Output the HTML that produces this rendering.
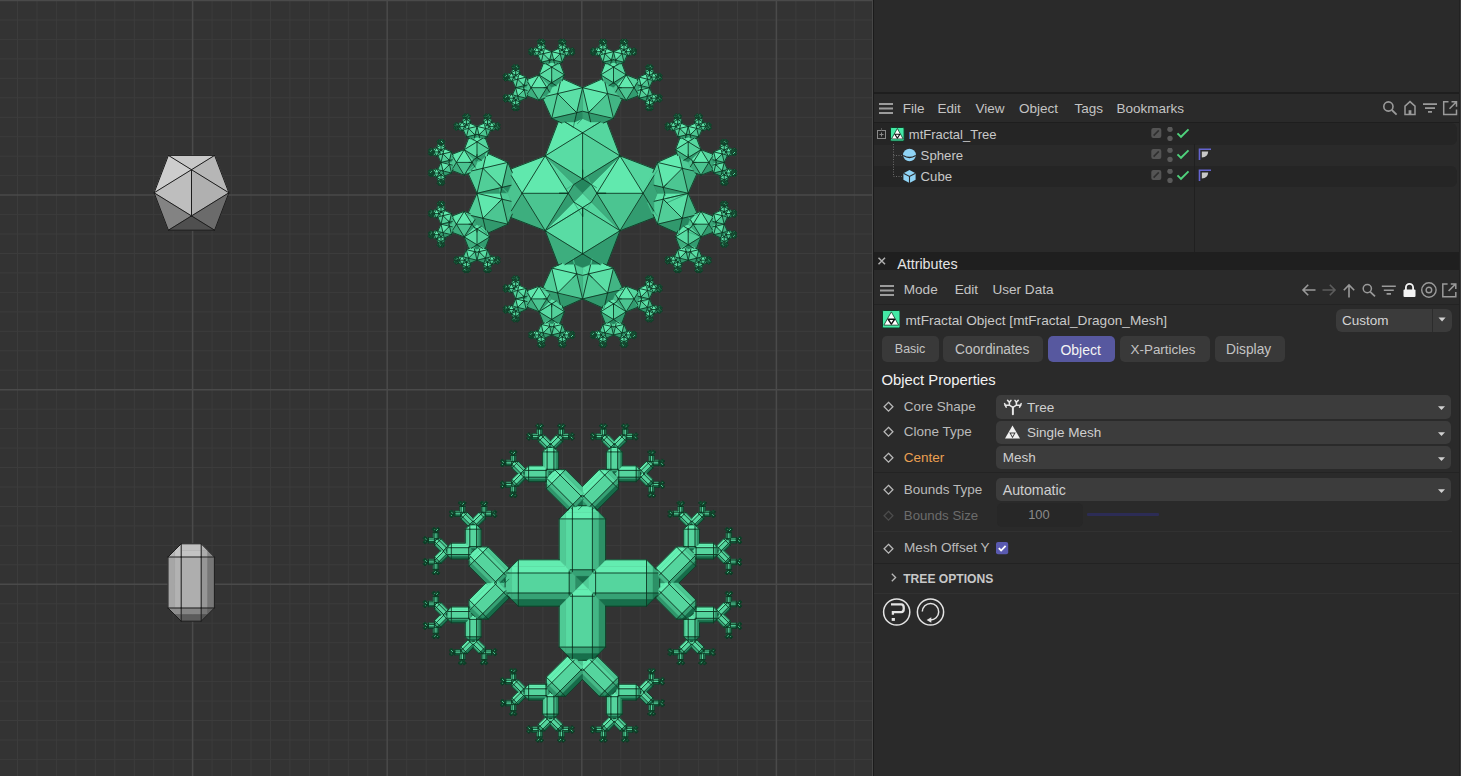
<!DOCTYPE html>
<html><head><meta charset="utf-8"><style>html,body{margin:0;padding:0;width:1461px;height:776px;overflow:hidden;background:#2a2a2a;font-family:"Liberation Sans",sans-serif;}
#vp{position:absolute;left:0;top:0;width:872px;height:776px;overflow:hidden;}
.t{position:absolute;white-space:nowrap;line-height:1;}
.r{position:absolute;display:block;}
</style></head>
<body><div id="vp"><svg width="873" height="776" viewBox="0 0 873 776" style="position:absolute;left:0;top:0"><rect width="873" height="776" fill="#333333"/><path d="M17.5 0V776M37 0V776M56.4 0V776M75.9 0V776M95.3 0V776M114.8 0V776M134.3 0V776M153.7 0V776M173.2 0V776M212.1 0V776M231.6 0V776M251 0V776M270.5 0V776M289.9 0V776M309.4 0V776M328.9 0V776M348.3 0V776M367.8 0V776M406.7 0V776M426.2 0V776M445.6 0V776M465.1 0V776M484.5 0V776M504 0V776M523.5 0V776M542.9 0V776M562.4 0V776M601.3 0V776M620.8 0V776M640.2 0V776M659.7 0V776M679.1 0V776M698.6 0V776M718.1 0V776M737.5 0V776M757 0V776M795.9 0V776M815.4 0V776M834.8 0V776M854.3 0V776M0 20H873M0 39.4H873M0 58.9H873M0 78.3H873M0 97.8H873M0 117.3H873M0 136.7H873M0 156.2H873M0 175.6H873M0 214.6H873M0 234H873M0 253.5H873M0 272.9H873M0 292.4H873M0 311.9H873M0 331.3H873M0 350.8H873M0 370.2H873M0 409.2H873M0 428.6H873M0 448.1H873M0 467.5H873M0 487H873M0 506.5H873M0 525.9H873M0 545.4H873M0 564.8H873M0 603.8H873M0 623.2H873M0 642.7H873M0 662.1H873M0 681.6H873M0 701.1H873M0 720.5H873M0 740H873M0 759.4H873" stroke="#3c3c3c" stroke-width="1"/><path d="M192.6 0V776M387.2 0V776M581.8 0V776M776.4 0V776M0 0.5H873M0 195.1H873M0 389.7H873M0 584.3H873" stroke="#4a4a4a" stroke-width="1.5"/><path fill="#c8c8c8" stroke="#c8c8c8" stroke-width="0.5" d="M191.5 169.7 168.4 155.4 214.6 155.4z"/><path fill="#cdcdcd" stroke="#cdcdcd" stroke-width="0.5" d="M191.5 169.7 168.4 155.4 154.1 192.8z"/><path fill="#b6b6b6" stroke="#b6b6b6" stroke-width="0.5" d="M191.5 169.7 214.6 155.4 228.9 192.8z"/><path fill="#bebebe" stroke="#bebebe" stroke-width="0.5" d="M191.5 169.7 154.1 192.8 191.5 215.9z"/><path fill="#b0b0b0" stroke="#b0b0b0" stroke-width="0.5" d="M191.5 169.7 228.9 192.8 191.5 215.9z"/><path fill="#838383" stroke="#838383" stroke-width="0.5" d="M191.5 215.9 154.1 192.8 168.4 230.2z"/><path fill="#6b6b6b" stroke="#6b6b6b" stroke-width="0.5" d="M191.5 215.9 228.9 192.8 214.6 230.2z"/><path fill="#4f4f4f" stroke="#4f4f4f" stroke-width="0.5" d="M191.5 215.9 168.4 230.2 214.6 230.2z"/><path fill="none" stroke="#1c1c1c" stroke-width="1" stroke-linecap="round" d="M168.4 230.2L214.6 230.2M168.4 230.2L191.5 215.9M168.4 230.2L154.1 192.8M214.6 230.2L191.5 215.9M214.6 230.2L228.9 192.8M191.5 215.9L191.5 169.7M191.5 215.9L154.1 192.8M191.5 215.9L228.9 192.8M191.5 169.7L154.1 192.8M191.5 169.7L228.9 192.8M191.5 169.7L168.4 155.4M191.5 169.7L214.6 155.4M154.1 192.8L168.4 155.4M228.9 192.8L214.6 155.4M168.4 155.4L214.6 155.4"/><path fill="#a6a6a6" stroke="#a6a6a6" stroke-width="0.5" d="M168 557 174.6 557 174.6 608 168 608z"/><path fill="#b2b2b2" stroke="#b2b2b2" stroke-width="0.5" d="M174.6 557 181.2 557 181.2 608 174.6 608z"/><path fill="#c0c0c0" stroke="#c0c0c0" stroke-width="0.5" d="M181.2 543.8 201.2 543.8 201.2 550.4 181.2 550.4z"/><path fill="#c3c3c3" stroke="#c3c3c3" stroke-width="0.5" d="M181.2 550.4 201.2 550.4 201.2 557 181.2 557z"/><path fill="#aeaeae" stroke="#aeaeae" stroke-width="0.5" d="M181.2 557 201.2 557 201.2 608 181.2 608z"/><path fill="#858585" stroke="#858585" stroke-width="0.5" d="M181.2 608 201.2 608 201.2 614.6 181.2 614.6z"/><path fill="#5c5c5c" stroke="#5c5c5c" stroke-width="0.5" d="M181.2 614.6 201.2 614.6 201.2 621.2 181.2 621.2z"/><path fill="#969696" stroke="#969696" stroke-width="0.5" d="M201.2 557 207.8 557 207.8 608 201.2 608z"/><path fill="#777777" stroke="#777777" stroke-width="0.5" d="M207.8 557 214.4 557 214.4 608 207.8 608z"/><path fill="#c5c5c5" stroke="#c5c5c5" stroke-width="0.5" d="M181.2 557 174.6 557 181.2 550.4zM181.2 550.4 174.6 550.4 181.2 543.8zM174.6 557 174.6 550.4 181.2 550.4z"/><path fill="#b6b6b6" stroke="#b6b6b6" stroke-width="0.5" d="M174.6 557 168 557 174.6 550.4z"/><path fill="#acacac" stroke="#acacac" stroke-width="0.5" d="M201.2 557 207.8 557 201.2 550.4zM207.8 557 207.8 550.4 201.2 550.4z"/><path fill="#898989" stroke="#898989" stroke-width="0.5" d="M207.8 557 214.4 557 207.8 550.4z"/><path fill="#b3b3b3" stroke="#b3b3b3" stroke-width="0.5" d="M201.2 550.4 207.8 550.4 201.2 543.8z"/><path fill="#8f8f8f" stroke="#8f8f8f" stroke-width="0.5" d="M181.2 608 174.6 608 181.2 614.6zM174.6 608 168 608 174.6 614.6zM174.6 608 174.6 614.6 181.2 614.6z"/><path fill="#666666" stroke="#666666" stroke-width="0.5" d="M181.2 614.6 174.6 614.6 181.2 621.2z"/><path fill="#757575" stroke="#757575" stroke-width="0.5" d="M201.2 608 207.8 608 201.2 614.6zM207.8 608 207.8 614.6 201.2 614.6z"/><path fill="#636363" stroke="#636363" stroke-width="0.5" d="M207.8 608 214.4 608 207.8 614.6z"/><path fill="#545454" stroke="#545454" stroke-width="0.5" d="M201.2 614.6 207.8 614.6 201.2 621.2z"/><path fill="none" stroke="#1c1c1c" stroke-width="1" stroke-linecap="round" d="M181.2 557L201.2 557M201.2 557L201.2 608M201.2 608L181.2 608M181.2 608L181.2 557M168 557L181.2 557M201.2 557L214.4 557M168 608L181.2 608M201.2 608L214.4 608M181.2 543.8L181.2 557M201.2 543.8L201.2 557M181.2 621.2L181.2 608M201.2 621.2L201.2 608M168 557L168 608M214.4 557L214.4 608M181.2 543.8L201.2 543.8M181.2 621.2L201.2 621.2M168 557L181.2 543.8M201.2 543.8L214.4 557M168 608L181.2 621.2M201.2 621.2L214.4 608"/><defs><g id="ig0" stroke="#0f3a25" stroke-linejoin="round"><path d="M0 -1 -1 -1.618 1 -1.618z" fill="#5ee4aa"/><path d="M0 -1 -1 -1.618 -1.618 0z" fill="#60e8ad"/><path d="M0 -1 1 -1.618 1.618 0z" fill="#55d69f"/><path d="M0 -1 -1.618 0 0 1z" fill="#59dca4"/><path d="M0 -1 1.618 0 0 1z" fill="#53d19b"/><path d="M0 1 -1.618 0 -1 1.618z" fill="#3dae7e"/><path d="M0 1 1.618 0 1 1.618z" fill="#329c70"/><path d="M0 1 -1 1.618 1 1.618z" fill="#25865e"/></g><g id="bg0" stroke="#0f3a25" stroke-linejoin="round"><path d="M-1 -1.097 -0.716 -1.097 -0.716 1.097 -1 1.097z" fill="#4fca95"/><path d="M-0.716 -1.097 -0.431 -1.097 -0.431 1.097 -0.716 1.097z" fill="#58daa2"/><path d="M-0.431 -1.666 0.431 -1.666 0.431 -1.381 -0.431 -1.381z" fill="#63ecb0"/><path d="M-0.431 -1.381 0.431 -1.381 0.431 -1.097 -0.431 -1.097z" fill="#64eeb2"/><path d="M-0.431 -1.097 0.431 -1.097 0.431 1.097 -0.431 1.097z" fill="#55d59e"/><path d="M-0.431 1.097 0.431 1.097 0.431 1.381 -0.431 1.381z" fill="#36a275"/><path d="M-0.431 1.381 0.431 1.381 0.431 1.666 -0.431 1.666z" fill="#176f4b"/><path d="M0.431 -1.097 0.716 -1.097 0.716 1.097 0.431 1.097z" fill="#43b685"/><path d="M0.716 -1.097 1 -1.097 1 1.097 0.716 1.097z" fill="#2c9066"/><path d="M-0.431 -1.097 -0.716 -1.097 -0.431 -1.381z" fill="#66f2b5"/><path d="M-0.716 -1.097 -1 -1.097 -0.716 -1.381z" fill="#5bdea5"/><path d="M-0.431 -1.381 -0.716 -1.381 -0.431 -1.666z" fill="#66f1b5"/><path d="M-0.716 -1.097 -0.716 -1.381 -0.431 -1.381z" fill="#66f2b5"/><path d="M0.431 -1.097 0.716 -1.097 0.431 -1.381z" fill="#53d29b"/><path d="M0.716 -1.097 1 -1.097 0.716 -1.381z" fill="#39a779"/><path d="M0.431 -1.381 0.716 -1.381 0.431 -1.666z" fill="#58dba2"/><path d="M0.716 -1.097 0.716 -1.381 0.431 -1.381z" fill="#53d29b"/><path d="M-0.431 1.097 -0.716 1.097 -0.431 1.381z" fill="#3dae7e"/><path d="M-0.716 1.097 -1 1.097 -0.716 1.381z" fill="#3eae7f"/><path d="M-0.431 1.381 -0.716 1.381 -0.431 1.666z" fill="#1f7b55"/><path d="M-0.716 1.097 -0.716 1.381 -0.431 1.381z" fill="#3dae7e"/><path d="M0.431 1.097 0.716 1.097 0.431 1.381z" fill="#2a8e64"/><path d="M0.716 1.097 1 1.097 0.716 1.381z" fill="#1c7752"/><path d="M0.431 1.381 0.716 1.381 0.431 1.666z" fill="#116443"/><path d="M0.716 1.097 0.716 1.381 0.431 1.381z" fill="#2a8e64"/></g><g id="ig45" stroke="#0f3a25" stroke-linejoin="round"><path d="M0.707 -0.707 0.437 -1.851 1.851 -0.437z" fill="#4fcc97"/><path d="M0.707 -0.707 0.437 -1.851 -1.144 -1.144z" fill="#62ebb0"/><path d="M0.707 -0.707 1.851 -0.437 1.144 1.144z" fill="#42b584"/><path d="M0.707 -0.707 -1.144 -1.144 -0.707 0.707z" fill="#60e7ad"/><path d="M0.707 -0.707 1.144 1.144 -0.707 0.707z" fill="#4cc692"/><path d="M-0.707 0.707 -1.144 -1.144 -1.851 0.437z" fill="#51cf99"/><path d="M-0.707 0.707 1.144 1.144 -0.437 1.851z" fill="#31996d"/><path d="M-0.707 0.707 -1.851 0.437 -0.437 1.851z" fill="#349e71"/></g><g id="bg45" stroke="#0f3a25" stroke-linejoin="round"><path d="M0.069 -1.483 0.270 -1.282 -1.282 0.270 -1.483 0.069z" fill="#64eeb2"/><path d="M0.270 -1.282 0.471 -1.080 -1.080 0.471 -1.282 0.270z" fill="#65f0b3"/><path d="M0.873 -1.483 1.483 -0.873 1.282 -0.672 0.672 -1.282z" fill="#4bc591"/><path d="M0.672 -1.282 1.282 -0.672 1.080 -0.471 0.471 -1.080z" fill="#56d79f"/><path d="M0.471 -1.080 1.080 -0.471 -0.471 1.080 -1.080 0.471z" fill="#55d59e"/><path d="M-1.080 0.471 -0.471 1.080 -0.672 1.282 -1.282 0.672z" fill="#45ba88"/><path d="M-1.282 0.672 -0.672 1.282 -0.873 1.483 -1.483 0.873z" fill="#2f966b"/><path d="M1.080 -0.471 1.282 -0.270 -0.270 1.282 -0.471 1.080z" fill="#35a174"/><path d="M1.282 -0.270 1.483 -0.069 -0.069 1.483 -0.270 1.282z" fill="#166d4a"/><path d="M0.471 -1.080 0.270 -1.282 0.672 -1.282z" fill="#65f0b4"/><path d="M0.270 -1.282 0.069 -1.483 0.471 -1.483z" fill="#66f1b5"/><path d="M0.672 -1.282 0.471 -1.483 0.873 -1.483z" fill="#58daa2"/><path d="M0.270 -1.282 0.471 -1.483 0.672 -1.282z" fill="#65f0b4"/><path d="M1.080 -0.471 1.282 -0.270 1.282 -0.672z" fill="#3ba97b"/><path d="M1.282 -0.270 1.483 -0.069 1.483 -0.471z" fill="#1c7651"/><path d="M1.282 -0.672 1.483 -0.471 1.483 -0.873z" fill="#3aa87a"/><path d="M1.282 -0.270 1.483 -0.471 1.282 -0.672z" fill="#3ba97b"/><path d="M-1.080 0.471 -1.282 0.270 -1.282 0.672z" fill="#56d69f"/><path d="M-1.282 0.270 -1.483 0.069 -1.483 0.471z" fill="#5bdfa6"/><path d="M-1.282 0.672 -1.483 0.471 -1.483 0.873z" fill="#3dad7e"/><path d="M-1.282 0.270 -1.483 0.471 -1.282 0.672z" fill="#56d69f"/><path d="M-0.471 1.080 -0.270 1.282 -0.672 1.282z" fill="#2b9066"/><path d="M-0.270 1.282 -0.069 1.483 -0.471 1.483z" fill="#116443"/><path d="M-0.672 1.282 -0.471 1.483 -0.873 1.483z" fill="#1f7b56"/><path d="M-0.270 1.282 -0.471 1.483 -0.672 1.282z" fill="#2b9066"/></g><g id="ig90" stroke="#0f3a25" stroke-linejoin="round"><path d="M1 -0 1.618 -1 1.618 1z" fill="#39a678"/><path d="M1 -0 1.618 -1 -0 -1.618z" fill="#55d69f"/><path d="M1 -0 1.618 1 0 1.618z" fill="#329c70"/><path d="M1 -0 -0 -1.618 -1 0z" fill="#61e9ae"/><path d="M1 -0 0 1.618 -1 0z" fill="#4bc591"/><path d="M-1 0 -0 -1.618 -1.618 -1z" fill="#60e8ad"/><path d="M-1 0 0 1.618 -1.618 1z" fill="#3dae7e"/><path d="M-1 0 -1.618 -1 -1.618 1z" fill="#4bc490"/></g><g id="bg90" stroke="#0f3a25" stroke-linejoin="round"><path d="M1.097 -1 1.097 -0.716 -1.097 -0.715 -1.097 -1z" fill="#63ecb0"/><path d="M1.097 -0.716 1.097 -0.431 -1.097 -0.431 -1.097 -0.715z" fill="#64eeb2"/><path d="M1.666 -0.431 1.666 0.431 1.381 0.431 1.381 -0.431z" fill="#2c9066"/><path d="M1.381 -0.431 1.381 0.431 1.097 0.431 1.097 -0.431z" fill="#43b685"/><path d="M1.097 -0.431 1.097 0.431 -1.097 0.431 -1.097 -0.431z" fill="#55d59e"/><path d="M-1.097 -0.431 -1.097 0.431 -1.381 0.431 -1.381 -0.431z" fill="#58daa2"/><path d="M-1.381 -0.431 -1.381 0.431 -1.666 0.431 -1.666 -0.431z" fill="#4fca95"/><path d="M1.097 0.431 1.097 0.715 -1.097 0.716 -1.097 0.431z" fill="#36a275"/><path d="M1.097 0.715 1.097 1 -1.097 1 -1.097 0.716z" fill="#176f4b"/><path d="M1.097 -0.431 1.097 -0.716 1.381 -0.431z" fill="#53d29b"/><path d="M1.097 -0.716 1.097 -1 1.381 -0.716z" fill="#58dba2"/><path d="M1.381 -0.431 1.381 -0.716 1.666 -0.431z" fill="#39a779"/><path d="M1.097 -0.716 1.381 -0.716 1.381 -0.431z" fill="#53d29b"/><path d="M1.097 0.431 1.097 0.715 1.381 0.431z" fill="#2a8e64"/><path d="M1.097 0.715 1.097 1 1.381 0.715z" fill="#116443"/><path d="M1.381 0.431 1.381 0.715 1.666 0.431z" fill="#1c7752"/><path d="M1.097 0.715 1.381 0.715 1.381 0.431z" fill="#2a8e64"/><path d="M-1.097 -0.431 -1.097 -0.715 -1.381 -0.431z" fill="#66f2b5"/><path d="M-1.097 -0.715 -1.097 -1 -1.381 -0.715z" fill="#66f1b5"/><path d="M-1.381 -0.431 -1.381 -0.715 -1.666 -0.431z" fill="#5bdea5"/><path d="M-1.097 -0.715 -1.381 -0.715 -1.381 -0.431z" fill="#66f2b5"/><path d="M-1.097 0.431 -1.097 0.716 -1.381 0.431z" fill="#3dae7e"/><path d="M-1.097 0.716 -1.097 1 -1.381 0.716z" fill="#1f7b55"/><path d="M-1.381 0.431 -1.381 0.716 -1.666 0.431z" fill="#3eae7f"/><path d="M-1.097 0.716 -1.381 0.716 -1.381 0.431z" fill="#3dae7e"/></g><g id="ig135" stroke="#0f3a25" stroke-linejoin="round"><path d="M0.707 0.707 1.851 0.437 0.437 1.851z" fill="#278961"/><path d="M0.707 0.707 1.851 0.437 1.144 -1.144z" fill="#42b584"/><path d="M0.707 0.707 0.437 1.851 -1.144 1.144z" fill="#31996d"/><path d="M0.707 0.707 1.144 -1.144 -0.707 -0.707z" fill="#5bdfa6"/><path d="M0.707 0.707 -1.144 1.144 -0.707 -0.707z" fill="#51ce98"/><path d="M-0.707 -0.707 1.144 -1.144 -0.437 -1.851z" fill="#62ebb0"/><path d="M-0.707 -0.707 -1.144 1.144 -1.851 -0.437z" fill="#51cf99"/><path d="M-0.707 -0.707 -0.437 -1.851 -1.851 -0.437z" fill="#5ce1a7"/></g><g id="bg135" stroke="#0f3a25" stroke-linejoin="round"><path d="M1.483 0.069 1.282 0.270 -0.270 -1.282 -0.069 -1.483z" fill="#4bc591"/><path d="M1.282 0.270 1.080 0.471 -0.471 -1.080 -0.270 -1.282z" fill="#56d79f"/><path d="M1.483 0.873 0.873 1.483 0.672 1.282 1.282 0.672z" fill="#166d4a"/><path d="M1.282 0.672 0.672 1.282 0.471 1.080 1.080 0.471z" fill="#35a174"/><path d="M1.080 0.471 0.471 1.080 -1.080 -0.471 -0.471 -1.080z" fill="#55d59e"/><path d="M-0.471 -1.080 -1.080 -0.471 -1.282 -0.672 -0.672 -1.282z" fill="#65f0b3"/><path d="M-0.672 -1.282 -1.282 -0.672 -1.483 -0.873 -0.873 -1.483z" fill="#64eeb2"/><path d="M0.471 1.080 0.270 1.282 -1.282 -0.270 -1.080 -0.471z" fill="#45ba88"/><path d="M0.270 1.282 0.069 1.483 -1.483 -0.069 -1.282 -0.270z" fill="#2f966b"/><path d="M1.080 0.471 1.282 0.270 1.282 0.672z" fill="#3ba97b"/><path d="M1.282 0.270 1.483 0.069 1.483 0.471z" fill="#3aa87a"/><path d="M1.282 0.672 1.483 0.471 1.483 0.873z" fill="#1c7651"/><path d="M1.282 0.270 1.483 0.471 1.282 0.672z" fill="#3ba97b"/><path d="M0.471 1.080 0.270 1.282 0.672 1.282z" fill="#2b9066"/><path d="M0.270 1.282 0.069 1.483 0.471 1.483z" fill="#1f7b56"/><path d="M0.672 1.282 0.471 1.483 0.873 1.483z" fill="#116443"/><path d="M0.270 1.282 0.471 1.483 0.672 1.282z" fill="#2b9066"/><path d="M-0.471 -1.080 -0.270 -1.282 -0.672 -1.282z" fill="#65f0b4"/><path d="M-0.270 -1.282 -0.069 -1.483 -0.471 -1.483z" fill="#58daa2"/><path d="M-0.672 -1.282 -0.471 -1.483 -0.873 -1.483z" fill="#66f1b5"/><path d="M-0.270 -1.282 -0.471 -1.483 -0.672 -1.282z" fill="#65f0b4"/><path d="M-1.080 -0.471 -1.282 -0.270 -1.282 -0.672z" fill="#56d69f"/><path d="M-1.282 -0.270 -1.483 -0.069 -1.483 -0.471z" fill="#3dad7e"/><path d="M-1.282 -0.672 -1.483 -0.471 -1.483 -0.873z" fill="#5bdfa6"/><path d="M-1.282 -0.270 -1.483 -0.471 -1.282 -0.672z" fill="#56d69f"/></g><g id="ig180" stroke="#0f3a25" stroke-linejoin="round"><path d="M0 1 1 1.618 -1 1.618z" fill="#25865e"/><path d="M0 1 1 1.618 1.618 -0z" fill="#329c70"/><path d="M0 1 -1 1.618 -1.618 0z" fill="#3dae7e"/><path d="M0 1 1.618 -0 -0 -1z" fill="#53d19b"/><path d="M0 1 -1.618 0 -0 -1z" fill="#59dca4"/><path d="M-0 -1 1.618 -0 1 -1.618z" fill="#55d69f"/><path d="M-0 -1 -1.618 0 -1 -1.618z" fill="#60e8ad"/><path d="M-0 -1 1 -1.618 -1 -1.618z" fill="#5ee4aa"/></g><g id="bg180" stroke="#0f3a25" stroke-linejoin="round"><path d="M1 1.097 0.716 1.097 0.715 -1.097 1 -1.097z" fill="#2c9066"/><path d="M0.716 1.097 0.431 1.097 0.431 -1.097 0.715 -1.097z" fill="#43b685"/><path d="M0.431 1.666 -0.431 1.666 -0.431 1.381 0.431 1.381z" fill="#176f4b"/><path d="M0.431 1.381 -0.431 1.381 -0.431 1.097 0.431 1.097z" fill="#36a275"/><path d="M0.431 1.097 -0.431 1.097 -0.431 -1.097 0.431 -1.097z" fill="#55d59e"/><path d="M0.431 -1.097 -0.431 -1.097 -0.431 -1.381 0.431 -1.381z" fill="#64eeb2"/><path d="M0.431 -1.381 -0.431 -1.381 -0.431 -1.666 0.431 -1.666z" fill="#63ecb0"/><path d="M-0.431 1.097 -0.715 1.097 -0.716 -1.097 -0.431 -1.097z" fill="#58daa2"/><path d="M-0.715 1.097 -1 1.097 -1 -1.097 -0.716 -1.097z" fill="#4fca95"/><path d="M0.431 1.097 0.716 1.097 0.431 1.381z" fill="#2a8e64"/><path d="M0.716 1.097 1 1.097 0.716 1.381z" fill="#1c7752"/><path d="M0.431 1.381 0.716 1.381 0.431 1.666z" fill="#116443"/><path d="M0.716 1.097 0.716 1.381 0.431 1.381z" fill="#2a8e64"/><path d="M-0.431 1.097 -0.715 1.097 -0.431 1.381z" fill="#3dae7e"/><path d="M-0.715 1.097 -1 1.097 -0.715 1.381z" fill="#3eae7f"/><path d="M-0.431 1.381 -0.715 1.381 -0.431 1.666z" fill="#1f7b55"/><path d="M-0.715 1.097 -0.715 1.381 -0.431 1.381z" fill="#3dae7e"/><path d="M0.431 -1.097 0.715 -1.097 0.431 -1.381z" fill="#53d29b"/><path d="M0.715 -1.097 1 -1.097 0.715 -1.381z" fill="#39a779"/><path d="M0.431 -1.381 0.715 -1.381 0.431 -1.666z" fill="#58dba2"/><path d="M0.715 -1.097 0.715 -1.381 0.431 -1.381z" fill="#53d29b"/><path d="M-0.431 -1.097 -0.716 -1.097 -0.431 -1.381z" fill="#66f2b5"/><path d="M-0.716 -1.097 -1 -1.097 -0.716 -1.381z" fill="#5bdea5"/><path d="M-0.431 -1.381 -0.716 -1.381 -0.431 -1.666z" fill="#66f1b5"/><path d="M-0.716 -1.097 -0.716 -1.381 -0.431 -1.381z" fill="#66f2b5"/></g><g id="ig225" stroke="#0f3a25" stroke-linejoin="round"><path d="M-0.707 0.707 -0.437 1.851 -1.851 0.437z" fill="#349e71"/><path d="M-0.707 0.707 -0.437 1.851 1.144 1.144z" fill="#31996d"/><path d="M-0.707 0.707 -1.851 0.437 -1.144 -1.144z" fill="#51cf99"/><path d="M-0.707 0.707 1.144 1.144 0.707 -0.707z" fill="#4cc692"/><path d="M-0.707 0.707 -1.144 -1.144 0.707 -0.707z" fill="#60e7ad"/><path d="M0.707 -0.707 1.144 1.144 1.851 -0.437z" fill="#42b584"/><path d="M0.707 -0.707 -1.144 -1.144 0.437 -1.851z" fill="#62ebb0"/><path d="M0.707 -0.707 1.851 -0.437 0.437 -1.851z" fill="#4fcc97"/></g><g id="bg225" stroke="#0f3a25" stroke-linejoin="round"><path d="M-0.069 1.483 -0.270 1.282 1.282 -0.270 1.483 -0.069z" fill="#166d4a"/><path d="M-0.270 1.282 -0.471 1.080 1.080 -0.471 1.282 -0.270z" fill="#35a174"/><path d="M-0.873 1.483 -1.483 0.873 -1.282 0.672 -0.672 1.282z" fill="#2f966b"/><path d="M-0.672 1.282 -1.282 0.672 -1.080 0.471 -0.471 1.080z" fill="#45ba88"/><path d="M-0.471 1.080 -1.080 0.471 0.471 -1.080 1.080 -0.471z" fill="#55d59e"/><path d="M1.080 -0.471 0.471 -1.080 0.672 -1.282 1.282 -0.672z" fill="#56d79f"/><path d="M1.282 -0.672 0.672 -1.282 0.873 -1.483 1.483 -0.873z" fill="#4bc591"/><path d="M-1.080 0.471 -1.282 0.270 0.270 -1.282 0.471 -1.080z" fill="#65f0b3"/><path d="M-1.282 0.270 -1.483 0.069 0.069 -1.483 0.270 -1.282z" fill="#64eeb2"/><path d="M-0.471 1.080 -0.270 1.282 -0.672 1.282z" fill="#2b9066"/><path d="M-0.270 1.282 -0.069 1.483 -0.471 1.483z" fill="#116443"/><path d="M-0.672 1.282 -0.471 1.483 -0.873 1.483z" fill="#1f7b56"/><path d="M-0.270 1.282 -0.471 1.483 -0.672 1.282z" fill="#2b9066"/><path d="M-1.080 0.471 -1.282 0.270 -1.282 0.672z" fill="#56d69f"/><path d="M-1.282 0.270 -1.483 0.069 -1.483 0.471z" fill="#5bdfa6"/><path d="M-1.282 0.672 -1.483 0.471 -1.483 0.873z" fill="#3dad7e"/><path d="M-1.282 0.270 -1.483 0.471 -1.282 0.672z" fill="#56d69f"/><path d="M1.080 -0.471 1.282 -0.270 1.282 -0.672z" fill="#3ba97b"/><path d="M1.282 -0.270 1.483 -0.069 1.483 -0.471z" fill="#1c7651"/><path d="M1.282 -0.672 1.483 -0.471 1.483 -0.873z" fill="#3aa87a"/><path d="M1.282 -0.270 1.483 -0.471 1.282 -0.672z" fill="#3ba97b"/><path d="M0.471 -1.080 0.270 -1.282 0.672 -1.282z" fill="#65f0b4"/><path d="M0.270 -1.282 0.069 -1.483 0.471 -1.483z" fill="#66f1b5"/><path d="M0.672 -1.282 0.471 -1.483 0.873 -1.483z" fill="#58daa2"/><path d="M0.270 -1.282 0.471 -1.483 0.672 -1.282z" fill="#65f0b4"/></g><g id="ig270" stroke="#0f3a25" stroke-linejoin="round"><path d="M-1 0 -1.618 1 -1.618 -1z" fill="#4bc490"/><path d="M-1 0 -1.618 1 0 1.618z" fill="#3dae7e"/><path d="M-1 0 -1.618 -1 -0 -1.618z" fill="#60e8ad"/><path d="M-1 0 0 1.618 1 -0z" fill="#4bc591"/><path d="M-1 0 -0 -1.618 1 -0z" fill="#61e9ae"/><path d="M1 -0 0 1.618 1.618 1z" fill="#329c70"/><path d="M1 -0 -0 -1.618 1.618 -1z" fill="#55d69f"/><path d="M1 -0 1.618 1 1.618 -1z" fill="#39a678"/></g><g id="bg270" stroke="#0f3a25" stroke-linejoin="round"><path d="M-1.097 1 -1.097 0.716 1.097 0.715 1.097 1z" fill="#176f4b"/><path d="M-1.097 0.716 -1.097 0.431 1.097 0.431 1.097 0.715z" fill="#36a275"/><path d="M-1.666 0.431 -1.666 -0.431 -1.381 -0.431 -1.381 0.431z" fill="#4fca95"/><path d="M-1.381 0.431 -1.381 -0.431 -1.097 -0.431 -1.097 0.431z" fill="#58daa2"/><path d="M-1.097 0.431 -1.097 -0.431 1.097 -0.431 1.097 0.431z" fill="#55d59e"/><path d="M1.097 0.431 1.097 -0.431 1.381 -0.431 1.381 0.431z" fill="#43b685"/><path d="M1.381 0.431 1.381 -0.431 1.666 -0.431 1.666 0.431z" fill="#2c9066"/><path d="M-1.097 -0.431 -1.097 -0.715 1.097 -0.716 1.097 -0.431z" fill="#64eeb2"/><path d="M-1.097 -0.715 -1.097 -1 1.097 -1 1.097 -0.716z" fill="#63ecb0"/><path d="M-1.097 0.431 -1.097 0.716 -1.381 0.431z" fill="#3dae7e"/><path d="M-1.097 0.716 -1.097 1 -1.381 0.716z" fill="#1f7b55"/><path d="M-1.381 0.431 -1.381 0.716 -1.666 0.431z" fill="#3eae7f"/><path d="M-1.097 0.716 -1.381 0.716 -1.381 0.431z" fill="#3dae7e"/><path d="M-1.097 -0.431 -1.097 -0.715 -1.381 -0.431z" fill="#66f2b5"/><path d="M-1.097 -0.715 -1.097 -1 -1.382 -0.715z" fill="#66f1b5"/><path d="M-1.381 -0.431 -1.382 -0.715 -1.666 -0.431z" fill="#5bdea5"/><path d="M-1.097 -0.715 -1.382 -0.715 -1.381 -0.431z" fill="#66f2b5"/><path d="M1.097 0.431 1.097 0.715 1.381 0.431z" fill="#2a8e64"/><path d="M1.097 0.715 1.097 1 1.382 0.715z" fill="#116443"/><path d="M1.381 0.431 1.382 0.715 1.666 0.431z" fill="#1c7752"/><path d="M1.097 0.715 1.382 0.715 1.381 0.431z" fill="#2a8e64"/><path d="M1.097 -0.431 1.097 -0.716 1.381 -0.431z" fill="#53d29b"/><path d="M1.097 -0.716 1.097 -1 1.381 -0.716z" fill="#58dba2"/><path d="M1.381 -0.431 1.381 -0.716 1.666 -0.431z" fill="#39a779"/><path d="M1.097 -0.716 1.381 -0.716 1.381 -0.431z" fill="#53d29b"/></g><g id="ig315" stroke="#0f3a25" stroke-linejoin="round"><path d="M-0.707 -0.707 -1.851 -0.437 -0.437 -1.851z" fill="#5ce1a7"/><path d="M-0.707 -0.707 -1.851 -0.437 -1.144 1.144z" fill="#51cf99"/><path d="M-0.707 -0.707 -0.437 -1.851 1.144 -1.144z" fill="#62ebb0"/><path d="M-0.707 -0.707 -1.144 1.144 0.707 0.707z" fill="#51ce98"/><path d="M-0.707 -0.707 1.144 -1.144 0.707 0.707z" fill="#5bdfa6"/><path d="M0.707 0.707 -1.144 1.144 0.437 1.851z" fill="#31996d"/><path d="M0.707 0.707 1.144 -1.144 1.851 0.437z" fill="#42b584"/><path d="M0.707 0.707 0.437 1.851 1.851 0.437z" fill="#278961"/></g><g id="bg315" stroke="#0f3a25" stroke-linejoin="round"><path d="M-1.483 -0.069 -1.282 -0.270 0.270 1.282 0.069 1.483z" fill="#2f966b"/><path d="M-1.282 -0.270 -1.080 -0.471 0.471 1.080 0.270 1.282z" fill="#45ba88"/><path d="M-1.483 -0.873 -0.873 -1.483 -0.672 -1.282 -1.282 -0.672z" fill="#64eeb2"/><path d="M-1.282 -0.672 -0.672 -1.282 -0.471 -1.080 -1.080 -0.471z" fill="#65f0b3"/><path d="M-1.080 -0.471 -0.471 -1.080 1.080 0.471 0.471 1.080z" fill="#55d59e"/><path d="M0.471 1.080 1.080 0.471 1.282 0.672 0.672 1.282z" fill="#35a174"/><path d="M0.672 1.282 1.282 0.672 1.483 0.873 0.873 1.483z" fill="#166d4a"/><path d="M-0.471 -1.080 -0.270 -1.282 1.282 0.270 1.080 0.471z" fill="#56d79f"/><path d="M-0.270 -1.282 -0.069 -1.483 1.483 0.069 1.282 0.270z" fill="#4bc591"/><path d="M-1.080 -0.471 -1.282 -0.270 -1.282 -0.672z" fill="#56d69f"/><path d="M-1.282 -0.270 -1.483 -0.069 -1.483 -0.471z" fill="#3dad7e"/><path d="M-1.282 -0.672 -1.483 -0.471 -1.483 -0.873z" fill="#5bdfa6"/><path d="M-1.282 -0.270 -1.483 -0.471 -1.282 -0.672z" fill="#56d69f"/><path d="M-0.471 -1.080 -0.270 -1.282 -0.672 -1.282z" fill="#65f0b4"/><path d="M-0.270 -1.282 -0.069 -1.483 -0.471 -1.483z" fill="#58daa2"/><path d="M-0.672 -1.282 -0.471 -1.483 -0.873 -1.483z" fill="#66f1b5"/><path d="M-0.270 -1.282 -0.471 -1.483 -0.672 -1.282z" fill="#65f0b4"/><path d="M0.471 1.080 0.270 1.282 0.672 1.282z" fill="#2b9066"/><path d="M0.270 1.282 0.069 1.483 0.471 1.483z" fill="#1f7b56"/><path d="M0.672 1.282 0.471 1.483 0.873 1.483z" fill="#116443"/><path d="M0.270 1.282 0.471 1.483 0.672 1.282z" fill="#2b9066"/><path d="M1.080 0.471 1.282 0.270 1.282 0.672z" fill="#3ba97b"/><path d="M1.282 0.270 1.483 0.069 1.483 0.471z" fill="#3aa87a"/><path d="M1.282 0.672 1.483 0.471 1.483 0.873z" fill="#1c7651"/><path d="M1.282 0.270 1.483 0.471 1.282 0.672z" fill="#3ba97b"/></g></defs><path fill="#5ee4aa" stroke="#5ee4aa" stroke-width="0.5" d="M582.6 132.8 605.7 118.5 600.3 121.9 590.7 121.9 582.6 118.5 574.5 121.9 564.9 121.9 559.5 118.5zM518 98.4 517.3 98.9 515.7 98.2 514.7 99.2 514.3 99 515.7 99.9zM515.7 70.1 513 68.5 518.4 68.5zM551.7 67.1 557.8 63.3 554.5 63.3 551.7 62.2 549 63.3 549.2 62.2 549 63.3 545.7 63.3zM541.2 44.6 538.5 43 543.9 43zM562.3 44.6 559.6 43 564.9 43zM613.5 67.1 621.3 62.2 619.5 63.3 616.2 63.3 616 62.2 616.2 63.3 613.5 62.2 610.7 63.3 607.4 63.3 605.6 62.2zM602.9 44.6 600.3 43 605.6 43zM624 44.6 621.3 43 626.7 43zM649.5 70.1 646.8 68.5 652.2 68.5zM651.3 98.7 650.5 99.2 649.5 98.2 647.9 98.9 647.2 98.5 649.5 99.9zM688.2 141.8 696.1 136.9 694.3 138.1 691 138.1 690.7 136.9 691 138.1 688.2 136.9 685.5 138.1 682.2 138.1zM677.7 119.4 675 117.7 680.4 117.7zM698.8 119.4 696.1 117.7 701.4 117.7zM724.2 144.9 721.6 143.2 726.9 143.2zM725.3 174 724.2 173 722.6 173.6 724.2 174.6zM724.2 206.6 721.6 204.9 726.9 204.9zM726.1 235.2 725.3 235.7 724.2 234.7 722.6 235.4 724.2 236.4zM691.2 227.2 688.2 224.2 683.5 226.1 688.2 229zM699.8 261.2 698.8 260.2 697.1 260.9 696.6 260.5 698.8 261.9zM680 260.4 679.3 260.9 677.7 260.2 676.7 261.2 676.1 260.9 677.7 261.9zM597.1 198.6 591.4 202.1 596.9 193.3 591.4 202.1 582.6 193.3 573.8 202.1 568 198.6 582.6 207.6zM649.5 281.4 646.8 279.7 652.2 279.7zM650.5 310.5 649.5 309.5 647.9 310.1 649.5 311.1zM617.9 301 616.5 301.9 618.3 298.9 616.5 301.9 613.5 298.9 608.8 300.9 606.1 299.2 605.6 298.9 613.5 303.8zM625.6 335.6 625 336 625.7 334.9 625 336 624 334.9 622.4 335.6 621.8 335.2 624 336.6zM604.6 335.6 602.9 334.9 601.9 336 601.3 334.9 601.9 336 601.4 335.6 602.9 336.6zM556.4 300.9 551.7 298.9 548.7 301.9 551.7 303.8zM563.3 336 563.9 334.9 563.3 336 562.3 334.9 560.6 335.6 559.9 335.2 562.3 336.6zM542.8 335.6 541.2 334.9 540.2 336 541.2 336.6zM517.3 310.1 515.7 309.5 514.7 310.5 514 309.5 514.7 310.5 514 310.1 515.7 311.1zM515.7 281.4 513 279.7 518.4 279.7zM481.7 226.1 477 224.2 474 227.2 477 229zM490.2 260.2 489.4 260.7 488.5 261.2 487.5 260.2 485.9 260.9 487.5 261.9zM468.1 260.9 466.4 260.2 465.4 261.2 466.4 261.9zM442.6 235.4 441 234.7 439.9 235.7 441 236.4zM441 206.6 438.3 204.9 443.6 204.9zM442.6 173.6 441 173 439.9 174 439.3 173 439.9 174 441 174.6zM441 144.9 438.3 143.2 443.6 143.2zM477 141.8 483 138.1 479.7 138.1 479.5 136.9 479.7 138.1 477 136.9 474.2 138.1 470.9 138.1 469.1 136.9zM466.4 119.4 463.8 117.7 469.1 117.7zM487.5 119.4 484.8 117.7 490.2 117.7z"/><path fill="#60e8ad" stroke="#60e8ad" stroke-width="0.5" d="M564.9 121.9 562 123.1 558.4 121.5 545.2 155.9 582.6 132.8zM531.1 87.7 539 74.9 527.2 79.4 527.8 80.6 527.4 81.6zM511.4 102.6 515.7 99.9 514.7 99.2 511.4 102.6zM508.7 98.2 507 95.5 511.4 93.9zM508.7 77.1 507 74.5 511.4 72.8zM515.7 70.1 513 68.5 511.4 72.8zM543.9 62.2 539 74.9 551.7 67.1zM545.7 63.3 544.7 63.7 543.5 63.2 543.9 62.2zM534.2 51.7 532.5 49 536.9 47.3zM541.2 44.6 538.5 43 536.9 47.3zM562.3 44.6 559.6 43 557.9 47.3zM566.6 47.3 563.3 50.6 563.9 51.7zM605.6 62.2 600.7 74.9 613.5 67.1zM607.4 63.3 606.4 63.7 605.2 63.2 605.6 62.2zM595.9 51.7 594.2 49 598.6 47.3zM602.9 44.6 600.3 43 598.6 47.3zM624 44.6 621.3 43 619.6 47.3zM628.3 47.3 624.5 49.7 628.3 47.3 625 50.6 625.7 51.7zM626.2 74.9 616.5 84.7 618.3 87.7zM649.5 70.1 646.8 68.5 645.1 72.8zM653.8 72.8 649.5 74.5 653.8 72.8 650 75.2 653.8 72.8 650.5 76.1 651.2 77.1zM653.8 93.9 651.8 94.7 651.5 95.2 650.2 96.6 649.6 95.7 649.5 95.5 651.2 98.2zM645.1 102.6 649.5 99.9 647.9 98.9 646.5 100.2 645.9 100.5zM620 155.9 591.4 184.5 596.9 193.3zM680.3 136.9 675.5 149.7 688.2 141.8zM682.2 138.1 681.2 138.5 680 137.9 680.3 136.9zM670.7 126.4 669 123.7 673.3 122.1zM677.7 119.4 675 117.7 673.3 122.1zM698.8 119.4 696.1 117.7 694.4 122.1zM703.1 122.1 699.2 124.5 703.1 122.1 699.8 125.4 700.4 126.4zM701 149.7 688.2 154.6 701 149.7 691.2 159.4 689.7 156.9 693.1 162.4zM724.2 144.9 721.6 143.2 719.9 147.6zM728.6 147.6 724.2 149.2 728.6 147.6 725.3 150.9 724.9 150.2 725.9 151.9zM728.6 168.6 726.5 169.4 726.3 170 724.9 171.3 725.9 173zM719.9 177.3 724.2 174.6 721.6 173 721.7 173.1 722.6 173.6 721.3 175 720.7 175.2zM701 211.4 688.2 216.3 694.9 213.8 694.1 215.5 688.5 216.8 694.1 215.5 690.2 219.5 693.1 224.2zM724.2 206.6 721.6 204.9 719.9 209.3zM728.6 209.3 725.3 212.6 725.9 213.6zM728.6 230.3 726.5 231.1 726.3 231.7 724.9 233.1 725.9 234.7zM719.9 239 724.2 236.4 721.6 234.7 721.7 234.8 722.6 235.4 721.3 236.7 720.7 237zM675.5 236.9 688.2 229 681.4 224.8 683.5 226.1 679.5 230.1 677.8 230.8 680.3 224.2zM703.1 255.8 698.8 257.5 700.4 260.2zM701 256.6 700.8 257.2 699.4 258.6 698.9 257.7 698.8 257.5zM694.4 264.5 698.8 261.9 696.1 260.2 696.2 260.3 695.8 262.2 695.2 262.5zM697.1 260.9 695.8 262.2 696.2 260.3zM673.3 264.5 677.7 261.9 675 260.2 675.8 260.7 673.3 264.5zM676.7 261.2 673.3 264.5 675.8 260.7zM670.7 260.2 669 257.5 673.3 255.8zM545.2 230.7 582.6 207.6 573.8 202.1 545.2 230.7zM626.2 286.2 620.1 288.5 619.4 290.2 613.8 291.6 619.4 290.2 615.4 294.2 618.3 298.9zM649.5 281.4 646.8 279.7 645.1 284zM653.8 284 650.5 287.4 650 286.5 649.5 285.7 651.2 288.4zM653.8 305.1 651.8 305.9 651.5 306.5 649.6 306.9 649.5 306.8 651.2 309.5zM651.5 306.5 650.2 307.8 649.6 306.9zM645.1 313.8 649.5 311.1 647.9 310.1 646.5 311.5 645.9 311.7 646.8 309.5zM600.7 311.7 613.5 303.8 608.8 300.9 604.8 304.8 603.1 305.6 605.6 298.9zM628.3 330.6 626.3 331.4 626 332 624.7 333.3 625.7 334.9zM619.6 339.3 624 336.6 622.4 335.6 621 337 621.5 335.1 621 337 620.4 337.2zM598.6 339.3 602.9 336.6 600.3 334.9zM601 335.4 601.9 336 598.6 339.3 600.3 334.9zM595.9 334.9 594.2 332.3 598.6 330.6zM539 311.7 551.7 303.8 548.7 301.9 539 311.7 546 300.3 539 311.7 543.9 298.9zM566.6 330.6 564.5 331.4 564.3 332 562.4 332.4 562.3 332.3 563.9 334.9zM564.3 332 562.9 333.3 562.4 332.4zM557.9 339.3 562.3 336.6 559.6 334.9 559.7 335.1 560.6 335.6 559.3 337 558.7 337.2zM536.9 339.3 541.2 336.6 538.5 334.9 539.3 335.4 536.9 339.3zM540.2 336 536.9 339.3 539.3 335.4zM534.2 334.9 532.5 332.3 536.9 330.6zM531.1 298.9 539 286.2 527.2 290.7 527.8 291.9 527.4 292.9 526.2 291zM511.4 313.8 515.7 311.1 513 309.5 513.8 309.9 514.7 310.5 511.4 313.8zM508.7 309.5 507 306.8 511.4 305.1zM508.7 288.4 507 285.7 511.4 284zM515.7 281.4 513 279.7 511.4 284zM522.1 193.3 545.2 155.9 510.8 169.1 512.4 172.7 511.2 175.6 507.8 170.2zM464.2 236.9 477 229 474 227.2 464.2 236.9 469.1 224.2zM491.9 255.8 487.5 257.5 489.8 256.6 489.5 257.2 487.6 257.7 489.5 257.2 488.2 258.6 487.9 258.1 489.2 260.2zM483.2 264.5 487.5 261.9 485.9 260.9 484.5 262.2 484 262.5zM462.1 264.5 466.4 261.9 465.4 261.2 462.1 264.5zM459.4 260.2 457.8 257.5 462.1 255.8zM456.4 224.2 464.2 211.4 452.5 215.9 453 217.1 452.6 218.1zM436.6 239 441 236.4 439.9 235.7 436.6 239 438.3 234.7zM433.9 234.7 432.3 232 436.6 230.3zM433.9 213.6 432.3 211 436.6 209.3zM441 206.6 438.3 204.9 436.6 209.3zM456.4 162.4 464.2 149.7 452.5 154.2 453 155.4 452.6 156.4zM436.6 177.3 441 174.6 438.3 173zM439 173.4 436.6 177.3 438.3 173zM439.9 174 436.6 177.3 439 173.4zM433.9 173 432.3 170.3 436.6 168.6zM433.9 151.9 432.3 149.2 436.6 147.6zM441 144.9 438.3 143.2 436.6 147.6zM469.1 136.9 470.9 138.1 469.9 138.5 468.7 137.9 464.2 149.7 477 141.8zM459.4 126.4 457.8 123.7 462.1 122.1zM466.4 119.4 463.8 117.7 462.1 122.1zM487.5 119.4 484.8 117.7 483.2 122.1zM491.9 122.1 487.5 123.7 491.9 122.1 488 124.5 491.9 122.1 488.5 125.4 489.2 126.4z"/><path fill="#55d69f" stroke="#55d69f" stroke-width="0.5" d="M582.6 132.8 620 155.9 606.8 121.5 603.2 123.1 600.3 121.9zM539 74.9 546.9 87.7 551.7 79.8zM550.4 82 548.7 84.7 539 74.9 551.7 79.8zM520.1 102.6 518.4 98.2 515.7 99.9zM519.3 100.5 518.7 100.2 517.3 98.9 518.2 98.3 518.4 98.2zM511.4 93.9 514 98.2 515.7 95.5 515.6 95.7 513.7 95.2 513.4 94.7zM515 96.6 513.7 95.2 515.6 95.7zM511.4 72.8 514 77.1 514.8 75.9 514.7 76.1 511.4 72.8 515.2 75.2 511.4 72.8 515.7 74.5zM515.7 70.1 518.4 68.5 520.1 72.8zM551.7 67.1 564.5 74.9 559.6 62.2zM560 63.2 558.8 63.7 557.8 63.3 559.6 62.2zM536.9 47.3 539.5 51.7 540.2 50.6 536.9 47.3zM541.2 44.6 543.9 43 545.6 47.3zM562.3 44.6 564.9 43 566.6 47.3zM569.3 51.7 571 49 566.6 47.3zM613.5 67.1 626.2 74.9 621.3 62.2 621.7 63.2 620.5 63.7 619.5 63.3zM598.6 47.3 601.3 51.7 601.9 50.6 598.6 47.3 602.5 49.7 598.6 47.3zM602.9 44.6 605.6 43 607.3 47.3zM624 44.6 626.7 43 628.3 47.3zM631 51.7 632.7 49 628.3 47.3zM639 79.8 637.8 81.6 637.4 80.6 638 79.4 626.2 74.9 634.1 87.7zM649.5 70.1 652.2 68.5 653.8 72.8zM656.5 77.1 658.2 74.5 653.8 72.8zM656.5 98.2 658.2 95.5 653.8 93.9zM653.8 102.6 650.5 99.2 649.5 99.9zM657.4 170.2 654 175.6 652.8 172.7 654.4 169.1 620 155.9 643.1 193.3zM688.2 141.8 701 149.7 696.1 136.9zM696.5 137.9 695.3 138.5 694.3 138.1 696.1 136.9zM673.3 122.1 676 126.4 676.7 125.4 673.3 122.1 677.2 124.5 673.3 122.1 677.7 123.7zM677.7 119.4 680.4 117.7 682 122.1zM698.8 119.4 701.4 117.7 703.1 122.1zM705.8 126.4 707.4 123.7 703.1 122.1zM712.6 156.4 712.2 155.4 712.7 154.2 701 149.7 708.8 162.4zM724.2 144.9 726.9 143.2 728.6 147.6zM731.3 151.9 732.9 149.2 728.6 147.6zM731.3 173 732.9 170.3 728.6 168.6zM728.6 177.3 725.3 174 724.2 174.6zM712.6 218.1 712.2 217.1 712.7 215.9 701 211.4 708.8 224.2zM724.2 206.6 726.9 204.9 728.6 209.3zM731.3 213.6 732.9 211 728.6 209.3zM731.3 234.7 732.9 232 728.6 230.3zM728.6 239 725.3 235.7 724.2 236.4zM701 236.9 691.2 227.2 693.9 225.5 696.1 224.2 688.2 229zM705.8 260.2 707.4 257.5 703.1 255.8zM703.1 264.5 701.4 260.2 698.8 261.9zM703.1 264.5 700.7 260.7 701.4 260.2zM703.1 264.5 699.8 261.2 700.7 260.7zM682 264.5 681.2 262.5 680.7 262.2 679.3 260.9 677.7 261.9zM673.3 255.8 676 260.2 677.7 257.5zM677.6 257.7 675.7 257.2 675.4 256.6 677.7 257.5zM677 258.6 675.7 257.2 677.6 257.7zM620 230.7 591.4 202.1 582.6 207.6zM639 291 637.8 292.9 637.4 291.9 638 290.7 626.2 286.2 634.1 298.9zM649.5 281.4 652.2 279.7 653.8 284zM656.5 288.4 658.2 285.7 653.8 284zM656.5 309.5 658.2 306.8 653.8 305.1zM653.8 313.8 650.5 310.5 649.5 311.1zM626.2 311.7 621.3 298.9 626.2 311.7 619.2 300.3 626.2 311.7 616.5 301.9 613.5 303.8zM631 334.9 632.7 332.3 628.3 330.6zM628.3 339.3 625 336 624 336.6zM607.3 339.3 606.5 337.2 605.9 337 604.6 335.6 602.9 336.6zM598.6 330.6 601.3 334.9 602.3 333.3 600.9 332 600.7 331.4zM564.5 311.7 559.6 298.9 562.1 305.6 560.4 304.8 559.1 299.2 560.4 304.8 556.4 300.9 551.7 303.8zM569.3 334.9 571 332.3 566.6 330.6zM566.6 339.3 564.9 334.9 566.6 339.3 563.3 336 562.3 336.6zM545.6 339.3 543.9 334.9 544.8 337.2 544.2 337 542.8 335.6 541.2 336.6zM536.9 330.6 539.5 334.9 540.5 333.3 539.2 332 541.1 332.4 539.2 332 538.9 331.4zM539 286.2 546.9 298.9 551.7 291 551.4 291.6 549.8 294.2 545.8 290.2 545.1 288.5zM520.1 313.8 518.4 309.5 519.3 311.7 518.7 311.5 517.3 310.1 515.7 311.1zM511.4 305.1 514 309.5 515 307.8 513.7 306.5 513.4 305.9zM511.4 284 514 288.4 514.7 287.4 511.4 284 515.2 286.5 511.4 284 515.7 285.7zM515.7 281.4 518.4 279.7 520.1 284zM545.2 155.9 568.3 193.3 577.4 178.5 573.8 184.5 545.2 155.9zM489.7 236.9 487.4 230.8 485.7 230.1 481.7 226.1 477 229zM494.5 260.2 496.2 257.5 491.9 255.8zM491.9 264.5 490.2 260.2 491.9 264.5 488.5 261.2 487.5 261.9zM470.8 264.5 469.1 260.2 470 262.5 469.4 262.2 469 260.3 469.4 262.2 468.1 260.9 466.4 261.9zM462.1 255.8 464.8 260.2 465.8 258.6 464.4 257.2 464.2 256.6 466.4 257.5zM464.2 211.4 472.1 224.2 476.3 217.4 475 219.5 471.1 215.5 470.3 213.8 477 216.3zM445.3 239 444.5 237 443.9 236.7 443.5 234.8 443.9 236.7 442.6 235.4 441 236.4zM436.6 230.3 439.3 234.7 440.3 233.1 438.9 231.7 440.8 232.2 438.9 231.7 438.7 231.1zM436.6 209.3 439.3 213.6 439.9 212.6 436.6 209.3 440.5 211.7 436.6 209.3 441 211zM441 206.6 443.6 204.9 445.3 209.3zM464.2 149.7 472.1 162.4 474.8 158.1 474 159.4 464.2 149.7zM445.3 177.3 444.5 175.2 443.9 175 443.5 173.1 443.6 173 441 174.6zM443.9 175 442.6 173.6 443.5 173.1zM436.6 168.6 439.3 173 441 170.3 440.8 170.4 440.3 171.3 438.9 170 438.7 169.4zM436.6 147.6 439.3 151.9 439.9 150.9 436.6 147.6 440.5 150 436.6 147.6zM441 144.9 443.6 143.2 445.3 147.6zM477 141.8 489.7 149.7 485.2 137.9 484 138.5 483 138.1 484.9 136.9zM462.1 122.1 464.8 126.4 465.4 125.4 462.1 122.1 466.4 123.7zM466.4 119.4 469.1 117.7 470.8 122.1zM487.5 119.4 490.2 117.7 491.9 122.1zM494.5 126.4 496.2 123.7 491.9 122.1z"/><path fill="#59dca4" stroke="#59dca4" stroke-width="0.5" d="M582.6 132.8 545.2 155.9 582.6 179zM515.7 105.2 511.4 102.6 515.7 99.9zM515.7 70.1 511.4 72.8 515.7 75.5zM551.7 67.1 539 74.9 551.7 82.8zM541.2 44.6 536.9 47.3 541.2 50zM562.3 44.6 557.9 47.3 562.3 50zM613.5 67.1 600.7 74.9 613.5 82.8zM602.9 44.6 598.6 47.3 602.9 50zM624 44.6 619.6 47.3 624 50zM649.5 70.1 645.1 72.8 649.5 75.5zM649.5 105.2 645.1 102.6 649.5 99.9zM688.2 141.8 675.5 149.7 688.2 157.6zM677.7 119.4 673.3 122.1 677.7 124.7zM698.8 119.4 694.4 122.1 698.8 124.7zM724.2 144.9 719.9 147.6 724.2 150.2zM724.2 180 719.9 177.3 724.2 174.6zM724.2 206.6 719.9 209.3 724.2 212zM724.2 241.7 719.9 239 724.2 236.4zM688.2 244.8 675.5 236.9 688.2 229zM698.8 267.2 694.4 264.5 698.8 261.9zM677.7 267.2 673.3 264.5 677.7 261.9zM582.6 253.8 545.2 230.7 582.6 207.6zM649.5 281.4 645.1 284 649.5 286.7zM649.5 316.5 645.1 313.8 649.5 311.1zM613.5 319.5 600.7 311.7 613.5 303.8zM624 342 619.6 339.3 624 336.6zM602.9 342 598.6 339.3 602.9 336.6zM551.7 319.5 539 311.7 551.7 303.8zM562.3 342 557.9 339.3 562.3 336.6zM541.2 342 536.9 339.3 541.2 336.6zM515.7 316.5 511.4 313.8 515.7 311.1zM515.7 281.4 511.4 284 515.7 286.7zM477 244.8 464.2 236.9 477 229zM487.5 267.2 483.2 264.5 487.5 261.9zM466.4 267.2 462.1 264.5 466.4 261.9zM441 241.7 436.6 239 441 236.4zM441 206.6 436.6 209.3 441 212zM441 180 436.6 177.3 441 174.6zM441 144.9 436.6 147.6 441 150.2zM477 141.8 464.2 149.7 477 157.6zM466.4 119.4 462.1 122.1 466.4 124.7zM487.5 119.4 483.2 122.1 487.5 124.7z"/><path fill="#53d19b" stroke="#53d19b" stroke-width="0.5" d="M582.6 132.8 620 155.9 582.6 179zM515.7 105.2 520.1 102.6 515.7 99.9zM515.7 70.1 520.1 72.8 515.7 75.5zM551.7 67.1 564.5 74.9 551.7 82.8zM541.2 44.6 545.6 47.3 541.2 50zM562.3 44.6 566.6 47.3 562.3 50zM613.5 67.1 626.2 74.9 613.5 82.8zM602.9 44.6 607.3 47.3 602.9 50zM624 44.6 628.3 47.3 624 50zM649.5 70.1 653.8 72.8 649.5 75.5zM649.5 105.2 653.8 102.6 649.5 99.9zM688.2 141.8 701 149.7 688.2 157.6zM677.7 119.4 682 122.1 677.7 124.7zM698.8 119.4 703.1 122.1 698.8 124.7zM724.2 144.9 728.6 147.6 724.2 150.2zM724.2 180 728.6 177.3 724.2 174.6zM724.2 206.6 728.6 209.3 724.2 212zM724.2 241.7 728.6 239 724.2 236.4zM688.2 244.8 701 236.9 688.2 229zM698.8 267.2 703.1 264.5 698.8 261.9zM677.7 267.2 682 264.5 677.7 261.9zM582.6 253.8 620 230.7 582.6 207.6zM649.5 281.4 653.8 284 649.5 286.7zM649.5 316.5 653.8 313.8 649.5 311.1zM613.5 319.5 626.2 311.7 613.5 303.8zM624 342 628.3 339.3 624 336.6zM602.9 342 607.3 339.3 602.9 336.6zM551.7 319.5 564.5 311.7 551.7 303.8zM562.3 342 566.6 339.3 562.3 336.6zM541.2 342 545.6 339.3 541.2 336.6zM515.7 316.5 520.1 313.8 515.7 311.1zM515.7 281.4 520.1 284 515.7 286.7zM477 244.8 489.7 236.9 477 229zM487.5 267.2 491.9 264.5 487.5 261.9zM466.4 267.2 470.8 264.5 466.4 261.9zM441 241.7 445.3 239 441 236.4zM441 206.6 445.3 209.3 441 212zM441 180 445.3 177.3 441 174.6zM441 144.9 445.3 147.6 441 150.2zM477 141.8 489.7 149.7 477 157.6zM466.4 119.4 470.8 122.1 466.4 124.7zM487.5 119.4 491.9 122.1 487.5 124.7z"/><path fill="#3dae7e" stroke="#3dae7e" stroke-width="0.5" d="M545.2 155.9 559.5 193.3 582.6 179zM545.2 155.9 565.9 189.4 559.5 193.3zM545.2 155.9 573.8 184.5 565.9 189.4zM526.2 95.6 539 100.4 531.1 87.7zM527.4 93.7 527.8 94.7 527.2 95.9 526.2 95.6zM515.7 105.2 513 106.9 511.4 102.6zM508.7 98.2 507 100.9 511.4 102.6zM508.7 77.1 507 79.8 511.4 81.5zM511.4 72.8 513 77.1 511.4 72.8 514.7 76.1 515.7 75.5zM539 74.9 543.9 87.7 539 74.9 548.7 84.7 551.7 82.8zM534.2 51.7 532.5 54.3 536.9 56zM536.9 47.3 538.5 51.7 536.9 47.3 540.2 50.6 541.2 50zM557.9 47.3 559.6 51.7 562.3 50zM558.7 49.4 559.3 49.6 559.7 51.5 559.6 51.7zM559.3 49.6 560.6 51 559.7 51.5zM566.6 56 563.9 51.7 562.9 53.3 564.3 54.6 562.4 54.2 564.3 54.6 564.5 55.2zM600.7 74.9 603.1 81 604.8 81.8 606.1 87.4 604.8 81.8 608.8 85.7 607.8 86.3 613.5 82.8zM595.9 51.7 594.2 54.3 598.6 56zM598.6 47.3 601.9 50.6 602.9 50zM619.6 47.3 621.3 51.7 624 50zM620.4 49.4 621 49.6 621.5 51.5 621.3 51.7zM621 49.6 622.4 51 621.5 51.5zM628.3 56 625.7 51.7 624.7 53.3 626 54.6 624.1 54.2 626 54.6 626.3 55.2zM626.2 100.4 618.3 87.7 615.4 92.4 619.4 96.4 620.1 98.1zM645.1 72.8 645.9 74.9 646.5 75.1 647.9 76.5 647 77 646.8 77.1 649.5 75.5zM653.8 81.5 651.2 77.1 650.2 78.8 651.5 80.1 649.6 79.7 651.5 80.1 651.8 80.7zM653.8 102.6 651.2 98.2 650.5 99.2 653.8 102.6 649.5 100.9zM649.5 105.2 646.8 106.9 645.1 102.6zM620 230.7 596.9 193.3 591.4 202.1 620 230.7zM675.5 149.7 680.3 162.4 677.8 155.8 679.5 156.5 680.9 162.1 679.5 156.5 683.5 160.5 688.2 157.6zM670.7 126.4 669 129.1 673.3 130.8zM673.3 122.1 676.7 125.4 677.7 124.7zM694.4 122.1 695.2 124.1 695.8 124.4 697.1 125.7 698.8 124.7zM703.1 130.8 700.4 126.4 698.8 129.1zM698.9 128.9 699.4 128 700.8 129.4 701 130 698.8 129.1zM701 175.2 693.1 162.4 690.2 167.1 694.1 171.1 694.9 172.8zM719.9 147.6 720.7 149.6 721.3 149.9 722.6 151.2 721.7 151.8 721.6 151.9 724.2 150.2zM728.6 156.3 725.9 151.9 724.9 153.5 726.3 154.9 726.5 155.5zM728.6 177.3 725.9 173 725.3 174 728.6 177.3zM724.2 180 721.6 181.7 719.9 177.3zM701 236.9 693.1 224.2 689.7 229.6 691.2 227.2 701 236.9 688.2 232zM719.9 209.3 721.6 213.6 720.7 211.4 721.3 211.6 722.6 213 724.2 212zM728.6 218 725.9 213.6 724.9 215.3 726.3 216.6 724.4 216.2 726.3 216.6 726.5 217.2zM728.6 239 725.9 234.7 725.3 235.7 728.6 239 724.7 236.6 728.6 239 724.2 237.4zM724.2 241.7 721.6 243.4 719.9 239zM688.2 244.8 675.5 236.9 680.3 249.7zM680 248.7 681.2 248.1 682.2 248.5 680.3 249.7zM703.1 264.5 700.4 260.2 699.8 261.2 703.1 264.5 698.8 262.9zM698.8 267.2 696.1 268.9 694.4 264.5zM677.7 267.2 675 268.9 673.3 264.5zM670.7 260.2 669 262.9 673.3 264.5zM582.6 253.8 545.2 230.7 558.4 265.1 562 263.5 564.9 264.7 559.5 268.1zM626.2 311.7 618.3 298.9 616.5 301.9 626.2 311.7zM645.1 284 645.9 286.1 646.5 286.4 647.9 287.7 649.5 286.7zM653.8 292.7 651.2 288.4 650.2 290 651.5 291.4 651.8 291.9zM653.8 313.8 651.2 309.5 649.5 312.1 650 311.4 650.5 310.5 653.8 313.8zM649.5 316.5 646.8 318.1 645.1 313.8zM613.5 319.5 600.7 311.7 605.6 324.4 605.2 323.4 606.4 322.9 607.4 323.3zM628.3 339.3 625.7 334.9 624 337.6 624.5 336.9 625 336 628.3 339.3zM624 342 621.3 343.6 619.6 339.3zM602.9 342 600.3 343.6 598.6 339.3zM595.9 334.9 594.2 337.6 598.6 339.3zM551.7 319.5 539 311.7 543.9 324.4zM543.5 323.4 544.7 322.9 545.7 323.3 543.9 324.4zM566.6 339.3 563.9 334.9 562.3 337.6 562.7 336.9 563.3 336 566.6 339.3zM562.3 342 559.6 343.6 557.9 339.3zM541.2 342 538.5 343.6 536.9 339.3zM534.2 334.9 532.5 337.6 536.9 339.3zM527.4 305 527.8 306 527.2 307.2 539 311.7 531.1 298.9zM515.7 316.5 513 318.1 511.4 313.8zM508.7 309.5 507 312.1 511.4 313.8zM508.7 288.4 507 291.1 511.4 292.7zM511.4 284 514.7 287.4 515.7 286.7zM507.8 216.4 511.2 211 512.4 213.9 510.8 217.5 545.2 230.7 522.1 193.3zM477 244.8 464.2 236.9 468.7 248.7 469.9 248.1 470.9 248.5 469.1 249.7zM491.9 264.5 489.2 260.2 488.5 261.2 491.9 264.5zM487.5 267.2 484.8 268.9 483.2 264.5zM466.4 267.2 463.8 268.9 462.1 264.5zM459.4 260.2 457.8 262.9 462.1 264.5zM452.6 230.2 453 231.2 452.5 232.4 464.2 236.9 456.4 224.2zM441 241.7 438.3 243.4 436.6 239zM433.9 234.7 432.3 237.4 436.6 239zM433.9 213.6 432.3 216.3 436.6 218zM436.6 209.3 438.3 213.6 441 212zM436.6 209.3 439 213.2 438.3 213.6zM436.6 209.3 439.9 212.6 439 213.2zM452.6 168.5 453 169.5 452.5 170.7 464.2 175.2 456.4 162.4zM441 180 438.3 181.7 436.6 177.3zM433.9 173 432.3 175.6 436.6 177.3zM433.9 151.9 432.3 154.6 436.6 156.3zM436.6 147.6 439.9 150.9 441 150.2zM464.2 149.7 474 159.4 477 157.6zM459.4 126.4 457.8 129.1 462.1 130.8zM462.1 122.1 464.5 125.9 463.8 126.4 466.4 124.7zM462.1 122.1 465.4 125.4 464.5 125.9zM483.2 122.1 484.8 126.4 484 124.1 484.5 124.4 485.9 125.7 485.6 125.9 487.5 124.7zM491.9 130.8 489.2 126.4 488.2 128 489.5 129.4 487.6 128.9 489.5 129.4 489.8 130z"/><path fill="#329c70" stroke="#329c70" stroke-width="0.5" d="M620 155.9 582.6 179 591.4 184.5 620 155.9 605.7 193.3zM539 100.4 551.7 95.6 546.9 87.7zM545.1 98.1 545.8 96.4 551.4 95 551.7 95.6zM545.8 96.4 549.8 92.4 551.4 95zM515.7 105.2 518.4 106.9 520.1 102.6zM511.4 102.6 515.7 100.9 511.4 102.6 515.2 100.1 511.4 102.6 514.7 99.2 514 98.2zM511.4 81.5 515.7 79.8 513.4 80.7 513.7 80.1 515 78.8 514 77.1zM520.1 72.8 515.7 75.5 517.3 76.5 518.7 75.1 519.3 74.9zM564.5 74.9 551.7 82.8 556.4 85.7 560.4 81.8 559.1 87.4 560.4 81.8 562.1 81 559.6 87.7zM536.9 56 538.9 55.2 539.2 54.6 541.1 54.2 541.2 54.3 539.5 51.7zM539.2 54.6 540.5 53.3 541.1 54.2zM545.6 47.3 541.2 50 543.9 51.7 543.7 51.5 542.8 51 544.2 49.6 544.8 49.4zM566.6 47.3 562.3 50 564.9 51.7 564.2 51.2 566.6 47.3zM563.3 50.6 566.6 47.3 564.2 51.2zM569.3 51.7 571 54.3 566.6 56zM626.2 74.9 613.5 82.8 616.5 84.7 626.2 74.9 621.3 87.7zM598.6 56 600.7 55.2 600.9 54.6 602.8 54.2 600.9 54.6 602.3 53.3 601.3 51.7zM607.3 47.3 602.9 50 604.6 51 605.9 49.6 606.5 49.4zM628.3 47.3 624 50 625 50.6 628.3 47.3 626.7 51.7zM631 51.7 632.7 54.3 628.3 56zM634.1 87.7 626.2 100.4 638 95.9 637.4 94.7 637.8 93.7 639 95.6zM653.8 72.8 649.5 75.5 650.5 76.1 653.8 72.8zM656.5 77.1 658.2 79.8 653.8 81.5zM656.5 98.2 658.2 100.9 653.8 102.6zM649.5 105.2 652.2 106.9 653.8 102.6zM643.1 193.3 620 230.7 654.4 217.5 652.8 213.9 654 211 657.4 216.4zM701 149.7 688.2 157.6 696.1 162.4zM693.9 161.1 691.2 159.4 701 149.7 696.1 162.4zM673.3 130.8 675.4 130 675.7 129.4 677 128 677.6 128.9 677.7 129.1 676 126.4zM682 122.1 677.7 124.7 680.4 126.4 680.2 126.3 679.3 125.7 680.7 124.4 681.2 124.1zM703.1 122.1 698.8 124.7 699.8 125.4 703.1 122.1zM705.8 126.4 707.4 129.1 703.1 130.8zM708.8 162.4 701 175.2 712.7 170.7 712.2 169.5 712.6 168.5zM728.6 147.6 724.2 150.2 725.3 150.9 728.6 147.6zM731.3 151.9 732.9 154.6 728.6 156.3zM731.3 173 732.9 175.6 728.6 177.3zM724.2 180 726.9 181.7 728.6 177.3zM708.8 224.2 701 236.9 712.7 232.4 712.2 231.2 712.6 230.2 713.7 232zM728.6 209.3 724.2 212 725.3 212.6 728.6 209.3zM731.3 213.6 732.9 216.3 728.6 218zM731.3 234.7 732.9 237.4 728.6 239zM724.2 241.7 726.9 243.4 728.6 239zM696.1 249.7 701 236.9 688.2 244.8zM694.3 248.5 695.3 248.1 696.5 248.7 696.1 249.7zM705.8 260.2 707.4 262.9 703.1 264.5zM698.8 267.2 701.4 268.9 703.1 264.5zM677.7 267.2 680.4 268.9 682 264.5zM673.3 264.5 676.7 261.2 677.2 262.1 677.7 262.9 676 260.2zM600.3 264.7 603.2 263.5 606.8 265.1 620 230.7 582.6 253.8zM634.1 298.9 626.2 311.7 638 307.2 637.4 306 637.8 305zM653.8 284 649.5 286.7 650.5 287.4 653.8 284zM656.5 288.4 658.2 291.1 653.8 292.7zM656.5 309.5 658.2 312.1 653.8 313.8zM649.5 316.5 652.2 318.1 653.8 313.8zM621.3 324.4 626.2 311.7 613.5 319.5zM619.5 323.3 620.5 322.9 621.7 323.4 621.3 324.4zM631 334.9 632.7 337.6 628.3 339.3zM624 342 626.7 343.6 628.3 339.3zM602.9 342 605.6 343.6 607.3 339.3zM598.6 339.3 601.9 336 601.3 334.9zM559.6 324.4 564.5 311.7 551.7 319.5zM557.8 323.3 558.8 322.9 560 323.4 559.6 324.4zM569.3 334.9 571 337.6 566.6 339.3zM562.3 342 564.9 343.6 566.6 339.3zM541.2 342 543.9 343.6 545.6 339.3zM536.9 339.3 540.2 336 539.5 334.9zM539 311.7 550.4 304.6 539 311.7 548.7 301.9 546.9 298.9zM515.7 316.5 518.4 318.1 520.1 313.8zM511.4 313.8 515.7 312.1 511.4 313.8 514.7 310.5 514 309.5zM511.4 292.7 513.4 291.9 513.7 291.4 515 290 515.6 290.9 515.7 291.1 514 288.4zM520.1 284 515.7 286.7 517.3 287.7 518.7 286.4 519.3 286.1zM545.2 230.7 578.7 210 545.2 230.7 573.8 202.1 568.3 193.3zM483 248.5 484 248.1 485.2 248.7 489.7 236.9 477 244.8zM494.5 260.2 496.2 262.9 491.9 264.5zM487.5 267.2 490.2 268.9 491.9 264.5zM466.4 267.2 469.1 268.9 470.8 264.5zM462.1 264.5 466 262.1 462.1 264.5 465.4 261.2 464.8 260.2zM464.2 236.9 474 227.2 472.1 224.2zM441 241.7 443.6 243.4 445.3 239zM436.6 239 441 237.4 436.6 239 440.5 236.6 436.6 239 439.9 235.7 440.1 236.1 439.3 234.7zM436.6 218 438.7 217.2 438.9 216.6 440.8 216.2 441 216.3 439.3 213.6zM438.9 216.6 440.3 215.3 440.8 216.2zM445.3 209.3 441 212 442.6 213 443.9 211.6 443.5 213.5 443.9 211.6 444.5 211.4zM464.2 175.2 477 170.3 470.3 172.8 471.1 171.1 475 167.1 472.1 162.4zM441 180 443.6 181.7 445.3 177.3zM436.6 177.3 441 175.6 436.6 177.3 440.5 174.9 436.6 177.3 439.9 174 439.3 173zM436.6 156.3 441 154.6 439.3 151.9zM438.7 155.5 438.9 154.9 440.8 154.4 441 154.6zM438.9 154.9 440.3 153.5 440.8 154.4zM445.3 147.6 441 150.2 442.6 151.2 443.9 149.9 444.5 149.6 443.6 151.9zM489.7 149.7 477 157.6 481.7 160.5 485.7 156.5 487.4 155.8zM462.1 130.8 464.2 130 464.4 129.4 466.3 128.9 466.4 129.1 464.8 126.4zM464.4 129.4 465.8 128 466.3 128.9zM470.8 122.1 466.4 124.7 468.1 125.7 469.4 124.4 470 124.1 469.1 126.4zM491.9 122.1 487.5 124.7 488.5 125.4 491.9 122.1 490.2 126.4zM494.5 126.4 496.2 129.1 491.9 130.8z"/><path fill="#25865e" stroke="#25865e" stroke-width="0.5" d="M573.8 184.5 582.6 193.3 591.4 184.5 596.9 193.3 591.4 184.5 596.8 187.8 582.6 179zM515.7 105.2 518.4 106.9 513 106.9zM513.9 76.6 514.7 76.1 515.7 77.1 517.3 76.5 515.7 75.5zM548.7 84.7 551.7 87.7 556.4 85.7 559.1 87.4 559.6 87.7 551.7 82.8zM539.5 51.1 540.2 50.6 539.5 51.7 540.2 50.6 541.2 51.7 542.8 51 541.2 50zM560.6 51 562.3 51.7 563.3 50.6 564 51.1 562.3 50zM608.8 85.7 613.5 87.7 616.5 84.7 618.3 87.7 616.5 84.7 619.2 86.3 621.3 87.7 613.5 82.8zM601.9 50.6 602.9 51.7 604.6 51 602.9 50zM622.4 51 624 51.7 625 50.6 624 50zM647.9 76.5 649.5 77.1 650.5 76.1 651.3 76.6 649.5 75.5zM649.5 105.2 652.2 106.9 646.8 106.9zM680.3 162.4 680.9 162.1 683.5 160.5 688.2 162.4 691.2 159.4 693.1 162.4 691.2 159.4 688.2 157.6zM676.7 125.4 677.7 126.4 679.3 125.7 677.7 124.7zM696.5 126.2 697.1 125.7 698.8 126.4 699.8 125.4 700.4 126.4 699.8 125.4 700.6 125.9 698.8 124.7zM722.1 151.6 722.6 151.2 724.2 151.9 725.3 150.9 726.1 151.4 724.2 150.2zM724.2 180 726.9 181.7 721.6 181.7zM722.6 213 724.2 213.6 725.3 212.6 724.2 212zM724.2 241.7 726.9 243.4 721.6 243.4zM688.2 244.8 682.2 248.5 685.5 248.5 685.7 249.7 685.5 248.5 688.2 249.7 696.1 249.7zM690.7 249.7 691 248.5 694.3 248.5 696.1 249.7zM688.2 249.7 691 248.5 690.7 249.7zM698.8 267.2 701.4 268.9 696.1 268.9zM677.7 267.2 680.4 268.9 675 268.9zM582.6 253.8 559.5 268.1 564.9 264.7 574.5 264.7 575.3 268.1 574.5 264.7 582.6 268.1 590.7 264.7 589.9 268.1 590.7 264.7 600.3 264.7zM647.4 288 647.9 287.7 649.5 288.4 650.5 287.4 651.2 287.8 649.5 286.7zM649.5 316.5 652.2 318.1 646.8 318.1zM613.5 319.5 607.4 323.3 610.7 323.3 613.5 324.4 616.2 323.3 619.5 323.3zM624 342 626.7 343.6 621.3 343.6zM602.9 342 605.6 343.6 600.3 343.6zM551.7 319.5 545.7 323.3 549 323.3 551.7 324.4 554.5 323.3 554.2 324.4 554.5 323.3 557.8 323.3zM562.3 342 564.9 343.6 559.6 343.6zM541.2 342 543.9 343.6 538.5 343.6zM515.7 316.5 518.4 318.1 513 318.1zM514.1 287.7 514.7 287.4 515.7 288.4 517.3 287.7 517.4 287.8 515.7 286.7zM477 244.8 470.9 248.5 474.2 248.5 477 249.7 479.7 248.5 483 248.5zM487.5 267.2 490.2 268.9 484.8 268.9zM466.4 267.2 469.1 268.9 463.8 268.9zM441 241.7 443.6 243.4 438.3 243.4zM439.9 212.6 439.3 213.6 439.9 212.6 441 213.6 442.6 213 441 212zM441 180 443.6 181.7 438.3 181.7zM439 151.4 439.9 150.9 439.3 151.9 439.9 150.9 441 151.9 442.6 151.2 442.9 151.5 441 150.2zM472.1 160.6 474 159.4 477 162.4 481.7 160.5 477 157.6zM465.4 125.4 464.8 126.4 465.4 125.4 466.4 126.4 468.1 125.7 466.4 124.7zM485.9 125.7 487.5 126.4 488.5 125.4 487.5 124.7z"/><path fill="#5ce1a7" stroke="#5ce1a7" stroke-width="0.5" d="M557.6 93.6 560.4 81.8 556.4 85.7 551.7 87.7 549.8 92.4 545.8 96.4zM517.7 79.2 519 73.9 512.5 80.4 514.7 78.2 515.7 77.1 515 78.8 513.7 80.1zM518.7 75.1 517.3 76.5 516.7 76.1 519 73.9zM517.3 76.5 515.7 77.1 516.7 76.1zM543.2 53.7 544.5 48.4 541.2 51.7 540.5 53.3 540.2 52.7 540.5 53.3 539.2 54.6 537.9 54.9zM544.2 49.6 542.8 51 541.2 51.7 542.2 50.6 544.5 48.4zM605 53.7 605.9 49.6 604.5 51 602.9 51.7 604 50.6 606.2 48.4 599.7 54.9zM601.9 52.7 602.9 51.7 602.3 53.3 600.9 54.6 599.7 54.9zM641.4 87.7 639 87.7 637.8 90.4 641 89.7zM679.7 128.4 680.7 124.4 679.3 125.7 677.7 126.4 677 128 675.7 129.4zM717 159.2 716.6 160.6 716.2 162.4 713.7 162.4 712.6 165.2 710.8 165.6 710.5 165.7 715.7 164.4zM665.5 189.5 664.6 193.3 663.2 187.4 664.6 193.3 657.4 193.3 654.4 196.2 657.4 193.3 654 201.4 663.2 199.2zM716.2 224.2 715.7 222.2 716.2 224.2 713.7 224.2 710.7 227.2 713.7 224.2 712.6 226.9 710.8 227.3 710.5 227.4 715.7 226.2zM691 248.5 688.2 249.7 688.2 252.1 690.2 251.7zM592.1 258.5 591.9 259.5 590.7 264.7 582.6 268.1 582.6 275.3 576.7 273.9 582.6 275.3 577.3 276.6 573.1 277.6 588.5 273.9zM641.4 298.9 639 298.9 637.8 301.7 641 300.9zM616.2 323.3 613.5 324.4 613.5 326.9 615.5 326.4zM554.7 322.2 554.5 323.3 551.7 324.4 551 325.2 551.7 324.4 551.7 326.9 553.7 326.4zM517.7 290.4 519 285.1 512.5 291.6 514.7 289.4 515 290 513.7 291.4zM518.7 286.4 517.3 287.7 515.7 288.4 516.7 287.4 519 285.1zM515.7 288.4 515 290 514.7 289.4zM479.7 248.5 477 249.7 477 252.1 475 251.7 477 252.1 475.2 252.6 473.7 252.9 479 251.7zM443 215.7 443.9 211.6 442.6 213 441 213.6 440.3 215.2 438.9 216.6zM482.9 168.3 486.5 152.9 485.7 156.5 481.7 160.5 477 162.4 480 159.4 467.4 172zM474 165.4 475 167.1 471.1 171.1 467.4 172zM477 162.4 475 167.1 474 165.4zM443 153.9 443.9 149.9 442.6 151.2 442 150.9 442.6 151.2 441 151.9 440.3 153.5 439.9 152.9 440.3 153.5 438.9 154.9 437.7 155.2zM468.5 128.4 469.4 124.4 468.1 125.7 466.4 126.4 465.8 128 464.4 129.4z"/><path fill="#51cf99" stroke="#51cf99" stroke-width="0.5" d="M542.2 97.2 551.7 118.5 557.6 93.6zM545.8 96.4 545.1 98.1 542.9 98.9 542.2 97.2zM517.7 96.2 515.7 87.7 512.5 95zM512.7 94.4 513.4 94.7 513.7 95.2 512.5 95zM513.7 80.1 513.4 80.7 512.7 81 512.5 80.4 515.7 87.7 517.7 79.2zM539.2 54.6 538.9 55.2 538.2 55.5 537.9 54.9 541.2 62.2 543.2 53.7zM551.7 51.7 551.7 59.7 549.9 59.3 548.5 58.9 553.7 60.2zM582.6 87.7 573.1 109 582.6 87.7 577.3 110 582.6 87.7 582.6 111.3 588.5 112.7zM600.9 54.6 600.7 55.2 599.9 55.5 599.7 54.9 602.9 62.2 605 53.7zM613.5 51.7 610.2 58.9 615.5 60.2zM613.5 51.7 613.5 59.7 611.7 59.3 610.2 58.9zM639 77.1 635.7 84.4 637.4 80.6 637.8 81.6 636.1 84.5 637.8 81.6 637.8 84.9 641 85.7zM639 98.2 641 89.7 637.8 90.4 637.8 93.7 637.4 94.7zM657.4 162.4 647.8 183.8 652.8 172.7 654 175.6 654 185.2 663.2 187.4zM675.7 129.4 675.4 130 674.7 130.2 674.4 129.7 677.7 136.9 679.7 128.4zM688.2 126.4 685 133.7 690.2 134.9zM688.2 126.4 686.4 134 685 133.7zM688.2 126.4 688.2 134.5 686.4 134zM713.7 151.9 710.5 159.2 712.2 155.4 712.6 156.4 710.8 159.3 712.6 156.4 712.6 159.7 715.7 160.4zM713.7 173 715.7 164.4 712.6 165.2 712.6 168.5 712.2 169.5zM657.4 224.2 663.2 199.2 647.8 202.8zM648.8 202.6 654 201.4 654 211 652.8 213.9 647.8 202.8zM713.7 213.6 710.5 220.9 712.2 217.1 712.6 218.1 710.8 221 712.6 218.1 712.6 221.4 715.7 222.2zM713.7 234.7 715.7 226.2 712.6 226.9 712.6 230.2 710.8 227.3 712.6 230.2 712.2 231.2zM688.2 260.2 690.2 251.7 688.2 252.1 688.2 260.2zM679.7 258.2 677.7 249.7 674.7 256.4 675.4 256.6 675.7 257.2zM582.6 298.9 588.5 273.9 579.8 276 582.6 275.3 582.6 298.9 577.3 276.6 582.6 298.9zM639 288.4 635.7 295.7 637.4 291.9 637.8 292.9 636.1 295.8 637.8 292.9 637.8 296.2 641 296.9zM639 309.5 641 300.9 637.8 301.7 637.8 305 637.4 306 635.7 302.2zM613.5 334.9 615.5 326.4 613.5 326.9 613.5 334.9 610.2 327.7zM605 332.9 602.9 324.4 599.7 331.7zM599.9 331.1 600.7 331.4 600.9 332 599.7 331.7zM557.6 293 551.7 268.1 542.2 289.4 542.9 287.7 545.1 288.5 545.8 290.2zM551.7 334.9 553.7 326.4 551.7 326.9 551.7 334.9 549.9 327.3 551.7 334.9zM543.2 332.9 541.2 324.4 537.9 331.7zM538.2 331.1 538.9 331.4 539.2 332 537.9 331.7zM517.7 307.4 515.7 298.9 512.5 306.2zM512.7 305.6 513.4 305.9 513.7 306.5 512.5 306.2zM512.5 291.6 515.7 298.9 517.7 290.4zM513.7 291.4 513.4 291.9 512.7 292.2 512.5 291.6zM482.9 218.3 477 193.3 467.4 214.6zM468.2 212.9 470.3 213.8 471.1 215.5 467.4 214.6zM477 260.2 479 251.7 477 252.1 477 260.2 473.7 252.9zM468.5 258.2 466.4 249.7 463.5 256.4 464.2 256.6 464.4 257.2 463.2 256.9zM443 232.7 441 224.2 437.7 231.4zM438 230.9 438.7 231.1 438.9 231.7 437.7 231.4zM438.9 216.6 438.7 217.2 438 217.5 437.7 216.9 441 224.2 443 215.7zM467.4 172 477 193.3 482.9 168.3zM471.1 171.1 470.3 172.8 468.2 173.7 467.4 172zM443 170.9 441 162.4 437.7 169.7zM438 169.1 438.7 169.4 438.9 170 437.7 169.7zM437.7 155.2 441 162.4 443 153.9zM438.9 154.9 438.7 155.5 438 155.7 437.7 155.2zM464.4 129.4 464.2 130 463.5 130.2 463.2 129.7 466.4 136.9 468.5 128.4zM477 126.4 473.7 133.7 477 126.4 477 134.5 479 134.9z"/><path fill="#62ebb0" stroke="#62ebb0" stroke-width="0.5" d="M557.6 93.6 582.6 87.7 561.3 78.1 563 78.9 562.1 81 560.4 81.8zM515.7 87.7 524.2 89.7 523.4 86.3 523.8 87.7 515.7 87.7 523.3 85.9 515.7 87.7zM517.7 79.2 526.2 77.1 519.5 74.2 519.3 74.9 518.7 75.1zM543.2 53.7 551.7 51.7 545 48.7 544.8 49.4 544.2 49.6zM559.3 49.6 558.7 49.4 558.4 48.7 551.7 51.7 560.2 53.7zM604.8 81.8 603.1 81 602.2 78.9 603.9 78.1 582.6 87.7 607.6 93.6zM605 53.7 613.5 51.7 606.8 48.7 606.5 49.4 605.9 49.6zM620.7 48.4 621 49.6 620.4 49.4 620.2 48.7 613.5 51.7 622 53.7zM646.2 73.9 646.5 75.1 645.9 74.9 645.7 74.2 639 77.1 647.5 79.2zM649.5 87.7 641.9 85.9 649.5 87.7 641.4 87.7 641.8 86.4 641 89.7zM679.5 156.5 677.8 155.8 677 153.6 678.7 152.9 657.4 162.4 682.3 168.3zM679.7 128.4 688.2 126.4 681.5 123.4 681.2 124.1 680.7 124.4 680.9 123.2zM695.5 123.2 695.8 124.4 695.2 124.1 694.9 123.4 688.2 126.4 696.7 128.4zM721 148.6 721.3 149.9 720.7 149.6 720.4 148.9 713.7 151.9 722.2 153.9zM724.2 162.4 716.6 160.6 724.2 162.4 716.2 162.4 716.5 161.3 715.7 164.4zM688.2 193.3 666.9 183.8 688.2 193.3 665.9 188 688.2 193.3 664.6 193.3 663.2 199.2zM721.3 211.6 720.7 211.4 720.4 210.6 713.7 213.6 722.2 215.7zM724.2 224.2 717 220.9 724.2 224.2 716.2 224.2 716.3 223.7 715.7 226.2zM698.8 249.7 691.5 246.4 695.3 248.1 694.3 248.5 691 248.5 690.2 251.7zM677.7 249.7 686.2 251.7 685 246.4zM685.1 246.8 685.5 248.5 682.2 248.5 681.2 248.1 685 246.4zM613.5 268.1 603.2 263.5 600.3 264.7 590.7 264.7 588.5 273.9zM646.2 285.1 646.5 286.4 645.9 286.1 645.7 285.4 639 288.4 647.5 290.4zM649.5 298.9 641.9 297.1 649.5 298.9 641.4 298.9 641.7 297.7 641 300.9zM624 324.4 616.7 321.2 615.5 326.4zM620.5 322.9 619.5 323.3 616.6 321.5 616.7 321.2zM619.5 323.3 616.2 323.3 616.6 321.5zM602.9 324.4 611.5 326.4 610.7 323.3 607.4 323.3 606.4 322.9zM551.7 268.1 576.7 273.9 574.5 264.7 564.9 264.7 562 263.5zM562.3 324.4 558.8 322.9 557.8 323.3 554.9 321.5 555 321.2 553.7 326.4zM557.8 323.3 554.5 323.3 554.9 321.5zM541.2 324.4 549.7 326.4 548.5 321.2zM548.6 321.5 549 323.3 545.7 323.3 544.7 322.9 548.5 321.2zM515.7 298.9 524.2 300.9 523.7 298.5 523.8 298.9 515.7 298.9zM517.7 290.4 526.2 288.4 519.5 285.4 519.3 286.1 518.7 286.4zM477 193.3 502 199.2 500.6 193.3 477 193.3zM487.5 249.7 480.2 246.4 479 251.7zM484 248.1 483 248.5 480.1 246.8 480.2 246.4zM483 248.5 479.7 248.5 480.1 246.8zM466.4 249.7 475 251.7 473.7 246.4 473.8 246.8 474.2 248.5 470.9 248.5 469.9 248.1zM441 224.2 449.5 226.2 449 224.2 441 224.2 448.6 222.4 441 224.2 448.2 220.9zM443 215.7 451.5 213.6 444.8 210.6 444.5 211.4 443.9 211.6 444.2 210.4zM482.9 168.3 507.8 162.4 488.2 153.6 487.4 155.8 485.7 156.5 486.5 152.9zM441 162.4 449.5 164.4 449 162.4 441 162.4 448.2 159.2zM443 153.9 451.5 151.9 444.8 148.9 444.5 149.6 443.9 149.9 444.2 148.6zM468.5 128.4 477 126.4 470.3 123.4 470 124.1 469.4 124.4zM484.5 124.4 484 124.1 483.7 123.4 477 126.4 485.5 128.4z"/><path fill="#51ce98" stroke="#51ce98" stroke-width="0.5" d="M557.6 93.6 551.7 118.5 576.7 112.7zM517.7 79.2 515.7 87.7 524.2 85.7zM543.2 53.7 541.2 62.2 549.7 60.2zM605 53.7 602.9 62.2 611.5 60.2zM647.5 96.2 639 98.2 641 89.7zM679.7 128.4 677.7 136.9 686.2 134.9zM722.2 170.9 713.7 173 715.7 164.4zM682.3 218.3 657.4 224.2 663.2 199.2zM722.2 232.7 713.7 234.7 715.7 226.2zM696.7 258.2 688.2 260.2 690.2 251.7zM607.6 293 582.6 298.9 588.5 273.9zM647.5 307.4 639 309.5 641 300.9zM622 332.9 613.5 334.9 615.5 326.4zM560.2 332.9 551.7 334.9 553.7 326.4zM517.7 290.4 515.7 298.9 524.2 296.9zM485.5 258.2 477 260.2 479 251.7zM443 215.7 441 224.2 449.5 222.2zM482.9 168.3 477 193.3 502 187.4zM443 153.9 441 162.4 449.5 160.4zM468.5 128.4 466.4 136.9 475 134.9z"/><path fill="#5bdfa6" stroke="#5bdfa6" stroke-width="0.5" d="M557.6 93.6 582.6 87.7 576.7 112.7zM517.7 79.2 526.2 77.1 524.2 85.7zM543.2 53.7 551.7 51.7 549.7 60.2zM605 53.7 613.5 51.7 611.5 60.2zM647.5 96.2 649.5 87.7 641 89.7zM679.7 128.4 688.2 126.4 686.2 134.9zM722.2 170.9 724.2 162.4 715.7 164.4zM682.3 218.3 688.2 193.3 663.2 199.2zM722.2 232.7 724.2 224.2 715.7 226.2zM696.7 258.2 698.8 249.7 690.2 251.7zM607.6 293 613.5 268.1 588.5 273.9zM647.5 307.4 649.5 298.9 641 300.9zM622 332.9 624 324.4 615.5 326.4zM560.2 332.9 562.3 324.4 553.7 326.4zM517.7 290.4 526.2 288.4 524.2 296.9zM485.5 258.2 487.5 249.7 479 251.7zM443 215.7 451.5 213.6 449.5 222.2zM482.9 168.3 507.8 162.4 502 187.4zM443 153.9 451.5 151.9 449.5 160.4zM468.5 128.4 477 126.4 475 134.9z"/><path fill="#31996d" stroke="#31996d" stroke-width="0.5" d="M551.7 118.5 562 123.1 564.9 121.9 573.3 127.1 564.9 121.9 574.5 121.9 576.7 112.7zM518.7 100.2 519.3 100.5 519.5 101.2 526.2 98.2 517.7 96.2zM515.7 87.7 523 90.9 515.7 87.7 523.8 87.7 523.5 88.7 524.2 85.7zM541.2 62.2 548.5 65.4 544.7 63.7 545.7 63.3 548.6 65.1 545.7 63.3 549 63.3 549.7 60.2zM562.3 62.2 553.7 60.2 555 65.4zM554.9 65.1 554.5 63.3 557.8 63.3 558.8 63.7 555 65.4zM613.5 118.5 588.5 112.7 590.7 121.9 600.3 121.9 591.9 127.1 600.3 121.9 603.2 123.1zM602.9 62.2 610.2 65.4 611.5 60.2zM606.4 63.7 607.4 63.3 610.7 63.3 610.3 65.1 610.2 65.4zM624 62.2 615.5 60.2 616.7 65.4zM616.6 65.1 619.5 63.3 620.5 63.7 616.7 65.4zM616.2 63.3 619.5 63.3 616.6 65.1zM649.5 87.7 641 85.7 641.7 88.9 641.4 87.7 649.5 87.7zM647.5 96.2 639 98.2 645.7 101.2 645.9 100.5 646.5 100.2 646.2 101.5zM688.2 193.3 663.2 187.4 664.6 193.3 688.2 193.3 665.9 198.6 688.2 193.3 666.9 202.8zM677.7 136.9 681.2 138.5 682.2 138.1 685.1 139.8 682.2 138.1 685.5 138.1 686.2 134.9zM698.8 136.9 690.2 134.9 691.5 140.2 691.4 139.8 694.3 138.1 695.3 138.5zM691 138.1 694.3 138.1 691.4 139.8zM724.2 162.4 715.7 160.4 716.5 163.6 716.2 162.4 724.2 162.4 716.6 164.2 724.2 162.4zM722.2 170.9 713.7 173 720.4 176 720.7 175.2 721.3 175zM682.3 218.3 657.4 224.2 678.7 233.7zM677 233 677.8 230.8 679.5 230.1 678.7 233.7zM724.2 224.2 715.7 222.2 716.2 224.2 724.2 224.2zM722.2 232.7 713.7 234.7 720.4 237.7 720.7 237 721.3 236.7zM696.7 258.2 688.2 260.2 694.9 263.2 695.2 262.5 695.8 262.2zM680.9 263.4 680.7 262.2 681.2 262.5 681.5 263.2 688.2 260.2 679.7 258.2zM607.6 293 582.6 298.9 603.9 308.5 602.2 307.7 603.1 305.6 604.8 304.8zM649.5 298.9 641 296.9 641.6 299.7 641.4 298.9 649.5 298.9 642.2 302.2zM647.5 307.4 639 309.5 645.7 312.4 645.9 311.7 646.5 311.5 646.2 312.7zM622 332.9 613.5 334.9 620.2 337.9 620.4 337.2 621 337zM605.9 337 606.5 337.2 606.8 337.9 613.5 334.9 605 332.9zM560.4 304.8 562.1 305.6 563 307.7 561.3 308.5 582.6 298.9 557.6 293zM560.2 332.9 551.7 334.9 558.4 337.9 558.7 337.2 559.3 337 559 338.2zM544.2 337 544.8 337.2 545 337.9 551.7 334.9 543.2 332.9zM519 312.7 518.7 311.5 519.3 311.7 519.5 312.4 526.2 309.5 517.7 307.4zM515.7 298.9 523 302.2 515.7 298.9 523.8 298.9 524.2 296.9zM485.7 230.1 487.4 230.8 488.2 233 507.8 224.2 482.9 218.3zM485.5 258.2 477 260.2 483.7 263.2 484 262.5 484.5 262.2zM469.4 262.2 470 262.5 470.3 263.2 477 260.2 468.5 258.2zM444.2 238 443.9 236.7 444.5 237 444.8 237.7 451.5 234.7 443 232.7zM441 224.2 449 224.2 448.6 226 448.2 227.4 449.5 222.2zM477 193.3 500.6 193.3 502 187.4zM444.2 176.2 443.9 175 444.5 175.2 444.8 176 451.5 173 443 170.9zM441 162.4 449 162.4 449.5 160.4zM466.4 136.9 473.7 140.2 475 134.9zM469.9 138.5 470.9 138.1 474.2 138.1 473.8 139.8 473.7 140.2zM487.5 136.9 479 134.9 479.7 138.1 483 138.1 480.1 139.8 483 138.1 484 138.5z"/><path fill="#42b584" stroke="#42b584" stroke-width="0.5" d="M582.6 87.7 576.7 112.7 582.6 111.3 582.6 87.7 592.1 109zM526.2 98.2 529.5 90.9 527.8 94.7 527.4 93.7 529.1 90.8 527.4 93.7 527.4 90.4 524.2 89.7zM526.2 77.1 524.2 85.7 527.4 84.9 527.4 81.6 527.8 80.6 529.5 84.4zM551.7 51.7 549.7 60.2 551.7 59.7 551.7 51.7 555 58.9zM560.2 53.7 562.3 62.2 565.5 54.9zM565.3 55.5 564.5 55.2 564.3 54.6 565.5 54.9zM607.6 93.6 613.5 118.5 623 97.2 622.3 98.9 620.1 98.1 619.4 96.4zM613.5 51.7 611.5 60.2 613.5 59.7 613.5 51.7 616.7 58.9zM622 53.7 624 62.2 627.3 54.9zM627 55.5 626.3 55.2 626 54.6 627.3 54.9zM647.5 79.2 649.5 87.7 652.7 80.4zM652.5 81 651.8 80.7 651.5 80.1 652.7 80.4zM652.7 95 649.5 87.7 647.5 96.2zM651.5 95.2 651.8 94.7 652.5 94.4 652.7 95zM682.3 168.3 688.2 193.3 697.8 172zM697 173.7 694.9 172.8 694.1 171.1 697.8 172zM688.2 126.4 686.2 134.9 691.5 133.7zM690 134 688.2 126.4 691.5 133.7zM688.2 134.5 688.2 126.4 690 134zM696.7 128.4 698.8 136.9 702 129.7zM701.7 130.2 701 130 700.8 129.4 702 129.7zM722.2 153.9 724.2 162.4 727.5 155.2 727.2 155.7 726.5 155.5 726.3 154.9zM727.5 169.7 724.2 162.4 722.2 170.9zM726.3 170 726.5 169.4 727.2 169.1 727.5 169.7zM697.8 214.6 688.2 193.3 682.3 218.3zM694.1 215.5 694.9 213.8 697 212.9 697.8 214.6zM722.2 215.7 724.2 224.2 727.5 216.9zM727.2 217.5 726.5 217.2 726.3 216.6 727.5 216.9zM726.3 231.7 726.5 231.1 727.2 230.9 727.5 231.4 724.2 224.2 722.2 232.7zM700.8 257.2 701 256.6 701.7 256.4 698.8 249.7 696.7 258.2zM688.2 260.2 690 252.6 691.5 252.9 686.2 251.7zM688.2 260.2 688.2 252.1 690 252.6zM623 289.4 613.5 268.1 607.6 293zM619.4 290.2 620.1 288.5 622.3 287.7 623 289.4zM647.5 290.4 649.5 298.9 652.7 291.6 652.5 292.2 651.8 291.9 651.5 291.4zM651.5 306.5 651.8 305.9 652.5 305.6 652.7 306.2 649.5 298.9 647.5 307.4zM627.3 331.7 624 324.4 622 332.9zM626 332 626.3 331.4 627 331.1 627.3 331.7zM613.5 334.9 613.5 326.9 615.3 327.3 616.7 327.7 611.5 326.4zM582.6 298.9 582.6 275.3 576.7 273.9zM565.5 331.7 562.3 324.4 560.2 332.9zM564.3 332 564.5 331.4 565.3 331.1 565.5 331.7zM551.7 334.9 555 327.7 551.7 334.9 553.5 327.3 551.7 334.9 551.7 326.9 549.7 326.4zM526.2 309.5 527.8 306 527.4 305 529.1 302.1 527.4 305 527.4 301.7 524.2 300.9zM526.2 288.4 524.2 296.9 527.4 296.2 527.4 292.9 529.1 295.8 527.4 292.9 527.8 291.9 529.5 295.7zM507.8 224.2 512.4 213.9 511.2 211 511.2 201.4 502 199.2zM490.8 256.9 489.5 257.2 489.8 256.6 490.5 256.4 487.5 249.7 485.5 258.2zM477 260.2 477 252.1 475 251.7zM451.5 234.7 454.7 227.4 453 231.2 452.6 230.2 452.6 226.9 449.5 226.2zM451.5 213.6 449.5 222.2 454.7 220.9zM454.4 221 452.6 221.4 452.6 218.1 453 217.1 454.7 220.9zM507.8 162.4 502 187.4 517.4 183.8 516.4 184 511.2 175.6 512.4 172.7zM511.2 185.2 511.2 175.6 516.4 184zM451.5 173 454.7 165.7 453 169.5 452.6 168.5 454.4 165.6 452.6 168.5 452.6 165.2 449.5 164.4zM451.5 151.9 449.5 160.4 454.7 159.2zM454.4 159.3 452.6 156.4 453 155.4 454.7 159.2zM452.6 159.7 452.6 156.4 454.4 159.3zM477 126.4 475 134.9 477 134.5 477 126.4zM485.5 128.4 487.5 136.9 490.8 129.7 490.5 130.2 489.8 130 489.5 129.4z"/><path fill="#278961" stroke="#278961" stroke-width="0.5" d="M573.1 128.1 573.3 127.1 574.5 121.9 582.6 118.5 577.2 123.9 582.6 118.5 582.6 111.3 576.7 112.7zM523.8 87.7 526.2 87.7 527.4 84.9 524.2 85.7zM549 63.3 551.7 62.2 551.7 59.7 549.7 60.2zM610.7 63.3 613.5 62.2 613.5 59.7 611.5 60.2zM647.5 96.2 646.5 100.2 647.9 98.9 649.5 98.2 650.2 96.6 651.5 95.2zM685.5 138.1 688.2 136.9 689.6 135.6 688.2 136.9 688.2 134.5 690.2 134.9 688.2 134.5 686.2 134.9zM722.2 170.9 721.3 175 722.6 173.6 723.2 174 724.2 173 724.9 171.4 726.3 170 727.5 169.7zM722.6 173.6 724.2 173 723.2 174zM682.3 218.3 679.5 230.1 683.5 226.1 688.2 224.2 690.2 219.5 691.2 221.2 690.2 219.5 694.1 215.5zM722.2 232.7 721.3 236.7 722.6 235.4 724.2 234.7 727.5 231.4 725.3 233.7 724.2 234.7 724.9 233.1 726.3 231.7zM696.7 258.2 695.5 263.4 695.8 262.2 697.1 260.9 697.7 261.2 697.1 260.9 698.8 260.2 702 256.9zM699.8 259.2 699.4 258.6 700.8 257.2 702 256.9zM698.8 260.2 699.4 258.6 699.8 259.2zM607.6 293 603.9 308.5 604.8 304.8 608.8 300.9 610.5 301.9 608.8 300.9 613.5 298.9 615.4 294.2 619.4 290.2 623 289.4zM647.5 307.4 646.5 311.5 647.9 310.1 649.5 309.5 650.2 307.8 651.5 306.5 652.7 306.2zM622 332.9 620.7 338.2 621 337 622.4 335.6 624 334.9 627.3 331.7zM625 333.9 624.7 333.3 626 332 627.3 331.7zM624 334.9 624.7 333.3 625 333.9zM560.2 332.9 559.3 337 560.7 335.6 562.3 334.9 562.9 333.3 564.3 332zM523.8 298.9 526.2 298.9 527.4 296.2 524.2 296.9zM485.5 258.2 484.3 263.4 484.5 262.2 485.9 260.9 486.5 261.2 485.9 260.9 487.5 260.2 488.2 258.6 489.5 257.2zM449 224.2 449.5 226.2 449 224.2 451.5 224.2 452.6 221.4 453.1 221.3 449.5 222.2zM500.6 193.3 502 199.2 500.6 193.3 507.8 193.3 511.2 185.2 515 184.3 502 187.4zM449 162.4 451.5 162.4 452.6 159.7 449.5 160.4zM474.2 138.1 477 136.9 477 134.5 475 134.9z"/><path fill="#4bc490" stroke="#4bc490" stroke-width="0.5" d="M531.1 87.7 526.2 79.8 527.4 81.6 527.4 84.9 526.2 87.7 527.4 90.4 526.2 90.2 527.4 90.4 527.4 93.7zM508.7 98.2 507 100.9 507 95.5zM508.7 77.1 507 79.8 507 74.5zM534.2 51.7 532.5 54.3 532.5 49zM562.3 49 562.7 49.7 563.3 50.6 562.3 50 563.3 50.6 562.3 51.7 562.9 53.3 563.9 51.7zM595.9 51.7 594.2 54.3 594.2 49zM624 49 624.5 49.7 625 50.6 624 50 625 50.6 624 51.7 624.7 53.3 625.7 51.7zM616.5 84.7 613.5 87.7 615.4 92.4 618.3 87.7zM649.5 74.5 650 75.2 650.5 76.1 649.5 77.1 650.2 78.8 649.8 79.3 651.2 77.1zM650 96.4 650.2 96.6 649.5 98.2 650.5 99.2 649.5 99.9 650.5 99.2 650 100.1 649.5 100.9 651.2 98.2zM582.6 170.2 586.5 176.6 591.4 184.5 582.6 193.3 591.4 202.1 582.6 207.6 591.4 202.1 586.5 210 582.6 216.4 596.9 193.3zM670.7 126.4 669 129.1 669 123.7zM699.8 125.4 698.8 126.4 699.4 128 700.4 126.4zM691.2 159.4 688.2 157.6 691.2 159.4 688.2 162.4 690.2 167.1 688.5 169.8 688.2 170.3 693.1 162.4zM724.2 149.2 724.7 150 725.3 150.9 724.2 150.2 725.3 150.9 724.2 151.9 724.9 153.5 724.5 154.1 725.9 151.9zM724.5 170.8 724.9 171.3 724.2 173 725.3 174 724.7 174.9 724.2 175.6 725.9 173zM688.2 216.3 688.5 216.8 690.2 219.5 688.2 224.2 691.2 227.2 693.1 224.2zM724.2 211 724.7 211.7 725.3 212.6 724.2 213.6 724.9 215.3 725.9 213.6zM724.7 232.7 724.9 233.1 724.2 234.7 725.3 235.7 724.2 236.4 725.3 235.7 724.7 236.6 724.2 237.4 725.9 234.7zM699.4 258.6 698.8 260.2 699.8 261.2 698.8 261.9 699.8 261.2 700.4 260.2zM670.7 260.2 669 262.9 669 257.5zM615.4 294.2 613.5 298.9 616.5 301.9 618.3 298.9zM650 286.6 650.5 287.4 649.5 288.4 650.2 290 649.9 290.5 651.2 288.4zM650.2 307.8 649.5 309.5 650.5 310.5 651.2 309.5zM624.7 333.3 624 334.9 625 336 624.6 336.7 625.7 334.9zM595.9 334.9 594.2 337.6 594.2 332.3zM562.8 333.1 562.9 333.3 562.3 334.9 563.3 336 562.3 336.6 563.3 336 563.9 334.9zM534.2 334.9 532.5 337.6 532.5 332.3zM531.1 298.9 526.2 291 527.4 292.9 527.4 296.2 526.2 296.4 527.4 296.2 526.2 298.9 527.4 301.7 526.2 301.4 527.4 301.7 527.4 305zM508.7 309.5 507 312.1 507 306.8zM508.7 288.4 507 291.1 507 285.7zM522.1 193.3 511.2 175.6 511.2 185.2 507.8 193.3 511.2 201.4 511.2 211 507.8 216.4zM487.5 257.5 487.6 257.7 488.2 258.6 487.5 260.2 488.5 261.2 488 262.1 487.5 262.9 489.2 260.2zM459.4 260.2 457.8 262.9 457.8 257.5zM456.4 224.2 452.6 218.1 452.6 221.4 451.5 221.7 452.6 221.4 451.5 224.2 452.6 226.9 451.5 226.7 452.6 226.9 452.6 230.2zM433.9 234.7 432.3 237.4 432.3 232zM433.9 213.6 432.3 216.3 432.3 211zM456.4 162.4 452.6 156.4 452.6 159.7 451.5 159.9 452.6 159.7 451.5 162.4 452.6 165.2 451.5 164.9 452.6 165.2 452.6 168.5zM433.9 173 432.3 175.6 432.3 170.3zM433.9 151.9 432.3 154.6 432.3 149.2zM459.4 126.4 457.8 129.1 457.8 123.7zM488.5 125.4 487.5 126.4 488.2 128 489.2 126.4z"/><path fill="#4bc591" stroke="#4bc591" stroke-width="0.5" d="M531.1 87.7 539 100.4 546.9 87.7zM508.7 98.2 511.4 102.6 514 98.2zM508.7 77.1 511.4 81.5 514 77.1zM534.2 51.7 536.9 56 539.5 51.7zM569.3 51.7 566.6 56 563.9 51.7zM595.9 51.7 598.6 56 601.3 51.7zM631 51.7 628.3 56 625.7 51.7zM634.1 87.7 626.2 100.4 618.3 87.7zM656.5 77.1 653.8 81.5 651.2 77.1zM656.5 98.2 653.8 102.6 651.2 98.2zM643.1 193.3 620 230.7 596.9 193.3zM670.7 126.4 673.3 130.8 676 126.4zM705.8 126.4 703.1 130.8 700.4 126.4zM708.8 162.4 701 175.2 693.1 162.4zM731.3 151.9 728.6 156.3 725.9 151.9zM731.3 173 728.6 177.3 725.9 173zM708.8 224.2 701 236.9 693.1 224.2zM731.3 213.6 728.6 218 725.9 213.6zM731.3 234.7 728.6 239 725.9 234.7zM705.8 260.2 703.1 264.5 700.4 260.2zM670.7 260.2 673.3 264.5 676 260.2zM634.1 298.9 626.2 311.7 618.3 298.9zM656.5 288.4 653.8 292.7 651.2 288.4zM656.5 309.5 653.8 313.8 651.2 309.5zM631 334.9 628.3 339.3 625.7 334.9zM595.9 334.9 598.6 339.3 601.3 334.9zM569.3 334.9 566.6 339.3 563.9 334.9zM534.2 334.9 536.9 339.3 539.5 334.9zM531.1 298.9 539 311.7 546.9 298.9zM508.7 309.5 511.4 313.8 514 309.5zM508.7 288.4 511.4 292.7 514 288.4zM522.1 193.3 545.2 230.7 568.3 193.3zM494.5 260.2 491.9 264.5 489.2 260.2zM459.4 260.2 462.1 264.5 464.8 260.2zM456.4 224.2 464.2 236.9 472.1 224.2zM433.9 234.7 436.6 239 439.3 234.7zM433.9 213.6 436.6 218 439.3 213.6zM456.4 162.4 464.2 175.2 472.1 162.4zM433.9 173 436.6 177.3 439.3 173zM433.9 151.9 436.6 156.3 439.3 151.9zM459.4 126.4 462.1 130.8 464.8 126.4zM494.5 126.4 491.9 130.8 489.2 126.4z"/><path fill="#61e9ae" stroke="#61e9ae" stroke-width="0.5" d="M531.1 87.7 539 74.9 546.9 87.7zM508.7 98.2 511.4 93.9 514 98.2zM508.7 77.1 511.4 72.8 514 77.1zM534.2 51.7 536.9 47.3 539.5 51.7zM569.3 51.7 566.6 47.3 563.9 51.7zM595.9 51.7 598.6 47.3 601.3 51.7zM631 51.7 628.3 47.3 625.7 51.7zM634.1 87.7 626.2 74.9 618.3 87.7zM656.5 77.1 653.8 72.8 651.2 77.1zM656.5 98.2 653.8 93.9 651.2 98.2zM643.1 193.3 620 155.9 596.9 193.3zM670.7 126.4 673.3 122.1 676 126.4zM705.8 126.4 703.1 122.1 700.4 126.4zM708.8 162.4 701 149.7 693.1 162.4zM731.3 151.9 728.6 147.6 725.9 151.9zM731.3 173 728.6 168.6 725.9 173zM708.8 224.2 701 211.4 693.1 224.2zM731.3 213.6 728.6 209.3 725.9 213.6zM731.3 234.7 728.6 230.3 725.9 234.7zM705.8 260.2 703.1 255.8 700.4 260.2zM670.7 260.2 673.3 255.8 676 260.2zM634.1 298.9 626.2 286.2 618.3 298.9zM656.5 288.4 653.8 284 651.2 288.4zM656.5 309.5 653.8 305.1 651.2 309.5zM631 334.9 628.3 330.6 625.7 334.9zM595.9 334.9 598.6 330.6 601.3 334.9zM569.3 334.9 566.6 330.6 563.9 334.9zM534.2 334.9 536.9 330.6 539.5 334.9zM531.1 298.9 539 286.2 546.9 298.9zM508.7 309.5 511.4 305.1 514 309.5zM508.7 288.4 511.4 284 514 288.4zM522.1 193.3 545.2 155.9 568.3 193.3zM494.5 260.2 491.9 255.8 489.2 260.2zM459.4 260.2 462.1 255.8 464.8 260.2zM456.4 224.2 464.2 211.4 472.1 224.2zM433.9 234.7 436.6 230.3 439.3 234.7zM433.9 213.6 436.6 209.3 439.3 213.6zM456.4 162.4 464.2 149.7 472.1 162.4zM433.9 173 436.6 168.6 439.3 173zM433.9 151.9 436.6 147.6 439.3 151.9zM459.4 126.4 462.1 122.1 464.8 126.4zM494.5 126.4 491.9 122.1 489.2 126.4z"/><path fill="#39a678" stroke="#39a678" stroke-width="0.5" d="M549.8 92.4 551.7 87.7 548.7 84.7 546.9 87.7zM515.7 100.9 515.2 100.1 514.7 99.2 515.7 98.2 515 96.6 515.5 95.9 514 98.2zM515.3 79.3 515 78.8 515.7 77.1 514.7 76.1 515.2 75.2 515.7 74.5 514 77.1zM540.9 53.9 540.5 53.3 541.2 51.7 540.2 50.6 541.2 50 540.2 50.6 540.7 49.7 541.2 49 539.5 51.7zM569.3 51.7 571 49 571 54.3zM602.6 53.8 602.3 53.3 602.9 51.7 601.9 50.6 602.5 49.7 602.9 49 601.3 51.7zM631 51.7 632.7 49 632.7 54.3zM634.1 87.7 637.8 93.7 637.8 90.4 639 87.7 637.8 84.9 637.8 81.6zM656.5 77.1 658.2 74.5 658.2 79.8zM656.5 98.2 658.2 95.5 658.2 100.9zM643.1 193.3 657.4 216.4 654 211 654 201.4 657.4 200.6 654 201.4 657.4 193.3 654 185.2 657.4 186 654 185.2 654 175.6 657.4 170.2zM677 128 677.7 126.4 676.7 125.4 677.7 124.7 676.7 125.4 677.2 124.5 677.7 123.7 676 126.4zM705.8 126.4 707.4 123.7 707.4 129.1zM708.8 162.4 712.6 168.5 712.6 165.2 713.7 164.9 712.6 165.2 713.7 162.4 712.6 159.7 713.7 159.9 712.6 159.7 712.6 156.4zM731.3 151.9 732.9 149.2 732.9 154.6zM731.3 173 732.9 170.3 732.9 175.6zM708.8 224.2 712.6 230.2 712.6 226.9 713.7 224.2 712.6 221.4 712.6 218.1zM731.3 213.6 732.9 211 732.9 216.3zM731.3 234.7 732.9 232 732.9 237.4zM705.8 260.2 707.4 257.5 707.4 262.9zM677 261.8 676.7 261.2 677.7 261.9 676.7 261.2 677.7 260.2 677 258.6 676 260.2zM634.1 298.9 639 306.8 637.8 305 637.8 301.7 639 301.4 637.8 301.7 639 298.9 637.8 296.2 637.8 292.9 639 291zM656.5 288.4 658.2 285.7 658.2 291.1zM656.5 309.5 658.2 306.8 658.2 312.1zM631 334.9 632.7 332.3 632.7 337.6zM602.4 336.7 601.9 336 602.9 336.6 601.9 336 602.9 334.9 602.3 333.3 602.6 332.8 601.3 334.9zM569.3 334.9 571 332.3 571 337.6zM540.2 336 541.2 336.6 540.2 336 541.2 334.9 540.5 333.3 539.5 334.9zM548.7 301.9 551.7 298.9 549.8 294.2 546.9 298.9zM514.7 310.5 515.7 311.1 514.7 310.5 515.7 309.5 515 307.8 514 309.5zM515 290 515.7 288.4 514.7 287.4 515.7 286.7 514.7 287.4 514 288.4zM582.6 216.4 578.7 210 573.8 202.1 582.6 193.3 573.8 184.5 582.6 179 573.8 184.5 568.3 193.3zM494.5 260.2 496.2 257.5 496.2 262.9zM466.4 262.9 466 262.1 465.4 261.2 466.4 260.2 465.8 258.6 466.3 257.7 466.4 257.5 464.8 260.2zM477 232 475.6 229.9 474 227.2 477 224.2 475 219.5 472.1 224.2zM439.9 235.7 441 234.7 440.3 233.1 440.7 232.4 439.3 234.7zM440.3 215.3 441 213.6 439.9 212.6 440.5 211.7 441 211 439.3 213.6zM477 170.3 476.7 169.8 475 167.1 477 162.4 474 159.4 477 157.6 474 159.4 475.6 156.7 477 154.6 472.1 162.4zM439.9 174 441 173 440.3 171.3 439.3 173zM440.3 153.5 441 151.9 439.9 150.9 441 150.2 439.9 150.9 440.5 150 441 149.2 439.3 151.9zM465.8 128 466.4 126.4 465.4 125.4 466.4 124.7 465.4 125.4 464.8 126.4zM494.5 126.4 496.2 123.7 496.2 129.1z"/><path fill="#349e71" stroke="#349e71" stroke-width="0.5" d="M517.7 96.2 513.7 95.2 515 96.6 514.7 97.2 515 96.6 515.7 98.2 517.3 98.9 516.7 99.2 517.3 98.9 518.7 100.2 519 101.5zM551.7 59.7 551.7 62.2 554.5 63.3 553.7 60.2zM582.6 111.3 582.6 118.5 590.7 121.9 588.5 112.7zM613.5 59.7 613.5 62.2 616.2 63.3 615.5 60.2zM635.7 84.4 639 87.7 641.4 87.7 641.9 89.5 642.2 90.9 641 85.7zM636.1 84.5 637.8 84.9 639 87.7 636 84.7 635.7 84.4zM649 184 654 185.2 657.4 193.3 664.6 193.3 665.3 195.9 663.2 187.4zM688.2 134.5 686.2 134.9 688.2 134.5 688.2 136.9 691 138.1 690.2 134.9zM710.5 159.2 710.8 159.3 712.6 159.7 713.7 162.4 710.7 159.4 713.7 162.4 716.2 162.4 715.7 160.4zM710.5 220.9 710.8 221 712.6 221.4 713.7 224.2 716.2 224.2 715.7 222.2zM679.7 258.2 675.7 257.2 677 258.6 677.7 260.2 679.3 260.9 680.7 262.2zM637.8 296.2 639 298.9 641.4 298.9 641 296.9zM605 332.9 599.7 331.7 602.9 334.9 604.5 335.6 605.9 337 606.2 338.2zM600.9 332 602.3 333.3 602.9 334.9 601.9 333.9 599.7 331.7zM557.6 293 542.2 289.4 545.8 290.2 549.8 294.2 551.7 298.9 556.4 300.9 560.4 304.8zM543.2 332.9 539.2 332 540.5 333.3 541.2 334.9 540.2 333.9 537.9 331.7 541.2 334.9 542.8 335.6 542.2 336 542.8 335.6 544.2 337 544.5 338.2zM517.7 307.4 513.7 306.5 515 307.8 514.7 308.4 512.5 306.2 519 312.7zM515 307.8 515.7 309.5 514.7 308.4zM516.7 310.5 517.3 310.1 518.7 311.5 519 312.7zM515.7 309.5 517.3 310.1 516.7 310.5zM482.9 218.3 467.4 214.6 471.1 215.5 475 219.5 474 221.2 475 219.5 477 224.2 475.4 222.6 486.5 233.7zM480 227.2 477 224.2 481.7 226.1 485.7 230.1 486.5 233.7zM468.5 258.2 464.4 257.2 465.8 258.6 466.4 260.2 468.1 260.9 467.5 261.2 468.1 260.9 469.4 262.2zM443 232.7 437.7 231.4 438.9 231.7 440.3 233.1 439.9 233.7 440.3 233.1 441 234.7 442.6 235.4 443.9 236.7zM443 170.9 438.9 170 440.3 171.4 441 173 442.6 173.6 443.9 175zM477 134.5 477 136.9 479.7 138.1 479 134.9z"/><path fill="#4cc692" stroke="#4cc692" stroke-width="0.5" d="M517.7 96.2 526.2 98.2 524.2 89.7zM560.2 53.7 562.3 62.2 553.7 60.2zM607.6 93.6 613.5 118.5 588.5 112.7zM622 53.7 624 62.2 615.5 60.2zM647.5 79.2 649.5 87.7 641 85.7zM682.3 168.3 688.2 193.3 663.2 187.4zM696.7 128.4 698.8 136.9 690.2 134.9zM722.2 153.9 724.2 162.4 715.7 160.4zM722.2 215.7 724.2 224.2 715.7 222.2zM679.7 258.2 688.2 260.2 686.2 251.7zM647.5 290.4 649.5 298.9 641 296.9zM605 332.9 613.5 334.9 611.5 326.4zM557.6 293 582.6 298.9 576.7 273.9zM543.2 332.9 551.7 334.9 549.7 326.4zM517.7 307.4 526.2 309.5 524.2 300.9zM482.9 218.3 507.8 224.2 502 199.2zM468.5 258.2 477 260.2 475 251.7zM443 232.7 451.5 234.7 449.5 226.2zM443 170.9 451.5 173 449.5 164.4zM485.5 128.4 487.5 136.9 479 134.9z"/><path fill="#60e7ad" stroke="#60e7ad" stroke-width="0.5" d="M517.7 96.2 515.7 87.7 524.2 89.7zM560.2 53.7 551.7 51.7 553.7 60.2zM607.6 93.6 582.6 87.7 588.5 112.7zM622 53.7 613.5 51.7 615.5 60.2zM647.5 79.2 639 77.1 641 85.7zM682.3 168.3 657.4 162.4 663.2 187.4zM696.7 128.4 688.2 126.4 690.2 134.9zM722.2 153.9 713.7 151.9 715.7 160.4zM722.2 215.7 713.7 213.6 715.7 222.2zM679.7 258.2 677.7 249.7 686.2 251.7zM647.5 290.4 639 288.4 641 296.9zM605 332.9 602.9 324.4 611.5 326.4zM557.6 293 551.7 268.1 576.7 273.9zM543.2 332.9 541.2 324.4 549.7 326.4zM517.7 307.4 515.7 298.9 524.2 300.9zM482.9 218.3 477 193.3 502 199.2zM468.5 258.2 466.4 249.7 475 251.7zM443 232.7 441 224.2 449.5 226.2zM443 170.9 441 162.4 449.5 164.4zM485.5 128.4 477 126.4 479 134.9z"/><path fill="#4fcc97" stroke="#4fcc97" stroke-width="0.5" d="M527.4 90.4 526.2 87.7 523.8 87.7 524.2 89.7zM560.2 53.7 564.3 54.6 562.9 53.3 562.3 51.7 560.7 51 559.3 49.6zM607.6 93.6 619.4 96.4 615.4 92.4 613.5 87.7 608.8 85.7 604.8 81.8zM622 53.7 626 54.6 624.7 53.3 624 51.7 622.4 51 621 49.6zM647.5 79.2 651.5 80.1 650.2 78.8 649.5 77.1 647.9 76.5 646.5 75.1zM682.3 168.3 694.1 171.1 690.2 167.1 688.2 162.4 683.5 160.5 679.5 156.5zM696.7 128.4 700.8 129.4 699.4 128 698.8 126.4 697.1 125.7 695.8 124.4zM722.2 153.9 726.3 154.9 724.9 153.5 724.2 151.9 722.6 151.2 721.3 149.9zM722.2 215.7 727.5 216.9 726.3 216.6 724.9 215.2 725.3 214.7 724.9 215.2 724.2 213.6 722.6 213 723.2 212.6 722.6 213 721.3 211.6zM688.4 252.2 688.2 252.1 688.2 249.7 686.4 247.9 688.2 249.7 685.5 248.5 686.2 251.7zM647.5 290.4 652.7 291.6 649.5 288.4 647.9 287.7 648.5 287.4 647.9 287.7 646.5 286.4zM651.5 291.4 650.2 290 649.5 288.4 650.5 289.4 652.7 291.6zM613.5 326.9 613.5 324.4 610.7 323.3 611.5 326.4zM582.6 275.3 582.6 268.1 588.5 273.9 582.6 268.1 574.5 264.7 573.3 259.5 573.1 258.5 576.7 273.9zM553 327.2 551.7 326.9 551.7 324.4 552.5 325.2 550.8 323.4 551.7 324.4 549 323.3 549.7 326.4zM527.4 301.7 526.2 298.9 523.8 298.9 524.2 300.9zM511.2 201.4 507.8 193.3 498.3 183.8 502 199.2zM502 187.4 507.8 193.3 500.6 193.3 499.3 188 498.3 183.8zM477 252.1 477 249.7 474.2 248.5 475 251.7zM452.6 226.9 451.5 224.2 449 224.2 449.5 226.2zM452.6 165.2 451.5 162.4 449 162.4 449.5 164.4zM485.5 128.4 489.5 129.4 488.2 128 487.5 126.4 485.9 125.7 484.5 124.4z"/><path fill="none" stroke="#0f3a25" stroke-width="0.9" stroke-linecap="round" d="M559.5 193.3L567.9 193.3M597.3 193.3L605.7 193.3M574 184.4L582.6 179M591.2 184.4L582.6 179M582.6 179L582.6 132.8M582.6 179L545.2 155.9M582.6 179L620 155.9M582.6 132.8L545.2 155.9M582.6 132.8L620 155.9M582.6 132.8L565 122M582.6 132.8L600.2 122M545.2 155.9L558.4 121.5M620 155.9L606.8 121.5M588.7 112.4L592.1 109M574.6 121.8L576.7 112.7M561.7 123L551.7 118.5M582.2 111.3L576.7 112.7M576.7 112.7L557.6 93.6M576.7 112.7L551.7 118.5M576.7 112.7L582.6 87.7M557.6 93.6L551.7 118.5M557.6 93.6L582.6 87.7M557.6 93.6L546.1 96.3M557.6 93.6L560.3 82.1M551.7 118.5L543 99.1M582.6 87.7L563.1 79M551.7 82.6L551.7 79.8M549.6 92.1L546.9 87.7M545 98.1L539 100.4M548.6 84.9L546.9 87.7M546.9 87.7L531.1 87.7M546.9 87.7L539 100.4M546.9 87.7L539 74.9M531.1 87.7L539 100.4M531.1 87.7L539 74.9M531.1 87.7L527.5 93.5M531.1 87.7L527.5 81.9M539 100.4L527.4 96M539 74.9L527.4 79.4M524.1 85.6L523 84.4M527.1 90.4L524.2 89.7M527.8 94.8L526.2 98.2M523.7 87.7L524.2 89.7M524.2 89.7L517.7 96.2M524.2 89.7L526.2 98.2M524.2 89.7L515.7 87.7M517.7 96.2L526.2 98.2M517.7 96.2L515.7 87.7M517.7 96.2L518.6 99.8M517.7 96.2L514.1 95.3M526.2 98.2L519.7 101.1M515.7 87.7L512.8 94.2M513.8 98.2L513 98.2M517.2 98.9L515.7 99.9M519.3 100.6L520.1 102.6M514.9 99.4L515.7 99.9M515.7 99.9L515.7 105.2M515.7 99.9L520.1 102.6M515.7 99.9L511.4 102.6M515.7 105.2L520.1 102.6M515.7 105.2L511.4 102.6M515.7 105.2L518.4 106.9M515.7 105.2L513 106.9M520.1 102.6L518.4 106.9M511.4 102.6L513 106.9M518.4 106.9L513 106.9M515.7 100.9L515.7 100.1M514.5 99L514 98.2M515 96.7L514 98.2M513.3 94.6L511.4 93.9M514 98.2L508.7 98.2M514 98.2L511.4 102.6M514 98.2L511.4 93.9M508.7 98.2L511.4 102.6M508.7 98.2L511.4 93.9M508.7 98.2L507 100.9M508.7 98.2L507 95.5M511.4 102.6L507 100.9M511.4 93.9L507 95.5M507 100.9L507 95.5M523 90.9L524.1 89.8M523.7 87.7L524.2 85.7M527.1 85L524.2 85.7M527.8 80.6L526.2 77.1M524.2 85.7L517.7 79.2M524.2 85.7L515.7 87.7M524.2 85.7L526.2 77.1M517.7 79.2L515.7 87.7M517.7 79.2L526.2 77.1M517.7 79.2L514.1 80M517.7 79.2L518.6 75.5M515.7 87.7L512.8 81.2M526.2 77.1L519.7 74.2M515.7 75.3L515.7 74.5M515 78.7L514 77.1M513.3 80.7L511.4 81.5M514.5 76.4L514 77.1M514 77.1L508.7 77.1M514 77.1L511.4 81.5M514 77.1L511.4 72.8M508.7 77.1L511.4 81.5M508.7 77.1L511.4 72.8M508.7 77.1L507 79.8M508.7 77.1L507 74.5M511.4 81.5L507 79.8M511.4 72.8L507 74.5M507 79.8L507 74.5M513 77.1L513.8 77.1M514.9 76L515.7 75.5M517.2 76.4L515.7 75.5M519.3 74.8L520.1 72.8M515.7 75.5L515.7 70.1M515.7 75.5L511.4 72.8M515.7 75.5L520.1 72.8M515.7 70.1L511.4 72.8M515.7 70.1L520.1 72.8M515.7 70.1L513 68.5M515.7 70.1L518.4 68.5M511.4 72.8L513 68.5M520.1 72.8L518.4 68.5M513 68.5L518.4 68.5M543.9 87.7L546.7 87.7M549 84.5L551.7 82.8M556.2 85.6L551.7 82.8M562.2 80.9L564.5 74.9M551.7 82.8L551.7 67.1M551.7 82.8L539 74.9M551.7 82.8L564.5 74.9M551.7 67.1L539 74.9M551.7 67.1L564.5 74.9M551.7 67.1L545.9 63.5M551.7 67.1L557.6 63.5M539 74.9L543.4 63.3M564.5 74.9L560 63.3M553.9 60.1L555 58.9M549.1 63L549.7 60.2M544.6 63.7L541.2 62.2M551.7 59.7L549.7 60.2M549.7 60.2L543.2 53.7M549.7 60.2L541.2 62.2M549.7 60.2L551.7 51.7M543.2 53.7L541.2 62.2M543.2 53.7L551.7 51.7M543.2 53.7L539.6 54.5M543.2 53.7L544.1 50M541.2 62.2L538.3 55.7M551.7 51.7L545.2 48.7M541.2 49.8L541.2 49M540.5 53.2L539.5 51.7M538.8 55.2L536.9 56M540 50.9L539.5 51.7M539.5 51.7L534.2 51.7M539.5 51.7L536.9 56M539.5 51.7L536.9 47.3M534.2 51.7L536.9 56M534.2 51.7L536.9 47.3M534.2 51.7L532.5 54.3M534.2 51.7L532.5 49M536.9 56L532.5 54.3M536.9 47.3L532.5 49M532.5 54.3L532.5 49M538.5 51.7L539.3 51.7M540.4 50.5L541.2 50M542.7 50.9L541.2 50M544.8 49.3L545.6 47.3M541.2 50L541.2 44.6M541.2 50L536.9 47.3M541.2 50L545.6 47.3M541.2 44.6L536.9 47.3M541.2 44.6L545.6 47.3M541.2 44.6L538.5 43M541.2 44.6L543.9 43M536.9 47.3L538.5 43M545.6 47.3L543.9 43M538.5 43L543.9 43M548.5 58.9L549.6 60.1M551.7 59.7L553.7 60.2M554.4 63L553.7 60.2M558.8 63.7L562.3 62.2M553.7 60.2L560.2 53.7M553.7 60.2L551.7 51.7M553.7 60.2L562.3 62.2M560.2 53.7L551.7 51.7M560.2 53.7L562.3 62.2M560.2 53.7L559.4 50M560.2 53.7L563.9 54.5M551.7 51.7L558.2 48.7M562.3 62.2L565.2 55.7M564.1 51.7L564.9 51.7M560.7 50.9L562.3 50M558.7 49.3L557.9 47.3M563 50.5L562.3 50M562.3 50L562.3 44.6M562.3 50L557.9 47.3M562.3 50L566.6 47.3M562.3 44.6L557.9 47.3M562.3 44.6L566.6 47.3M562.3 44.6L559.6 43M562.3 44.6L564.9 43M557.9 47.3L559.6 43M566.6 47.3L564.9 43M559.6 43L564.9 43M562.3 49L562.3 49.8M563.4 50.9L563.9 51.7M563 53.2L563.9 51.7M564.6 55.2L566.6 56M563.9 51.7L569.3 51.7M563.9 51.7L566.6 47.3M563.9 51.7L566.6 56M569.3 51.7L566.6 47.3M569.3 51.7L566.6 56M569.3 51.7L571 49M569.3 51.7L571 54.3M566.6 47.3L571 49M566.6 56L571 54.3M571 49L571 54.3M573.1 109L576.5 112.4M583 111.3L588.5 112.7M590.6 121.8L588.5 112.7M603.5 123L613.5 118.5M588.5 112.7L607.6 93.6M588.5 112.7L582.6 87.7M588.5 112.7L613.5 118.5M607.6 93.6L582.6 87.7M607.6 93.6L613.5 118.5M607.6 93.6L604.9 82.1M607.6 93.6L619.1 96.3M582.6 87.7L602.1 79M613.5 118.5L622.2 99.1M618.5 87.7L621.3 87.7M609 85.6L613.5 82.8M603 80.9L600.7 74.9M616.2 84.5L613.5 82.8M613.5 82.8L613.5 67.1M613.5 82.8L600.7 74.9M613.5 82.8L626.2 74.9M613.5 67.1L600.7 74.9M613.5 67.1L626.2 74.9M613.5 67.1L607.6 63.5M613.5 67.1L619.3 63.5M600.7 74.9L605.2 63.3M626.2 74.9L621.8 63.3M615.6 60.1L616.7 58.9M610.8 63L611.5 60.2M606.4 63.7L602.9 62.2M613.5 59.7L611.5 60.2M611.5 60.2L605 53.7M611.5 60.2L602.9 62.2M611.5 60.2L613.5 51.7M605 53.7L602.9 62.2M605 53.7L613.5 51.7M605 53.7L601.3 54.5M605 53.7L605.8 50M602.9 62.2L600 55.7M613.5 51.7L607 48.7M602.9 49.8L602.9 49M602.2 53.2L601.3 51.7M600.6 55.2L598.6 56M601.8 50.9L601.3 51.7M601.3 51.7L595.9 51.7M601.3 51.7L598.6 56M601.3 51.7L598.6 47.3M595.9 51.7L598.6 56M595.9 51.7L598.6 47.3M595.9 51.7L594.2 54.3M595.9 51.7L594.2 49M598.6 56L594.2 54.3M598.6 47.3L594.2 49M594.2 54.3L594.2 49M600.3 51.7L601.1 51.7M602.2 50.5L602.9 50M604.5 50.9L602.9 50M606.5 49.3L607.3 47.3M602.9 50L602.9 44.6M602.9 50L598.6 47.3M602.9 50L607.3 47.3M602.9 44.6L598.6 47.3M602.9 44.6L607.3 47.3M602.9 44.6L600.3 43M602.9 44.6L605.6 43M598.6 47.3L600.3 43M607.3 47.3L605.6 43M600.3 43L605.6 43M610.2 58.9L611.3 60.1M613.5 59.7L615.5 60.2M616.1 63L615.5 60.2M620.6 63.7L624 62.2M615.5 60.2L622 53.7M615.5 60.2L613.5 51.7M615.5 60.2L624 62.2M622 53.7L613.5 51.7M622 53.7L624 62.2M622 53.7L621.1 50M622 53.7L625.6 54.5M613.5 51.7L620 48.7M624 62.2L626.9 55.7M625.9 51.7L626.7 51.7M622.5 50.9L624 50M620.4 49.3L619.6 47.3M624.8 50.5L624 50M624 50L624 44.6M624 50L619.6 47.3M624 50L628.3 47.3M624 44.6L619.6 47.3M624 44.6L628.3 47.3M624 44.6L621.3 43M624 44.6L626.7 43M619.6 47.3L621.3 43M628.3 47.3L626.7 43M621.3 43L626.7 43M624 49L624 49.8M625.2 50.9L625.7 51.7M624.7 53.2L625.7 51.7M626.4 55.2L628.3 56M625.7 51.7L631 51.7M625.7 51.7L628.3 47.3M625.7 51.7L628.3 56M631 51.7L628.3 47.3M631 51.7L628.3 56M631 51.7L632.7 49M631 51.7L632.7 54.3M628.3 47.3L632.7 49M628.3 56L632.7 54.3M632.7 49L632.7 54.3M613.5 79.8L613.5 82.6M616.6 84.9L618.3 87.7M615.6 92.1L618.3 87.7M620.2 98.1L626.2 100.4M618.3 87.7L634.1 87.7M618.3 87.7L626.2 74.9M618.3 87.7L626.2 100.4M634.1 87.7L626.2 74.9M634.1 87.7L626.2 100.4M634.1 87.7L637.7 81.9M634.1 87.7L637.7 93.5M626.2 74.9L637.8 79.4M626.2 100.4L637.8 96M641.1 89.8L642.2 90.9M638.1 85L641 85.7M637.4 80.6L639 77.1M641.5 87.7L641 85.7M641 85.7L647.5 79.2M641 85.7L639 77.1M641 85.7L649.5 87.7M647.5 79.2L639 77.1M647.5 79.2L649.5 87.7M647.5 79.2L646.6 75.5M647.5 79.2L651.1 80M639 77.1L645.5 74.2M649.5 87.7L652.4 81.2M651.4 77.1L652.2 77.1M648 76.4L649.5 75.5M645.9 74.8L645.1 72.8M650.3 76L649.5 75.5M649.5 75.5L649.5 70.1M649.5 75.5L645.1 72.8M649.5 75.5L653.8 72.8M649.5 70.1L645.1 72.8M649.5 70.1L653.8 72.8M649.5 70.1L646.8 68.5M649.5 70.1L652.2 68.5M645.1 72.8L646.8 68.5M653.8 72.8L652.2 68.5M646.8 68.5L652.2 68.5M649.5 74.5L649.5 75.3M650.7 76.4L651.2 77.1M650.2 78.7L651.2 77.1M651.9 80.7L653.8 81.5M651.2 77.1L656.5 77.1M651.2 77.1L653.8 72.8M651.2 77.1L653.8 81.5M656.5 77.1L653.8 72.8M656.5 77.1L653.8 81.5M656.5 77.1L658.2 74.5M656.5 77.1L658.2 79.8M653.8 72.8L658.2 74.5M653.8 81.5L658.2 79.8M658.2 74.5L658.2 79.8M642.2 84.4L641.1 85.6M641.5 87.7L641 89.7M638.1 90.4L641 89.7M637.4 94.8L639 98.2M641 89.7L647.5 96.2M641 89.7L649.5 87.7M641 89.7L639 98.2M647.5 96.2L649.5 87.7M647.5 96.2L639 98.2M647.5 96.2L651.1 95.3M647.5 96.2L646.6 99.8M649.5 87.7L652.4 94.2M639 98.2L645.5 101.1M649.5 100.1L649.5 100.9M650.2 96.7L651.2 98.2M651.9 94.6L653.8 93.9M650.7 99L651.2 98.2M651.2 98.2L656.5 98.2M651.2 98.2L653.8 93.9M651.2 98.2L653.8 102.6M656.5 98.2L653.8 93.9M656.5 98.2L653.8 102.6M656.5 98.2L658.2 95.5M656.5 98.2L658.2 100.9M653.8 93.9L658.2 95.5M653.8 102.6L658.2 100.9M658.2 95.5L658.2 100.9M652.2 98.2L651.4 98.2M650.3 99.4L649.5 99.9M648 98.9L649.5 99.9M645.9 100.6L645.1 102.6M649.5 99.9L649.5 105.2M649.5 99.9L653.8 102.6M649.5 99.9L645.1 102.6M649.5 105.2L653.8 102.6M649.5 105.2L645.1 102.6M649.5 105.2L652.2 106.9M649.5 105.2L646.8 106.9M653.8 102.6L652.2 106.9M645.1 102.6L646.8 106.9M652.2 106.9L646.8 106.9M582.6 170.2L582.6 178.6M582.6 208L582.6 216.4M591.5 184.7L596.9 193.3M591.5 201.9L596.9 193.3M596.9 193.3L643.1 193.3M596.9 193.3L620 155.9M596.9 193.3L620 230.7M643.1 193.3L620 155.9M643.1 193.3L620 230.7M643.1 193.3L653.9 175.7M643.1 193.3L653.9 210.9M620 155.9L654.4 169.1M620 230.7L654.4 217.5M663.5 199.4L666.9 202.8M654.1 185.3L663.2 187.4M652.9 172.4L657.4 162.4M664.6 192.9L663.2 187.4M663.2 187.4L682.3 168.3M663.2 187.4L657.4 162.4M663.2 187.4L688.2 193.3M682.3 168.3L657.4 162.4M682.3 168.3L688.2 193.3M682.3 168.3L679.6 156.8M682.3 168.3L693.8 171M657.4 162.4L676.8 153.7M688.2 193.3L696.9 173.8M693.3 162.4L696.1 162.4M683.8 160.3L688.2 157.6M677.8 155.7L675.5 149.7M691 159.3L688.2 157.6M688.2 157.6L688.2 141.8M688.2 157.6L675.5 149.7M688.2 157.6L701 149.7M688.2 141.8L675.5 149.7M688.2 141.8L701 149.7M688.2 141.8L682.4 138.2M688.2 141.8L694 138.2M675.5 149.7L679.9 138.1M701 149.7L696.5 138.1M690.3 134.8L691.5 133.7M685.5 137.8L686.2 134.9M681.1 138.5L677.7 136.9M688.2 134.4L686.2 134.9M686.2 134.9L679.7 128.4M686.2 134.9L677.7 136.9M686.2 134.9L688.2 126.4M679.7 128.4L677.7 136.9M679.7 128.4L688.2 126.4M679.7 128.4L676.1 129.3M679.7 128.4L680.6 124.8M677.7 136.9L674.8 130.4M688.2 126.4L681.7 123.5M677.7 124.5L677.7 123.7M677 127.9L676 126.4M675.3 130L673.3 130.8M676.5 125.6L676 126.4M676 126.4L670.7 126.4M676 126.4L673.3 130.8M676 126.4L673.3 122.1M670.7 126.4L673.3 130.8M670.7 126.4L673.3 122.1M670.7 126.4L669 129.1M670.7 126.4L669 123.7M673.3 130.8L669 129.1M673.3 122.1L669 123.7M669 129.1L669 123.7M675 126.4L675.8 126.4M676.9 125.2L677.7 124.7M679.2 125.7L677.7 124.7M681.3 124L682 122.1M677.7 124.7L677.7 119.4M677.7 124.7L673.3 122.1M677.7 124.7L682 122.1M677.7 119.4L673.3 122.1M677.7 119.4L682 122.1M677.7 119.4L675 117.7M677.7 119.4L680.4 117.7M673.3 122.1L675 117.7M682 122.1L680.4 117.7M675 117.7L680.4 117.7M685 133.7L686.1 134.8M688.2 134.4L690.2 134.9M690.9 137.8L690.2 134.9M695.3 138.5L698.8 136.9M690.2 134.9L696.7 128.4M690.2 134.9L688.2 126.4M690.2 134.9L698.8 136.9M696.7 128.4L688.2 126.4M696.7 128.4L698.8 136.9M696.7 128.4L695.9 124.8M696.7 128.4L700.4 129.3M688.2 126.4L694.7 123.5M698.8 136.9L701.7 130.4M700.6 126.4L701.4 126.4M697.2 125.7L698.8 124.7M695.2 124L694.4 122.1M699.5 125.2L698.8 124.7M698.8 124.7L698.8 119.4M698.8 124.7L694.4 122.1M698.8 124.7L703.1 122.1M698.8 119.4L694.4 122.1M698.8 119.4L703.1 122.1M698.8 119.4L696.1 117.7M698.8 119.4L701.4 117.7M694.4 122.1L696.1 117.7M703.1 122.1L701.4 117.7M696.1 117.7L701.4 117.7M698.8 123.7L698.8 124.5M699.9 125.6L700.4 126.4M699.5 127.9L700.4 126.4M701.1 130L703.1 130.8M700.4 126.4L705.8 126.4M700.4 126.4L703.1 122.1M700.4 126.4L703.1 130.8M705.8 126.4L703.1 122.1M705.8 126.4L703.1 130.8M705.8 126.4L707.4 123.7M705.8 126.4L707.4 129.1M703.1 122.1L707.4 123.7M703.1 130.8L707.4 129.1M707.4 123.7L707.4 129.1M688.2 154.6L688.2 157.4M691.4 159.7L693.1 162.4M690.3 166.9L693.1 162.4M695 172.9L701 175.2M693.1 162.4L708.8 162.4M693.1 162.4L701 149.7M693.1 162.4L701 175.2M708.8 162.4L701 149.7M708.8 162.4L701 175.2M708.8 162.4L712.4 156.6M708.8 162.4L712.4 168.3M701 149.7L712.6 154.1M701 175.2L712.6 170.7M715.8 164.6L717 165.7M712.9 159.8L715.7 160.4M712.2 155.3L713.7 151.9M716.2 162.4L715.7 160.4M715.7 160.4L722.2 153.9M715.7 160.4L713.7 151.9M715.7 160.4L724.2 162.4M722.2 153.9L713.7 151.9M722.2 153.9L724.2 162.4M722.2 153.9L721.4 150.3M722.2 153.9L725.9 154.8M713.7 151.9L720.2 149M724.2 162.4L727.2 155.9M726.1 151.9L726.9 151.9M722.7 151.2L724.2 150.2M720.7 149.5L719.9 147.6M725 150.7L724.2 150.2M724.2 150.2L724.2 144.9M724.2 150.2L719.9 147.6M724.2 150.2L728.6 147.6M724.2 144.9L719.9 147.6M724.2 144.9L728.6 147.6M724.2 144.9L721.6 143.2M724.2 144.9L726.9 143.2M719.9 147.6L721.6 143.2M728.6 147.6L726.9 143.2M721.6 143.2L726.9 143.2M724.2 149.2L724.2 150M725.4 151.1L725.9 151.9M725 153.4L725.9 151.9M726.6 155.5L728.6 156.3M725.9 151.9L731.3 151.9M725.9 151.9L728.6 147.6M725.9 151.9L728.6 156.3M731.3 151.9L728.6 147.6M731.3 151.9L728.6 156.3M731.3 151.9L732.9 149.2M731.3 151.9L732.9 154.6M728.6 147.6L732.9 149.2M728.6 156.3L732.9 154.6M732.9 149.2L732.9 154.6M717 159.2L715.8 160.3M716.2 162.4L715.7 164.4M712.9 165.1L715.7 164.4M712.2 169.5L713.7 173M715.7 164.4L722.2 170.9M715.7 164.4L724.2 162.4M715.7 164.4L713.7 173M722.2 170.9L724.2 162.4M722.2 170.9L713.7 173M722.2 170.9L725.9 170.1M722.2 170.9L721.4 174.6M724.2 162.4L727.2 168.9M713.7 173L720.2 175.9M724.2 174.8L724.2 175.6M725 171.4L725.9 173M726.6 169.4L728.6 168.6M725.4 173.7L725.9 173M725.9 173L731.3 173M725.9 173L728.6 168.6M725.9 173L728.6 177.3M731.3 173L728.6 168.6M731.3 173L728.6 177.3M731.3 173L732.9 170.3M731.3 173L732.9 175.6M728.6 168.6L732.9 170.3M728.6 177.3L732.9 175.6M732.9 170.3L732.9 175.6M726.9 173L726.1 173M725 174.1L724.2 174.6M722.7 173.7L724.2 174.6M720.7 175.3L719.9 177.3M724.2 174.6L724.2 180M724.2 174.6L728.6 177.3M724.2 174.6L719.9 177.3M724.2 180L728.6 177.3M724.2 180L719.9 177.3M724.2 180L726.9 181.7M724.2 180L721.6 181.7M728.6 177.3L726.9 181.7M719.9 177.3L721.6 181.7M726.9 181.7L721.6 181.7M666.9 183.8L663.5 187.2M664.6 193.7L663.2 199.2M654.1 201.3L663.2 199.2M652.9 214.2L657.4 224.2M663.2 199.2L682.3 218.3M663.2 199.2L688.2 193.3M663.2 199.2L657.4 224.2M682.3 218.3L688.2 193.3M682.3 218.3L657.4 224.2M682.3 218.3L693.8 215.6M682.3 218.3L679.6 229.8M688.2 193.3L696.9 212.8M657.4 224.2L676.8 232.9M688.2 229.2L688.2 232M690.3 219.7L693.1 224.2M695 213.7L701 211.4M691.4 226.9L693.1 224.2M693.1 224.2L708.8 224.2M693.1 224.2L701 211.4M693.1 224.2L701 236.9M708.8 224.2L701 211.4M708.8 224.2L701 236.9M708.8 224.2L712.4 218.3M708.8 224.2L712.4 230M701 211.4L712.6 215.9M701 236.9L712.6 232.5M715.8 226.3L717 227.4M712.9 221.5L715.7 222.2M712.2 217.1L713.7 213.6M716.2 224.2L715.7 222.2M715.7 222.2L722.2 215.7M715.7 222.2L713.7 213.6M715.7 222.2L724.2 224.2M722.2 215.7L713.7 213.6M722.2 215.7L724.2 224.2M722.2 215.7L721.4 212M722.2 215.7L725.9 216.5M713.7 213.6L720.2 210.7M724.2 224.2L727.2 217.7M726.1 213.6L726.9 213.6M722.7 212.9L724.2 212M720.7 211.3L719.9 209.3M725 212.5L724.2 212M724.2 212L724.2 206.6M724.2 212L719.9 209.3M724.2 212L728.6 209.3M724.2 206.6L719.9 209.3M724.2 206.6L728.6 209.3M724.2 206.6L721.6 204.9M724.2 206.6L726.9 204.9M719.9 209.3L721.6 204.9M728.6 209.3L726.9 204.9M721.6 204.9L726.9 204.9M724.2 211L724.2 211.8M725.4 212.9L725.9 213.6M725 215.2L725.9 213.6M726.6 217.2L728.6 218M725.9 213.6L731.3 213.6M725.9 213.6L728.6 209.3M725.9 213.6L728.6 218M731.3 213.6L728.6 209.3M731.3 213.6L728.6 218M731.3 213.6L732.9 211M731.3 213.6L732.9 216.3M728.6 209.3L732.9 211M728.6 218L732.9 216.3M732.9 211L732.9 216.3M717 220.9L715.8 222M716.2 224.2L715.7 226.2M712.9 226.8L715.7 226.2M712.2 231.3L713.7 234.7M715.7 226.2L722.2 232.7M715.7 226.2L724.2 224.2M715.7 226.2L713.7 234.7M722.2 232.7L724.2 224.2M722.2 232.7L713.7 234.7M722.2 232.7L725.9 231.8M722.2 232.7L721.4 236.3M724.2 224.2L727.2 230.7M713.7 234.7L720.2 237.6M724.2 236.6L724.2 237.4M725 233.2L725.9 234.7M726.6 231.1L728.6 230.3M725.4 235.5L725.9 234.7M725.9 234.7L731.3 234.7M725.9 234.7L728.6 230.3M725.9 234.7L728.6 239M731.3 234.7L728.6 230.3M731.3 234.7L728.6 239M731.3 234.7L732.9 232M731.3 234.7L732.9 237.4M728.6 230.3L732.9 232M728.6 239L732.9 237.4M732.9 232L732.9 237.4M726.9 234.7L726.1 234.7M725 235.9L724.2 236.4M722.7 235.4L724.2 236.4M720.7 237.1L719.9 239M724.2 236.4L724.2 241.7M724.2 236.4L728.6 239M724.2 236.4L719.9 239M724.2 241.7L728.6 239M724.2 241.7L719.9 239M724.2 241.7L726.9 243.4M724.2 241.7L721.6 243.4M728.6 239L726.9 243.4M719.9 239L721.6 243.4M726.9 243.4L721.6 243.4M696.1 224.2L693.3 224.2M691 227.3L688.2 229M683.8 226.3L688.2 229M677.8 230.9L675.5 236.9M688.2 229L688.2 244.8M688.2 229L701 236.9M688.2 229L675.5 236.9M688.2 244.8L701 236.9M688.2 244.8L675.5 236.9M688.2 244.8L694 248.4M688.2 244.8L682.4 248.4M701 236.9L696.5 248.5M675.5 236.9L679.9 248.5M686.1 251.8L685 252.9M690.9 248.8L690.2 251.7M695.3 248.1L698.8 249.7M688.2 252.2L690.2 251.7M690.2 251.7L696.7 258.2M690.2 251.7L698.8 249.7M690.2 251.7L688.2 260.2M696.7 258.2L698.8 249.7M696.7 258.2L688.2 260.2M696.7 258.2L700.4 257.3M696.7 258.2L695.9 261.8M698.8 249.7L701.7 256.2M688.2 260.2L694.7 263.1M698.8 262.1L698.8 262.9M699.5 258.7L700.4 260.2M701.1 256.6L703.1 255.8M699.9 261L700.4 260.2M700.4 260.2L705.8 260.2M700.4 260.2L703.1 255.8M700.4 260.2L703.1 264.5M705.8 260.2L703.1 255.8M705.8 260.2L703.1 264.5M705.8 260.2L707.4 257.5M705.8 260.2L707.4 262.9M703.1 255.8L707.4 257.5M703.1 264.5L707.4 262.9M707.4 257.5L707.4 262.9M701.4 260.2L700.6 260.2M699.5 261.4L698.8 261.9M697.2 260.9L698.8 261.9M695.2 262.6L694.4 264.5M698.8 261.9L698.8 267.2M698.8 261.9L703.1 264.5M698.8 261.9L694.4 264.5M698.8 267.2L703.1 264.5M698.8 267.2L694.4 264.5M698.8 267.2L701.4 268.9M698.8 267.2L696.1 268.9M703.1 264.5L701.4 268.9M694.4 264.5L696.1 268.9M701.4 268.9L696.1 268.9M691.5 252.9L690.3 251.8M688.2 252.2L686.2 251.7M685.5 248.8L686.2 251.7M681.1 248.1L677.7 249.7M686.2 251.7L679.7 258.2M686.2 251.7L688.2 260.2M686.2 251.7L677.7 249.7M679.7 258.2L688.2 260.2M679.7 258.2L677.7 249.7M679.7 258.2L680.6 261.8M679.7 258.2L676.1 257.3M688.2 260.2L681.7 263.1M677.7 249.7L674.8 256.2M675.8 260.2L675 260.2M679.2 260.9L677.7 261.9M681.3 262.6L682 264.5M676.9 261.4L677.7 261.9M677.7 261.9L677.7 267.2M677.7 261.9L682 264.5M677.7 261.9L673.3 264.5M677.7 267.2L682 264.5M677.7 267.2L673.3 264.5M677.7 267.2L680.4 268.9M677.7 267.2L675 268.9M682 264.5L680.4 268.9M673.3 264.5L675 268.9M680.4 268.9L675 268.9M677.7 262.9L677.7 262.1M676.5 261L676 260.2M677 258.7L676 260.2M675.3 256.6L673.3 255.8M676 260.2L670.7 260.2M676 260.2L673.3 264.5M676 260.2L673.3 255.8M670.7 260.2L673.3 264.5M670.7 260.2L673.3 255.8M670.7 260.2L669 262.9M670.7 260.2L669 257.5M673.3 264.5L669 262.9M673.3 255.8L669 257.5M669 262.9L669 257.5M605.7 193.3L597.3 193.3M567.9 193.3L559.5 193.3M591.2 202.2L582.6 207.6M574 202.2L582.6 207.6M582.6 207.6L582.6 253.8M582.6 207.6L620 230.7M582.6 207.6L545.2 230.7M582.6 253.8L620 230.7M582.6 253.8L545.2 230.7M582.6 253.8L600.2 264.6M582.6 253.8L565 264.6M620 230.7L606.8 265.1M545.2 230.7L558.4 265.1M576.5 274.2L573.1 277.6M590.6 264.8L588.5 273.9M603.5 263.6L613.5 268.1M583 275.3L588.5 273.9M588.5 273.9L607.6 293M588.5 273.9L613.5 268.1M588.5 273.9L582.6 298.9M607.6 293L613.5 268.1M607.6 293L582.6 298.9M607.6 293L619.1 290.3M607.6 293L604.9 304.5M613.5 268.1L622.2 287.5M582.6 298.9L602.1 307.6M613.5 304L613.5 306.8M615.6 294.5L618.3 298.9M620.2 288.5L626.2 286.2M616.6 301.7L618.3 298.9M618.3 298.9L634.1 298.9M618.3 298.9L626.2 286.2M618.3 298.9L626.2 311.7M634.1 298.9L626.2 286.2M634.1 298.9L626.2 311.7M634.1 298.9L637.7 293.1M634.1 298.9L637.7 304.7M626.2 286.2L637.8 290.6M626.2 311.7L637.8 307.2M641.1 301L642.2 302.2M638.1 296.2L641 296.9M637.4 291.8L639 288.4M641.5 298.9L641 296.9M641 296.9L647.5 290.4M641 296.9L639 288.4M641 296.9L649.5 298.9M647.5 290.4L639 288.4M647.5 290.4L649.5 298.9M647.5 290.4L646.6 286.8M647.5 290.4L651.1 291.3M639 288.4L645.5 285.5M649.5 298.9L652.4 292.4M651.4 288.4L652.2 288.4M648 287.7L649.5 286.7M645.9 286L645.1 284M650.3 287.2L649.5 286.7M649.5 286.7L649.5 281.4M649.5 286.7L645.1 284M649.5 286.7L653.8 284M649.5 281.4L645.1 284M649.5 281.4L653.8 284M649.5 281.4L646.8 279.7M649.5 281.4L652.2 279.7M645.1 284L646.8 279.7M653.8 284L652.2 279.7M646.8 279.7L652.2 279.7M649.5 285.7L649.5 286.5M650.7 287.6L651.2 288.4M650.2 289.9L651.2 288.4M651.9 292L653.8 292.7M651.2 288.4L656.5 288.4M651.2 288.4L653.8 284M651.2 288.4L653.8 292.7M656.5 288.4L653.8 284M656.5 288.4L653.8 292.7M656.5 288.4L658.2 285.7M656.5 288.4L658.2 291.1M653.8 284L658.2 285.7M653.8 292.7L658.2 291.1M658.2 285.7L658.2 291.1M642.2 295.7L641.1 296.8M641.5 298.9L641 300.9M638.1 301.6L641 300.9M637.4 306L639 309.5M641 300.9L647.5 307.4M641 300.9L649.5 298.9M641 300.9L639 309.5M647.5 307.4L649.5 298.9M647.5 307.4L639 309.5M647.5 307.4L651.1 306.6M647.5 307.4L646.6 311.1M649.5 298.9L652.4 305.4M639 309.5L645.5 312.4M649.5 311.3L649.5 312.1M650.2 307.9L651.2 309.5M651.9 305.9L653.8 305.1M650.7 310.2L651.2 309.5M651.2 309.5L656.5 309.5M651.2 309.5L653.8 305.1M651.2 309.5L653.8 313.8M656.5 309.5L653.8 305.1M656.5 309.5L653.8 313.8M656.5 309.5L658.2 306.8M656.5 309.5L658.2 312.1M653.8 305.1L658.2 306.8M653.8 313.8L658.2 312.1M658.2 306.8L658.2 312.1M652.2 309.5L651.4 309.5M650.3 310.6L649.5 311.1M648 310.2L649.5 311.1M645.9 311.8L645.1 313.8M649.5 311.1L649.5 316.5M649.5 311.1L653.8 313.8M649.5 311.1L645.1 313.8M649.5 316.5L653.8 313.8M649.5 316.5L645.1 313.8M649.5 316.5L652.2 318.1M649.5 316.5L646.8 318.1M653.8 313.8L652.2 318.1M645.1 313.8L646.8 318.1M652.2 318.1L646.8 318.1M621.3 298.9L618.5 298.9M616.2 302.1L613.5 303.8M609 301L613.5 303.8M603 305.7L600.7 311.7M613.5 303.8L613.5 319.5M613.5 303.8L626.2 311.7M613.5 303.8L600.7 311.7M613.5 319.5L626.2 311.7M613.5 319.5L600.7 311.7M613.5 319.5L619.3 323.1M613.5 319.5L607.6 323.1M626.2 311.7L621.8 323.3M600.7 311.7L605.2 323.3M611.3 326.5L610.2 327.7M616.1 323.6L615.5 326.4M620.6 322.9L624 324.4M613.5 326.9L615.5 326.4M615.5 326.4L622 332.9M615.5 326.4L624 324.4M615.5 326.4L613.5 334.9M622 332.9L624 324.4M622 332.9L613.5 334.9M622 332.9L625.6 332.1M622 332.9L621.1 336.6M624 324.4L626.9 330.9M613.5 334.9L620 337.9M624 336.8L624 337.6M624.7 333.4L625.7 334.9M626.4 331.4L628.3 330.6M625.2 335.7L625.7 334.9M625.7 334.9L631 334.9M625.7 334.9L628.3 330.6M625.7 334.9L628.3 339.3M631 334.9L628.3 330.6M631 334.9L628.3 339.3M631 334.9L632.7 332.3M631 334.9L632.7 337.6M628.3 330.6L632.7 332.3M628.3 339.3L632.7 337.6M632.7 332.3L632.7 337.6M626.7 334.9L625.9 334.9M624.8 336.1L624 336.6M622.5 335.7L624 336.6M620.4 337.3L619.6 339.3M624 336.6L624 342M624 336.6L628.3 339.3M624 336.6L619.6 339.3M624 342L628.3 339.3M624 342L619.6 339.3M624 342L626.7 343.6M624 342L621.3 343.6M628.3 339.3L626.7 343.6M619.6 339.3L621.3 343.6M626.7 343.6L621.3 343.6M616.7 327.7L615.6 326.5M613.5 326.9L611.5 326.4M610.8 323.6L611.5 326.4M606.4 322.9L602.9 324.4M611.5 326.4L605 332.9M611.5 326.4L613.5 334.9M611.5 326.4L602.9 324.4M605 332.9L613.5 334.9M605 332.9L602.9 324.4M605 332.9L605.8 336.6M605 332.9L601.3 332.1M613.5 334.9L607 337.9M602.9 324.4L600 330.9M601.1 334.9L600.3 334.9M604.5 335.7L602.9 336.6M606.5 337.3L607.3 339.3M602.2 336.1L602.9 336.6M602.9 336.6L602.9 342M602.9 336.6L607.3 339.3M602.9 336.6L598.6 339.3M602.9 342L607.3 339.3M602.9 342L598.6 339.3M602.9 342L605.6 343.6M602.9 342L600.3 343.6M607.3 339.3L605.6 343.6M598.6 339.3L600.3 343.6M605.6 343.6L600.3 343.6M602.9 337.6L602.9 336.8M601.8 335.7L601.3 334.9M602.2 333.4L601.3 334.9M600.6 331.4L598.6 330.6M601.3 334.9L595.9 334.9M601.3 334.9L598.6 339.3M601.3 334.9L598.6 330.6M595.9 334.9L598.6 339.3M595.9 334.9L598.6 330.6M595.9 334.9L594.2 337.6M595.9 334.9L594.2 332.3M598.6 339.3L594.2 337.6M598.6 330.6L594.2 332.3M594.2 337.6L594.2 332.3M592.1 277.6L588.7 274.2M582.2 275.3L576.7 273.9M574.6 264.8L576.7 273.9M561.7 263.6L551.7 268.1M576.7 273.9L557.6 293M576.7 273.9L582.6 298.9M576.7 273.9L551.7 268.1M557.6 293L582.6 298.9M557.6 293L551.7 268.1M557.6 293L560.3 304.5M557.6 293L546.1 290.3M582.6 298.9L563.1 307.6M551.7 268.1L543 287.5M546.7 298.9L543.9 298.9M556.2 301L551.7 303.8M562.2 305.7L564.5 311.7M549 302.1L551.7 303.8M551.7 303.8L551.7 319.5M551.7 303.8L564.5 311.7M551.7 303.8L539 311.7M551.7 319.5L564.5 311.7M551.7 319.5L539 311.7M551.7 319.5L557.6 323.1M551.7 319.5L545.9 323.1M564.5 311.7L560 323.3M539 311.7L543.4 323.3M549.6 326.5L548.5 327.7M554.4 323.6L553.7 326.4M558.8 322.9L562.3 324.4M551.7 326.9L553.7 326.4M553.7 326.4L560.2 332.9M553.7 326.4L562.3 324.4M553.7 326.4L551.7 334.9M560.2 332.9L562.3 324.4M560.2 332.9L551.7 334.9M560.2 332.9L563.9 332.1M560.2 332.9L559.4 336.6M562.3 324.4L565.2 330.9M551.7 334.9L558.2 337.9M562.3 336.8L562.3 337.6M563 333.4L563.9 334.9M564.6 331.4L566.6 330.6M563.4 335.7L563.9 334.9M563.9 334.9L569.3 334.9M563.9 334.9L566.6 330.6M563.9 334.9L566.6 339.3M569.3 334.9L566.6 330.6M569.3 334.9L566.6 339.3M569.3 334.9L571 332.3M569.3 334.9L571 337.6M566.6 330.6L571 332.3M566.6 339.3L571 337.6M571 332.3L571 337.6M564.9 334.9L564.1 334.9M563 336.1L562.3 336.6M560.7 335.7L562.3 336.6M558.7 337.3L557.9 339.3M562.3 336.6L562.3 342M562.3 336.6L566.6 339.3M562.3 336.6L557.9 339.3M562.3 342L566.6 339.3M562.3 342L557.9 339.3M562.3 342L564.9 343.6M562.3 342L559.6 343.6M566.6 339.3L564.9 343.6M557.9 339.3L559.6 343.6M564.9 343.6L559.6 343.6M555 327.7L553.9 326.5M551.7 326.9L549.7 326.4M549.1 323.6L549.7 326.4M544.6 322.9L541.2 324.4M549.7 326.4L543.2 332.9M549.7 326.4L551.7 334.9M549.7 326.4L541.2 324.4M543.2 332.9L551.7 334.9M543.2 332.9L541.2 324.4M543.2 332.9L544.1 336.6M543.2 332.9L539.6 332.1M551.7 334.9L545.2 337.9M541.2 324.4L538.3 330.9M539.3 334.9L538.5 334.9M542.7 335.7L541.2 336.6M544.8 337.3L545.6 339.3M540.4 336.1L541.2 336.6M541.2 336.6L541.2 342M541.2 336.6L545.6 339.3M541.2 336.6L536.9 339.3M541.2 342L545.6 339.3M541.2 342L536.9 339.3M541.2 342L543.9 343.6M541.2 342L538.5 343.6M545.6 339.3L543.9 343.6M536.9 339.3L538.5 343.6M543.9 343.6L538.5 343.6M541.2 337.6L541.2 336.8M540 335.7L539.5 334.9M540.5 333.4L539.5 334.9M538.8 331.4L536.9 330.6M539.5 334.9L534.2 334.9M539.5 334.9L536.9 339.3M539.5 334.9L536.9 330.6M534.2 334.9L536.9 339.3M534.2 334.9L536.9 330.6M534.2 334.9L532.5 337.6M534.2 334.9L532.5 332.3M536.9 339.3L532.5 337.6M536.9 330.6L532.5 332.3M532.5 337.6L532.5 332.3M551.7 306.8L551.7 304M548.6 301.7L546.9 298.9M549.6 294.5L546.9 298.9M545 288.5L539 286.2M546.9 298.9L531.1 298.9M546.9 298.9L539 311.7M546.9 298.9L539 286.2M531.1 298.9L539 311.7M531.1 298.9L539 286.2M531.1 298.9L527.5 304.7M531.1 298.9L527.5 293.1M539 311.7L527.4 307.2M539 286.2L527.4 290.6M524.1 296.8L523 295.7M527.1 301.6L524.2 300.9M527.8 306L526.2 309.5M523.7 298.9L524.2 300.9M524.2 300.9L517.7 307.4M524.2 300.9L526.2 309.5M524.2 300.9L515.7 298.9M517.7 307.4L526.2 309.5M517.7 307.4L515.7 298.9M517.7 307.4L518.6 311.1M517.7 307.4L514.1 306.6M526.2 309.5L519.7 312.4M515.7 298.9L512.8 305.4M513.8 309.5L513 309.5M517.2 310.2L515.7 311.1M519.3 311.8L520.1 313.8M514.9 310.6L515.7 311.1M515.7 311.1L515.7 316.5M515.7 311.1L520.1 313.8M515.7 311.1L511.4 313.8M515.7 316.5L520.1 313.8M515.7 316.5L511.4 313.8M515.7 316.5L518.4 318.1M515.7 316.5L513 318.1M520.1 313.8L518.4 318.1M511.4 313.8L513 318.1M518.4 318.1L513 318.1M515.7 312.1L515.7 311.3M514.5 310.2L514 309.5M515 307.9L514 309.5M513.3 305.9L511.4 305.1M514 309.5L508.7 309.5M514 309.5L511.4 313.8M514 309.5L511.4 305.1M508.7 309.5L511.4 313.8M508.7 309.5L511.4 305.1M508.7 309.5L507 312.1M508.7 309.5L507 306.8M511.4 313.8L507 312.1M511.4 305.1L507 306.8M507 312.1L507 306.8M523 302.2L524.1 301M523.7 298.9L524.2 296.9M527.1 296.2L524.2 296.9M527.8 291.8L526.2 288.4M524.2 296.9L517.7 290.4M524.2 296.9L515.7 298.9M524.2 296.9L526.2 288.4M517.7 290.4L515.7 298.9M517.7 290.4L526.2 288.4M517.7 290.4L514.1 291.3M517.7 290.4L518.6 286.8M515.7 298.9L512.8 292.4M526.2 288.4L519.7 285.5M515.7 286.5L515.7 285.7M515 289.9L514 288.4M513.3 292L511.4 292.7M514.5 287.6L514 288.4M514 288.4L508.7 288.4M514 288.4L511.4 292.7M514 288.4L511.4 284M508.7 288.4L511.4 292.7M508.7 288.4L511.4 284M508.7 288.4L507 291.1M508.7 288.4L507 285.7M511.4 292.7L507 291.1M511.4 284L507 285.7M507 291.1L507 285.7M513 288.4L513.8 288.4M514.9 287.2L515.7 286.7M517.2 287.7L515.7 286.7M519.3 286L520.1 284M515.7 286.7L515.7 281.4M515.7 286.7L511.4 284M515.7 286.7L520.1 284M515.7 281.4L511.4 284M515.7 281.4L520.1 284M515.7 281.4L513 279.7M515.7 281.4L518.4 279.7M511.4 284L513 279.7M520.1 284L518.4 279.7M513 279.7L518.4 279.7M582.6 216.4L582.6 208M582.6 178.6L582.6 170.2M573.7 201.9L568.3 193.3M573.7 184.7L568.3 193.3M568.3 193.3L522.1 193.3M568.3 193.3L545.2 230.7M568.3 193.3L545.2 155.9M522.1 193.3L545.2 230.7M522.1 193.3L545.2 155.9M522.1 193.3L511.3 210.9M522.1 193.3L511.3 175.7M545.2 230.7L510.8 217.5M545.2 155.9L510.8 169.1M501.7 187.2L498.3 183.8M511.1 201.3L502 199.2M512.3 214.2L507.8 224.2M500.6 193.7L502 199.2M502 199.2L482.9 218.3M502 199.2L507.8 224.2M502 199.2L477 193.3M482.9 218.3L507.8 224.2M482.9 218.3L477 193.3M482.9 218.3L485.6 229.8M482.9 218.3L471.4 215.6M507.8 224.2L488.4 232.9M477 193.3L468.3 212.8M471.9 224.2L469.1 224.2M481.4 226.3L477 229M487.4 230.9L489.7 236.9M474.2 227.3L477 229M477 229L477 244.8M477 229L489.7 236.9M477 229L464.2 236.9M477 244.8L489.7 236.9M477 244.8L464.2 236.9M477 244.8L482.8 248.4M477 244.8L471.2 248.4M489.7 236.9L485.3 248.5M464.2 236.9L468.7 248.5M474.9 251.8L473.7 252.9M479.7 248.8L479 251.7M484.1 248.1L487.5 249.7M477 252.2L479 251.7M479 251.7L485.5 258.2M479 251.7L487.5 249.7M479 251.7L477 260.2M485.5 258.2L487.5 249.7M485.5 258.2L477 260.2M485.5 258.2L489.1 257.3M485.5 258.2L484.6 261.8M487.5 249.7L490.4 256.2M477 260.2L483.5 263.1M487.5 262.1L487.5 262.9M488.2 258.7L489.2 260.2M489.9 256.6L491.9 255.8M488.7 261L489.2 260.2M489.2 260.2L494.5 260.2M489.2 260.2L491.9 255.8M489.2 260.2L491.9 264.5M494.5 260.2L491.9 255.8M494.5 260.2L491.9 264.5M494.5 260.2L496.2 257.5M494.5 260.2L496.2 262.9M491.9 255.8L496.2 257.5M491.9 264.5L496.2 262.9M496.2 257.5L496.2 262.9M490.2 260.2L489.4 260.2M488.3 261.4L487.5 261.9M486 260.9L487.5 261.9M483.9 262.6L483.2 264.5M487.5 261.9L487.5 267.2M487.5 261.9L491.9 264.5M487.5 261.9L483.2 264.5M487.5 267.2L491.9 264.5M487.5 267.2L483.2 264.5M487.5 267.2L490.2 268.9M487.5 267.2L484.8 268.9M491.9 264.5L490.2 268.9M483.2 264.5L484.8 268.9M490.2 268.9L484.8 268.9M480.2 252.9L479.1 251.8M477 252.2L475 251.7M474.3 248.8L475 251.7M469.9 248.1L466.4 249.7M475 251.7L468.5 258.2M475 251.7L477 260.2M475 251.7L466.4 249.7M468.5 258.2L477 260.2M468.5 258.2L466.4 249.7M468.5 258.2L469.3 261.8M468.5 258.2L464.8 257.3M477 260.2L470.5 263.1M466.4 249.7L463.5 256.2M464.6 260.2L463.8 260.2M468 260.9L466.4 261.9M470 262.6L470.8 264.5M465.7 261.4L466.4 261.9M466.4 261.9L466.4 267.2M466.4 261.9L470.8 264.5M466.4 261.9L462.1 264.5M466.4 267.2L470.8 264.5M466.4 267.2L462.1 264.5M466.4 267.2L469.1 268.9M466.4 267.2L463.8 268.9M470.8 264.5L469.1 268.9M462.1 264.5L463.8 268.9M469.1 268.9L463.8 268.9M466.4 262.9L466.4 262.1M465.3 261L464.8 260.2M465.7 258.7L464.8 260.2M464.1 256.6L462.1 255.8M464.8 260.2L459.4 260.2M464.8 260.2L462.1 264.5M464.8 260.2L462.1 255.8M459.4 260.2L462.1 264.5M459.4 260.2L462.1 255.8M459.4 260.2L457.8 262.9M459.4 260.2L457.8 257.5M462.1 264.5L457.8 262.9M462.1 255.8L457.8 257.5M457.8 262.9L457.8 257.5M477 232L477 229.2M473.8 226.9L472.1 224.2M474.9 219.7L472.1 224.2M470.2 213.7L464.2 211.4M472.1 224.2L456.4 224.2M472.1 224.2L464.2 236.9M472.1 224.2L464.2 211.4M456.4 224.2L464.2 236.9M456.4 224.2L464.2 211.4M456.4 224.2L452.8 230M456.4 224.2L452.8 218.3M464.2 236.9L452.6 232.5M464.2 211.4L452.6 215.9M449.4 222L448.2 220.9M452.3 226.8L449.5 226.2M453 231.3L451.5 234.7M449 224.2L449.5 226.2M449.5 226.2L443 232.7M449.5 226.2L451.5 234.7M449.5 226.2L441 224.2M443 232.7L451.5 234.7M443 232.7L441 224.2M443 232.7L443.8 236.3M443 232.7L439.3 231.8M451.5 234.7L445 237.6M441 224.2L438 230.7M439.1 234.7L438.3 234.7M442.5 235.4L441 236.4M444.5 237.1L445.3 239M440.2 235.9L441 236.4M441 236.4L441 241.7M441 236.4L445.3 239M441 236.4L436.6 239M441 241.7L445.3 239M441 241.7L436.6 239M441 241.7L443.6 243.4M441 241.7L438.3 243.4M445.3 239L443.6 243.4M436.6 239L438.3 243.4M443.6 243.4L438.3 243.4M441 237.4L441 236.6M439.8 235.5L439.3 234.7M440.2 233.2L439.3 234.7M438.6 231.1L436.6 230.3M439.3 234.7L433.9 234.7M439.3 234.7L436.6 239M439.3 234.7L436.6 230.3M433.9 234.7L436.6 239M433.9 234.7L436.6 230.3M433.9 234.7L432.3 237.4M433.9 234.7L432.3 232M436.6 239L432.3 237.4M436.6 230.3L432.3 232M432.3 237.4L432.3 232M448.2 227.4L449.4 226.3M449 224.2L449.5 222.2M452.3 221.5L449.5 222.2M453 217.1L451.5 213.6M449.5 222.2L443 215.7M449.5 222.2L441 224.2M449.5 222.2L451.5 213.6M443 215.7L441 224.2M443 215.7L451.5 213.6M443 215.7L439.3 216.5M443 215.7L443.8 212M441 224.2L438 217.7M451.5 213.6L445 210.7M441 211.8L441 211M440.2 215.2L439.3 213.6M438.6 217.2L436.6 218M439.8 212.9L439.3 213.6M439.3 213.6L433.9 213.6M439.3 213.6L436.6 218M439.3 213.6L436.6 209.3M433.9 213.6L436.6 218M433.9 213.6L436.6 209.3M433.9 213.6L432.3 216.3M433.9 213.6L432.3 211M436.6 218L432.3 216.3M436.6 209.3L432.3 211M432.3 216.3L432.3 211M438.3 213.6L439.1 213.6M440.2 212.5L441 212M442.5 212.9L441 212M444.5 211.3L445.3 209.3M441 212L441 206.6M441 212L436.6 209.3M441 212L445.3 209.3M441 206.6L436.6 209.3M441 206.6L445.3 209.3M441 206.6L438.3 204.9M441 206.6L443.6 204.9M436.6 209.3L438.3 204.9M445.3 209.3L443.6 204.9M438.3 204.9L443.6 204.9M498.3 202.8L501.7 199.4M500.6 192.9L502 187.4M511.1 185.3L502 187.4M512.3 172.4L507.8 162.4M502 187.4L482.9 168.3M502 187.4L477 193.3M502 187.4L507.8 162.4M482.9 168.3L477 193.3M482.9 168.3L507.8 162.4M482.9 168.3L471.4 171M482.9 168.3L485.6 156.8M477 193.3L468.3 173.8M507.8 162.4L488.4 153.7M477 157.4L477 154.6M474.9 166.9L472.1 162.4M470.2 172.9L464.2 175.2M473.8 159.7L472.1 162.4M472.1 162.4L456.4 162.4M472.1 162.4L464.2 175.2M472.1 162.4L464.2 149.7M456.4 162.4L464.2 175.2M456.4 162.4L464.2 149.7M456.4 162.4L452.8 168.3M456.4 162.4L452.8 156.6M464.2 175.2L452.6 170.7M464.2 149.7L452.6 154.1M449.4 160.3L448.2 159.2M452.3 165.1L449.5 164.4M453 169.5L451.5 173M449 162.4L449.5 164.4M449.5 164.4L443 170.9M449.5 164.4L451.5 173M449.5 164.4L441 162.4M443 170.9L451.5 173M443 170.9L441 162.4M443 170.9L443.8 174.6M443 170.9L439.3 170.1M451.5 173L445 175.9M441 162.4L438 168.9M439.1 173L438.3 173M442.5 173.7L441 174.6M444.5 175.3L445.3 177.3M440.2 174.1L441 174.6M441 174.6L441 180M441 174.6L445.3 177.3M441 174.6L436.6 177.3M441 180L445.3 177.3M441 180L436.6 177.3M441 180L443.6 181.7M441 180L438.3 181.7M445.3 177.3L443.6 181.7M436.6 177.3L438.3 181.7M443.6 181.7L438.3 181.7M441 175.6L441 174.8M439.8 173.7L439.3 173M440.2 171.4L439.3 173M438.6 169.4L436.6 168.6M439.3 173L433.9 173M439.3 173L436.6 177.3M439.3 173L436.6 168.6M433.9 173L436.6 177.3M433.9 173L436.6 168.6M433.9 173L432.3 175.6M433.9 173L432.3 170.3M436.6 177.3L432.3 175.6M436.6 168.6L432.3 170.3M432.3 175.6L432.3 170.3M448.2 165.7L449.4 164.6M449 162.4L449.5 160.4M452.3 159.8L449.5 160.4M453 155.3L451.5 151.9M449.5 160.4L443 153.9M449.5 160.4L441 162.4M449.5 160.4L451.5 151.9M443 153.9L441 162.4M443 153.9L451.5 151.9M443 153.9L439.3 154.8M443 153.9L443.8 150.3M441 162.4L438 155.9M451.5 151.9L445 149M441 150L441 149.2M440.2 153.4L439.3 151.9M438.6 155.5L436.6 156.3M439.8 151.1L439.3 151.9M439.3 151.9L433.9 151.9M439.3 151.9L436.6 156.3M439.3 151.9L436.6 147.6M433.9 151.9L436.6 156.3M433.9 151.9L436.6 147.6M433.9 151.9L432.3 154.6M433.9 151.9L432.3 149.2M436.6 156.3L432.3 154.6M436.6 147.6L432.3 149.2M432.3 154.6L432.3 149.2M438.3 151.9L439.1 151.9M440.2 150.7L441 150.2M442.5 151.2L441 150.2M444.5 149.5L445.3 147.6M441 150.2L441 144.9M441 150.2L436.6 147.6M441 150.2L445.3 147.6M441 144.9L436.6 147.6M441 144.9L445.3 147.6M441 144.9L438.3 143.2M441 144.9L443.6 143.2M436.6 147.6L438.3 143.2M445.3 147.6L443.6 143.2M438.3 143.2L443.6 143.2M469.1 162.4L471.9 162.4M474.2 159.3L477 157.6M481.4 160.3L477 157.6M487.4 155.7L489.7 149.7M477 157.6L477 141.8M477 157.6L464.2 149.7M477 157.6L489.7 149.7M477 141.8L464.2 149.7M477 141.8L489.7 149.7M477 141.8L471.2 138.2M477 141.8L482.8 138.2M464.2 149.7L468.7 138.1M489.7 149.7L485.3 138.1M479.1 134.8L480.2 133.7M474.3 137.8L475 134.9M469.9 138.5L466.4 136.9M477 134.4L475 134.9M475 134.9L468.5 128.4M475 134.9L466.4 136.9M475 134.9L477 126.4M468.5 128.4L466.4 136.9M468.5 128.4L477 126.4M468.5 128.4L464.8 129.3M468.5 128.4L469.3 124.8M466.4 136.9L463.5 130.4M477 126.4L470.5 123.5M466.4 124.5L466.4 123.7M465.7 127.9L464.8 126.4M464.1 130L462.1 130.8M465.3 125.6L464.8 126.4M464.8 126.4L459.4 126.4M464.8 126.4L462.1 130.8M464.8 126.4L462.1 122.1M459.4 126.4L462.1 130.8M459.4 126.4L462.1 122.1M459.4 126.4L457.8 129.1M459.4 126.4L457.8 123.7M462.1 130.8L457.8 129.1M462.1 122.1L457.8 123.7M457.8 129.1L457.8 123.7M463.8 126.4L464.6 126.4M465.7 125.2L466.4 124.7M468 125.7L466.4 124.7M470 124L470.8 122.1M466.4 124.7L466.4 119.4M466.4 124.7L462.1 122.1M466.4 124.7L470.8 122.1M466.4 119.4L462.1 122.1M466.4 119.4L470.8 122.1M466.4 119.4L463.8 117.7M466.4 119.4L469.1 117.7M462.1 122.1L463.8 117.7M470.8 122.1L469.1 117.7M463.8 117.7L469.1 117.7M473.7 133.7L474.9 134.8M477 134.4L479 134.9M479.7 137.8L479 134.9M484.1 138.5L487.5 136.9M479 134.9L485.5 128.4M479 134.9L477 126.4M479 134.9L487.5 136.9M485.5 128.4L477 126.4M485.5 128.4L487.5 136.9M485.5 128.4L484.6 124.8M485.5 128.4L489.1 129.3M477 126.4L483.5 123.5M487.5 136.9L490.4 130.4M489.4 126.4L490.2 126.4M486 125.7L487.5 124.7M483.9 124L483.2 122.1M488.3 125.2L487.5 124.7M487.5 124.7L487.5 119.4M487.5 124.7L483.2 122.1M487.5 124.7L491.9 122.1M487.5 119.4L483.2 122.1M487.5 119.4L491.9 122.1M487.5 119.4L484.8 117.7M487.5 119.4L490.2 117.7M483.2 122.1L484.8 117.7M491.9 122.1L490.2 117.7M484.8 117.7L490.2 117.7M487.5 123.7L487.5 124.5M488.7 125.6L489.2 126.4M488.2 127.9L489.2 126.4M489.9 130L491.9 130.8M489.2 126.4L494.5 126.4M489.2 126.4L491.9 122.1M489.2 126.4L491.9 130.8M494.5 126.4L491.9 122.1M494.5 126.4L491.9 130.8M494.5 126.4L496.2 123.7M494.5 126.4L496.2 129.1M491.9 122.1L496.2 123.7M491.9 130.8L496.2 129.1M496.2 123.7L496.2 129.1"/><use href="#ig135" transform="translate(516.8 108) scale(1.57)" stroke-width="0.574"/><use href="#ig225" transform="translate(514.6 108) scale(1.57)" stroke-width="0.574"/><use href="#ig225" transform="translate(505.9 99.3) scale(1.57)" stroke-width="0.574"/><use href="#ig315" transform="translate(505.9 97.1) scale(1.57)" stroke-width="0.574"/><use href="#ig225" transform="translate(505.9 78.2) scale(1.57)" stroke-width="0.574"/><use href="#ig315" transform="translate(505.9 76.1) scale(1.57)" stroke-width="0.574"/><use href="#ig315" transform="translate(514.6 67.4) scale(1.57)" stroke-width="0.574"/><use href="#ig45" transform="translate(516.8 67.4) scale(1.57)" stroke-width="0.574"/><use href="#ig225" transform="translate(531.4 52.7) scale(1.57)" stroke-width="0.574"/><use href="#ig315" transform="translate(531.4 50.6) scale(1.57)" stroke-width="0.574"/><use href="#ig315" transform="translate(540.1 41.9) scale(1.57)" stroke-width="0.574"/><use href="#ig45" transform="translate(542.3 41.9) scale(1.57)" stroke-width="0.574"/><use href="#ig315" transform="translate(561.2 41.9) scale(1.57)" stroke-width="0.574"/><use href="#ig45" transform="translate(563.3 41.9) scale(1.57)" stroke-width="0.574"/><use href="#ig45" transform="translate(572 50.6) scale(1.57)" stroke-width="0.574"/><use href="#ig135" transform="translate(572 52.7) scale(1.57)" stroke-width="0.574"/><use href="#ig225" transform="translate(593.2 52.7) scale(1.57)" stroke-width="0.574"/><use href="#ig315" transform="translate(593.2 50.6) scale(1.57)" stroke-width="0.574"/><use href="#ig315" transform="translate(601.9 41.9) scale(1.57)" stroke-width="0.574"/><use href="#ig45" transform="translate(604 41.9) scale(1.57)" stroke-width="0.574"/><use href="#ig315" transform="translate(622.9 41.9) scale(1.57)" stroke-width="0.574"/><use href="#ig45" transform="translate(625.1 41.9) scale(1.57)" stroke-width="0.574"/><use href="#ig45" transform="translate(633.8 50.6) scale(1.57)" stroke-width="0.574"/><use href="#ig135" transform="translate(633.8 52.7) scale(1.57)" stroke-width="0.574"/><use href="#ig315" transform="translate(648.4 67.4) scale(1.57)" stroke-width="0.574"/><use href="#ig45" transform="translate(650.6 67.4) scale(1.57)" stroke-width="0.574"/><use href="#ig45" transform="translate(659.3 76.1) scale(1.57)" stroke-width="0.574"/><use href="#ig135" transform="translate(659.3 78.2) scale(1.57)" stroke-width="0.574"/><use href="#ig45" transform="translate(659.3 97.1) scale(1.57)" stroke-width="0.574"/><use href="#ig135" transform="translate(659.3 99.3) scale(1.57)" stroke-width="0.574"/><use href="#ig135" transform="translate(650.6 108) scale(1.57)" stroke-width="0.574"/><use href="#ig225" transform="translate(648.4 108) scale(1.57)" stroke-width="0.574"/><use href="#ig225" transform="translate(667.9 127.5) scale(1.57)" stroke-width="0.574"/><use href="#ig315" transform="translate(667.9 125.3) scale(1.57)" stroke-width="0.574"/><use href="#ig315" transform="translate(676.6 116.6) scale(1.57)" stroke-width="0.574"/><use href="#ig45" transform="translate(678.8 116.6) scale(1.57)" stroke-width="0.574"/><use href="#ig315" transform="translate(697.7 116.6) scale(1.57)" stroke-width="0.574"/><use href="#ig45" transform="translate(699.8 116.6) scale(1.57)" stroke-width="0.574"/><use href="#ig45" transform="translate(708.5 125.3) scale(1.57)" stroke-width="0.574"/><use href="#ig135" transform="translate(708.5 127.5) scale(1.57)" stroke-width="0.574"/><use href="#ig315" transform="translate(723.2 142.1) scale(1.57)" stroke-width="0.574"/><use href="#ig45" transform="translate(725.3 142.1) scale(1.57)" stroke-width="0.574"/><use href="#ig45" transform="translate(734 150.8) scale(1.57)" stroke-width="0.574"/><use href="#ig135" transform="translate(734 153) scale(1.57)" stroke-width="0.574"/><use href="#ig45" transform="translate(734 171.9) scale(1.57)" stroke-width="0.574"/><use href="#ig135" transform="translate(734 174) scale(1.57)" stroke-width="0.574"/><use href="#ig135" transform="translate(725.3 182.7) scale(1.57)" stroke-width="0.574"/><use href="#ig225" transform="translate(723.2 182.7) scale(1.57)" stroke-width="0.574"/><use href="#ig315" transform="translate(723.2 203.9) scale(1.57)" stroke-width="0.574"/><use href="#ig45" transform="translate(725.3 203.9) scale(1.57)" stroke-width="0.574"/><use href="#ig45" transform="translate(734 212.6) scale(1.57)" stroke-width="0.574"/><use href="#ig135" transform="translate(734 214.7) scale(1.57)" stroke-width="0.574"/><use href="#ig45" transform="translate(734 233.6) scale(1.57)" stroke-width="0.574"/><use href="#ig135" transform="translate(734 235.8) scale(1.57)" stroke-width="0.574"/><use href="#ig135" transform="translate(725.3 244.5) scale(1.57)" stroke-width="0.574"/><use href="#ig225" transform="translate(723.2 244.5) scale(1.57)" stroke-width="0.574"/><use href="#ig45" transform="translate(708.5 259.1) scale(1.57)" stroke-width="0.574"/><use href="#ig135" transform="translate(708.5 261.3) scale(1.57)" stroke-width="0.574"/><use href="#ig135" transform="translate(699.8 270) scale(1.57)" stroke-width="0.574"/><use href="#ig225" transform="translate(697.7 270) scale(1.57)" stroke-width="0.574"/><use href="#ig135" transform="translate(678.8 270) scale(1.57)" stroke-width="0.574"/><use href="#ig225" transform="translate(676.6 270) scale(1.57)" stroke-width="0.574"/><use href="#ig225" transform="translate(667.9 261.3) scale(1.57)" stroke-width="0.574"/><use href="#ig315" transform="translate(667.9 259.1) scale(1.57)" stroke-width="0.574"/><use href="#ig315" transform="translate(648.4 278.6) scale(1.57)" stroke-width="0.574"/><use href="#ig45" transform="translate(650.6 278.6) scale(1.57)" stroke-width="0.574"/><use href="#ig45" transform="translate(659.3 287.3) scale(1.57)" stroke-width="0.574"/><use href="#ig135" transform="translate(659.3 289.5) scale(1.57)" stroke-width="0.574"/><use href="#ig45" transform="translate(659.3 308.4) scale(1.57)" stroke-width="0.574"/><use href="#ig135" transform="translate(659.3 310.5) scale(1.57)" stroke-width="0.574"/><use href="#ig135" transform="translate(650.6 319.2) scale(1.57)" stroke-width="0.574"/><use href="#ig225" transform="translate(648.4 319.2) scale(1.57)" stroke-width="0.574"/><use href="#ig45" transform="translate(633.8 333.9) scale(1.57)" stroke-width="0.574"/><use href="#ig135" transform="translate(633.8 336) scale(1.57)" stroke-width="0.574"/><use href="#ig135" transform="translate(625.1 344.7) scale(1.57)" stroke-width="0.574"/><use href="#ig225" transform="translate(622.9 344.7) scale(1.57)" stroke-width="0.574"/><use href="#ig135" transform="translate(604 344.7) scale(1.57)" stroke-width="0.574"/><use href="#ig225" transform="translate(601.9 344.7) scale(1.57)" stroke-width="0.574"/><use href="#ig225" transform="translate(593.2 336) scale(1.57)" stroke-width="0.574"/><use href="#ig315" transform="translate(593.2 333.9) scale(1.57)" stroke-width="0.574"/><use href="#ig45" transform="translate(572 333.9) scale(1.57)" stroke-width="0.574"/><use href="#ig135" transform="translate(572 336) scale(1.57)" stroke-width="0.574"/><use href="#ig135" transform="translate(563.3 344.7) scale(1.57)" stroke-width="0.574"/><use href="#ig225" transform="translate(561.2 344.7) scale(1.57)" stroke-width="0.574"/><use href="#ig135" transform="translate(542.3 344.7) scale(1.57)" stroke-width="0.574"/><use href="#ig225" transform="translate(540.1 344.7) scale(1.57)" stroke-width="0.574"/><use href="#ig225" transform="translate(531.4 336) scale(1.57)" stroke-width="0.574"/><use href="#ig315" transform="translate(531.4 333.9) scale(1.57)" stroke-width="0.574"/><use href="#ig135" transform="translate(516.8 319.2) scale(1.57)" stroke-width="0.574"/><use href="#ig225" transform="translate(514.6 319.2) scale(1.57)" stroke-width="0.574"/><use href="#ig225" transform="translate(505.9 310.5) scale(1.57)" stroke-width="0.574"/><use href="#ig315" transform="translate(505.9 308.4) scale(1.57)" stroke-width="0.574"/><use href="#ig225" transform="translate(505.9 289.5) scale(1.57)" stroke-width="0.574"/><use href="#ig315" transform="translate(505.9 287.3) scale(1.57)" stroke-width="0.574"/><use href="#ig315" transform="translate(514.6 278.6) scale(1.57)" stroke-width="0.574"/><use href="#ig45" transform="translate(516.8 278.6) scale(1.57)" stroke-width="0.574"/><use href="#ig45" transform="translate(497.3 259.1) scale(1.57)" stroke-width="0.574"/><use href="#ig135" transform="translate(497.3 261.3) scale(1.57)" stroke-width="0.574"/><use href="#ig135" transform="translate(488.6 270) scale(1.57)" stroke-width="0.574"/><use href="#ig225" transform="translate(486.4 270) scale(1.57)" stroke-width="0.574"/><use href="#ig135" transform="translate(467.5 270) scale(1.57)" stroke-width="0.574"/><use href="#ig225" transform="translate(465.4 270) scale(1.57)" stroke-width="0.574"/><use href="#ig225" transform="translate(456.7 261.3) scale(1.57)" stroke-width="0.574"/><use href="#ig315" transform="translate(456.7 259.1) scale(1.57)" stroke-width="0.574"/><use href="#ig135" transform="translate(442 244.5) scale(1.57)" stroke-width="0.574"/><use href="#ig225" transform="translate(439.9 244.5) scale(1.57)" stroke-width="0.574"/><use href="#ig225" transform="translate(431.2 235.8) scale(1.57)" stroke-width="0.574"/><use href="#ig315" transform="translate(431.2 233.6) scale(1.57)" stroke-width="0.574"/><use href="#ig225" transform="translate(431.2 214.7) scale(1.57)" stroke-width="0.574"/><use href="#ig315" transform="translate(431.2 212.6) scale(1.57)" stroke-width="0.574"/><use href="#ig315" transform="translate(439.9 203.9) scale(1.57)" stroke-width="0.574"/><use href="#ig45" transform="translate(442 203.9) scale(1.57)" stroke-width="0.574"/><use href="#ig135" transform="translate(442 182.7) scale(1.57)" stroke-width="0.574"/><use href="#ig225" transform="translate(439.9 182.7) scale(1.57)" stroke-width="0.574"/><use href="#ig225" transform="translate(431.2 174) scale(1.57)" stroke-width="0.574"/><use href="#ig315" transform="translate(431.2 171.9) scale(1.57)" stroke-width="0.574"/><use href="#ig225" transform="translate(431.2 153) scale(1.57)" stroke-width="0.574"/><use href="#ig315" transform="translate(431.2 150.8) scale(1.57)" stroke-width="0.574"/><use href="#ig315" transform="translate(439.9 142.1) scale(1.57)" stroke-width="0.574"/><use href="#ig45" transform="translate(442 142.1) scale(1.57)" stroke-width="0.574"/><use href="#ig225" transform="translate(456.7 127.5) scale(1.57)" stroke-width="0.574"/><use href="#ig315" transform="translate(456.7 125.3) scale(1.57)" stroke-width="0.574"/><use href="#ig315" transform="translate(465.4 116.6) scale(1.57)" stroke-width="0.574"/><use href="#ig45" transform="translate(467.5 116.6) scale(1.57)" stroke-width="0.574"/><use href="#ig315" transform="translate(486.4 116.6) scale(1.57)" stroke-width="0.574"/><use href="#ig45" transform="translate(488.6 116.6) scale(1.57)" stroke-width="0.574"/><use href="#ig45" transform="translate(497.3 125.3) scale(1.57)" stroke-width="0.574"/><use href="#ig135" transform="translate(497.3 127.5) scale(1.57)" stroke-width="0.574"/><path fill="#4fca95" stroke="#4fca95" stroke-width="0.5" d="M565.8 518.9 559.2 518.9 559.2 559.8 565.8 566.4zM524.1 475.2 524.4 476 524.5 476.2 524.5 477.2 526.4 477.2 526.4 470.4 524.5 470.4 524.5 471.3 524.4 471.6 524.1 472.4zM510.5 492.1 511.3 492.1 511.3 486.6 510.5 487.4zM504.2 485.8 504.2 483.5 505 483.5 505 485.8zM504.2 464.1 504.2 461.7 505 461.7 505 464.1zM511.3 455.4 510.5 455.4 510.5 460.2 511.3 461zM544.8 451.9 542.6 451.9 542.6 465.9 544.8 468.1zM530.6 437.7 530.6 435.4 531.4 435.4 531.4 437.7zM537.7 429.1 536.9 429.1 536.9 433.8 537.7 434.6zM558.7 429.1 559.4 429.1 559.4 435 558.7 435zM562.1 435.8 561.4 436.5 561.9 437.1 562.1 437.6zM606.4 451.9 608.7 451.9 608.7 469.3 606.4 469.3zM594.4 437.7 594.4 435.4 595.2 435.4 595.2 437.7zM601.5 429.1 600.7 429.1 600.7 433.8 601.5 434.6zM622.5 429.1 623.3 429.1 623.3 435 622.5 435zM626 435.8 625.2 436.5 625.8 437.1 626 437.6zM616.6 471.5 614.3 473.8 616 475.5 616.6 476.8zM648.9 455.4 649.6 455.4 649.6 461.4 648.9 461.4zM652.3 462.1 651.6 462.9 652.2 463.5 652.3 463.9zM652.3 483.6 652.2 484.1 651.6 484.7 652.3 485.4zM649.6 492.1 648.9 492.1 648.9 486.2 649.6 486.2zM589 576.4 582.4 583 589 589.6zM683.7 529.2 686 529.2 686 546.6 683.7 546.6zM671.7 515 671.7 512.7 672.5 512.7 672.5 515zM678.8 506.4 678 506.4 678 511.1 678.8 511.9zM699.8 506.4 700.6 506.4 700.6 512.3 699.8 512.3zM703.3 513.1 702.5 513.8 703.1 514.4 703.3 514.9zM693.9 548.8 691.6 551.1 693.3 552.8 693.9 554.1zM726.2 532.7 726.9 532.7 726.9 538.7 726.2 538.7zM729.6 539.4 728.9 540.2 729.5 540.8 729.6 541.2zM729.6 560.9 729.5 561.4 728.9 562 729.6 562.7zM726.9 569.4 726.2 569.4 726.2 563.5 726.9 563.5zM693.9 611.9 693.3 613.2 691.6 614.9 693.9 617.2zM726.2 596.6 726.9 596.6 726.9 602.5 726.2 602.5zM729.6 603.3 728.9 604 729.5 604.6 729.6 605.1zM729.6 624.8 729.5 625.2 728.9 625.8 729.6 626.6zM726.9 633.3 726.2 633.3 726.2 627.3 726.9 627.3zM686 636.8 683.7 636.8 683.7 619.4 686 619.4zM703.3 651.1 703.1 651.6 702.5 652.2 703.3 652.9zM700.6 659.6 699.8 659.6 699.8 653.7 700.6 653.7zM678 659.6 678.8 659.6 678.8 654.1 678 654.9zM671.7 653.3 671.7 651 672.5 651 672.5 653.3zM559.2 647.1 565.8 647.1 565.8 599.6 559.2 606.2zM616.6 689.2 616 690.5 614.3 692.2 616.6 694.5zM648.9 673.9 649.6 673.9 649.6 679.8 648.9 679.8zM652.3 680.6 651.6 681.3 652.2 681.9 652.3 682.4zM652.3 702.1 652.2 702.5 651.6 703.1 652.3 703.9zM649.6 710.6 648.9 710.6 648.9 704.6 649.6 704.6zM608.7 714.1 606.4 714.1 606.4 696.7 608.7 696.7zM626 728.4 625.8 728.9 625.2 729.5 626 730.2zM623.3 736.9 622.5 736.9 622.5 731 623.3 731zM600.7 736.9 601.5 736.9 601.5 731.4 600.7 732.2zM594.4 730.6 594.4 728.3 595.2 728.3 595.2 730.6zM542.6 714.1 544.8 714.1 544.8 697.9 542.6 700.1zM562.1 728.4 561.9 728.9 561.4 729.5 562.1 730.2zM559.4 736.9 558.7 736.9 558.7 731 559.4 731zM536.9 736.9 537.7 736.9 537.7 731.4 536.9 732.2zM530.6 730.6 530.6 728.3 531.4 728.3 531.4 730.6zM524.1 693.6 524.4 694.4 524.5 694.7 524.5 695.6 526.4 695.6 526.4 688.8 524.5 688.8 524.5 689.8 524.4 690 524.1 690.8zM510.5 710.6 511.3 710.6 511.3 705 510.5 705.8zM504.2 704.3 504.2 701.9 505 701.9 505 704.3zM504.2 682.5 504.2 680.2 505 680.2 505 682.5zM511.3 673.9 510.5 673.9 510.5 678.6 511.3 679.4zM505.1 587.1 506 589.4 506.2 590.2 505.1 591.3 506.2 590.2 506.2 593 511.7 593 511.7 573 506.2 573 506.2 575.8 506 576.6 505.1 577.5 506 576.6 505.1 578.9zM465.3 636.8 467.5 636.8 467.5 620.6 465.3 622.8zM484.8 651.1 484.6 651.6 484.1 652.2 484.8 652.9zM482.1 659.6 481.4 659.6 481.4 653.7 482.1 653.7zM459.6 659.6 460.4 659.6 460.4 654.1 459.6 654.9zM453.3 653.3 453.3 651 454.1 651 454.1 653.3zM446.8 616.3 447.1 617.1 446.8 616.8 447.1 617.1 447.2 617.4 447.2 618.3 449.1 618.3 449.1 611.5 447.2 611.5 447.2 612.5 446.8 612.1 447.2 612.5 447.1 612.7 446.8 613.1 447.1 612.7 446.8 613.5zM433.2 633.3 434 633.3 434 627.7 433.2 628.5zM426.9 627 426.9 624.6 427.7 624.6 427.7 627zM426.9 605.2 426.9 602.9 427.7 602.9 427.7 605.2zM434 596.6 433.2 596.6 433.2 601.3 434 602.1zM446.8 552.5 447.1 553.3 446.8 552.9 447.1 553.3 447.2 553.5 446.8 553.9 447.2 553.5 447.2 554.5 449.1 554.5 449.1 547.7 447.2 547.7 447.2 548.6 446.8 548.3 447.2 548.6 447.1 548.9 446.8 549.2 447.1 548.9 446.8 549.7zM433.2 569.4 434 569.4 434 563.9 433.2 564.7zM426.9 563.1 426.9 560.8 427.7 560.8 427.7 563.1zM426.9 541.4 426.9 539 427.7 539 427.7 541.4zM434 532.7 433.2 532.7 433.2 537.5 434 538.3zM467.5 529.2 465.3 529.2 465.3 543.2 467.5 545.4zM453.3 515 453.3 512.7 454.1 512.7 454.1 515zM460.4 506.4 459.6 506.4 459.6 511.1 460.4 511.9zM481.4 506.4 482.1 506.4 482.1 512.3 481.4 512.3zM484.8 513.1 484.1 513.8 484.6 514.4 484.8 514.9z"/><path fill="#58daa2" stroke="#58daa2" stroke-width="0.5" d="M572.4 569.8 572.4 518.9 565.8 518.9 565.8 566.4 569.2 569.8zM562.8 472.4 565.5 469.6 560.1 469.6zM526.4 477.2 526.4 470.4 528.6 470.4 528.6 477.2zM511.3 492.1 512.1 492.1 512.1 486.2 511.7 486.2 511.3 486.6zM505 485.8 505 483.5 505.8 483.5 505.8 485.8zM517.4 462.4 518.4 461.5 516.5 461.5zM505 464.1 505 461.7 505.8 461.7 505.8 464.1zM512.1 461.4 512.1 455.4 511.3 455.4 511.3 461 511.7 461.4zM547.1 469.3 547.1 451.9 544.8 451.9 544.8 468.1 546 469.3zM543.8 436 544.7 435.1 542.9 435.1zM531.4 437.7 531.4 435.4 532.1 435.4 532.1 437.7zM538.4 435 538.4 429.1 537.7 429.1 537.7 434.6 538.1 435zM558.1 435.1 559 436 559.8 435.3 559.6 435.1 559.5 435.1zM559.4 429.1 560.2 429.1 560.2 435 559.4 435zM562.9 437.7 562.9 435.4 562.5 435.4 562.1 435.8 562.1 437.6 562.2 437.7zM604.7 469.6 607.5 472.4 610.2 469.6 609.7 470.1 609.1 469.7 609 469.6zM608.7 451.9 610.9 451.9 610.9 469.3 608.7 469.3zM607.6 436 608.6 435.1 606.7 435.1zM595.2 437.7 595.2 435.4 596 435.4 596 437.7zM602.3 435 602.3 429.1 601.5 429.1 601.5 434.6 601.9 435zM621.9 435.1 622.9 436 623.6 435.3 623.4 435.1zM623.3 429.1 624 429.1 624 435 623.3 435zM626.7 437.7 626.7 435.4 626.4 435.4 626 435.8 626 437.6 626.1 437.7zM618.8 477.2 618.8 470.4 617.7 470.4 616.6 471.5 616.6 476.8 616.8 477.2zM648.3 461.5 649.2 462.4 650 461.6 649.8 461.5 649.7 461.5zM649.6 455.4 650.4 455.4 650.4 461.4 649.6 461.4zM653.1 464.1 653.1 461.7 652.7 461.7 652.3 462.1 652.3 463.9 652.4 464.1zM653.1 485.8 653.1 483.5 652.4 483.5 652.3 483.6 652.3 485.4 652.7 485.8zM650.4 492.1 649.6 492.1 649.6 486.2 650.4 486.2zM595.6 593 595.6 573 592.4 573 589 576.4 589 589.6 592.4 593zM682 546.9 684.8 549.7 687 547.4 686.4 547 686.3 546.9zM686 529.2 688.2 529.2 688.2 546.6 686 546.6zM684.9 513.3 685.9 512.4 684 512.4zM672.5 515 672.5 512.7 673.3 512.7 673.3 515zM679.6 512.3 679.6 506.4 678.8 506.4 678.8 511.9 679.2 512.3zM699.2 512.4 700.2 513.3 700.9 512.6 700.7 512.5 700.7 512.4zM700.6 506.4 701.3 506.4 701.3 512.3 700.6 512.3zM704 515 704 512.7 703.7 512.7 703.3 513.1 703.3 514.9 703.4 515zM696.1 554.5 696.1 547.7 695 547.7 693.9 548.8 693.9 554.1 694.1 554.5zM725.6 538.8 726.5 539.7 727.3 538.9 727.1 538.8 727 538.8zM726.9 532.7 727.7 532.7 727.7 538.7 726.9 538.7zM730.4 541.4 730.4 539 730 539 729.6 539.4 729.6 541.2 729.7 541.4zM730.4 563.1 730.4 560.8 729.7 560.8 729.6 560.9 729.6 562.7 730 563.1zM727.7 569.4 726.9 569.4 726.9 563.5 727.7 563.5zM696.1 618.3 696.1 611.5 694.1 611.5 693.9 611.9 693.9 617.2 695 618.3zM725.6 602.6 726.5 603.6 727.3 602.8 727.1 602.7 727 602.6zM726.9 596.6 727.7 596.6 727.7 602.5 726.9 602.5zM730.4 605.2 730.4 602.9 730 602.9 729.6 603.3 729.6 605.1 729.7 605.2zM730.4 627 730.4 624.6 729.7 624.6 729.6 624.8 729.6 626.6 730 627zM727.7 633.3 726.9 633.3 726.9 627.3 727.7 627.3zM688.2 636.8 686 636.8 686 619.4 688.2 619.4zM696.8 639.9 696.4 639.9 695.7 640.7 695.8 640.8zM704 653.3 704 651 703.4 651 703.3 651.1 703.3 652.9 703.7 653.3zM701.3 659.6 700.6 659.6 700.6 653.7 701.3 653.7zM678.8 659.6 679.6 659.6 679.6 653.7 679.2 653.7 678.8 654.1zM672.5 653.3 672.5 651 673.3 651 673.3 653.3zM565.8 647.1 572.4 647.1 572.4 596.2 569.2 596.2 565.8 599.6zM597.4 656.2 596.5 656.2 594.3 658.4 594.7 658.9zM618.8 695.6 618.8 688.8 616.8 688.8 616.6 689.2 616.6 694.5 617.7 695.6zM648.3 679.9 649.2 680.9 650 680.1 649.8 680 649.7 679.9zM649.6 673.9 650.4 673.9 650.4 679.8 649.6 679.8zM653.1 682.5 653.1 680.2 652.7 680.2 652.3 680.6 652.3 682.4 652.4 682.5zM653.1 704.3 653.1 701.9 652.4 701.9 652.3 702.1 652.3 703.9 652.7 704.3zM650.4 710.6 649.6 710.6 649.6 704.6 650.4 704.6zM610.9 714.1 608.7 714.1 608.7 696.7 610.9 696.7zM619.4 717.2 619.1 717.2 618.4 718 618.5 718.1zM626.7 730.6 626.7 728.3 626.1 728.3 626 728.4 626 730.2 626.4 730.6zM624 736.9 623.3 736.9 623.3 731 624 731zM601.5 736.9 602.3 736.9 602.3 731 601.9 731 601.5 731.4zM595.2 730.6 595.2 728.3 596 728.3 596 730.6zM544.8 714.1 547.1 714.1 547.1 696.7 546 696.7 544.8 697.9zM555.6 717.2 555.3 717.2 554.5 718 554.7 718.1zM562.9 730.6 562.9 728.3 562.2 728.3 562.1 728.4 562.1 730.2 562.5 730.6zM560.2 736.9 559.4 736.9 559.4 731 560.2 731zM537.7 736.9 538.4 736.9 538.4 731 538.1 731 537.7 731.4zM531.4 730.6 531.4 728.3 532.1 728.3 532.1 730.6zM526.4 695.6 526.4 688.8 528.6 688.8 528.6 695.6zM511.3 710.6 512.1 710.6 512.1 704.6 511.7 704.6 511.3 705zM505 704.3 505 701.9 505.8 701.9 505.8 704.3zM517.4 680.9 518.4 679.9 516.5 679.9zM505 682.5 505 680.2 505.8 680.2 505.8 682.5zM512.1 679.8 512.1 673.9 511.3 673.9 511.3 679.4 511.7 679.8zM511.7 593 511.7 573 518.3 573 518.3 593zM467.5 636.8 469.8 636.8 469.8 619.4 468.7 619.4 467.5 620.6zM478.3 639.9 478 639.9 477.2 640.7 476.9 640.3 477.4 640.8zM485.6 653.3 485.6 651 484.9 651 484.8 651.1 484.8 652.9 485.2 653.3zM482.9 659.6 482.1 659.6 482.1 653.7 482.9 653.7zM460.4 659.6 461.1 659.6 461.1 653.7 460.8 653.7 460.4 654.1zM454.1 653.3 454.1 651 454.8 651 454.8 653.3zM449.1 618.3 449.1 611.5 451.3 611.5 451.3 618.3zM434 633.3 434.8 633.3 434.8 627.3 434.4 627.3 434 627.7zM427.7 627 427.7 624.6 428.5 624.6 428.5 627zM440.1 603.6 441.1 602.6 439.2 602.6zM427.7 605.2 427.7 602.9 428.5 602.9 428.5 605.2zM434.8 602.5 434.8 596.6 434 596.6 434 602.1 434.4 602.5zM485.5 549.7 488.2 546.9 482.8 546.9zM449.1 554.5 449.1 547.7 451.3 547.7 451.3 554.5zM434 569.4 434.8 569.4 434.8 563.5 434.4 563.5 434 563.9zM427.7 563.1 427.7 560.8 428.5 560.8 428.5 563.1zM440.1 539.7 441.1 538.8 439.2 538.8zM427.7 541.4 427.7 539 428.5 539 428.5 541.4zM434.8 538.7 434.8 532.7 434 532.7 434 538.3 434.4 538.7zM469.8 546.6 469.8 529.2 467.5 529.2 467.5 545.4 468.7 546.6zM466.5 513.3 467.4 512.4 465.6 512.4zM454.1 515 454.1 512.7 454.8 512.7 454.8 515zM461.1 512.3 461.1 506.4 460.4 506.4 460.4 511.9 460.8 512.3zM480.8 512.4 481.7 513.3 482.5 512.6 482.3 512.5 482.2 512.4zM482.1 506.4 482.9 506.4 482.9 512.3 482.1 512.3zM485.6 515 485.6 512.7 485.2 512.7 484.8 513.1 484.8 514.9 484.9 515z"/><path fill="#63ecb0" stroke="#63ecb0" stroke-width="0.5" d="M578.3 505.7 576 506.6 575.2 506.8 572.4 506.8 572.4 512.3 592.4 512.3 592.4 506.8 589.6 506.8 588.8 506.6 587.9 505.7 588.8 506.6 586.5 505.7zM528.6 465.9 528.6 468.1 544.8 468.1 542.6 465.9zM514.3 485.4 513.8 485.2 513.2 484.7 512.5 485.4zM505.8 482.7 505.8 482 511.7 482 511.7 482.7zM505.8 460.2 505.8 461 511.3 461 510.5 460.2zM512.1 453.9 514.4 453.9 514.4 454.7 512.1 454.7zM549.1 447.4 548.3 447.7 548 447.8 547.1 447.8 547.1 449.7 553.9 449.7 553.9 447.8 552.9 447.8 553.3 447.4 552.9 447.8 552.7 447.7 552.3 447.4 552.7 447.7 551.9 447.4zM532.1 433.8 532.1 434.6 537.7 434.6 536.9 433.8zM538.4 427.5 540.8 427.5 540.8 428.3 538.4 428.3zM560.2 427.5 562.5 427.5 562.5 428.3 560.2 428.3zM568.8 434.6 568.8 433.8 564.1 433.8 563.3 434.6zM612.9 447.4 612.1 447.7 611.9 447.8 610.9 447.8 610.9 449.7 617.7 449.7 617.7 447.8 616.8 447.8 617.1 447.4 616.8 447.8 616.5 447.7 615.7 447.4zM596 433.8 596 434.6 601.5 434.6 600.7 433.8zM602.3 427.5 604.6 427.5 604.6 428.3 602.3 428.3zM624 427.5 626.4 427.5 626.4 428.3 624 428.3zM632.7 434.6 632.7 433.8 627.9 433.8 627.1 434.6zM636.2 468.1 636.2 465.9 622.2 465.9 620 468.1zM650.4 453.9 652.7 453.9 652.7 454.7 650.4 454.7zM659 461 659 460.2 654.3 460.2 653.5 461zM659 482 659 482.7 653.1 482.7 653.1 482zM652.3 485.4 651.6 484.7 651 485.2 650.5 485.4zM646.5 566.4 646.5 559.8 605.6 559.8 599 566.4zM690.2 524.7 689.4 525 689.2 525.1 688.2 525.1 688.2 527 695 527 695 525.1 694.1 525.1 693.8 525 693 524.7zM673.3 511.1 673.3 511.9 678.8 511.9 678 511.1zM679.6 504.8 681.9 504.8 681.9 505.6 679.6 505.6zM701.3 504.8 703.7 504.8 703.7 505.6 701.3 505.6zM710 511.9 710 511.1 705.2 511.1 704.4 511.9zM713.5 545.4 713.5 543.2 699.5 543.2 697.3 545.4zM727.7 531.2 730 531.2 730 532 727.7 532zM736.3 538.3 736.3 537.5 731.6 537.5 730.8 538.3zM736.3 559.3 736.3 560 730.4 560 730.4 559.3zM729.6 562.7 728.9 562 728.3 562.5 727.8 562.7zM713.5 607 713.5 609.3 696.1 609.3 696.1 607zM727.7 595 730 595 730 595.8 727.7 595.8zM736.3 602.1 736.3 601.3 731.6 601.3 730.8 602.1zM736.3 623.1 736.3 623.9 730.4 623.9 730.4 623.1zM729.6 626.6 728.9 625.8 728.3 626.4 727.8 626.6zM693.9 617.2 691.6 614.9 689.9 616.6 688.6 617.2zM710 649.5 710 650.2 704 650.2 704 649.5zM703.3 652.9 702.5 652.2 701.9 652.8 701.5 652.9zM681.8 652.9 681.3 652.8 680.7 652.2 680 652.9zM673.3 650.2 673.3 649.5 679.2 649.5 679.2 650.2zM589 589.6 582.4 583 575.8 589.6zM636.2 684.3 636.2 686.6 618.8 686.6 618.8 684.3zM650.4 672.3 652.7 672.3 652.7 673.1 650.4 673.1zM659 679.4 659 678.6 654.3 678.6 653.5 679.4zM659 700.4 659 701.2 653.1 701.2 653.1 700.4zM652.3 703.9 651.6 703.1 651 703.7 650.5 703.9zM616.6 694.5 614.3 692.2 612.6 693.9 611.3 694.5zM632.7 726.8 632.7 727.5 626.7 727.5 626.7 726.8zM626 730.2 625.2 729.5 624.6 730.1 624.2 730.2zM604.5 730.2 604 730.1 603.4 729.5 602.7 730.2zM596 727.5 596 726.8 601.9 726.8 601.9 727.5zM553.5 694.5 552.2 693.9 550.5 692.2 548.2 694.5zM568.8 726.8 568.8 727.5 562.9 727.5 562.9 726.8zM562.1 730.2 561.4 729.5 560.8 730.1 560.3 730.2zM540.6 730.2 540.2 730.1 539.6 729.5 538.8 730.2zM532.1 727.5 532.1 726.8 538.1 726.8 538.1 727.5zM528.6 686.6 528.6 684.3 546 684.3 546 686.6zM514.3 703.9 513.8 703.7 513.2 703.1 512.5 703.9zM505.8 701.2 505.8 700.4 511.7 700.4 511.7 701.2zM505.8 678.6 505.8 679.4 511.3 679.4 510.5 678.6zM512.1 672.3 514.4 672.3 514.4 673.1 512.1 673.1zM518.3 559.8 518.3 566.4 565.8 566.4 559.2 559.8zM476.2 617.2 474.9 616.6 473.2 614.9 470.9 617.2zM491.5 649.5 491.5 650.2 485.6 650.2 485.6 649.5zM484.8 652.9 484.1 652.2 483.5 652.8 483 652.9zM463.3 652.9 462.9 652.8 462.3 652.2 461.5 652.9zM454.8 650.2 454.8 649.5 460.8 649.5 460.8 650.2zM451.3 609.3 451.3 607 468.7 607 468.7 609.3zM437 626.6 436.5 626.4 435.9 625.8 435.2 626.6zM428.5 623.9 428.5 623.1 434.4 623.1 434.4 623.9zM428.5 601.3 428.5 602.1 434 602.1 433.2 601.3zM434.8 595 437.1 595 437.1 595.8 434.8 595.8zM451.3 543.2 451.3 545.4 467.5 545.4 465.3 543.2zM437 562.7 436.5 562.5 435.9 562 435.2 562.7zM428.5 560 428.5 559.3 434.4 559.3 434.4 560zM428.5 537.5 428.5 538.3 434 538.3 433.2 537.5zM434.8 531.2 437.1 531.2 437.1 532 434.8 532zM471.8 524.7 471 525 470.7 525.1 470.4 524.7 470.7 525.1 469.8 525.1 469.8 527 476.6 527 476.6 525.1 475.6 525.1 476 524.7 475.6 525.1 475.4 525 474.6 524.7zM454.8 511.1 454.8 511.9 460.4 511.9 459.6 511.1zM461.1 504.8 463.5 504.8 463.5 505.6 461.1 505.6zM482.9 504.8 485.2 504.8 485.2 505.6 482.9 505.6zM491.5 511.9 491.5 511.1 486.8 511.1 486 511.9z"/><path fill="#64eeb2" stroke="#64eeb2" stroke-width="0.5" d="M572.4 512.3 592.4 512.3 592.4 518.9 572.4 518.9zM548.2 476 548.8 475.5 548.2 476.8 548 477.2 546.8 478.4 549.1 480.6 557.3 472.4 555.1 470.1 553.9 471.3 553.5 471.5 552.2 472.1zM528.6 468.1 528.6 470.4 546 470.4 546 469.3 544.8 468.1zM511.8 479.5 512.7 480.5 519.4 473.8 517.6 473.8zM512.1 486.2 514.4 486.2 514.4 485.5 514.3 485.4 512.5 485.4 512.1 485.8zM505.8 483.5 505.8 482.7 511.7 482.7 511.7 483.5zM512.6 463.5 512.5 463.9 512.4 464.1 512 464.5 512.7 465.2 515.6 462.4 514.8 461.6 514.4 462 514.3 462.1 513.8 462.3zM505.8 461 505.8 461.7 511.7 461.7 511.7 461.4 511.3 461zM512.1 454.7 514.4 454.7 514.4 455.4 512.1 455.4zM547.1 449.7 553.9 449.7 553.9 451.9 547.1 451.9zM538.8 437.3 539 437.1 538.8 437.6 538.7 437.7 538.3 438.1 539.1 438.9 541.9 436 541 435.1 541.2 435.3 540.8 435.7 540.6 435.8 540.2 435.9zM532.1 434.6 532.1 435.4 538.1 435.4 538.1 435 537.7 434.6zM538.4 428.3 540.8 428.3 540.8 429.1 538.4 429.1zM557.2 436 556.2 435.1 550.5 440.9 550.5 442.7zM560.2 428.3 562.5 428.3 562.5 429.1 560.2 429.1zM562.9 435.4 568.8 435.4 568.8 434.6 563.3 434.6 562.9 435zM602 472.4 599.3 469.6 582.4 486.5 582.4 492 579.7 489.3 582.4 492 581 493.4zM610.9 449.7 617.7 449.7 617.7 451.9 610.9 451.9zM602.9 437.1 602.7 437.6 602.6 437.7 602.2 438.1 602 437.9 603 438.9 605.8 436 605 435.3 604.6 435.7 604.5 435.8 604 435.9zM596 434.6 596 435.4 601.9 435.4 601.9 435 601.5 434.6zM602.3 428.3 604.6 428.3 604.6 429.1 602.3 429.1zM621 436 620.1 435.1 612.9 442.3 613.4 441.8 614.3 440.9 614.3 442.7zM624 428.3 626.4 428.3 626.4 429.1 624 429.1zM626.7 435.4 632.7 435.4 632.7 434.6 627.1 434.6 626.7 435zM618.8 470.4 636.2 470.4 636.2 468.1 620 468.1 618.8 469.3zM646.4 461.5 647.4 462.4 640.2 469.6 639.3 468.6zM650.4 454.7 652.7 454.7 652.7 455.4 650.4 455.4zM653.1 461.7 659 461.7 659 461 653.5 461 653.1 461.4zM643 473.3 642.5 473.8 640.7 473.8 640.7 475.2 640.4 476zM659 482.7 659 483.5 653.1 483.5 653.1 482.7zM650.4 486.2 652.7 486.2 652.7 485.8 652.3 485.4 650.5 485.4 650.4 485.5zM595.6 573 646.5 573 646.5 566.4 599 566.4 595.6 569.8zM676.6 546.9 679.3 549.7 658.3 570.7 655.6 568zM688.2 527 695 527 695 529.2 688.2 529.2zM680.2 514.4 680 514.9 679.9 515 679.5 515.4 680.3 516.2 683.1 513.3 682.3 512.6 681.9 513 681.8 513.1 681.3 513.2zM673.3 511.9 673.3 512.7 679.2 512.7 679.2 512.3 678.8 511.9zM679.6 505.6 681.9 505.6 681.9 506.4 679.6 506.4zM698.3 513.3 697.4 512.4 691.6 518.2 691.6 520zM701.3 505.6 703.7 505.6 703.7 506.4 701.3 506.4zM704 512.7 710 512.7 710 511.9 704.4 511.9 704 512.3zM696.1 547.7 713.5 547.7 713.5 545.4 697.3 545.4 696.1 546.6zM723.7 538.8 724.7 539.7 717.5 546.9 716.6 546zM727.7 532 730 532 730 532.7 727.7 532.7zM730.4 539 736.3 539 736.3 538.3 730.8 538.3 730.4 538.7zM719.8 551.1 718 551.1 718 552.5 717.7 553.3zM736.3 560 736.3 560.8 730.4 560.8 730.4 560zM727.7 563.5 730 563.5 730 563.1 729.6 562.7 727.8 562.7 727.7 562.8zM665.2 583 659.7 583 659.7 587.1 658.8 589.4zM713.5 609.3 713.5 611.5 696.1 611.5 696.1 609.3zM723.7 602.6 724.7 603.6 717.5 610.7 716.6 609.8zM727.7 595.8 730 595.8 730 596.6 727.7 596.6zM730.4 602.9 736.3 602.9 736.3 602.1 730.8 602.1 730.4 602.5zM719.8 614.9 718 614.9 718 616.3 717.7 617.1zM736.3 623.9 736.3 624.6 730.4 624.6 730.4 623.9zM727.7 627.3 730 627.3 730 627 729.6 626.6 727.8 626.6 727.7 626.7zM688.2 619.4 695 619.4 695 618.3 693.9 617.2 688.6 617.2 688.2 617.4zM693.8 641 693 641.3 691.6 641.3 691.6 643.1zM710 650.2 710 651 704 651 704 650.2zM701.3 653.7 703.7 653.7 703.7 653.3 703.3 652.9 701.5 652.9 701.3 653zM680.3 648 679.3 647 686.5 639.9 687.4 640.8zM679.6 653.7 681.9 653.7 681.9 653 681.8 652.9 680 652.9 679.6 653.3zM673.3 651 673.3 650.2 679.2 650.2 679.2 651zM572.4 596.2 592.4 596.2 592.4 593 589 589.6 575.8 589.6 572.4 593zM588.8 659.4 586.5 660.3 582.4 660.3 582.4 665.8zM636.2 686.6 636.2 688.8 618.8 688.8 618.8 686.6zM646.4 679.9 647.4 680.9 640.2 688 639.3 687.1zM650.4 673.1 652.7 673.1 652.7 673.9 650.4 673.9zM653.1 680.2 659 680.2 659 679.4 653.5 679.4 653.1 679.8zM642.5 692.2 640.7 692.2 640.7 693.6 640.4 694.4zM659 701.2 659 701.9 653.1 701.9 653.1 701.2zM650.4 704.6 652.7 704.6 652.7 704.3 652.3 703.9 650.5 703.9 650.4 704zM610.9 696.7 617.7 696.7 617.7 695.6 616.6 694.5 611.3 694.5 610.9 694.7zM616.5 718.3 615.7 718.6 614.3 718.6 614.3 720.4zM632.7 727.5 632.7 728.3 626.7 728.3 626.7 727.5zM624 731 626.4 731 626.4 730.6 626 730.2 624.2 730.2 624 730.3zM603 725.3 602 724.3 609.2 717.2 610.1 718.1zM602.3 731 604.6 731 604.6 730.3 604.5 730.2 602.7 730.2 602.3 730.6zM596 728.3 596 727.5 601.9 727.5 601.9 728.3zM549.1 679.9 546.3 677.2 567.4 656.2 570.1 658.9zM547.1 696.7 553.9 696.7 553.9 694.7 553.5 694.5 548.2 694.5 547.1 695.6zM552.7 718.3 551.9 718.6 550.5 718.6 550.5 720.4zM568.8 727.5 568.8 728.3 562.9 728.3 562.9 727.5zM560.2 731 562.5 731 562.5 730.6 562.1 730.2 560.3 730.2 560.2 730.3zM539.1 725.3 538.2 724.3 545.4 717.2 546.3 718.1zM538.4 731 540.8 731 540.8 730.3 540.6 730.2 538.8 730.2 538.4 730.6zM532.1 728.3 532.1 727.5 538.1 727.5 538.1 728.3zM528.6 688.8 528.6 686.6 546 686.6 546 688.8zM511.8 698 512.7 698.9 519.4 692.2 517.6 692.2 518.5 691.3 519 690.8zM512.1 704.6 514.4 704.6 514.4 704 514.3 703.9 512.5 703.9 512.1 704.3zM505.8 701.9 505.8 701.2 511.7 701.2 511.7 701.9zM511.8 682.7 512.1 682.5 512.5 682.1 512.6 681.9 512.5 682.4 512.4 682.5 512 682.9 512.7 683.7 515.6 680.9 514.8 680.1 514.4 680.5 514.3 680.6 513.8 680.8 514 680.6 514.4 680.2 514.6 679.9zM505.8 679.4 505.8 680.2 511.7 680.2 511.7 679.8 511.3 679.4zM512.1 673.1 514.4 673.1 514.4 673.9 512.1 673.9zM518.3 566.4 518.3 573 569.2 573 569.2 569.8 565.8 566.4zM469 599.9 471.8 602.6 491.4 583 485.9 583zM469.8 619.4 476.6 619.4 476.6 617.4 476.2 617.2 470.9 617.2 469.8 618.3zM475.4 641 474.6 641.3 473.2 641.3 473.2 643.1zM491.5 650.2 491.5 651 485.6 651 485.6 650.2zM482.9 653.7 485.2 653.7 485.2 653.3 484.8 652.9 483 652.9 482.9 653zM461.8 648 460.9 647 468 639.9 469 640.8zM461.1 653.7 463.5 653.7 463.5 653 463.3 652.9 461.5 652.9 461.1 653.3zM454.8 651 454.8 650.2 460.8 650.2 460.8 651zM451.3 611.5 451.3 609.3 468.7 609.3 468.7 611.5zM434.5 620.7 435.4 621.6 442.1 614.9 440.3 614.9zM434.8 627.3 437.1 627.3 437.1 626.7 437 626.6 435.2 626.6 434.8 627zM428.5 624.6 428.5 623.9 434.4 623.9 434.4 624.6zM435.2 604.8 435.3 604.6 435.2 605.1 435.1 605.2 434.7 605.6 435.4 606.4 438.3 603.6 437.5 602.8 437.1 603.2 437 603.3 436.5 603.5zM428.5 602.1 428.5 602.9 434.4 602.9 434.4 602.5 434 602.1zM434.8 595.8 437.1 595.8 437.1 596.6 434.8 596.6zM469.8 554.5 470.9 553.3 471.5 552.8 470.9 554.1 470.7 554.5 469.5 555.7 471.8 557.9 480 549.7 477.8 547.4 476.6 548.6 476.2 548.8 474.9 549.4 475.4 548.8zM451.3 545.4 451.3 547.7 468.7 547.7 468.7 546.6 467.5 545.4zM434.5 556.8 435.4 557.8 442.1 551.1 441.2 550.1 441.7 549.7zM442.1 551.1 440.3 551.1 441.2 550.1zM434.8 563.5 437.1 563.5 437.1 562.8 437 562.7 435.2 562.7 434.8 563.1zM428.5 560.8 428.5 560 434.4 560 434.4 560.8zM435.3 540.8 435.2 541.2 435.1 541.4 434.7 541.8 435.4 542.5 438.3 539.7 437.5 538.9 437.1 539.3 437 539.4 436.5 539.6zM428.5 538.3 428.5 539 434.4 539 434.4 538.7 434 538.3zM434.8 532 437.1 532 437.1 532.7 434.8 532.7zM469.8 527 476.6 527 476.6 529.2 469.8 529.2zM461.7 514.4 461.5 514.9 461.4 515 461 515.4 461.8 516.2 464.6 513.3 463.9 512.6 463.5 513 463.3 513.1 462.9 513.2zM454.8 511.9 454.8 512.7 460.8 512.7 460.8 512.3 460.4 511.9zM461.1 505.6 463.5 505.6 463.5 506.4 461.1 506.4zM479.9 513.3 478.9 512.4 472.3 519 473.2 518.2 473.2 520 472.2 519.1 473.2 520zM482.9 505.6 485.2 505.6 485.2 506.4 482.9 506.4zM485.6 512.7 491.5 512.7 491.5 511.9 486 511.9 485.6 512.3z"/><path fill="#55d59e" stroke="#55d59e" stroke-width="0.5" d="M572.4 518.9 592.4 518.9 592.4 569.8 572.4 569.8zM551.8 483.4 560.1 475.1 581.1 496.1 572.8 504.4zM528.6 477.2 528.6 470.4 546 470.4 546 477.2zM516.5 484.2 513.7 481.4 520.8 474.2 523.7 477zM514.4 492.1 512.1 492.1 512.1 486.2 514.4 486.2zM505.8 485.8 505.8 483.5 511.7 483.5 511.7 485.8zM513.7 466.2 516.5 463.3 523.7 470.5 520.8 473.3zM505.8 464.1 505.8 461.7 511.7 461.7 511.7 464.1zM512.1 455.4 514.4 455.4 514.4 461.4 512.1 461.4zM547.1 451.9 553.9 451.9 553.9 469.3 547.1 469.3zM540 439.8 542.9 437 550 444.1 547.2 447zM532.1 437.7 532.1 435.4 538.1 435.4 538.1 437.7zM538.4 429.1 540.8 429.1 540.8 435 538.4 435zM558.1 437 560.9 439.8 553.7 447 550.9 444.1zM560.2 429.1 562.5 429.1 562.5 435 560.2 435zM568.8 435.4 568.8 437.7 562.9 437.7 562.9 435.4zM604.7 475.1 613 483.4 592 504.4 583.7 496.1zM610.9 451.9 617.7 451.9 617.7 469.3 610.9 469.3zM603.9 439.8 606.7 437 613.9 444.1 611.1 447zM596 437.7 596 435.4 601.9 435.4 601.9 437.7zM602.3 429.1 604.6 429.1 604.6 435 602.3 435zM621.9 437 624.8 439.8 617.6 447 614.8 444.1zM624 429.1 626.4 429.1 626.4 435 624 435zM632.7 435.4 632.7 437.7 626.7 437.7 626.7 435.4zM636.2 470.4 636.2 477.2 618.8 477.2 618.8 470.4zM648.3 463.3 651.1 466.2 644 473.3 641.1 470.5zM650.4 455.4 652.7 455.4 652.7 461.4 650.4 461.4zM659 461.7 659 464.1 653.1 464.1 653.1 461.7zM651.1 481.4 648.3 484.2 641.1 477 644 474.2zM659 483.5 659 485.8 653.1 485.8 653.1 483.5zM652.7 492.1 650.4 492.1 650.4 486.2 652.7 486.2zM646.5 573 646.5 593 595.6 593 595.6 573zM682 552.4 690.3 560.7 669.3 581.7 661 573.4zM688.2 529.2 695 529.2 695 546.6 688.2 546.6zM681.2 517.1 684 514.3 691.2 521.4 688.4 524.3zM673.3 515 673.3 512.7 679.2 512.7 679.2 515zM679.6 506.4 681.9 506.4 681.9 512.3 679.6 512.3zM699.2 514.3 702.1 517.1 694.9 524.3 692.1 521.4zM701.3 506.4 703.7 506.4 703.7 512.3 701.3 512.3zM710 512.7 710 515 704 515 704 512.7zM713.5 547.7 713.5 554.5 696.1 554.5 696.1 547.7zM725.6 540.6 728.4 543.5 721.3 550.6 718.4 547.8zM727.7 532.7 730 532.7 730 538.7 727.7 538.7zM736.3 539 736.3 541.4 730.4 541.4 730.4 539zM728.4 558.7 725.6 561.5 718.4 554.3 721.3 551.5zM736.3 560.8 736.3 563.1 730.4 563.1 730.4 560.8zM730 569.4 727.7 569.4 727.7 563.5 730 563.5zM690.3 605.3 682 613.6 661 592.6 669.3 584.3zM713.5 611.5 713.5 618.3 696.1 618.3 696.1 611.5zM725.6 604.5 728.4 607.3 721.3 614.5 718.4 611.7zM727.7 596.6 730 596.6 730 602.5 727.7 602.5zM736.3 602.9 736.3 605.2 730.4 605.2 730.4 602.9zM728.4 622.5 725.6 625.4 718.4 618.2 721.3 615.4zM736.3 624.6 736.3 627 730.4 627 730.4 624.6zM730 633.3 727.7 633.3 727.7 627.3 730 627.3zM695 636.8 688.2 636.8 688.2 619.4 695 619.4zM702.1 648.9 699.2 651.7 692.1 644.6 694.9 641.7zM710 651 710 653.3 704 653.3 704 651zM703.7 659.6 701.3 659.6 701.3 653.7 703.7 653.7zM684 651.7 681.2 648.9 688.4 641.7 691.2 644.6zM681.9 659.6 679.6 659.6 679.6 653.7 681.9 653.7zM673.3 653.3 673.3 651 679.2 651 679.2 653.3zM592.4 647.1 572.4 647.1 572.4 596.2 592.4 596.2zM613 682.6 604.7 690.9 583.7 669.9 592 661.6zM636.2 688.8 636.2 695.6 618.8 695.6 618.8 688.8zM648.3 681.8 651.1 684.6 644 691.8 641.1 689zM650.4 673.9 652.7 673.9 652.7 679.8 650.4 679.8zM659 680.2 659 682.5 653.1 682.5 653.1 680.2zM651.1 699.8 648.3 702.7 641.1 695.5 644 692.7zM659 701.9 659 704.3 653.1 704.3 653.1 701.9zM652.7 710.6 650.4 710.6 650.4 704.6 652.7 704.6zM617.7 714.1 610.9 714.1 610.9 696.7 617.7 696.7zM624.8 726.2 621.9 729 614.8 721.9 617.6 719zM632.7 728.3 632.7 730.6 626.7 730.6 626.7 728.3zM626.4 736.9 624 736.9 624 731 626.4 731zM606.7 729 603.9 726.2 611.1 719 613.9 721.9zM604.6 736.9 602.3 736.9 602.3 731 604.6 731zM596 730.6 596 728.3 601.9 728.3 601.9 730.6zM560.1 690.9 551.8 682.6 572.8 661.6 581.1 669.9zM553.9 714.1 547.1 714.1 547.1 696.7 553.9 696.7zM560.9 726.2 558.1 729 550.9 721.9 553.7 719zM568.8 728.3 568.8 730.6 562.9 730.6 562.9 728.3zM562.5 736.9 560.2 736.9 560.2 731 562.5 731zM542.9 729 540 726.2 547.2 719 550 721.9zM540.8 736.9 538.4 736.9 538.4 731 540.8 731zM532.1 730.6 532.1 728.3 538.1 728.3 538.1 730.6zM528.6 695.6 528.6 688.8 546 688.8 546 695.6zM516.5 702.7 513.7 699.8 520.8 692.7 523.7 695.5zM514.4 710.6 512.1 710.6 512.1 704.6 514.4 704.6zM505.8 704.3 505.8 701.9 511.7 701.9 511.7 704.3zM513.7 684.6 516.5 681.8 523.7 689 520.8 691.8zM505.8 682.5 505.8 680.2 511.7 680.2 511.7 682.5zM512.1 673.9 514.4 673.9 514.4 679.8 512.1 679.8zM518.3 593 518.3 573 569.2 573 569.2 593zM482.8 613.6 474.5 605.3 495.5 584.3 503.8 592.6zM476.6 636.8 469.8 636.8 469.8 619.4 476.6 619.4zM483.6 648.9 480.8 651.7 473.6 644.6 476.4 641.7zM491.5 651 491.5 653.3 485.6 653.3 485.6 651zM485.2 659.6 482.9 659.6 482.9 653.7 485.2 653.7zM465.6 651.7 462.7 648.9 469.9 641.7 472.7 644.6zM463.5 659.6 461.1 659.6 461.1 653.7 463.5 653.7zM454.8 653.3 454.8 651 460.8 651 460.8 653.3zM451.3 618.3 451.3 611.5 468.7 611.5 468.7 618.3zM439.2 625.4 436.4 622.5 443.5 615.4 446.4 618.2zM437.1 633.3 434.8 633.3 434.8 627.3 437.1 627.3zM428.5 627 428.5 624.6 434.4 624.6 434.4 627zM436.4 607.3 439.2 604.5 446.4 611.7 443.5 614.5zM428.5 605.2 428.5 602.9 434.4 602.9 434.4 605.2zM434.8 596.6 437.1 596.6 437.1 602.5 434.8 602.5zM474.5 560.7 482.8 552.4 503.8 573.4 495.5 581.7zM451.3 554.5 451.3 547.7 468.7 547.7 468.7 554.5zM439.2 561.5 436.4 558.7 443.5 551.5 446.4 554.3zM437.1 569.4 434.8 569.4 434.8 563.5 437.1 563.5zM428.5 563.1 428.5 560.8 434.4 560.8 434.4 563.1zM436.4 543.5 439.2 540.6 446.4 547.8 443.5 550.6zM428.5 541.4 428.5 539 434.4 539 434.4 541.4zM434.8 532.7 437.1 532.7 437.1 538.7 434.8 538.7zM469.8 529.2 476.6 529.2 476.6 546.6 469.8 546.6zM462.7 517.1 465.6 514.3 472.7 521.4 469.9 524.3zM454.8 515 454.8 512.7 460.8 512.7 460.8 515zM461.1 506.4 463.5 506.4 463.5 512.3 461.1 512.3zM480.8 514.3 483.6 517.1 476.4 524.3 473.6 521.4zM482.9 506.4 485.2 506.4 485.2 512.3 482.9 512.3zM491.5 512.7 491.5 515 485.6 515 485.6 512.7z"/><path fill="#36a275" stroke="#36a275" stroke-width="0.5" d="M592.4 569.8 572.4 569.8 572.4 573 575.8 576.4 589 576.4 592.4 573zM528.6 479.4 528.6 477.2 546 477.2 546 479.4zM514.4 492.9 512.1 492.9 512.1 492.1 514.4 492.1zM511.7 485.8 505.8 485.8 505.8 486.6 511.3 486.6 511.7 486.2zM505.8 464.8 505.8 464.1 511.7 464.1 511.7 464.8zM514.4 461.4 512.1 461.4 512.1 461.7 512.5 462.1 514.3 462.1 514.4 462zM553.9 469.3 547.1 469.3 547.1 470.4 548.2 471.5 553.5 471.5 553.9 471.3zM532.1 438.5 532.1 437.7 538.1 437.7 538.1 438.5zM540.8 435 538.4 435 538.4 435.4 538.8 435.8 540.6 435.8 540.8 435.7zM562.5 435 560.2 435 560.2 435.7 560.3 435.8 562.1 435.8 562.5 435.4zM568.8 437.7 568.8 438.5 562.9 438.5 562.9 437.7zM617.7 469.3 610.9 469.3 610.9 471.3 611.3 471.5 616.6 471.5 617.7 470.4zM596 438.5 596 437.7 601.9 437.7 601.9 438.5zM604.6 435 602.3 435 602.3 435.4 602.7 435.8 604.5 435.8 604.6 435.7zM626.4 435 624 435 624 435.7 624.2 435.8 626 435.8 626.4 435.4zM632.7 437.7 632.7 438.5 626.7 438.5 626.7 437.7zM636.2 477.2 636.2 479.4 618.8 479.4 618.8 477.2zM652.7 461.4 650.4 461.4 650.4 462 650.5 462.1 652.3 462.1 652.7 461.7zM659 464.1 659 464.8 653.1 464.8 653.1 464.1zM659 486.6 659 485.8 653.1 485.8 653.1 486.2 653.5 486.6zM652.7 492.9 650.4 492.9 650.4 492.1 652.7 492.1zM646.5 599.6 646.5 593 595.6 593 595.6 596.2 599 599.6zM695 546.6 688.2 546.6 688.2 548.6 688.6 548.8 693.9 548.8 695 547.7zM673.3 515.8 673.3 515 679.2 515 679.2 515.8zM681.9 512.3 679.6 512.3 679.6 512.7 680 513.1 681.8 513.1 681.9 513zM703.7 512.3 701.3 512.3 701.3 513 701.5 513.1 703.3 513.1 703.7 512.7zM710 515 710 515.8 704 515.8 704 515zM713.5 554.5 713.5 556.7 696.1 556.7 696.1 554.5zM730 538.7 727.7 538.7 727.7 539.3 727.8 539.4 729.6 539.4 730 539zM736.3 541.4 736.3 542.1 730.4 542.1 730.4 541.4zM736.3 563.9 736.3 563.1 730.4 563.1 730.4 563.5 730.8 563.9zM730 570.2 727.7 570.2 727.7 569.4 730 569.4zM713.5 620.6 713.5 618.3 696.1 618.3 696.1 619.4 697.3 620.6zM730 602.5 727.7 602.5 727.7 603.2 727.8 603.3 729.6 603.3 730 602.9zM736.3 605.2 736.3 606 730.4 606 730.4 605.2zM736.3 627.7 736.3 627 730.4 627 730.4 627.3 730.8 627.7zM730 634 727.7 634 727.7 633.3 730 633.3zM695 639 688.2 639 688.2 636.8 695 636.8zM710 654.1 710 653.3 704 653.3 704 653.7 704.4 654.1zM703.7 660.4 701.3 660.4 701.3 659.6 703.7 659.6zM681.9 660.4 679.6 660.4 679.6 659.6 681.9 659.6zM679.2 653.3 673.3 653.3 673.3 654.1 678.8 654.1 679.2 653.7zM592.4 653.7 572.4 653.7 572.4 647.1 592.4 647.1zM636.2 697.9 636.2 695.6 618.8 695.6 618.8 696.7 620 697.9zM652.7 679.8 650.4 679.8 650.4 680.5 650.5 680.6 652.3 680.6 652.7 680.2zM659 682.5 659 683.3 653.1 683.3 653.1 682.5zM659 705 659 704.3 653.1 704.3 653.1 704.6 653.5 705zM652.7 711.3 650.4 711.3 650.4 710.6 652.7 710.6zM617.7 716.3 610.9 716.3 610.9 714.1 617.7 714.1zM632.7 731.4 632.7 730.6 626.7 730.6 626.7 731 627.1 731.4zM626.4 737.7 624 737.7 624 736.9 626.4 736.9zM604.6 737.7 602.3 737.7 602.3 736.9 604.6 736.9zM601.9 730.6 596 730.6 596 731.4 601.5 731.4 601.9 731zM553.9 716.3 547.1 716.3 547.1 714.1 553.9 714.1zM568.8 731.4 568.8 730.6 562.9 730.6 562.9 731 563.3 731.4zM562.5 737.7 560.2 737.7 560.2 736.9 562.5 736.9zM540.8 737.7 538.4 737.7 538.4 736.9 540.8 736.9zM538.1 730.6 532.1 730.6 532.1 731.4 537.7 731.4 538.1 731zM546 695.6 528.6 695.6 528.6 697.9 544.8 697.9 546 696.7zM514.4 711.3 512.1 711.3 512.1 710.6 514.4 710.6zM511.7 704.3 505.8 704.3 505.8 705 511.3 705 511.7 704.6zM505.8 683.3 505.8 682.5 511.7 682.5 511.7 683.3zM514.4 679.8 512.1 679.8 512.1 680.2 512.5 680.6 514.3 680.6 514.4 680.5zM569.2 593 518.3 593 518.3 599.6 565.8 599.6 569.2 596.2zM476.6 639 469.8 639 469.8 636.8 476.6 636.8zM491.5 654.1 491.5 653.3 485.6 653.3 485.6 653.7 486 654.1zM485.2 660.4 482.9 660.4 482.9 659.6 485.2 659.6zM463.5 660.4 461.1 660.4 461.1 659.6 463.5 659.6zM460.8 653.3 454.8 653.3 454.8 654.1 460.4 654.1 460.8 653.7zM468.7 618.3 451.3 618.3 451.3 620.6 467.5 620.6 468.7 619.4zM437.1 634 434.8 634 434.8 633.3 437.1 633.3zM434.4 627 428.5 627 428.5 627.7 434 627.7 434.4 627.3zM428.5 606 428.5 605.2 434.4 605.2 434.4 606zM437.1 602.5 434.8 602.5 434.8 602.9 435.2 603.3 437 603.3 437.1 603.2zM451.3 556.7 451.3 554.5 468.7 554.5 468.7 556.7zM437.1 570.2 434.8 570.2 434.8 569.4 437.1 569.4zM434.4 563.1 428.5 563.1 428.5 563.9 434 563.9 434.4 563.5zM428.5 542.1 428.5 541.4 434.4 541.4 434.4 542.1zM437.1 538.7 434.8 538.7 434.8 539 435.2 539.4 437 539.4 437.1 539.3zM476.6 546.6 469.8 546.6 469.8 547.7 470.9 548.8 476.2 548.8 476.6 548.6zM454.8 515.8 454.8 515 460.8 515 460.8 515.8zM463.5 512.3 461.1 512.3 461.1 512.7 461.5 513.1 463.3 513.1 463.5 513zM485.2 512.3 482.9 512.3 482.9 513 483 513.1 484.8 513.1 485.2 512.7zM491.5 515 491.5 515.8 485.6 515.8 485.6 515z"/><path fill="#176f4b" stroke="#176f4b" stroke-width="0.5" d="M575.8 576.4 582.4 583 589 576.4zM528.6 481.7 528.6 479.4 546 479.4 546 481.7zM514.4 493.7 512.1 493.7 512.1 492.9 514.4 492.9zM505.8 486.6 505.8 487.4 510.5 487.4 511.3 486.6zM505.8 465.6 505.8 464.8 511.7 464.8 511.7 465.6zM512.5 462.1 513.2 462.9 513.8 462.3 514.3 462.1zM548.2 471.5 550.5 473.8 552.2 472.1 553.5 471.5zM532.1 439.2 532.1 438.5 538.1 438.5 538.1 439.2zM538.8 435.8 539.6 436.5 540.2 435.9 540.6 435.8zM560.3 435.8 560.8 435.9 561.4 436.5 562.1 435.8zM568.8 438.5 568.8 439.2 562.9 439.2 562.9 438.5zM611.3 471.5 612.6 472.1 614.3 473.8 616.6 471.5zM596 439.2 596 438.5 601.9 438.5 601.9 439.2zM602.7 435.8 603.4 436.5 604 435.9 604.5 435.8zM624.2 435.8 624.6 435.9 625.2 436.5 626 435.8zM632.7 438.5 632.7 439.2 626.7 439.2 626.7 438.5zM636.2 479.4 636.2 481.7 618.8 481.7 618.8 479.4zM650.5 462.1 651 462.3 651.6 462.9 652.3 462.1zM659 464.8 659 465.6 653.1 465.6 653.1 464.8zM659 487.4 659 486.6 653.5 486.6 654.3 487.4zM652.7 493.7 650.4 493.7 650.4 492.9 652.7 492.9zM646.5 606.2 646.5 599.6 599 599.6 605.6 606.2zM688.6 548.8 689.9 549.4 691.6 551.1 693.9 548.8zM673.3 516.5 673.3 515.8 679.2 515.8 679.2 516.5zM680 513.1 680.7 513.8 681.3 513.2 681.8 513.1zM701.5 513.1 701.9 513.2 702.5 513.8 703.3 513.1zM710 515.8 710 516.5 704 516.5 704 515.8zM713.5 556.7 713.5 559 696.1 559 696.1 556.7zM727.8 539.4 728.3 539.6 728.9 540.2 729.6 539.4zM736.3 542.1 736.3 542.9 730.4 542.9 730.4 542.1zM736.3 564.7 736.3 563.9 730.8 563.9 731.6 564.7zM730 571 727.7 571 727.7 570.2 730 570.2zM713.5 622.8 713.5 620.6 697.3 620.6 699.5 622.8zM727.8 603.3 728.3 603.5 728.9 604 729.6 603.3zM736.3 606 736.3 606.7 730.4 606.7 730.4 606zM736.3 628.5 736.3 627.7 730.8 627.7 731.6 628.5zM730 634.8 727.7 634.8 727.7 634 730 634zM693 641.3 693.8 641 694.1 640.9 695 640.9 695 639 688.2 639 688.2 640.9 689.2 640.9 689.4 641 690.2 641.3zM710 654.9 710 654.1 704.4 654.1 705.2 654.9zM703.7 661.2 701.3 661.2 701.3 660.4 703.7 660.4zM681.9 661.2 679.6 661.2 679.6 660.4 681.9 660.4zM673.3 654.1 673.3 654.9 678 654.9 678.8 654.1zM586.5 660.3 588.8 659.4 589.6 659.2 592.4 659.2 592.4 653.7 572.4 653.7 572.4 659.2 575.2 659.2 576 659.4 578.3 660.3zM636.2 700.1 636.2 697.9 620 697.9 622.2 700.1zM650.5 680.6 651 680.8 651.6 681.3 652.3 680.6zM659 683.3 659 684 653.1 684 653.1 683.3zM659 705.8 659 705 653.5 705 654.3 705.8zM652.7 712.1 650.4 712.1 650.4 711.3 652.7 711.3zM615.7 718.6 616.5 718.3 616.8 718.2 617.7 718.2 617.7 716.3 610.9 716.3 610.9 718.2 611.9 718.2 612.1 718.3 612.9 718.6zM632.7 732.2 632.7 731.4 627.1 731.4 627.9 732.2zM626.4 738.5 624 738.5 624 737.7 626.4 737.7zM604.6 738.5 602.3 738.5 602.3 737.7 604.6 737.7zM596 731.4 596 732.2 600.7 732.2 601.5 731.4zM551.9 718.6 552.7 718.3 552.9 718.2 553.9 718.2 553.9 716.3 547.1 716.3 547.1 718.2 548 718.2 548.3 718.3 549.1 718.6zM568.8 732.2 568.8 731.4 563.3 731.4 564.1 732.2zM562.5 738.5 560.2 738.5 560.2 737.7 562.5 737.7zM540.8 738.5 538.4 738.5 538.4 737.7 540.8 737.7zM532.1 731.4 532.1 732.2 536.9 732.2 537.7 731.4zM528.6 697.9 528.6 700.1 542.6 700.1 544.8 697.9zM514.4 712.1 512.1 712.1 512.1 711.3 514.4 711.3zM505.8 705 505.8 705.8 510.5 705.8 511.3 705zM505.8 684 505.8 683.3 511.7 683.3 511.7 684zM512.5 680.6 513.2 681.3 513.8 680.8 514.3 680.6zM518.3 599.6 518.3 606.2 559.2 606.2 565.8 599.6zM474.6 641.3 475.4 641 475.6 640.9 476.6 640.9 476.6 639 469.8 639 469.8 640.9 470.7 640.9 471 641 471.3 641.3 471 641 471.8 641.3zM491.5 654.9 491.5 654.1 486 654.1 486.8 654.9zM485.2 661.2 482.9 661.2 482.9 660.4 485.2 660.4zM463.5 661.2 461.1 661.2 461.1 660.4 463.5 660.4zM454.8 654.1 454.8 654.9 459.6 654.9 460.4 654.1zM451.3 620.6 451.3 622.8 465.3 622.8 467.5 620.6zM437.1 634.8 434.8 634.8 434.8 634 437.1 634zM428.5 627.7 428.5 628.5 433.2 628.5 434 627.7zM428.5 606.7 428.5 606 434.4 606 434.4 606.7zM435.2 603.3 435.9 604 436.5 603.5 437 603.3zM451.3 559 451.3 556.7 468.7 556.7 468.7 559zM437.1 571 434.8 571 434.8 570.2 437.1 570.2zM428.5 563.9 428.5 564.7 433.2 564.7 434 563.9zM428.5 542.9 428.5 542.1 434.4 542.1 434.4 542.9zM435.2 539.4 435.9 540.2 436.5 539.6 437 539.4zM470.9 548.8 473.2 551.1 474.9 549.4 476.2 548.8zM454.8 516.5 454.8 515.8 460.8 515.8 460.8 516.5zM461.5 513.1 462.3 513.8 462.9 513.2 463.3 513.1zM483 513.1 483.5 513.2 484.1 513.8 484.8 513.1zM491.5 515.8 491.5 516.5 485.6 516.5 485.6 515.8z"/><path fill="#43b685" stroke="#43b685" stroke-width="0.5" d="M599 518.9 592.4 518.9 592.4 569.8 595.6 569.8 599 566.4zM546 470.4 546 477.2 548 477.2 548.2 476.8 548.2 471.5 547.1 470.4zM515.2 492.1 514.4 492.1 514.4 486.2 515.2 486.2zM511.7 483.5 511.7 485.8 512.1 485.8 512.5 485.4 512.5 483.6 512.4 483.5zM511.7 461.7 511.7 464.1 512.4 464.1 512.5 463.9 512.5 462.1 512.1 461.7zM514.4 455.4 515.2 455.4 515.2 461.4 514.4 461.4zM553.9 451.9 556.1 451.9 556.1 469.3 553.9 469.3zM538.1 435.4 538.1 437.7 538.7 437.7 538.8 437.6 538.8 435.8 538.4 435.4zM540.8 429.1 541.5 429.1 541.5 435 540.8 435zM563.3 429.1 562.5 429.1 562.5 435 562.9 435 563.3 434.6zM569.6 435.4 569.6 437.7 568.8 437.7 568.8 435.4zM620 451.9 617.7 451.9 617.7 469.3 618.8 469.3 620 468.1zM601.9 435.4 601.9 437.7 602.6 437.7 602.7 437.6 602.7 435.8 602.3 435.4zM604.6 429.1 605.4 429.1 605.4 435 604.6 435zM627.1 429.1 626.4 429.1 626.4 435 626.7 435 627.1 434.6zM633.4 435.4 633.4 437.7 632.7 437.7 632.7 435.4zM638.4 470.4 638.4 477.2 636.2 477.2 636.2 470.4zM653.5 455.4 652.7 455.4 652.7 461.4 653.1 461.4 653.5 461zM659.8 461.7 659.8 464.1 659 464.1 659 461.7zM659.8 483.5 659.8 485.8 659 485.8 659 483.5zM652.7 486.2 652.7 492.1 653.5 492.1 653.5 486.6 653.1 486.2zM653.1 573 653.1 593 646.5 593 646.5 573zM697.3 529.2 695 529.2 695 546.6 696.1 546.6 697.3 545.4zM679.2 512.7 679.2 515 679.9 515 680 514.9 680 513.1 679.6 512.7zM681.9 506.4 682.7 506.4 682.7 512.3 681.9 512.3zM704.4 506.4 703.7 506.4 703.7 512.3 704 512.3 704.4 511.9zM710.7 512.7 710.7 515 710 515 710 512.7zM715.7 547.7 715.7 554.5 713.5 554.5 713.5 547.7zM730.8 532.7 730 532.7 730 538.7 730.4 538.7 730.8 538.3zM737.1 539 737.1 541.4 736.3 541.4 736.3 539zM737.1 560.8 737.1 563.1 736.3 563.1 736.3 560.8zM730 563.5 730 569.4 730.8 569.4 730.8 563.9 730.4 563.5zM715.7 611.5 715.7 618.3 713.5 618.3 713.5 611.5zM730.8 596.6 730 596.6 730 602.5 730.4 602.5 730.8 602.1zM737.1 602.9 737.1 605.2 736.3 605.2 736.3 602.9zM737.1 624.6 737.1 627 736.3 627 736.3 624.6zM730 627.3 730 633.3 730.8 633.3 730.8 627.7 730.4 627.3zM695 619.4 695 636.8 697.3 636.8 697.3 620.6 696.1 619.4zM710.7 651 710.7 653.3 710 653.3 710 651zM703.7 653.7 703.7 659.6 704.4 659.6 704.4 654.1 704 653.7zM682.7 659.6 681.9 659.6 681.9 653.7 682.7 653.7zM679.2 651 679.2 653.3 679.6 653.3 680 652.9 680 651.1 679.9 651zM592.4 596.2 592.4 647.1 599 647.1 599 599.6 595.6 596.2zM638.4 688.8 638.4 695.6 636.2 695.6 636.2 688.8zM653.5 673.9 652.7 673.9 652.7 679.8 653.1 679.8 653.5 679.4zM659.8 680.2 659.8 682.5 659 682.5 659 680.2zM659.8 701.9 659.8 704.3 659 704.3 659 701.9zM652.7 704.6 652.7 710.6 653.5 710.6 653.5 705 653.1 704.6zM617.7 696.7 617.7 714.1 620 714.1 620 697.9 618.8 696.7zM633.4 728.3 633.4 730.6 632.7 730.6 632.7 728.3zM626.4 731 626.4 736.9 627.1 736.9 627.1 731.4 626.7 731zM605.4 736.9 604.6 736.9 604.6 731 605.4 731zM601.9 728.3 601.9 730.6 602.3 730.6 602.7 730.2 602.7 728.4 602.6 728.3zM556.1 714.1 553.9 714.1 553.9 696.7 556.1 696.7zM569.6 728.3 569.6 730.6 568.8 730.6 568.8 728.3zM562.5 731 562.5 736.9 563.3 736.9 563.3 731.4 562.9 731zM541.5 736.9 540.8 736.9 540.8 731 541.5 731zM538.1 728.3 538.1 730.6 538.4 730.6 538.8 730.2 538.8 728.4 538.7 728.3zM546 688.8 546 695.6 547.1 695.6 548.2 694.5 548.2 689.2 548 688.8zM515.2 710.6 514.4 710.6 514.4 704.6 515.2 704.6zM511.7 701.9 511.7 704.3 512.1 704.3 512.5 703.9 512.5 702.1 512.4 701.9zM511.7 680.2 511.7 682.5 512.4 682.5 512.5 682.4 512.5 680.6 512.1 680.2zM514.4 673.9 515.2 673.9 515.2 679.8 514.4 679.8zM569.2 573 569.2 593 572.4 593 575.8 589.6 575.8 576.4 572.4 573zM478.8 636.8 476.6 636.8 476.6 619.4 478.8 619.4zM492.3 651 492.3 653.3 491.5 653.3 491.5 651zM485.2 653.7 485.2 659.6 486 659.6 486 654.1 485.6 653.7zM464.2 659.6 463.5 659.6 463.5 653.7 464.2 653.7zM460.8 651 460.8 653.3 461.1 653.3 461.5 652.9 461.5 651.1 461.4 651zM468.7 611.5 468.7 618.3 469.8 618.3 470.9 617.2 470.9 611.9 470.7 611.5zM437.9 633.3 437.1 633.3 437.1 627.3 437.9 627.3zM434.4 624.6 434.4 627 434.8 627 435.2 626.6 435.2 624.8 435.1 624.6zM434.4 602.9 434.4 605.2 435.1 605.2 435.2 605.1 435.2 603.3 434.8 602.9zM437.1 596.6 437.9 596.6 437.9 602.5 437.1 602.5zM468.7 547.7 468.7 554.5 470.7 554.5 470.9 554.1 470.9 548.8 469.8 547.7zM437.9 569.4 437.1 569.4 437.1 563.5 437.9 563.5zM434.4 560.8 434.4 563.1 434.8 563.1 435.2 562.7 435.2 560.9 435.1 560.8zM434.4 539 434.4 541.4 435.1 541.4 435.2 541.2 435.2 539.4 434.8 539zM437.1 532.7 437.9 532.7 437.9 538.7 437.1 538.7zM476.6 529.2 478.8 529.2 478.8 546.6 476.6 546.6zM460.8 512.7 460.8 515 461.4 515 461.5 514.9 461.5 513.1 461.1 512.7zM463.5 506.4 464.2 506.4 464.2 512.3 463.5 512.3zM486 506.4 485.2 506.4 485.2 512.3 485.6 512.3 486 511.9zM492.3 512.7 492.3 515 491.5 515 491.5 512.7z"/><path fill="#2c9066" stroke="#2c9066" stroke-width="0.5" d="M605.6 518.9 599 518.9 599 566.4 605.6 559.8zM548.2 476.8 548.8 475.5 550.5 473.8 548.2 471.5zM515.9 492.1 515.2 492.1 515.2 486.2 515.9 486.2zM512.5 485.4 513.2 484.7 512.6 484.1 512.5 483.6zM512.5 463.9 512.6 463.5 513.2 462.9 512.5 462.1zM515.2 455.4 515.9 455.4 515.9 461.4 515.2 461.4zM556.1 451.9 558.4 451.9 558.4 469.3 556.1 469.3zM538.8 437.6 539 437.1 539.6 436.5 538.8 435.8zM541.5 429.1 542.3 429.1 542.3 435 541.5 435zM564.1 429.1 563.3 429.1 563.3 434.6 564.1 433.8zM570.4 435.4 570.4 437.7 569.6 437.7 569.6 435.4zM622.2 451.9 620 451.9 620 468.1 622.2 465.9zM602.7 437.6 602.9 437.1 603.4 436.5 602.7 435.8zM605.4 429.1 606.1 429.1 606.1 435 605.4 435zM627.9 429.1 627.1 429.1 627.1 434.6 627.9 433.8zM634.2 435.4 634.2 437.7 633.4 437.7 633.4 435.4zM640.7 472.4 640.4 471.6 640.3 471.3 640.7 471 640.3 471.3 640.3 470.4 638.4 470.4 638.4 477.2 640.3 477.2 640.3 476.2 640.7 476.6 640.3 476.2 640.4 476 640.7 475.2zM654.3 455.4 653.5 455.4 653.5 461 654.3 460.2zM660.6 461.7 660.6 464.1 659.8 464.1 659.8 461.7zM660.6 483.5 660.6 485.8 659.8 485.8 659.8 483.5zM653.5 492.1 654.3 492.1 654.3 487.4 653.5 486.6zM659.7 578.9 658.8 576.6 658.6 575.8 658.6 573 653.1 573 653.1 593 658.6 593 658.6 590.2 658.8 589.4 659.7 587.1zM699.5 529.2 697.3 529.2 697.3 545.4 699.5 543.2zM680 514.9 680.2 514.4 680.7 513.8 680 513.1zM682.7 506.4 683.4 506.4 683.4 512.3 682.7 512.3zM705.2 506.4 704.4 506.4 704.4 511.9 705.2 511.1zM711.5 512.7 711.5 515 710.7 515 710.7 512.7zM718 549.7 717.7 548.9 717.6 548.6 717.6 547.7 715.7 547.7 715.7 554.5 717.6 554.5 717.6 553.5 717.7 553.3 718 552.5zM731.6 532.7 730.8 532.7 730.8 538.3 731.6 537.5zM737.9 539 737.9 541.4 737.1 541.4 737.1 539zM737.9 560.8 737.9 563.1 737.1 563.1 737.1 560.8zM730.8 569.4 731.6 569.4 731.6 564.7 730.8 563.9zM718 613.5 717.7 612.7 717.6 612.5 717.6 611.5 715.7 611.5 715.7 618.3 717.6 618.3 717.6 617.4 717.7 617.1 718 616.3zM731.6 596.6 730.8 596.6 730.8 602.1 731.6 601.3zM737.9 602.9 737.9 605.2 737.1 605.2 737.1 602.9zM737.9 624.6 737.9 627 737.1 627 737.1 624.6zM730.8 633.3 731.6 633.3 731.6 628.5 730.8 627.7zM697.3 636.8 699.5 636.8 699.5 622.8 697.3 620.6zM711.5 651 711.5 653.3 710.7 653.3 710.7 651zM704.4 659.6 705.2 659.6 705.2 654.9 704.4 654.1zM683.4 659.6 682.7 659.6 682.7 653.7 683.4 653.7zM680 652.9 680.7 652.2 680.2 651.6 680 651.1zM599 647.1 605.6 647.1 605.6 606.2 599 599.6zM640.7 690.8 640.4 690 640.3 689.8 640.3 688.8 638.4 688.8 638.4 695.6 640.3 695.6 640.3 694.7 640.4 694.4 640.7 693.6zM654.3 673.9 653.5 673.9 653.5 679.4 654.3 678.6zM660.6 680.2 660.6 682.5 659.8 682.5 659.8 680.2zM660.6 701.9 660.6 704.3 659.8 704.3 659.8 701.9zM653.5 710.6 654.3 710.6 654.3 705.8 653.5 705zM620 714.1 622.2 714.1 622.2 700.1 620 697.9zM634.2 728.3 634.2 730.6 633.4 730.6 633.4 728.3zM627.1 736.9 627.9 736.9 627.9 732.2 627.1 731.4zM606.1 736.9 605.4 736.9 605.4 731 606.1 731zM602.7 730.2 603.4 729.5 602.9 728.9 602.7 728.4zM558.4 714.1 556.1 714.1 556.1 696.7 558.4 696.7zM570.4 728.3 570.4 730.6 569.6 730.6 569.6 728.3zM563.3 736.9 564.1 736.9 564.1 732.2 563.3 731.4zM542.3 736.9 541.5 736.9 541.5 731 542.3 731zM538.8 730.2 539.6 729.5 539 728.9 538.8 728.4zM548.2 694.5 550.5 692.2 548.8 690.5 548.2 689.2zM515.9 710.6 515.2 710.6 515.2 704.6 515.9 704.6zM512.5 703.9 513.2 703.1 512.6 702.5 512.5 702.1zM512.5 682.4 512.6 681.9 513.2 681.3 512.5 680.6zM515.2 673.9 515.9 673.9 515.9 679.8 515.2 679.8zM575.8 589.6 582.4 583 575.8 576.4zM481.1 636.8 478.8 636.8 478.8 619.4 481.1 619.4zM493.1 651 493.1 653.3 492.3 653.3 492.3 651zM486 659.6 486.8 659.6 486.8 654.9 486 654.1zM465 659.6 464.2 659.6 464.2 653.7 465 653.7zM461.5 652.9 462.3 652.2 461.7 651.6 461.5 651.1zM470.9 617.2 473.2 614.9 471.5 613.2 470.9 611.9zM438.6 633.3 437.9 633.3 437.9 627.3 438.6 627.3zM435.2 626.6 435.9 625.8 435.3 625.2 435.2 624.8zM435.2 605.1 435.3 604.6 435.9 604 435.2 603.3zM437.9 596.6 438.6 596.6 438.6 602.5 437.9 602.5zM470.9 554.1 471.5 552.8 473.2 551.1 470.9 548.8zM438.6 569.4 437.9 569.4 437.9 563.5 438.6 563.5zM435.2 562.7 435.9 562 435.3 561.4 435.2 560.9zM435.2 541.2 435.3 540.8 435.9 540.2 435.2 539.4zM437.9 532.7 438.6 532.7 438.6 538.7 437.9 538.7zM478.8 529.2 481.1 529.2 481.1 546.6 478.8 546.6zM461.5 514.9 461.7 514.4 462.3 513.8 461.5 513.1zM464.2 506.4 465 506.4 465 512.3 464.2 512.3zM486.8 506.4 486 506.4 486 511.9 486.8 511.1zM493.1 512.7 493.1 515 492.3 515 492.3 512.7z"/><path fill="#66f2b5" stroke="#66f2b5" stroke-width="0.5" d="M572.4 518.9 565.8 518.9 572.4 512.3zM565.8 518.9 565.8 512.3 572.4 512.3zM528.6 470.4 528.6 468.1 526.4 470.4zM528.6 468.1 526.4 468.1 526.4 470.4zM512.1 486.2 512.1 485.8 511.7 486.2zM505.8 483.5 505.8 482.7 505 483.5zM505.8 482.7 505 482.7 505 483.5zM505.8 461.7 505.8 461 505 461.7zM505.8 461 505 461 505 461.7zM512.1 455.4 511.3 455.4 512.1 454.7zM511.3 455.4 511.3 454.7 512.1 454.7zM547.1 451.9 544.8 451.9 547.1 449.7zM544.8 451.9 544.8 449.7 547.1 449.7zM532.1 435.4 532.1 434.6 531.4 435.4zM532.1 434.6 531.4 434.6 531.4 435.4zM538.4 429.1 537.7 429.1 538.4 428.3zM537.7 429.1 537.7 428.3 538.4 428.3zM560.2 429.1 559.4 429.1 560.2 428.3zM559.4 429.1 559.4 428.3 560.2 428.3zM562.9 435 562.5 435.4 562.9 435.4zM610.9 451.9 608.7 451.9 610.9 449.7zM608.7 451.9 608.7 449.7 610.9 449.7zM596 435.4 596 434.6 595.2 435.4zM596 434.6 595.2 434.6 595.2 435.4zM602.3 429.1 601.5 429.1 602.3 428.3zM601.5 429.1 601.5 428.3 602.3 428.3zM624 429.1 623.3 429.1 624 428.3zM623.3 429.1 623.3 428.3 624 428.3zM626.7 435 626.4 435.4 626.7 435.4zM618.8 469.3 617.7 470.4 618.8 470.4zM650.4 455.4 649.6 455.4 650.4 454.7zM649.6 455.4 649.6 454.7 650.4 454.7zM653.1 461.4 652.7 461.7 653.1 461.7zM653.1 482.7 652.9 482.9 652.8 483.1 652.4 483.5 653.1 483.5zM649.6 486.2 650.4 486.2 650.4 485.5 650 485.9 649.8 486zM595.6 569.8 592.4 573 595.6 573zM688.2 529.2 686 529.2 688.2 527zM686 529.2 686 527 688.2 527zM673.3 512.7 673.3 511.9 672.5 512.7zM673.3 511.9 672.5 511.9 672.5 512.7zM679.6 506.4 678.8 506.4 679.6 505.6zM678.8 506.4 678.8 505.6 679.6 505.6zM701.3 506.4 700.6 506.4 701.3 505.6zM700.6 506.4 700.6 505.6 701.3 505.6zM704 512.3 703.7 512.7 704 512.7zM696.1 546.6 695 547.7 696.1 547.7zM727.7 532.7 726.9 532.7 727.7 532zM726.9 532.7 726.9 532 727.7 532zM730.4 538.7 730 539 730.4 539zM730.4 560 730.2 560.2 730.1 560.4 729.7 560.8 730.4 560.8zM726.9 563.5 727.7 563.5 727.7 562.8 727.3 563.2 727.1 563.3 727.2 563.3zM696.1 609.3 695.7 609.7 695.3 610.3 694.1 611.5 696.1 611.5zM695.8 609.3 695.8 609.6 695.7 609.7 696.1 609.3zM727.7 596.6 726.9 596.6 727.7 595.8zM726.9 596.6 726.9 595.8 727.7 595.8zM730.4 602.5 730 602.9 730.4 602.9zM730.4 623.9 730.2 624 730.1 624.2 729.7 624.6 730.4 624.6zM726.9 627.3 727.7 627.3 727.7 626.7 727.3 627.1 727.1 627.2zM686 619.4 688.2 619.4 688.2 617.4 687 618.6 686.4 619zM686 619.4 686.4 619 686.3 619.1 686 619.1zM704 650.2 703.9 650.4 703.8 650.6 703.4 651 704 651zM700.6 653.7 701.3 653.7 701.3 653 700.9 653.4 700.7 653.5zM679.6 653.7 679.6 653.3 679.2 653.7zM673.3 651 673.3 650.2 672.5 651zM673.3 650.2 672.5 650.2 672.5 651zM572.4 596.2 572.4 593 569.2 596.2zM618.8 686.6 618.4 687 618 687.6 616.8 688.8 618.8 688.8zM618.5 686.6 618.5 686.9 618.4 687 618.8 686.6zM650.4 673.9 649.6 673.9 650.4 673.1zM649.6 673.9 649.6 673.1 650.4 673.1zM653.1 679.8 652.7 680.2 653.1 680.2zM653.1 701.2 652.9 701.3 652.8 701.5 652.4 701.9 653.1 701.9zM649.6 704.6 650.4 704.6 650.4 704 650 704.4 649.8 704.5zM608.7 696.7 610.9 696.7 610.9 694.7 609.7 695.9 609.1 696.3zM608.7 696.7 609.1 696.3 609 696.4 608.7 696.4zM626.7 727.5 626.6 727.7 626.5 727.9 626.1 728.3 626.7 728.3zM623.3 731 624 731 624 730.3 623.6 730.7 623.4 730.8zM602.3 731 602.3 730.6 601.9 731zM596 728.3 596 727.5 595.2 728.3zM596 727.5 595.2 727.5 595.2 728.3zM547.1 696.7 547.1 695.6 546 696.7zM562.9 727.5 562.7 727.7 562.6 727.9 562.2 728.3 562.9 728.3zM559.4 731 560.2 731 560.2 730.3 559.8 730.7 559.6 730.8zM538.4 731 538.4 730.6 538.1 731zM532.1 728.3 532.1 727.5 531.4 728.3zM532.1 727.5 531.4 727.5 531.4 728.3zM528.6 688.8 528.6 686.6 526.4 688.8zM528.6 686.6 526.4 686.6 526.4 688.8zM512.1 704.6 512.1 704.3 511.7 704.6zM505.8 701.9 505.8 701.2 505 701.9zM505.8 701.2 505 701.2 505 701.9zM505.8 680.2 505.8 679.4 505 680.2zM505.8 679.4 505 679.4 505 680.2zM512.1 673.9 511.3 673.9 512.1 673.1zM511.3 673.9 511.3 673.1 512.1 673.1zM518.3 573 518.3 566.4 511.7 573zM518.3 566.4 511.7 566.4 511.7 573zM469.8 619.4 469.8 618.3 468.7 619.4zM485.6 650.2 485.4 650.4 485.3 650.6 484.9 651 485.6 651zM482.1 653.7 482.9 653.7 482.9 653 482.5 653.4 482.3 653.5zM461.1 653.7 461.1 653.3 460.8 653.7zM454.8 651 454.8 650.2 454.1 651zM454.8 650.2 454.1 650.2 454.1 651zM451.3 611.5 451.3 609.3 449.1 611.5zM451.3 609.3 449.1 609.3 449.1 611.5zM434.8 627.3 434.8 627 434.4 627.3zM428.5 624.6 428.5 623.9 427.7 624.6zM428.5 623.9 427.7 623.9 427.7 624.6zM428.5 602.9 428.5 602.1 427.7 602.9zM428.5 602.1 427.7 602.1 427.7 602.9zM434.8 596.6 434 596.6 434.8 595.8zM434 596.6 434 595.8 434.8 595.8zM451.3 547.7 451.3 545.4 449.1 547.7zM451.3 545.4 449.1 545.4 449.1 547.7zM434.8 563.5 434.8 563.1 434.4 563.5zM428.5 560.8 428.5 560 427.7 560.8zM428.5 560 427.7 560 427.7 560.8zM428.5 539 428.5 538.3 427.7 539zM428.5 538.3 427.7 538.3 427.7 539zM434.8 532.7 434 532.7 434.8 532zM434 532.7 434 532 434.8 532zM469.8 529.2 467.5 529.2 469.8 527zM467.5 529.2 467.5 527 469.8 527zM454.8 512.7 454.8 511.9 454.1 512.7zM454.8 511.9 454.1 511.9 454.1 512.7zM461.1 506.4 460.4 506.4 461.1 505.6zM460.4 506.4 460.4 505.6 461.1 505.6zM482.9 506.4 482.1 506.4 482.9 505.6zM482.1 506.4 482.1 505.6 482.9 505.6zM485.6 512.3 485.2 512.7 485.6 512.7z"/><path fill="#5bdea5" stroke="#5bdea5" stroke-width="0.5" d="M565.8 518.9 559.2 518.9 565.8 512.3zM526.4 468.1 524.6 469.9 524.6 470 524.5 470.4 526.4 470.4zM505 483.5 505 482.7 504.2 483.5zM505 461.7 505 461 504.2 461.7zM511.3 455.4 510.5 455.4 511.3 454.7zM544.8 451.9 542.6 451.9 544.8 449.7zM531.4 435.4 531.4 434.6 530.6 435.4zM537.7 429.1 536.9 429.1 537.7 428.3zM559.4 429.1 558.7 429.1 559.4 428.3zM608.7 451.9 606.4 451.9 608.7 449.7zM595.2 435.4 595.2 434.6 594.4 435.4zM601.5 429.1 600.7 429.1 601.5 428.3zM623.3 429.1 622.5 429.1 623.3 428.3zM649.6 455.4 648.9 455.4 649.6 454.7zM648.9 486.2 649.6 486.2 649.6 486.1 649 486.1 649.6 485.5 649.6 485.4zM686 529.2 683.7 529.2 686 527zM672.5 512.7 672.5 511.9 671.7 512.7zM678.8 506.4 678 506.4 678.8 505.6zM700.6 506.4 699.8 506.4 700.6 505.6zM726.9 532.7 726.2 532.7 726.9 532zM726.2 563.5 726.9 563.5 726.9 563.4 726.3 563.4zM726.9 596.6 726.2 596.6 726.9 595.8zM726.2 627.3 726.9 627.3 726.9 627.2 726.3 627.2zM683.7 619.4 686 619.4 686 619.1 684.1 619.1zM699.8 653.7 700.6 653.7 700.6 653.6 699.9 653.6zM672.5 651 672.5 650.2 671.7 651zM649.6 673.9 648.9 673.9 649.6 673.1zM648.9 704.6 649.6 704.6 649.6 704.5 649 704.5zM606.4 696.7 608.7 696.7 608.7 696.4 606.8 696.4zM622.5 731 623.3 731 623.3 730.9 622.6 730.9zM595.2 728.3 595.2 727.5 594.4 728.3zM558.7 731 559.4 731 559.4 730.9 558.8 730.9zM531.4 728.3 531.4 727.5 530.6 728.3zM526.4 686.6 524.6 688.3 524.6 688.4 524.5 688.8 526.4 688.8zM505 701.9 505 701.2 504.2 701.9zM505 680.2 505 679.4 504.2 680.2zM511.3 673.9 510.5 673.9 511.3 673.1zM511.7 566.4 506.6 571.5 506.5 571.8 506.2 573 511.7 573zM481.4 653.7 482.1 653.7 482.1 653.6 481.5 653.6zM454.1 651 454.1 650.2 453.3 651zM449.1 609.3 447.3 611 447.3 611.1 447.2 611.5 449.1 611.5zM427.7 624.6 427.7 623.9 426.9 624.6zM427.7 602.9 427.7 602.1 426.9 602.9zM434 596.6 433.2 596.6 434 595.8zM449.1 545.4 447.3 547.2 447.3 547.3 447.2 547.7 449.1 547.7zM427.7 560.8 427.7 560 426.9 560.8zM427.7 539 427.7 538.3 426.9 539zM434 532.7 433.2 532.7 434 532zM467.5 529.2 465.3 529.2 467.5 527zM454.1 512.7 454.1 511.9 453.3 512.7zM460.4 506.4 459.6 506.4 460.4 505.6zM482.1 506.4 481.4 506.4 482.1 505.6z"/><path fill="#66f1b5" stroke="#66f1b5" stroke-width="0.5" d="M565.8 512.3 572.4 512.3 572.4 506.8 571.2 507.1 570.9 507.2zM560.1 469.6 555.8 469.6 555.7 469.7 555.1 470.1 554.6 469.6 557.3 472.4zM528.6 468.1 528.6 465.9 526.4 468.1zM505.8 482.7 505.8 482 505 482.7zM516.5 461.5 515.1 461.5 515 461.5 514.8 461.6 515.6 462.4zM505.8 461 505.8 460.2 505 461zM512.1 454.7 511.3 454.7 512.1 453.9zM544.8 449.7 547.1 449.7 547.1 447.8 546.7 447.9 546.6 447.9zM542.9 435.1 541.4 435.1 541.2 435.3 541.9 436zM532.1 434.6 532.1 433.8 531.4 434.6zM538.4 428.3 537.7 428.3 538.4 427.5zM557.2 436 556.2 435.1 558.1 435.1zM560.2 428.3 559.4 428.3 560.2 427.5zM602 472.4 599.3 469.6 604.7 469.6zM608.7 449.7 610.9 449.7 610.9 447.8 610.5 447.9 610.4 447.9zM606.7 435.1 605.3 435.1 605.2 435.1 605 435.3 605.8 436zM596 434.6 596 433.8 595.2 434.6zM602.3 428.3 601.5 428.3 602.3 427.5zM621 436 620.1 435.1 621.9 435.1zM624 428.3 623.3 428.3 624 427.5zM647.4 462.4 646.4 461.5 648.3 461.5zM650.4 454.7 649.6 454.7 650.4 453.9zM653.1 482 653 482.1 653 482.7 653.1 482.7zM679.3 549.7 676.6 546.9 682 546.9zM686 527 688.2 527 688.2 525.1 687.8 525.2 687.7 525.2zM684 512.4 682.6 512.4 682.5 512.5 682.3 512.6 683.1 513.3zM673.3 511.9 673.3 511.1 672.5 511.9zM679.6 505.6 678.8 505.6 679.6 504.8zM698.3 513.3 697.4 512.4 699.2 512.4zM701.3 505.6 700.6 505.6 701.3 504.8zM724.7 539.7 723.7 538.8 725.6 538.8zM727.7 532 726.9 532 727.7 531.2zM730.4 559.3 730.3 559.4 730.3 560 730.4 560zM696.1 607 695.8 607.4 695.8 609.3 696.1 609.3zM724.7 603.6 723.7 602.6 725.6 602.6zM727.7 595.8 726.9 595.8 727.7 595zM730.4 623.1 730.3 623.2 730.3 623.9 730.4 623.9zM704 649.5 703.9 649.6 703.9 650.2 704 650.2zM686.5 639.9 687.4 640.8 687.6 640.7 686.8 639.9zM673.3 650.2 673.3 649.5 672.5 650.2zM618.8 684.3 618.5 684.7 618.5 686.6 618.8 686.6zM647.4 680.9 646.4 679.9 648.3 679.9zM650.4 673.1 649.6 673.1 650.4 672.3zM653.1 700.4 653 700.5 653 701.2 653.1 701.2zM626.7 726.8 626.6 726.9 626.6 727.5 626.7 727.5zM609.2 717.2 610.1 718.1 610.3 718 609.5 717.2zM596 727.5 596 726.8 595.2 727.5zM567.4 656.2 570.1 658.9 570.5 658.4 568.3 656.2zM562.9 726.8 562.8 726.9 562.8 727.5 562.9 727.5zM545.4 717.2 546.3 718.1 546.4 718 545.7 717.2zM532.1 727.5 532.1 726.8 531.4 727.5zM528.6 686.6 528.6 684.3 526.4 686.6zM505.8 701.2 505.8 700.4 505 701.2zM516.5 679.9 515.1 679.9 515 680 514.8 680.1 515.6 680.9zM505.8 679.4 505.8 678.6 505 679.4zM512.1 673.1 511.3 673.1 512.1 672.3zM518.3 566.4 518.3 559.8 511.7 566.4zM485.6 649.5 484.8 650.2 484.9 650.2 485.5 649.6 485.5 650.2 485.6 650.2zM468 639.9 469 640.8 469.4 640.3 469.1 640.7 468.4 639.9zM454.8 650.2 454.8 649.5 454.1 650.2zM451.3 609.3 451.3 607 449.1 609.3zM428.5 623.9 428.5 623.1 427.7 623.9zM439.2 602.6 437.8 602.6 437.7 602.7 437.7 602.6 437.7 602.7 437.5 602.8 437.3 602.6 438.3 603.6zM428.5 602.1 428.5 601.3 427.7 602.1zM434.8 595.8 434 595.8 434.8 595zM482.8 546.9 478.5 546.9 478.4 547 478.5 546.9 478.4 547 477.8 547.4 477.3 546.9 480 549.7zM451.3 545.4 451.3 543.2 449.1 545.4zM428.5 560 428.5 559.3 427.7 560zM439.2 538.8 437.8 538.8 437.7 538.8 437.5 538.9 438.3 539.7zM428.5 538.3 428.5 537.5 427.7 538.3zM434.8 532 434 532 434.8 531.2zM467.5 527 469.8 527 469.8 525.1 469.4 525.2 469.3 525.2zM465.6 512.4 464.1 512.4 464.1 512.5 463.9 512.6 463.7 512.4 464.6 513.3zM454.8 511.9 454.8 511.1 454.1 511.9zM461.1 505.6 460.4 505.6 461.1 504.8zM479.9 513.3 478.9 512.4 480.8 512.4zM482.9 505.6 482.1 505.6 482.9 504.8z"/><path fill="#53d29b" stroke="#53d29b" stroke-width="0.5" d="M592.4 518.9 599 518.9 592.4 512.3zM599 518.9 599 512.3 592.4 512.3zM546 470.4 547.1 470.4 546 469.3zM515.2 486.2 515 486 514.8 485.9 514.4 485.5 514.4 486.2zM511.7 482.7 511.7 483.5 512.4 483.5 512 483.1 511.9 482.9zM511.7 461.7 512.1 461.7 511.7 461.4zM514.4 455.4 515.2 455.4 514.4 454.7zM515.2 455.4 515.2 454.7 514.4 454.7zM553.9 451.9 556.1 451.9 553.9 449.7zM556.1 451.9 556.1 449.7 553.9 449.7zM538.1 435.4 538.4 435.4 538.1 435zM540.8 429.1 541.5 429.1 540.8 428.3zM541.5 429.1 541.5 428.3 540.8 428.3zM562.5 429.1 563.3 429.1 562.5 428.3zM563.3 429.1 563.3 428.3 562.5 428.3zM568.8 435.4 568.8 434.6 569.6 435.4zM568.8 434.6 569.6 434.6 569.6 435.4zM617.7 451.9 620 451.9 617.7 449.7zM620 451.9 620 449.7 617.7 449.7zM601.9 435.4 602.3 435.4 601.9 435zM604.6 429.1 605.4 429.1 604.6 428.3zM605.4 429.1 605.4 428.3 604.6 428.3zM626.4 429.1 627.1 429.1 626.4 428.3zM627.1 429.1 627.1 428.3 626.4 428.3zM632.7 435.4 632.7 434.6 633.4 435.4zM632.7 434.6 633.4 434.6 633.4 435.4zM636.2 470.4 636.2 468.1 638.4 470.4zM636.2 468.1 638.4 468.1 638.4 470.4zM652.7 455.4 653.5 455.4 652.7 454.7zM653.5 455.4 653.5 454.7 652.7 454.7zM659 461.7 659 461 659.8 461.7zM659 461 659.8 461 659.8 461.7zM659 483.5 659 482.7 659.8 483.5zM659 482.7 659.8 482.7 659.8 483.5zM653.1 486.2 652.7 485.8 652.7 486.2zM646.5 573 646.5 566.4 653.1 573zM646.5 566.4 653.1 566.4 653.1 573zM695 529.2 697.3 529.2 695 527zM697.3 529.2 697.3 527 695 527zM679.2 512.7 679.6 512.7 679.2 512.3zM681.9 506.4 682.7 506.4 681.9 505.6zM682.7 506.4 682.7 505.6 681.9 505.6zM703.7 506.4 704.4 506.4 703.7 505.6zM704.4 506.4 704.4 505.6 703.7 505.6zM710 512.7 710 511.9 710.7 512.7zM710 511.9 710.7 511.9 710.7 512.7zM713.5 547.7 713.5 545.4 715.7 547.7zM713.5 545.4 715.7 545.4 715.7 547.7zM730 532.7 730.8 532.7 730 532zM730.8 532.7 730.8 532 730 532zM736.3 539 736.3 538.3 737.1 539zM736.3 538.3 737.1 538.3 737.1 539zM736.3 560.8 736.3 560 737.1 560.8zM736.3 560 737.1 560 737.1 560.8zM730.4 563.5 730 563.1 730 563.5zM713.5 611.5 713.5 609.3 715.7 611.5zM713.5 609.3 715.7 609.3 715.7 611.5zM730 596.6 730.8 596.6 730 595.8zM730.8 596.6 730.8 595.8 730 595.8zM736.3 602.9 736.3 602.1 737.1 602.9zM736.3 602.1 737.1 602.1 737.1 602.9zM736.3 624.6 736.3 623.9 737.1 624.6zM736.3 623.9 737.1 623.9 737.1 624.6zM730.4 627.3 730 627 730 627.3zM696.1 619.4 695 618.3 695 619.4zM710 651 710 650.2 710.7 651zM710 650.2 710.7 650.2 710.7 651zM704 653.7 703.7 653.3 703.7 653.7zM682.7 653.7 682.5 653.5 682.3 653.4 681.9 653 681.9 653.7zM679.2 650.2 679.2 651 679.9 651 679.5 650.6 679.4 650.4zM595.6 596.2 592.4 593 592.4 596.2zM636.2 688.8 636.2 686.6 638.4 688.8zM636.2 686.6 638.4 686.6 638.4 688.8zM652.7 673.9 653.5 673.9 652.7 673.1zM653.5 673.9 653.5 673.1 652.7 673.1zM659 680.2 659 679.4 659.8 680.2zM659 679.4 659.8 679.4 659.8 680.2zM659 701.9 659 701.2 659.8 701.9zM659 701.2 659.8 701.2 659.8 701.9zM653.1 704.6 652.7 704.3 652.7 704.6zM618.8 696.7 617.7 695.6 617.7 696.7zM632.7 728.3 632.7 727.5 633.4 728.3zM632.7 727.5 633.4 727.5 633.4 728.3zM626.7 731 626.4 730.6 626.4 731zM605.4 731 605.2 730.8 605 730.7 604.6 730.3 604.6 731zM601.9 727.5 601.9 728.3 602.6 728.3 602.2 727.9 602.1 727.7zM556.1 696.7 555.7 696.3 555.1 695.9 555.2 695.8 555.1 695.9 553.9 694.7 553.9 696.7zM556.1 696.4 555.8 696.4 555.7 696.3 556.1 696.7zM568.8 728.3 568.8 727.5 569.6 728.3zM568.8 727.5 569.6 727.5 569.6 728.3zM562.9 731 562.5 730.6 562.5 731zM541.5 731 541.4 730.8 541.2 730.7 540.8 730.3 540.8 731zM538.1 727.5 538.1 728.3 538.7 728.3 538.3 727.9 538.2 727.7zM546 686.6 546 688.8 548 688.8 546.8 687.6 546.9 687.5 546.8 687.6 546.4 687zM546 686.6 546.4 687 546.3 686.9 546.3 686.6zM515.2 704.6 515 704.5 514.8 704.4 514.4 704 514.4 704.6zM511.7 701.2 511.7 701.9 512.4 701.9 512 701.5 511.9 701.3 512 701.5zM511.7 680.2 512.1 680.2 511.7 679.8zM514.4 673.9 515.2 673.9 514.4 673.1zM515.2 673.9 515.2 673.1 514.4 673.1zM569.2 573 572.4 573 569.2 569.8zM478.8 619.4 478.4 619 477.8 618.6 477.9 618.5 477.8 618.6 476.6 617.4 476.6 619.4zM478.8 619.1 478.5 619.1 478.4 619 478.1 618.7 478.8 619.4zM491.5 651 491.5 650.2 492.3 651zM491.5 650.2 492.3 650.2 492.3 651zM485.6 653.7 485.2 653.3 485.2 653.7zM464.2 653.7 464.1 653.5 463.9 653.4 463.5 653 463.5 653.7zM460.8 650.2 460.8 651 461.4 651 461 650.6 461.1 650.6 461 650.6 460.9 650.4zM468.7 609.3 468.7 611.5 470.7 611.5 469.5 610.3 469.6 610.2 469.5 610.3 469.1 609.7zM468.7 609.3 469.1 609.7 469 609.6 469 609.3zM437.9 627.3 437.7 627.2 437.5 627.1 437.1 626.7 437.1 627.3zM434.4 623.9 434.4 624.6 435.1 624.6 434.7 624.2 434.6 624zM434.4 602.9 434.8 602.9 434.4 602.5zM437.1 596.6 437.9 596.6 437.1 595.8zM437.9 596.6 437.9 595.8 437.1 595.8zM468.7 547.7 469.8 547.7 468.7 546.6zM437.9 563.5 437.7 563.3 437.5 563.2 437.1 562.8 437.1 563.5zM434.4 560 434.4 560.8 435.1 560.8 434.7 560.4 434.6 560.2zM434.4 539 434.8 539 434.4 538.7zM437.1 532.7 437.9 532.7 437.1 532zM437.9 532.7 437.9 532 437.1 532zM476.6 529.2 478.8 529.2 476.6 527zM478.8 529.2 478.8 527 476.6 527zM460.8 512.7 461.1 512.7 460.8 512.3zM463.5 506.4 464.2 506.4 463.5 505.6zM464.2 506.4 464.2 505.6 463.5 505.6zM485.2 506.4 486 506.4 485.2 505.6zM486 506.4 486 505.6 485.2 505.6zM491.5 512.7 491.5 511.9 492.3 512.7zM491.5 511.9 492.3 511.9 492.3 512.7z"/><path fill="#39a779" stroke="#39a779" stroke-width="0.5" d="M599 518.9 605.6 518.9 599 512.3zM515.9 486.2 515.2 485.4 515.2 485.5 515.8 486.1 515.2 486.1 515.2 486.2zM515.2 455.4 515.9 455.4 515.2 454.7zM556.1 451.9 558.4 451.9 556.1 449.7zM541.5 429.1 542.3 429.1 541.5 428.3zM563.3 429.1 564.1 429.1 563.3 428.3zM569.6 435.4 569.6 434.6 570.4 435.4zM620 451.9 622.2 451.9 620 449.7zM605.4 429.1 606.1 429.1 605.4 428.3zM627.1 429.1 627.9 429.1 627.1 428.3zM633.4 435.4 633.4 434.6 634.2 435.4zM638.4 468.1 638.4 470.4 640.3 470.4 640.2 470 640.2 469.9zM653.5 455.4 654.3 455.4 653.5 454.7zM659.8 461.7 659.8 461 660.6 461.7zM659.8 483.5 659.8 482.7 660.6 483.5zM653.1 566.4 653.1 573 658.6 573 658.3 571.8 658.2 571.5zM697.3 529.2 699.5 529.2 697.3 527zM682.7 506.4 683.4 506.4 682.7 505.6zM704.4 506.4 705.2 506.4 704.4 505.6zM710.7 512.7 710.7 511.9 711.5 512.7zM715.7 545.4 715.7 547.7 717.6 547.7 717.5 547.3 717.5 547.2zM730.8 532.7 731.6 532.7 730.8 532zM737.1 539 737.1 538.3 737.9 539zM737.1 560.8 737.1 560 737.9 560.8zM715.7 609.3 715.7 611.5 717.6 611.5 717.5 611.1 717.5 611zM730.8 596.6 731.6 596.6 730.8 595.8zM737.1 602.9 737.1 602.1 737.9 602.9zM737.1 624.6 737.1 623.9 737.9 624.6zM710.7 651 710.7 650.2 711.5 651zM683.4 653.7 683.3 653.6 682.7 653.6 682.7 653.7zM638.4 686.6 638.4 688.8 640.3 688.8 640.2 688.4 640.2 688.3zM653.5 673.9 654.3 673.9 653.5 673.1zM659.8 680.2 659.8 679.4 660.6 680.2zM659.8 701.9 659.8 701.2 660.6 701.9zM633.4 728.3 633.4 727.5 634.2 728.3zM606.1 731 606 730.9 605.4 730.9 605.4 731zM558.4 696.7 558 696.4 556.1 696.4 556.1 696.7zM569.6 728.3 569.6 727.5 570.4 728.3zM542.3 731 542.2 730.9 541.5 730.9 541.5 731zM515.9 704.6 515.8 704.5 515.2 704.5 515.2 704.6zM515.2 673.9 515.9 673.9 515.2 673.1zM481.1 619.4 480.7 619.1 478.8 619.1 478.8 619.4zM492.3 651 492.3 650.2 493.1 651zM465 653.7 464.9 653.6 464.2 653.6 464.2 653.7zM438.6 627.3 438.5 627.2 437.9 627.2 437.9 627.3zM437.9 596.6 438.6 596.6 437.9 595.8zM438.6 563.5 438.5 563.4 437.9 563.4 437.9 563.5zM437.9 532.7 438.6 532.7 437.9 532zM478.8 529.2 481.1 529.2 478.8 527zM464.2 506.4 465 506.4 464.2 505.6zM486 506.4 486.8 506.4 486 505.6zM492.3 512.7 492.3 511.9 493.1 512.7z"/><path fill="#58dba2" stroke="#58dba2" stroke-width="0.5" d="M599 512.3 593.9 507.2 593.6 507.1 592.4 506.8 592.4 512.3zM511.7 482 511.7 482.7 511.8 482.7 511.8 482.1zM514.4 454.7 515.2 454.7 514.4 453.9zM556.1 449.7 554.4 447.9 554.3 447.9 553.9 447.8 553.9 449.7zM540.8 428.3 541.5 428.3 540.8 427.5zM562.5 428.3 563.3 428.3 562.5 427.5zM568.8 434.6 568.8 433.8 569.6 434.6zM620 449.7 618.2 447.9 618.1 447.9 617.7 447.8 617.7 449.7zM604.6 428.3 605.4 428.3 604.6 427.5zM626.4 428.3 627.1 428.3 626.4 427.5zM632.7 434.6 632.7 433.8 633.4 434.6zM636.2 468.1 636.2 465.9 638.4 468.1zM652.7 454.7 653.5 454.7 652.7 453.9zM659 461 659 460.2 659.8 461zM659 482.7 659 482 659.8 482.7zM646.5 566.4 646.5 559.8 653.1 566.4zM697.3 527 695.5 525.2 695.4 525.2 695 525.1 695 527zM681.9 505.6 682.7 505.6 681.9 504.8zM703.7 505.6 704.4 505.6 703.7 504.8zM710 511.9 710 511.1 710.7 511.9zM713.5 545.4 713.5 543.2 715.7 545.4zM730 532 730.8 532 730 531.2zM736.3 538.3 736.3 537.5 737.1 538.3zM736.3 560 736.3 559.3 737.1 560zM713.5 609.3 713.5 607 715.7 609.3zM730 595.8 730.8 595.8 730 595zM736.3 602.1 736.3 601.3 737.1 602.1zM736.3 623.9 736.3 623.1 737.1 623.9zM710 650.2 710 649.5 710.7 650.2zM679.2 649.5 679.2 650.2 679.3 650.2 679.3 649.6zM636.2 686.6 636.2 684.3 638.4 686.6zM652.7 673.1 653.5 673.1 652.7 672.3zM659 679.4 659 678.6 659.8 679.4zM659 701.2 659 700.4 659.8 701.2zM632.7 727.5 632.7 726.8 633.4 727.5zM601.9 726.8 601.9 727.5 602 727.5 602 726.9zM568.8 727.5 568.8 726.8 569.6 727.5zM538.1 726.8 538.1 727.5 538.2 727.5 538.2 726.9zM546 684.3 546 686.6 546.3 686.6 546.3 684.7zM511.7 700.4 511.7 701.2 511.8 701.2 511.8 700.5zM514.4 673.1 515.2 673.1 514.4 672.3zM491.5 650.2 491.5 649.5 492.3 650.2zM460.8 649.5 460.8 650.2 460.9 650.2 460.9 649.6 461.5 650.2zM468.7 607 468.7 609.3 469 609.3 469 607.4zM434.4 623.1 434.4 623.9 434.5 623.9 434.5 623.2 435.1 623.8 435.2 623.9zM437.1 595.8 437.9 595.8 437.1 595zM434.4 559.3 434.4 560 434.5 560 434.5 559.4 435.1 560 435.2 560zM437.1 532 437.9 532 437.1 531.2zM478.8 527 477.1 525.2 477 525.2 476.6 525.1 476.6 527zM463.5 505.6 464.2 505.6 463.5 504.8zM485.2 505.6 486 505.6 485.2 504.8zM491.5 511.9 491.5 511.1 492.3 511.9z"/><path fill="#3dae7e" stroke="#3dae7e" stroke-width="0.5" d="M569.2 569.8 572.4 573 572.4 569.8zM528.6 477.2 528.6 479.4 526.4 477.2zM528.6 479.4 526.4 479.4 526.4 477.2zM512.1 492.1 511.3 492.1 512.1 492.9zM511.3 492.1 511.3 492.9 512.1 492.9zM505.8 485.8 505.8 486.6 505 485.8zM505.8 486.6 505 486.6 505 485.8zM505.8 464.1 505.8 464.8 505 464.1zM505.8 464.8 505 464.8 505 464.1zM511.7 461.4 512.1 461.7 512.1 461.4zM546 469.3 547.1 470.4 547.1 469.3zM532.1 437.7 532.1 438.5 531.4 437.7zM532.1 438.5 531.4 438.5 531.4 437.7zM538.1 435 538.4 435.4 538.4 435zM559.4 435 559.6 435.2 559.8 435.3 560.2 435.7 560.2 435zM562.9 438.5 562.9 437.7 562.2 437.7 562.6 438.1 562.7 438.3zM608.7 469.3 609.1 469.7 609.7 470.1 610.9 471.3 610.9 469.3zM608.7 469.6 609 469.6 609.1 469.7 609.6 470.2 608.7 469.3zM596 437.7 596 438.5 595.2 437.7zM596 438.5 595.2 438.5 595.2 437.7zM601.9 435 602.3 435.4 602.3 435zM623.3 435 623.4 435.2 623.6 435.3 624 435.7 624 435zM626.7 438.5 626.7 437.7 626.1 437.7 626.5 438.1 626.6 438.3zM618.8 479.4 618.8 477.2 616.8 477.2 618 478.4 617.9 478.5 618 478.4 618.4 479zM618.8 479.4 617.9 478.5 618.4 479 618.5 479.1 618.5 479.4zM649.6 461.4 649.8 461.5 650 461.6 650.4 462 650.4 461.4zM653.1 464.8 653.1 464.1 652.4 464.1 652.8 464.5 652.9 464.7 652.8 464.5 652.3 464.1zM653.1 485.8 652.7 485.8 653.1 486.2zM650.4 492.1 649.6 492.1 650.4 492.9zM649.6 492.1 649.6 492.9 650.4 492.9zM595.6 593 592.4 593 595.6 596.2zM686 546.6 686.4 547 687 547.4 688.2 548.6 688.2 546.6zM686 546.9 686.3 546.9 686.4 547 686 546.6zM673.3 515 673.3 515.8 672.5 515zM673.3 515.8 672.5 515.8 672.5 515zM679.2 512.3 679.6 512.7 679.6 512.3zM700.6 512.3 701.3 513.1 700.9 512.6 700.7 512.5 700.9 512.6 701.3 513 701.3 512.3zM704 515.8 704 515 703.4 515 703.8 515.4 703.9 515.6zM696.1 556.7 696.1 554.5 694.1 554.5 695.3 555.7 695.7 556.3zM696.1 556.7 695.7 556.3 695.8 556.4 695.8 556.7zM726.9 538.7 727.1 538.8 727.3 538.9 727.7 539.3 727.7 538.7zM730.4 542.1 730.4 541.4 729.7 541.4 730.1 541.8 730.2 542zM730.4 563.1 730 563.1 730.4 563.5zM727.7 569.4 726.9 569.4 727.7 570.2zM726.9 569.4 726.9 570.2 727.7 570.2zM696.1 618.3 695 618.3 696.1 619.4zM726.9 602.5 727.1 602.7 727.3 602.8 727.7 603.2 727.7 602.5zM730.4 606 730.4 605.2 729.7 605.2 730.1 605.6 730.2 605.8zM730.4 627 730 627 730.4 627.3zM727.7 633.3 726.9 633.3 727.7 634zM726.9 633.3 726.9 634 727.7 634zM688.2 636.8 686 636.8 688.2 639zM686 636.8 686 639 688.2 639zM704 653.3 703.7 653.3 704 653.7zM701.3 659.6 700.6 659.6 701.3 660.4zM700.6 659.6 700.6 660.4 701.3 660.4zM679.6 659.6 678.8 659.6 679.6 660.4zM678.8 659.6 678.8 660.4 679.6 660.4zM673.3 653.3 673.3 654.1 672.5 653.3zM673.3 654.1 672.5 654.1 672.5 653.3zM572.4 647.1 565.8 647.1 572.4 653.7zM565.8 647.1 565.8 653.7 572.4 653.7zM618.8 695.6 617.7 695.6 618.8 696.7zM649.6 679.8 649.8 680 650 680.1 650.4 680.5 650.4 679.8zM653.1 683.3 653.1 682.5 652.4 682.5 652.8 682.9 652.9 683.1zM653.1 704.3 652.7 704.3 653.1 704.6zM650.4 710.6 649.6 710.6 650.4 711.3zM649.6 710.6 649.6 711.3 650.4 711.3zM610.9 714.1 608.7 714.1 610.9 716.3zM608.7 714.1 608.7 716.3 610.9 716.3zM626.7 730.6 626.4 730.6 626.7 731zM624 736.9 623.3 736.9 624 737.7zM623.3 736.9 623.3 737.7 624 737.7zM602.3 736.9 601.5 736.9 602.3 737.7zM601.5 736.9 601.5 737.7 602.3 737.7zM596 730.6 596 731.4 595.2 730.6zM596 731.4 595.2 731.4 595.2 730.6zM547.1 714.1 544.8 714.1 547.1 716.3zM544.8 714.1 544.8 716.3 547.1 716.3zM562.9 730.6 562.5 730.6 562.9 731zM560.2 736.9 559.4 736.9 560.2 737.7zM559.4 736.9 559.4 737.7 560.2 737.7zM538.4 736.9 537.7 736.9 538.4 737.7zM537.7 736.9 537.7 737.7 538.4 737.7zM532.1 730.6 532.1 731.4 531.4 730.6zM532.1 731.4 531.4 731.4 531.4 730.6zM528.6 695.6 528.6 697.9 526.4 695.6zM528.6 697.9 526.4 697.9 526.4 695.6zM512.1 710.6 511.3 710.6 512.1 711.3zM511.3 710.6 511.3 711.3 512.1 711.3zM505.8 704.3 505.8 705 505 704.3zM505.8 705 505 705 505 704.3zM505.8 682.5 505.8 683.3 505 682.5zM505.8 683.3 505 683.3 505 682.5zM511.7 679.8 512.1 680.2 512.1 679.8zM518.3 593 518.3 599.6 511.7 593zM518.3 599.6 511.7 599.6 511.7 593zM469.8 636.8 467.5 636.8 469.8 639zM467.5 636.8 467.5 639 469.8 639zM485.6 653.3 485.2 653.3 485.6 653.7zM482.9 659.6 482.1 659.6 482.9 660.4zM482.1 659.6 482.1 660.4 482.9 660.4zM461.1 659.6 460.4 659.6 461.1 660.4zM460.4 659.6 460.4 660.4 461.1 660.4zM454.8 653.3 454.8 654.1 454.1 653.3zM454.8 654.1 454.1 654.1 454.1 653.3zM451.3 618.3 451.3 620.6 449.1 618.3zM451.3 620.6 449.1 620.6 449.1 618.3zM434.8 633.3 434 633.3 434.8 634zM434 633.3 434 634 434.8 634zM428.5 627 428.5 627.7 427.7 627zM428.5 627.7 427.7 627.7 427.7 627zM428.5 605.2 428.5 606 427.7 605.2zM428.5 606 427.7 606 427.7 605.2zM434.4 602.5 434.8 602.9 434.8 602.5zM451.3 554.5 451.3 556.7 449.1 554.5zM451.3 556.7 449.1 556.7 449.1 554.5zM434.8 569.4 434 569.4 434.8 570.2zM434 569.4 434 570.2 434.8 570.2zM428.5 563.1 428.5 563.9 427.7 563.1zM428.5 563.9 427.7 563.9 427.7 563.1zM428.5 541.4 428.5 542.1 427.7 541.4zM428.5 542.1 427.7 542.1 427.7 541.4zM434.4 538.7 434.8 539 434.8 538.7zM468.7 546.6 469.8 547.7 469.8 546.6zM454.8 515 454.8 515.8 454.1 515zM454.8 515.8 454.1 515.8 454.1 515zM460.8 512.3 461.1 512.7 461.1 512.3zM482.1 512.3 482.3 512.5 482.5 512.6 482.9 513 482.9 512.3zM485.6 515.8 485.6 515 484.9 515 485.3 515.4 485.4 515.6z"/><path fill="#2a8e64" stroke="#2a8e64" stroke-width="0.5" d="M592.4 569.8 592.4 573 595.6 569.8zM546 479.4 546.4 479 546.8 478.4 548 477.2 546 477.2zM546.3 479.4 546.3 479.1 546.4 479 546 479.4zM514.4 492.1 515.2 492.1 514.4 492.9zM515.2 492.1 515.2 492.9 514.4 492.9zM511.7 486.2 512.1 485.8 511.7 485.8zM511.7 464.8 511.9 464.7 512 464.5 512.4 464.1 511.7 464.1zM515.2 461.4 514.4 461.4 514.4 462 514.8 461.6 515 461.5zM556.1 469.3 553.9 469.3 553.9 471.3 555.1 470.1 555.2 470.2 555.1 470.1 555.7 469.7zM556.1 469.3 555.2 470.2 555.7 469.7 555.8 469.6 556.1 469.6zM538.1 438.5 538.2 438.3 538.3 438.1 538.7 437.7 538.1 437.7zM541.5 435 540.8 435 540.8 435.7 541.2 435.3 541.4 435.2zM562.5 435 562.5 435.4 562.9 435zM568.8 437.7 568.8 438.5 569.6 437.7zM568.8 438.5 569.6 438.5 569.6 437.7zM617.7 469.3 617.7 470.4 618.8 469.3zM601.9 438.5 602.1 438.3 602.2 438.1 602.6 437.7 601.9 437.7zM605.4 435 604.6 435 604.6 435.7 605 435.3 605.2 435.2zM626.4 435 626.4 435.4 626.7 435zM632.7 437.7 632.7 438.5 633.4 437.7zM632.7 438.5 633.4 438.5 633.4 437.7zM636.2 477.2 636.2 479.4 638.4 477.2zM636.2 479.4 638.4 479.4 638.4 477.2zM652.7 461.4 652.7 461.7 653.1 461.4zM659 464.1 659 464.8 659.8 464.1zM659 464.8 659.8 464.8 659.8 464.1zM659 485.8 659 486.6 659.8 485.8zM659 486.6 659.8 486.6 659.8 485.8zM652.7 492.1 653.5 492.1 652.7 492.9zM653.5 492.1 653.5 492.9 652.7 492.9zM646.5 593 646.5 599.6 653.1 593zM646.5 599.6 653.1 599.6 653.1 593zM695 546.6 695 547.7 696.1 546.6zM679.2 515.8 679.4 515.6 679.5 515.4 679.9 515 679.2 515zM682.7 512.3 681.9 512.3 681.9 513 682.3 512.6 682.5 512.5 682.3 512.6 681.9 513.1zM703.7 512.3 703.7 512.7 704 512.3zM710 515 710 515.8 710.7 515zM710 515.8 710.7 515.8 710.7 515zM713.5 554.5 713.5 556.7 715.7 554.5zM713.5 556.7 715.7 556.7 715.7 554.5zM730 538.7 730 539 730.4 538.7zM736.3 541.4 736.3 542.1 737.1 541.4zM736.3 542.1 737.1 542.1 737.1 541.4zM736.3 563.1 736.3 563.9 737.1 563.1zM736.3 563.9 737.1 563.9 737.1 563.1zM730 569.4 730.8 569.4 730 570.2zM730.8 569.4 730.8 570.2 730 570.2zM713.5 618.3 713.5 620.6 715.7 618.3zM713.5 620.6 715.7 620.6 715.7 618.3zM730 602.5 730 602.9 730.4 602.5zM736.3 605.2 736.3 606 737.1 605.2zM736.3 606 737.1 606 737.1 605.2zM736.3 627 736.3 627.7 737.1 627zM736.3 627.7 737.1 627.7 737.1 627zM730 633.3 730.8 633.3 730 634zM730.8 633.3 730.8 634 730 634zM695 636.8 697.3 636.8 695 639zM697.3 636.8 697.3 639 695 639zM710 653.3 710 654.1 710.7 653.3zM710 654.1 710.7 654.1 710.7 653.3zM703.7 659.6 704.4 659.6 703.7 660.4zM704.4 659.6 704.4 660.4 703.7 660.4zM681.9 659.6 682.7 659.6 681.9 660.4zM682.7 659.6 682.7 660.4 681.9 660.4zM679.2 653.7 679.6 653.3 679.2 653.3zM592.4 647.1 599 647.1 592.4 653.7zM599 647.1 599 653.7 592.4 653.7zM636.2 695.6 636.2 697.9 638.4 695.6zM636.2 697.9 638.4 697.9 638.4 695.6zM652.7 679.8 652.7 680.2 653.1 679.8zM659 682.5 659 683.3 659.8 682.5zM659 683.3 659.8 683.3 659.8 682.5zM659 704.3 659 705 659.8 704.3zM659 705 659.8 705 659.8 704.3zM652.7 710.6 653.5 710.6 652.7 711.3zM653.5 710.6 653.5 711.3 652.7 711.3zM617.7 714.1 620 714.1 617.7 716.3zM620 714.1 620 716.3 617.7 716.3zM632.7 730.6 632.7 731.4 633.4 730.6zM632.7 731.4 633.4 731.4 633.4 730.6zM626.4 736.9 627.1 736.9 626.4 737.7zM627.1 736.9 627.1 737.7 626.4 737.7zM604.6 736.9 605.4 736.9 604.6 737.7zM605.4 736.9 605.4 737.7 604.6 737.7zM601.9 731 602.3 730.6 601.9 730.6zM553.9 714.1 556.1 714.1 553.9 716.3zM556.1 714.1 556.1 716.3 553.9 716.3zM568.8 730.6 568.8 731.4 569.6 730.6zM568.8 731.4 569.6 731.4 569.6 730.6zM562.5 736.9 563.3 736.9 562.5 737.7zM563.3 736.9 563.3 737.7 562.5 737.7zM540.8 736.9 541.5 736.9 540.8 737.7zM541.5 736.9 541.5 737.7 540.8 737.7zM538.1 731 538.4 730.6 538.1 730.6zM546 696.7 547.1 695.6 546 695.6zM514.4 710.6 515.2 710.6 514.4 711.3zM515.2 710.6 515.2 711.3 514.4 711.3zM511.7 704.6 512.1 704.3 511.7 704.3zM511.7 683.3 511.9 683.1 512 682.9 512.4 682.5 511.7 682.5zM515.2 679.8 514.4 679.8 514.4 680.5 514.8 680.1 515 680zM569.2 596.2 572.4 593 569.2 593zM476.6 636.8 478.8 636.8 476.6 639zM478.8 636.8 478.8 639 476.6 639zM491.5 653.3 491.5 654.1 492.3 653.3zM491.5 654.1 492.3 654.1 492.3 653.3zM485.2 659.6 486 659.6 485.2 660.4zM486 659.6 486 660.4 485.2 660.4zM463.5 659.6 464.2 659.6 463.5 660.4zM464.2 659.6 464.2 660.4 463.5 660.4zM460.8 653.7 461.1 653.3 460.8 653.3zM468.7 619.4 469.8 618.3 468.7 618.3zM437.1 633.3 437.9 633.3 437.1 634zM437.9 633.3 437.9 634 437.1 634zM434.4 627.3 434.8 627 434.4 627zM434.4 606 434.6 605.8 434.7 605.6 435.1 605.2 434.4 605.2zM437.9 602.5 437.1 602.5 437.1 603.2 437.5 602.8 437.7 602.7zM468.7 556.7 469.1 556.3 469.5 555.7 470.7 554.5 468.7 554.5zM469 556.7 469 556.4 469.1 556.3 468.7 556.7zM437.1 569.4 437.9 569.4 437.1 570.2zM437.9 569.4 437.9 570.2 437.1 570.2zM434.4 563.5 434.8 563.1 434.4 563.1zM434.4 542.1 434.6 541.9 434.6 542 434.7 541.8 435.1 541.4 434.4 541.4zM437.9 538.7 437.1 538.7 437.1 539.3 437.5 538.9 437.7 538.8 437.5 539 437.1 539.4zM478.8 546.6 476.6 546.6 476.6 548.6 477.8 547.4 478.4 547zM478.8 546.6 478.4 547 478.5 546.9 478.8 546.9zM460.8 515.8 460.9 515.6 461 515.4 461.4 515 460.8 515zM464.2 512.3 463.5 512.3 463.5 513 463.9 512.6 464.1 512.5zM485.2 512.3 485.2 512.7 485.6 512.3zM491.5 515 491.5 515.8 492.3 515zM491.5 515.8 492.3 515.8 492.3 515z"/><path fill="#2f966b" stroke="#2f966b" stroke-width="0.5" d="M546.3 488.8 549.1 486.1 570.1 507.1 567.4 509.8zM513.8 485.2 514.3 485.4 514.4 485.5 514.8 485.9 515.6 485.1 512.7 482.3 512 483.1 512.4 483.5 512.5 483.6 512.6 484.1zM512.7 467.1 511.8 468 517.6 473.8 519.4 473.8zM538.2 441.7 539.1 440.7 546.3 447.9 545.4 448.8zM550 445.1 550.5 445.6 550.5 447.4 551.9 447.4 552.7 447.7zM581 498.8 582.4 500.2 579.7 503 582.4 500.2 582.4 505.7 586.5 505.7 588.8 506.6zM602 441.7 603 440.7 610.1 447.9 609.2 448.8zM614.3 445.6 614.3 447.4 615.7 447.4 616.5 447.7 616.7 447.9zM640.2 471.4 640.4 471.6 640.7 472.4 640.7 473.8 642.5 473.8zM647.4 485.1 646.4 486.1 639.3 478.9 640.2 478zM658.8 576.6 659.7 578.9 659.7 583 665.2 583zM679.3 519 680.3 518 687.4 525.2 686.5 526.1zM691.6 522.9 691.6 524.7 693 524.7 693.8 525zM717.7 548.9 718 549.7 718 551.1 719.8 551.1zM724.7 562.4 723.7 563.4 716.6 556.2 717.5 555.3zM679.3 616.3 676.6 619.1 655.6 598 658.3 595.3zM717.7 612.7 718 613.5 718 614.9 719.8 614.9zM724.7 626.3 723.7 627.2 716.6 620 717.5 619.1zM697.4 653.6 698.3 652.7 691.6 646 691.6 647.8zM681.3 652.8 681.8 652.9 681.9 653 682.3 653.4 683.1 652.7 680.3 649.8 679.5 650.6 679.9 651 680 651.1 680.2 651.6zM599.3 696.4 602 693.6 582.4 674 582.4 679.5zM640.4 690 640.7 690.8 640.7 692.2 642.5 692.2zM647.4 703.6 646.4 704.5 639.3 697.4 640.2 696.4zM620.1 730.9 621 730 614.3 723.3 614.3 725.1zM604 730.1 604.5 730.2 604.6 730.3 605 730.7 605.8 730 603 727.1 602.2 727.9 602.6 728.3 602.7 728.4 602.9 728.9zM552.2 693.9 553.5 694.5 553.9 694.7 555.1 695.9 554.6 696.4 557.3 693.6 549.1 685.4 546.8 687.6 548 688.8 548.2 689.2 548.8 690.5zM556.2 730.9 557.2 730 550.5 723.3 550.5 725.1zM540.2 730.1 540.6 730.2 540.8 730.3 541.2 730.7 541.9 730 539.1 727.1 538.3 727.9 538.7 728.3 538.8 728.4 539 728.9zM514.6 704.5 514.4 704.3 514 703.9 513.8 703.7 514.3 703.9 514.4 704 514.8 704.4 515.6 703.6 512.7 700.8 512 701.5 512.4 701.9 512.5 702.1 512.6 702.5 512.5 702.3 512.1 701.9 511.8 701.7zM512.7 685.5 511.8 686.5 519 693.6 518.5 693.2 517.6 692.2 519.4 692.2zM475.4 617.2 474.9 616.6 476.2 617.2 476.6 617.4 477.8 618.6 480 616.3 471.8 608.1 469 610.8 469.5 610.3 470.7 611.5 470.9 611.9 471.5 613.2zM478.9 653.6 479.9 652.7 472.7 645.5 473.2 646 473.2 647.8zM462.9 652.8 463.3 652.9 463.5 653 463.9 653.4 464.6 652.7 461.8 649.8 460.9 650.8 461 650.6 461.4 651 461.5 651.1 461.7 651.6zM436.5 626.4 437 626.6 437.1 626.7 437.5 627.1 438.3 626.3 435.4 623.5 434.7 624.2 435.1 624.6 435.2 624.8 435.3 625.2zM435.4 608.2 434.5 609.2 441.7 616.3 441.2 615.9 442.1 614.9zM440.3 614.9 442.1 614.9 441.2 615.9zM471.8 563.4 469 566.1 487.3 584.4 485.9 583 491.4 583 492.8 584.4zM436.7 562.7 436.5 562.5 437 562.7 437.1 562.8 437.5 563.2 437.3 563.4 438.3 562.4 435.4 559.6 434.7 560.4 435.1 560.8 435.2 560.9 435.3 561.4 435.2 561.2zM435.4 544.4 434.5 545.3 441.7 552.5 441.2 552 440.3 551.1 442.1 551.1zM460.9 519 461.8 518 469 525.2 468 526.1zM472.7 522.4 473.2 522.9 472.2 523.8 473.2 522.9 473.2 524.7 474.6 524.7 475.4 525z"/><path fill="#45ba88" stroke="#45ba88" stroke-width="0.5" d="M549.1 486.1 551.8 483.4 572.8 504.4 570.1 507.1zM515.6 485.1 512.7 482.3 513.7 481.4 516.5 484.2zM520.8 473.3 513.7 466.2 512.7 467.1 519.4 473.8 520.4 473.8 519.9 474.3zM539.1 440.7 540 439.8 547.2 447 546.3 447.9zM553.7 447 550.9 444.1 550.5 444.6 550.5 445.6 552.8 447.9 552.7 447.7 552.9 447.8zM592 504.4 583.7 496.1 582.4 497.4 582.4 500.2 589.3 507.1zM588.8 506.6 589.6 506.8 589.3 507.1zM603 440.7 603.9 439.8 611.1 447 610.1 447.9zM617.6 447 614.8 444.1 613.8 445.1 616.5 447.7 616.8 447.8zM614.3 444.6 614.3 445.6 613.8 445.1zM644 473.3 641.1 470.5 640.3 471.3 640.4 471.6 642.5 473.8 643.5 473.8zM648.3 484.2 647.4 485.1 640.2 478 641.1 477zM669.3 581.7 661 573.4 658.6 575.8 658.8 576.6 665.2 583 668 583zM680.3 518 681.2 517.1 688.4 524.3 687.4 525.2zM694.9 524.3 692.1 521.4 691.6 521.9 691.6 522.9 693.8 525 694.1 525.1zM721.3 550.6 718.4 547.8 717.6 548.6 717.7 548.9 719.8 551.1 720.8 551.1zM725.6 561.5 724.7 562.4 717.5 555.3 718.4 554.3zM682 613.6 679.3 616.3 658.3 595.3 661 592.6zM721.3 614.5 718.4 611.7 717.6 612.5 717.7 612.7 719.8 614.9 720.8 614.9zM725.6 625.4 724.7 626.3 717.5 619.1 718.4 618.2zM698.3 652.7 699.2 651.7 692.1 644.6 691.6 645 691.6 646zM683.1 652.7 680.3 649.8 681.2 648.9 684 651.7zM602 693.6 604.7 690.9 583.7 669.9 582.4 671.2 582.4 674zM644 691.8 641.1 689 640.3 689.8 640.4 690 642.5 692.2 643.5 692.2zM648.3 702.7 647.4 703.6 640.2 696.4 641.1 695.5zM621 730 621.9 729 614.8 721.9 614.3 722.3 614.3 723.3zM605.8 730 603 727.1 603.9 726.2 606.7 729zM557.3 693.6 549.1 685.4 551.8 682.6 560.1 690.9zM557.2 730 558.1 729 550.9 721.9 550.5 722.3 550.5 723.3zM541.9 730 539.1 727.1 540 726.2 542.9 729zM515.6 703.6 512.7 700.8 513.7 699.8 516.5 702.7zM520.8 691.8 513.7 684.6 512.7 685.5 519.4 692.2 520.4 692.2zM480 616.3 471.8 608.1 474.5 605.3 482.8 613.6zM479.9 652.7 480.8 651.7 473.6 644.6 473.2 645 473.2 646zM464.6 652.7 461.8 649.8 462.7 648.9 465.6 651.7zM438.3 626.3 435.4 623.5 436.4 622.5 439.2 625.4zM443.5 614.5 436.4 607.3 435.4 608.2 442.6 615.4 442.1 614.9 443.1 614.9zM495.5 581.7 474.5 560.7 471.8 563.4 491.4 583 494.2 583zM438.3 562.4 435.4 559.6 436.4 558.7 439.2 561.5zM443.5 550.6 436.4 543.5 435.4 544.4 442.6 551.6 442.1 551.1 443.1 551.1zM461.8 518 462.7 517.1 469.9 524.3 469 525.2zM476.4 524.3 473.6 521.4 472.7 522.4 473.2 521.9 473.2 522.9 475.4 525 475.6 525.1z"/><path fill="#65f0b3" stroke="#65f0b3" stroke-width="0.5" d="M549.1 480.6 557.3 472.4 560.1 475.1 551.8 483.4zM512.7 480.5 513.7 481.4 520.8 474.2 520.4 473.8 519.4 473.8zM512.7 465.2 515.6 462.4 516.5 463.3 513.7 466.2zM539.1 438.9 541.9 436 542.9 437 540 439.8zM550.9 444.1 558.1 437 557.2 436 550 443.2 550.5 442.7 550.5 443.7zM583.7 496.1 604.7 475.1 602 472.4 582.4 492 582.4 494.8zM603 438.9 605.8 436 606.7 437 603.9 439.8zM614.8 444.1 621.9 437 621 436 613.8 443.2 614.3 442.7 614.3 443.7zM647.4 462.4 648.3 463.3 641.1 470.5 640.2 469.6zM641.1 477 644 474.2 643.5 473.8 642.5 473.8 643 473.3 640.2 476.1 640.4 476 640.3 476.2zM679.3 549.7 682 552.4 661 573.4 658.3 570.7zM680.3 516.2 683.1 513.3 684 514.3 681.2 517.1zM692.1 521.4 699.2 514.3 698.3 513.3 691.6 520 691.6 521zM724.7 539.7 725.6 540.6 718.4 547.8 717.5 546.9zM718.4 554.3 721.3 551.5 720.8 551.1 719.8 551.1 717.7 553.3 717.6 553.5zM661 592.6 669.3 584.3 668 583 665.2 583 658.8 589.4 658.6 590.2zM724.7 603.6 725.6 604.5 718.4 611.7 717.5 610.7zM718.4 618.2 721.3 615.4 720.8 614.9 719.8 614.9 717.7 617.1 717.6 617.4zM692.1 644.6 694.9 641.7 694.1 640.9 693.8 641 691.6 643.1 691.6 644.1zM681.2 648.9 680.3 648 687.4 640.8 688.4 641.7zM583.7 669.9 592 661.6 589.6 659.2 588.8 659.4 582.4 665.8 582.4 668.6zM647.4 680.9 648.3 681.8 641.1 689 640.2 688zM641.1 695.5 644 692.7 643.5 692.2 642.5 692.2 640.4 694.4 640.3 694.7zM614.8 721.9 617.6 719 616.8 718.2 616.5 718.3 614.3 720.4 614.3 721.4zM603.9 726.2 603 725.3 610.1 718.1 611.1 719zM551.8 682.6 549.1 679.9 570.1 658.9 572.8 661.6zM550.9 721.9 553.7 719 552.9 718.2 552.7 718.3 550.5 720.4 550.5 721.4zM540 726.2 539.1 725.3 546.3 718.1 547.2 719zM512.7 698.9 513.7 699.8 520.8 692.7 520.4 692.2 519.4 692.2zM512.7 683.7 515.6 680.9 516.5 681.8 513.7 684.6zM471.8 602.6 474.5 605.3 495.5 584.3 494.2 583 491.4 583zM473.6 644.6 476.4 641.7 475.5 640.8 475.6 640.9 475.4 641 473.2 643.1 473.2 644.1 472.7 643.6zM462.7 648.9 461.8 648 469 640.8 469.9 641.7zM435.4 621.6 436.4 622.5 443.5 615.4 443.1 614.9 442.1 614.9zM435.4 606.4 438.3 603.6 439.2 604.5 436.4 607.3zM471.8 557.9 480 549.7 482.8 552.4 474.5 560.7zM435.4 557.8 436.4 558.7 443.5 551.5 443.1 551.1 442.1 551.1 442.6 550.6zM435.4 542.5 438.3 539.7 439.2 540.6 436.4 543.5zM461.8 516.2 464.6 513.3 465.6 514.3 462.7 517.1zM473.6 521.4 480.8 514.3 479.9 513.3 473.2 520 473.2 521z"/><path fill="#35a174" stroke="#35a174" stroke-width="0.5" d="M581.1 496.1 572.8 504.4 575.2 506.8 576 506.6 575.5 507.1 582.4 500.2 582.4 497.4zM517.4 485.1 516.5 484.2 523.7 477 524.6 478zM523.7 470.5 520.8 473.3 521.3 473.8 522.3 473.8 524.6 471.4 524.4 471.6 524.5 471.3zM550 444.1 547.2 447 548 447.8 548.3 447.7 550.5 445.6 550.5 444.6 551 445.1zM560.9 439.8 561.8 440.7 554.7 447.9 553.7 447zM613 483.4 615.7 486.1 594.7 507.1 592 504.4zM613.9 444.1 611.1 447 611.9 447.8 612.1 447.7 614.3 445.6 614.3 444.6zM624.8 439.8 625.7 440.7 618.5 447.9 617.6 447zM652.1 467.1 651.1 466.2 644 473.3 644.4 473.8 645.4 473.8zM652.1 482.3 649.2 485.1 648.3 484.2 651.1 481.4zM693 563.4 690.3 560.7 669.3 581.7 670.6 583 673.4 583zM691.2 521.4 688.4 524.3 689.2 525.1 689.4 525 691.6 522.9 691.6 521.9zM702.1 517.1 703 518 695.8 525.2 694.9 524.3zM729.4 544.4 728.4 543.5 721.3 550.6 721.7 551.1 722.7 551.1zM729.4 559.6 726.5 562.4 725.6 561.5 728.4 558.7zM693 608.1 684.8 616.3 682 613.6 690.3 605.3zM729.4 608.2 728.4 607.3 721.3 614.5 721.7 614.9 722.7 614.9zM729.4 623.5 726.5 626.3 725.6 625.4 728.4 622.5zM703 649.8 700.2 652.7 699.2 651.7 702.1 648.9zM691.2 644.6 684 651.7 684.9 652.7 691.6 646 691.6 645zM615.7 685.4 607.5 693.6 604.7 690.9 613 682.6zM652.1 685.5 651.1 684.6 644 691.8 644.4 692.2 645.4 692.2zM652.1 700.8 649.2 703.6 648.3 702.7 651.1 699.8zM625.7 727.1 622.9 730 621.9 729 624.8 726.2zM613.9 721.9 606.7 729 607.6 730 614.3 723.3 614.3 722.3zM581.1 669.9 560.1 690.9 562.8 693.6 582.4 674 582.4 671.2zM561.8 727.1 559 730 558.1 729 560.9 726.2zM550 721.9 542.9 729 543.8 730 550.5 723.3 550.5 722.3zM517.4 703.6 516.5 702.7 523.7 695.5 524.6 696.4zM523.7 689 520.8 691.8 521.3 692.2 522.3 692.2 524.4 690 524.5 689.8zM485.5 616.3 482.8 613.6 503.8 592.6 506.5 595.3zM484.5 649.8 481.7 652.7 480.8 651.7 483.6 648.9zM472.7 644.6 465.6 651.7 466.5 652.7 473.2 646 473.2 645zM440.1 626.3 439.2 625.4 446.4 618.2 447.3 619.1zM446.4 611.7 443.5 614.5 444 614.9 445 614.9 444.5 615.4 447.1 612.7 447.2 612.5 447.3 612.6zM503.8 573.4 495.5 581.7 496.8 583 499.6 583 506.5 576.1zM506 576.6 506.2 575.8 506.5 576.1zM440.1 562.4 439.2 561.5 446.4 554.3 447.3 555.3zM446.4 547.8 443.5 550.6 444 551.1 445 551.1 447.1 548.9 447.2 548.6zM472.7 521.4 469.9 524.3 470.7 525.1 471 525 470.8 525.2 473.2 522.9 473.2 521.9 473.7 522.4zM483.6 517.1 484.5 518 477.4 525.2 476.4 524.3z"/><path fill="#166d4a" stroke="#166d4a" stroke-width="0.5" d="M576 506.6 578.3 505.7 582.4 505.7 578.3 509.8 582.4 505.7 582.4 500.2 583.8 498.8zM518.4 486.1 517.4 485.1 524.6 478 525.5 478.9zM522.3 473.8 523.2 474.7 522.3 473.8 524.1 473.8 524.1 472.4 524.4 471.6zM548.3 447.7 549.1 447.4 550.5 447.4 550.5 445.6zM561.8 440.7 562.8 441.7 555.6 448.8 554.7 447.9zM615.7 486.1 618.5 488.8 597.4 509.8 594.7 507.1zM612.1 447.7 612.9 447.4 614.3 447.4 614.3 445.6 615.3 446.5 614.3 445.6zM625.7 440.7 626.6 441.7 619.4 448.8 618.5 447.9zM653 468 652.1 467.1 644.9 474.3 645.4 473.8 647.2 473.8zM652.3 483.9 652.2 484.1 652.3 483.6 652.4 483.5 652.8 483.1 652.1 482.3 649.2 485.1 650.2 486.1 650 485.9 650.4 485.5 650.5 485.4 651 485.2 650.8 485.4zM695.8 566.1 693 563.4 673.4 583 678.9 583zM689.4 525 690.2 524.7 691.6 524.7 691.6 522.9zM703 518 703.9 519 696.8 526.1 695.8 525.2zM730.3 545.3 729.4 544.4 722.7 551.1 724.5 551.1zM729.5 561.4 729.6 560.9 729.7 560.8 730.1 560.4 729.4 559.6 726.5 562.4 727.3 563.2 727.7 562.8 727.8 562.7 728.3 562.5zM693.3 613.2 693.9 611.9 694.1 611.5 695.3 610.3 693 608.1 684.8 616.3 687 618.6 688.2 617.4 688.6 617.2 689.9 616.6zM730.3 609.2 729.4 608.2 722.7 614.9 724.5 614.9zM729.5 625.2 729.6 624.8 729.7 624.6 730.1 624.2 729.4 623.5 726.5 626.3 727.3 627.1 727.7 626.7 727.8 626.6 728.3 626.4zM703.1 651.6 703.3 651.1 703.4 651 703.8 650.6 703 649.8 700.2 652.7 700.9 653.4 701.3 653 701.5 652.9 701.9 652.8zM684.9 652.7 685.9 653.6 691.6 647.8 691.6 646zM616 690.5 616.6 689.2 616.8 688.8 618 687.6 615.7 685.4 607.5 693.6 609.7 695.9 610.9 694.7 611.3 694.5 612.6 693.9zM653 686.5 652.1 685.5 645.4 692.2 647.2 692.2zM652.2 702.5 652.3 702.1 652.4 701.9 652.8 701.5 652.1 700.8 649.2 703.6 650 704.4 650.4 704 650.5 703.9 651 703.7zM625.8 728.9 626 728.4 626.1 728.3 626.5 727.9 625.7 727.1 622.9 730 623.6 730.7 624 730.3 624.2 730.2 624.6 730.1zM607.6 730 608.6 730.9 614.3 725.1 614.3 723.3zM562.8 693.6 565.5 696.4 582.4 679.5 582.4 674zM561.9 728.9 562.1 728.4 562.2 728.3 562.6 727.9 561.8 727.1 559 730 559.8 730.7 560.2 730.3 560.3 730.2 560.8 730.1zM543.8 730 544.7 730.9 550.5 725.1 550.5 723.3zM518.4 704.5 517.4 703.6 524.6 696.4 525.5 697.4zM522.3 692.2 524.1 692.2 524.1 690.8 524.4 690zM488.2 619.1 485.5 616.3 506.5 595.3 509.2 598zM484.6 651.6 484.8 651.1 484.9 651 485.3 650.6 484.5 649.8 481.7 652.7 482.5 653.4 482.9 653 483 652.9 483.5 652.8 483.3 652.9zM466.5 652.7 467.4 653.6 473.2 647.8 473.2 646 474.1 646.9 473.2 646 473.7 645.5zM441.1 627.2 440.1 626.3 447.3 619.1 448.2 620zM445 614.9 446.8 614.9 446.8 613.5 447.1 612.7zM499.6 583 502.4 585.7 499.6 583 505.1 583 509.2 578.9 505.1 583 505.1 578.9 506 576.6zM441.1 563.4 440.1 562.4 447.3 555.3 448.2 556.2zM445 551.1 446.8 551.1 445.9 552 446.8 551.1 446.8 549.7 447.1 548.9 447.3 548.7zM471 525 471.8 524.7 473.2 524.7 473.2 522.9zM484.5 518 485.5 519 478.3 526.1 477.4 525.2z"/><path fill="#56d79f" stroke="#56d79f" stroke-width="0.5" d="M562.8 472.4 560.1 475.1 581.1 496.1 582.4 494.8 582.4 492 583.8 493.4zM520.8 474.2 523.7 477 524.5 476.2 524.4 476 521.8 473.3 522.3 473.8 521.3 473.8zM516.5 463.3 517.4 462.4 524.6 469.6 523.7 470.5zM543.8 436 542.9 437 550 444.1 551 443.2zM550.5 443.7 550.5 442.7 551 443.2zM559 436 561.8 438.9 560.9 439.8 558.1 437zM607.5 472.4 615.7 480.6 613 483.4 604.7 475.1zM607.6 436 606.7 437 613.9 444.1 614.8 443.2 614.3 443.7 614.3 442.7zM622.9 436 625.7 438.9 624.8 439.8 621.9 437zM649.2 462.4 652.1 465.2 651.1 466.2 648.3 463.3zM644 474.2 651.1 481.4 652.1 480.5 645.4 473.8 644.4 473.8zM684.8 549.7 693 557.9 690.3 560.7 682 552.4zM684.9 513.3 684 514.3 691.2 521.4 691.6 521 691.6 520zM700.2 513.3 703 516.2 702.1 517.1 699.2 514.3zM726.5 539.7 729.4 542.5 728.4 543.5 725.6 540.6zM721.3 551.5 728.4 558.7 729.4 557.8 722.7 551.1 721.7 551.1zM669.3 584.3 690.3 605.3 693 602.6 673.4 583 670.6 583zM726.5 603.6 729.4 606.4 728.4 607.3 725.6 604.5zM721.3 615.4 728.4 622.5 729.4 621.6 722.7 614.9 721.7 614.9zM703 648 702.1 648.9 694.9 641.7 695.8 640.8zM688.4 641.7 691.2 644.6 691.6 644.1 691.6 643.1 689.4 641 689.2 640.9zM615.7 679.9 613 682.6 592 661.6 594.7 658.9zM649.2 680.9 652.1 683.7 651.1 684.6 648.3 681.8zM644 692.7 651.1 699.8 652.1 698.9 645.4 692.2 644.4 692.2zM625.7 725.3 624.8 726.2 617.6 719 618.5 718.1zM611.1 719 613.9 721.9 614.3 721.4 614.3 720.4 612.1 718.3 611.9 718.2zM572.8 661.6 581.1 669.9 582.4 668.6 582.4 665.8 576 659.4 575.2 659.2zM561.8 725.3 560.9 726.2 553.7 719 554.7 718.1zM547.2 719 550 721.9 550.5 721.4 550.5 720.4 548.3 718.3 548 718.2zM520.8 692.7 523.7 695.5 524.5 694.7 524.4 694.4 522.3 692.2 521.3 692.2zM516.5 681.8 517.4 680.9 524.6 688 523.7 689zM495.5 584.3 503.8 592.6 506.5 589.9 506.2 590.2 506 589.4 498.2 581.6zM499.6 583 496.8 583 498.2 581.6zM484.5 648 483.6 648.9 476.4 641.7 477.4 640.8zM469.9 641.7 472.7 644.6 473.2 644.1 473.2 643.1 473.7 643.6 471 641 470.7 640.9zM443.5 615.4 446.4 618.2 447.2 617.4 447.1 617.1 447.3 617.3 445 614.9 444 614.9zM439.2 604.5 440.1 603.6 447.3 610.7 446.4 611.7zM482.8 552.4 485.5 549.7 506.5 570.7 503.8 573.4zM443.5 551.5 446.4 554.3 447.3 553.4 447.2 553.5 447.1 553.3 444.5 550.6 445 551.1 444 551.1zM439.2 540.6 440.1 539.7 447.3 546.9 446.4 547.8zM466.5 513.3 465.6 514.3 472.7 521.4 473.2 521 473.2 520zM481.7 513.3 484.5 516.2 483.6 517.1 480.8 514.3z"/><path fill="#4bc591" stroke="#4bc591" stroke-width="0.5" d="M565.5 469.6 562.8 472.4 583.8 493.4 582.4 492 582.4 486.5zM524.4 476 524.1 475.2 524.1 473.8 522.3 473.8zM517.4 462.4 518.4 461.5 525.5 468.6 524.6 469.6zM544.7 435.1 543.8 436 551 443.2 550.5 442.7 551.4 441.8 551.9 442.3zM550.5 442.7 550.5 440.9 551.4 441.8zM560.8 435.9 560.3 435.8 560.2 435.7 559.8 435.3 559 436 561.8 438.9 562.8 437.9 562.6 438.1 562.2 437.7 562.1 437.6 561.9 437.1zM610.9 470.4 612.1 471.5 612.6 472.1 611.3 471.5 610.9 471.3 609.7 470.1 607.5 472.4 615.7 480.6 618 478.4 616.8 477.2 616.6 476.8 616 475.5zM608.6 435.1 607.6 436 614.3 442.7 614.3 440.9 615.3 441.8 615.7 442.3zM624.6 435.9 624.2 435.8 624 435.7 623.6 435.3 622.9 436 625.7 438.9 626.5 438.1 626.1 437.7 626 437.6 625.8 437.1zM650.8 462.1 651 462.3 650.5 462.1 650.4 462 650 461.6 649.2 462.4 652.1 465.2 653 464.3 652.8 464.5 652.4 464.1 652.3 463.9 652.2 463.5zM652.1 480.5 653 479.5 647.2 473.8 645.4 473.8 646.3 472.8 645.4 473.8 644.9 473.3zM689.9 549.4 688.6 548.8 688.2 548.6 687 547.4 684.8 549.7 693 557.9 695.3 555.7 694.1 554.5 693.9 554.1 693.3 552.8zM685.9 512.4 684.9 513.3 691.6 520 691.6 518.2zM701.9 513.2 701.5 513.1 701.3 513 700.9 512.6 700.2 513.3 703 516.2 703.8 515.4 703.4 515 703.3 514.9 703.1 514.4zM728.3 539.6 727.8 539.4 727.7 539.3 727.3 538.9 726.5 539.7 729.4 542.5 730.1 541.8 729.7 541.4 729.6 541.2 729.5 540.8zM729.4 557.8 730.3 556.8 724.5 551.1 722.7 551.1zM693 602.6 695.8 599.9 678.9 583 673.4 583zM728.3 603.5 727.8 603.3 727.7 603.2 727.3 602.8 726.5 603.6 729.4 606.4 730.1 605.6 729.7 605.2 729.6 605.1 729.5 604.6zM729.4 621.6 730.3 620.7 724.5 614.9 722.7 614.9zM703.9 647 703 648 695.8 640.8 696.8 639.9zM691.6 643.1 691.6 641.3 690.2 641.3 689.4 641zM618.5 677.2 615.7 679.9 594.7 658.9 597.4 656.2zM651 680.8 650.5 680.6 650.4 680.5 650 680.1 649.2 680.9 652.1 683.7 652.8 682.9 652.4 682.5 652.3 682.4 652.2 681.9zM652.1 698.9 653 698 647.2 692.2 645.4 692.2zM626.6 724.3 625.7 725.3 618.5 718.1 619.4 717.2zM614.3 720.4 614.3 718.6 612.9 718.6 612.1 718.3zM582.4 665.8 582.4 660.3 578.3 660.3 576 659.4zM562.8 724.3 561.8 725.3 554.7 718.1 555.6 717.2zM550.5 720.4 550.5 718.6 549.1 718.6 548.3 718.3zM524.4 694.4 524.1 693.6 524.1 692.2 522.3 692.2zM517.4 680.9 518.4 679.9 525.5 687.1 524.6 688zM506.5 589.9 506 589.4 505.1 587.1 505.1 583 503.7 581.6 505.1 583 499.6 583 498.2 581.6zM485.5 647 484.5 648 477.4 640.8 478.3 639.9zM473.2 643.1 473.2 641.3 471.8 641.3 471 641zM447.3 617.3 447.1 617.1 446.8 616.3 446.8 614.9 445 614.9 444.5 614.4zM440.1 603.6 441.1 602.6 448.2 609.8 447.3 610.7zM485.5 549.7 488.2 546.9 509.2 568 506.5 570.7zM447.1 553.3 446.8 552.5 446.8 551.1 445 551.1 445.9 550.1 445 551.1zM440.1 539.7 441.1 538.8 448.2 546 447.3 546.9zM467.4 512.4 466.5 513.3 473.2 520 473.2 518.2zM483.5 513.2 483 513.1 482.9 513 482.5 512.6 481.7 513.3 484.5 516.2 485.3 515.4 484.9 515 484.8 514.9 484.6 514.4z"/><path fill="#56d69f" stroke="#56d69f" stroke-width="0.5" d="M551.8 483.4 549.1 486.1 549.1 480.6zM549.1 486.1 546.3 483.4 549.1 480.6zM513.7 481.4 512.7 480.5 512.7 482.3zM512.7 480.5 511.8 481.4 512.7 482.3zM513.7 466.2 512.7 467.1 512.7 465.2zM512.7 467.1 511.8 466.2 512.7 465.2zM540 439.8 539.1 440.7 539.1 438.9zM539.1 440.7 538.2 439.8 539.1 438.9zM550.5 443.7 550.5 444.6 550 444.1 550.5 444.6 550.9 444.1zM582.4 494.8 581.1 496.1 582.4 494.8 582.4 497.4 581 498.8 583.7 496.1zM603.9 439.8 603 440.7 603 438.9zM603 440.7 602 439.8 603 438.9zM613.8 443.2 614.3 443.7 614.3 444.6 614.8 444.1zM640.2 469.6 640.2 470 640.3 470.4 640.3 471.3 641.1 470.5zM640.2 478 641.1 477 640.3 476.2 640.3 477.2 640.2 477.6zM658.3 570.7 658.3 571.8 658.6 573 658.6 575.8 661 573.4zM657.8 571.1 658.2 571.5 658.3 571.8 658.3 570.7zM681.2 517.1 680.3 518 680.3 516.2zM680.3 518 679.3 517.1 680.3 516.2zM691.6 521 691.6 521.9 692.1 521.4zM717.5 546.9 717.5 547.3 717.6 547.7 717.6 548.6 718.4 547.8zM717.5 555.3 718.4 554.3 717.6 553.5 717.6 554.5 717.5 554.9zM658.3 595.3 661 592.6 658.6 590.2 658.6 593 658.3 594.2zM658.3 595.3 658.3 594.2 658.2 594.5 657.8 594.9zM717.5 610.7 717.5 611.1 717.6 611.5 717.6 612.5 718.4 611.7zM717.5 619.1 718.4 618.2 717.6 617.4 717.6 618.3 717.5 618.7zM692.1 644.6 691.6 644.1 691.6 645zM681.2 648.9 680.3 648 680.3 649.8zM680.3 648 679.3 648.9 680.3 649.8zM583.7 669.9 582.4 668.6 582.4 671.2zM640.2 688 640.2 688.4 640.3 688.8 640.3 689.8 641.1 689zM640.2 696.4 641.1 695.5 640.3 694.7 640.3 695.6 640.2 696zM614.8 721.9 614.3 721.4 614.3 722.3zM603.9 726.2 603 725.3 603 727.1zM603 725.3 602 726.2 603 727.1zM551.8 682.6 549.1 679.9 549.1 685.4zM549.1 679.9 546.3 682.6 549.1 685.4zM550.9 721.9 550.5 721.4 550.5 722.3zM540 726.2 539.1 725.3 539.1 727.1zM539.1 725.3 538.2 726.2 539.1 727.1zM513.7 699.8 512.7 698.9 512.7 700.8zM512.7 698.9 511.8 699.8 512.7 700.8zM513.7 684.6 512.7 685.5 512.7 683.7zM512.7 685.5 511.8 684.6 512.7 683.7zM474.5 605.3 471.8 602.6 471.8 608.1zM471.8 602.6 469 605.3 471.8 608.1zM473.6 644.6 473.2 644.1 473.2 645zM462.7 648.9 461.8 648 461.8 649.8zM461.8 648 460.9 648.9 461.8 649.8zM436.4 622.5 435.4 621.6 435.4 623.5zM435.4 621.6 434.5 622.5 435.4 623.5zM436.4 607.3 435.4 608.2 435.4 606.4zM435.4 608.2 434.5 607.3 435.4 606.4zM474.5 560.7 471.8 563.4 471.8 557.9zM471.8 563.4 469 560.7 471.8 557.9zM436.4 558.7 435.4 557.8 435.4 559.6zM435.4 557.8 434.5 558.7 435.4 559.6zM436.4 543.5 435.4 544.4 435.4 542.5zM435.4 544.4 434.5 543.5 435.4 542.5zM462.7 517.1 461.8 518 461.8 516.2zM461.8 518 460.9 517.1 461.8 516.2zM472.7 520.5 473.2 521 472.7 521.4 473.2 521.9 473.6 521.4zM473.2 521 473.2 521.9 472.7 521.4z"/><path fill="#3dad7e" stroke="#3dad7e" stroke-width="0.5" d="M549.1 486.1 546.3 488.8 546.3 483.4zM511.8 481.4 511.8 482.8 511.9 482.9 512 483.1 512.7 482.3zM512.7 467.1 511.8 468 511.8 466.2zM539.1 440.7 538.2 441.7 538.2 439.8zM603 440.7 602 441.7 602 439.8zM639.3 478.9 640.2 478 640.1 477.8 639.3 478.6zM680.3 518 679.3 519 679.3 517.1zM716.6 556.2 717.5 555.3 717.4 555.1 716.6 555.9zM655.6 598 658.3 595.3 657.8 594.9 655.6 597.1zM716.6 620 717.5 619.1 717.4 619 716.6 619.7zM679.3 648.9 679.3 650.3 679.4 650.4 679.5 650.6 680.3 649.8zM639.3 697.4 640.2 696.4 640.1 696.3 639.3 697zM602 726.2 602 727.6 602.1 727.7 602.2 727.9 603 727.1zM546.3 682.6 546.3 686.9 546.4 687 546.8 687.6 546.3 688.1 549.1 685.4zM538.2 726.2 538.2 727.6 538.2 727.7 538.3 727.9 539.1 727.1zM511.8 699.8 511.8 701.3 511.9 701.3 512 701.5 511.8 701.7 512.7 700.8zM512.7 685.5 511.8 686.5 511.8 684.6zM469 605.3 469 609.6 469.1 609.7 469.5 610.3 469 610.8 471.8 608.1zM460.9 648.9 460.9 650.3 460.9 650.4 461 650.6 461.8 649.8zM434.5 622.5 434.5 624 434.7 624.2 434.5 624.4 435.4 623.5zM435.4 608.2 434.5 609.2 434.5 607.3zM471.8 563.4 469 566.1 469 560.7zM434.5 558.7 434.5 560.1 434.5 560.2 434.7 560.4 435.4 559.6zM435.4 544.4 434.5 545.3 434.5 543.5zM461.8 518 460.9 519 460.9 517.1z"/><path fill="#5bdfa6" stroke="#5bdfa6" stroke-width="0.5" d="M546.3 483.4 549.1 480.6 546.3 477.9 546.8 478.4 546.4 479 546.3 479.1 546.4 479 546.3 479.1zM512.7 480.5 511.8 479.5 511.8 481.4zM511.8 466.2 512.7 465.2 511.8 464.3 512 464.5 511.9 464.7 511.8 464.7zM538.2 439.8 539.1 438.9 538.3 438.1 538.2 438.3 538.2 438.4zM602 439.8 603 438.9 602.2 438.1 602.1 438.3 602 438.4zM639.3 468.6 639.3 469 640.1 469.7 640.2 469.6zM655.6 568 655.6 568.9 657.8 571.1 658.3 570.7zM679.3 517.1 680.3 516.2 679.5 515.4 679.4 515.6 679.3 515.7zM716.6 546 716.6 546.3 717.4 547 717.5 546.9zM716.6 609.8 716.6 610.1 717.4 610.9 717.5 610.7zM680.3 648 679.3 647 679.3 648.9zM639.3 687.1 639.3 687.4 640.1 688.2 640.2 688zM603 725.3 602 724.3 602 726.2zM549.1 679.9 546.3 677.2 546.3 682.6zM539.1 725.3 538.2 724.3 538.2 726.2zM512.7 698.9 511.8 698 511.8 699.8zM511.8 684.6 512.7 683.7 511.8 682.7 512 682.9 511.9 683.1 511.8 683.2zM471.8 602.6 469 599.9 469 605.3zM461.8 648 460.9 647 460.9 648.9zM435.4 621.6 434.5 620.7 434.5 622.5zM434.5 607.3 435.4 606.4 434.7 605.6 434.5 605.8 434.5 605.9zM469 560.7 471.8 557.9 469.5 555.7 469.1 556.3 469 556.4zM435.4 557.8 434.5 556.8 434.5 558.7zM434.5 543.5 435.4 542.5 434.7 541.8 434.5 542zM460.9 517.1 461.8 516.2 461 515.4 460.9 515.6 460.9 515.7z"/><path fill="#65f0b4" stroke="#65f0b4" stroke-width="0.5" d="M560.1 475.1 562.8 472.4 557.3 472.4zM562.8 472.4 560.1 469.6 557.3 472.4zM520.8 474.2 521.3 473.8 520.4 473.8 520.8 473.3 520.4 473.8zM516.5 463.3 517.4 462.4 515.6 462.4zM517.4 462.4 516.5 461.5 515.6 462.4zM542.9 437 543.8 436 541.9 436zM543.8 436 542.9 435.1 541.9 436zM558.1 437 557.2 436 559 436zM557.2 436 558.1 435.1 559 436zM604.7 475.1 602 472.4 607.5 472.4zM602 472.4 604.7 469.6 607.5 472.4zM606.7 437 607.6 436 605.8 436zM607.6 436 606.7 435.1 605.8 436zM621.9 437 621 436 622.9 436zM621 436 621.9 435.1 622.9 436zM648.3 463.3 647.4 462.4 649.2 462.4zM647.4 462.4 648.3 461.5 649.2 462.4zM644.4 473.8 643.5 473.8 644 473.3 643.5 473.8 644 474.2zM682 552.4 679.3 549.7 684.8 549.7zM679.3 549.7 682 546.9 684.8 549.7zM684 514.3 684.9 513.3 683.1 513.3zM684.9 513.3 684 512.4 683.1 513.3zM699.2 514.3 698.3 513.3 700.2 513.3zM698.3 513.3 699.2 512.4 700.2 513.3zM725.6 540.6 724.7 539.7 726.5 539.7zM724.7 539.7 725.6 538.8 726.5 539.7zM721.7 551.1 720.8 551.1 721.3 551.5zM670.6 583 668 583 669.3 584.3zM725.6 604.5 724.7 603.6 726.5 603.6zM724.7 603.6 725.6 602.6 726.5 603.6zM721.7 614.9 720.8 614.9 721.3 615.4zM695.8 640.8 695.4 640.8 695 640.9 694.1 640.9 694.9 641.7zM687.4 640.8 688.4 641.7 689.2 640.9 688.2 640.9 687.8 640.8zM594.7 658.9 593.6 658.9 592.4 659.2 589.6 659.2 592 661.6zM594.3 658.4 593.9 658.8 593.6 658.9 594.7 658.9zM648.3 681.8 647.4 680.9 649.2 680.9zM647.4 680.9 648.3 679.9 649.2 680.9zM644.4 692.2 643.5 692.2 644 692.7zM618.5 718.1 618.1 718.1 617.7 718.2 616.8 718.2 617.6 719zM610.1 718.1 611.1 719 611.9 718.2 610.9 718.2 610.5 718.1zM570.1 658.9 572.8 661.6 575.2 659.2 572.4 659.2 571.2 658.9zM570.1 658.9 571.2 658.9 570.9 658.8 570.5 658.4zM554.7 718.1 554.3 718.1 553.9 718.2 552.9 718.2 553.7 719zM546.3 718.1 547.2 719 548 718.2 547.1 718.2 546.7 718.1zM520.8 692.7 521.3 692.2 520.4 692.2zM516.5 681.8 517.4 680.9 515.6 680.9zM517.4 680.9 516.5 679.9 515.6 680.9zM495.5 584.3 498.2 581.6 496.8 583 494.2 583 495.5 581.7 494.2 583 492.8 581.6zM477.4 640.8 477 640.8 476.6 640.9 475.6 640.9 476.4 641.7zM469 640.8 469.9 641.7 470.7 640.9 469.8 640.9 469.4 640.8zM443.5 615.4 444 614.9 443.1 614.9zM439.2 604.5 440.1 603.6 438.3 603.6zM440.1 603.6 439.2 602.6 438.3 603.6zM482.8 552.4 485.5 549.7 480 549.7zM485.5 549.7 482.8 546.9 480 549.7zM443.5 551.5 444 551.1 443.1 551.1 443.5 550.6 443.1 551.1zM439.2 540.6 440.1 539.7 438.3 539.7zM440.1 539.7 439.2 538.8 438.3 539.7zM465.6 514.3 466.5 513.3 464.6 513.3zM466.5 513.3 465.6 512.4 464.6 513.3zM480.8 514.3 479.9 513.3 481.7 513.3zM479.9 513.3 480.8 512.4 481.7 513.3z"/><path fill="#2b9066" stroke="#2b9066" stroke-width="0.5" d="M570.1 507.1 571.2 507.1 572.4 506.8 575.2 506.8 572.8 504.4zM570.5 507.6 570.9 507.2 571.2 507.1 570.1 507.1zM516.5 484.2 517.4 485.1 515.6 485.1zM517.4 485.1 516.5 486.1 515.6 485.1zM520.4 473.8 521.3 473.8 520.8 474.2 521.3 473.8 520.8 473.3zM546.3 447.9 546.7 447.9 547.1 447.8 548 447.8 547.2 447zM554.7 447.9 553.7 447 552.9 447.8 553.9 447.8 554.3 447.9zM594.7 507.1 592 504.4 589.6 506.8 592.4 506.8 593.6 507.1zM594.7 507.1 593.6 507.1 593.9 507.2 594.3 507.6zM610.1 447.9 610.5 447.9 610.9 447.8 611.9 447.8 611.1 447zM618.5 447.9 617.6 447 616.8 447.8 617.7 447.8 618.1 447.9zM644 473.3 643.5 473.8 644 474.2 644.4 473.8 644.9 474.3zM643.5 473.8 644.4 473.8 644 474.2zM648.3 484.2 647.4 485.1 649.2 485.1zM647.4 485.1 648.3 486.1 649.2 485.1zM669.3 581.7 668 583 670.6 583zM687.4 525.2 687.8 525.2 688.2 525.1 689.2 525.1 688.4 524.3zM695.8 525.2 694.9 524.3 694.1 525.1 695 525.1 695.4 525.2zM721.3 550.6 720.8 551.1 721.7 551.1zM725.6 561.5 724.7 562.4 726.5 562.4zM724.7 562.4 725.6 563.4 726.5 562.4zM682 613.6 679.3 616.3 684.8 616.3zM679.3 616.3 682 619.1 684.8 616.3zM721.3 614.5 720.8 614.9 721.7 614.9zM725.6 625.4 724.7 626.3 726.5 626.3zM724.7 626.3 725.6 627.2 726.5 626.3zM699.2 651.7 698.3 652.7 700.2 652.7zM698.3 652.7 699.2 653.6 700.2 652.7zM684 651.7 684.9 652.7 683.1 652.7zM684.9 652.7 684 653.6 683.1 652.7zM604.7 690.9 602 693.6 607.5 693.6zM602 693.6 604.7 696.4 607.5 693.6zM644 691.8 643.5 692.2 644.4 692.2zM648.3 702.7 647.4 703.6 649.2 703.6zM647.4 703.6 648.3 704.5 649.2 703.6zM621.9 729 621 730 622.9 730zM621 730 621.9 730.9 622.9 730zM606.7 729 607.6 730 605.8 730zM607.6 730 606.7 730.9 605.8 730zM560.1 690.9 562.8 693.6 557.3 693.6zM562.8 693.6 560.1 696.4 557.3 693.6zM558.1 729 557.2 730 559 730zM557.2 730 558.1 730.9 559 730zM542.9 729 543.8 730 541.9 730zM543.8 730 542.9 730.9 541.9 730zM516.5 702.7 517.4 703.6 515.6 703.6zM517.4 703.6 516.5 704.5 515.6 703.6zM520.4 692.2 521.3 692.2 520.8 691.8zM482.8 613.6 485.5 616.3 480 616.3zM485.5 616.3 482.8 619.1 480 616.3zM480.8 651.7 479.9 652.7 481.7 652.7zM479.9 652.7 480.8 653.6 481.7 652.7zM465.6 651.7 466.5 652.7 464.6 652.7zM466.5 652.7 465.6 653.6 464.6 652.7zM439.2 625.4 440.1 626.3 438.3 626.3zM440.1 626.3 439.2 627.2 438.3 626.3zM443.1 614.9 443.5 615.4 443.1 614.9 444 614.9 443.5 614.5zM494.2 583 496.8 583 495.5 581.7zM439.2 561.5 440.1 562.4 438.3 562.4zM440.1 562.4 439.2 563.4 438.3 562.4zM442.6 551.6 443.1 551.1 444 551.1 443.5 551.5 444 551.1 443.5 550.6zM469 525.2 469.4 525.2 469.8 525.1 470.7 525.1 469.9 524.3zM477.4 525.2 476.4 524.3 475.6 525.1 476.6 525.1 477 525.2z"/><path fill="#1f7b56" stroke="#1f7b56" stroke-width="0.5" d="M567.4 509.8 568.3 509.8 570.5 507.6 572.4 509.4 572.8 509.8 570.1 507.1zM516.5 486.1 515.6 485.1 514.6 486.1 514.8 485.9 515 486 515 486.1 515 486 515.1 486.1zM545.4 448.8 545.7 448.8 546.4 448 546.3 447.9zM609.2 448.8 609.5 448.8 610.3 448 610.1 447.9zM647.4 485.1 646.4 486.1 648.3 486.1zM686.5 526.1 686.8 526.1 687.6 525.3 687.4 525.2zM724.7 562.4 723.7 563.4 725.6 563.4zM679.3 616.3 676.6 619.1 682 619.1zM724.7 626.3 723.7 627.2 725.6 627.2zM698.3 652.7 697.4 653.6 699.2 653.6zM684 653.6 683.1 652.7 682.3 653.4 682.5 653.5 682.6 653.6zM602 693.6 599.3 696.4 604.7 696.4zM647.4 703.6 646.4 704.5 648.3 704.5zM621 730 620.1 730.9 621.9 730.9zM606.7 730.9 605.8 730 605 730.7 605.2 730.9 605.3 730.9zM560.1 696.4 557.3 693.6 555.1 695.9 555.7 696.3 555.8 696.4zM557.2 730 556.2 730.9 558.1 730.9zM542.9 730.9 541.9 730 541.2 730.7 541.4 730.9zM516.5 704.5 515.6 703.6 514.8 704.4 515 704.5 515.1 704.5zM482.8 619.1 480 616.3 477.3 619.1 477.8 618.6 478.4 619 478.5 619.1zM479.9 652.7 478.9 653.6 480.8 653.6zM465.6 653.6 464.6 652.7 463.7 653.6 463.9 653.4 464.1 653.5 464.1 653.6zM439.2 627.2 438.3 626.3 437.3 627.2 437.5 627.1 437.7 627.2 437.8 627.2zM439.2 563.4 438.3 562.4 437.3 563.4 437.5 563.2 437.7 563.3 437.7 563.4 437.7 563.3 437.8 563.4zM468 526.1 468.4 526.1 469.1 525.3 469 525.2z"/><path fill="#3ba97b" stroke="#3ba97b" stroke-width="0.5" d="M581.1 496.1 583.8 498.8 582.4 497.4 582.4 494.8 583.8 493.4zM524.6 478 524.6 477.6 524.5 477.2 524.5 476.2 523.7 477zM524.6 469.6 523.7 470.5 524.5 471.3 524.5 470.4 524.6 470zM550 444.1 551 445.1 550.5 444.6 550.5 443.7 551 443.2zM560.9 439.8 561.8 440.7 561.8 438.9zM561.8 440.7 562.8 439.8 561.8 438.9zM613 483.4 615.7 486.1 615.7 480.6zM615.7 486.1 618.5 483.4 615.7 480.6zM613.9 444.1 614.3 444.6 614.3 443.7 614.8 443.2zM624.8 439.8 625.7 440.7 625.7 438.9zM625.7 440.7 626.6 439.8 625.7 438.9zM651.1 466.2 652.1 467.1 652.1 465.2zM652.1 467.1 653 466.2 652.1 465.2zM651.1 481.4 652.1 480.5 652.1 482.3zM652.1 480.5 653 481.4 652.1 482.3zM690.3 560.7 693 563.4 693 557.9zM693 563.4 695.8 560.7 693 557.9zM691.2 521.4 691.6 521.9 691.6 521zM702.1 517.1 703 518 703 516.2zM703 518 703.9 517.1 703 516.2zM728.4 543.5 729.4 544.4 729.4 542.5zM729.4 544.4 730.3 543.5 729.4 542.5zM728.4 558.7 729.4 557.8 729.4 559.6zM729.4 557.8 730.3 558.7 729.4 559.6zM690.3 605.3 693 602.6 693 608.1zM693 602.6 695.8 605.3 693 608.1zM728.4 607.3 729.4 608.2 729.4 606.4zM729.4 608.2 730.3 607.3 729.4 606.4zM728.4 622.5 729.4 621.6 729.4 623.5zM729.4 621.6 730.3 622.5 729.4 623.5zM702.1 648.9 703 648 703 649.8zM703 648 703.9 648.9 703 649.8zM691.6 645 691.6 644.1 691.2 644.6zM613 682.6 615.7 679.9 615.7 685.4zM615.7 679.9 618.5 682.6 615.7 685.4zM651.1 684.6 652.1 685.5 652.1 683.7zM652.1 685.5 653 684.6 652.1 683.7zM651.1 699.8 652.1 698.9 652.1 700.8zM652.1 698.9 653 699.8 652.1 700.8zM624.8 726.2 625.7 725.3 625.7 727.1zM625.7 725.3 626.6 726.2 625.7 727.1zM614.3 722.3 614.3 721.4 613.9 721.9zM582.4 671.2 582.4 668.6 581.1 669.9zM560.9 726.2 561.8 725.3 561.8 727.1zM561.8 725.3 562.8 726.2 561.8 727.1zM550.5 722.3 550.5 721.4 550 721.9zM524.6 696.4 524.6 696 524.5 695.6 524.5 694.7 523.7 695.5zM524.6 688 523.7 689 524.5 689.8 524.5 688.8 524.6 688.4zM506.5 595.3 506.5 594.2 506.2 593 506.2 590.2 503.8 592.6zM507 594.9 506.6 594.5 506.5 594.2 506.5 595.3zM483.6 648.9 484.5 648 484.5 649.8zM484.5 648 485.5 648.9 484.5 649.8zM473.2 645 473.2 644.1 473.6 644.6 473.2 644.1 472.7 644.6zM447.3 619.1 447.3 618.7 447.2 618.3 447.2 617.4 446.4 618.2zM447.3 610.7 446.4 611.7 447.2 612.5 447.2 611.5 447.3 611.1zM506.5 570.7 503.8 573.4 506.5 576.1 506.2 575.8 506.2 573 506.5 571.8zM506.5 570.7 506.5 571.8 506.6 571.5 507 571.1zM447.3 555.3 447.3 554.9 447.2 554.5 447.2 553.5 447.3 553.4 446.4 554.3zM447.3 546.9 446.4 547.8 447.2 548.6 447.2 547.7 447.3 547.3zM472.7 521.4 473.2 521.9 473.6 521.4 473.2 521zM473.2 521.9 473.2 521 473.6 521.4zM483.6 517.1 484.5 518 484.5 516.2zM484.5 518 485.5 517.1 484.5 516.2z"/><path fill="#1f7b55" stroke="#1f7b55" stroke-width="0.5" d="M528.6 479.4 528.6 481.7 526.4 479.4zM512.1 492.9 511.3 492.9 512.1 493.7zM505.8 486.6 505.8 487.4 505 486.6zM505.8 464.8 505.8 465.6 505 464.8zM532.1 438.5 532.1 439.2 531.4 438.5zM562.9 439.2 562.9 438.5 562.8 438.5 562.8 439.1zM596 438.5 596 439.2 595.2 438.5zM626.7 439.2 626.7 438.5 626.6 438.5 626.6 439.1zM618.8 481.7 618.8 479.4 618.5 479.4 618.5 481.3zM653.1 465.6 653.1 464.8 653 464.8 653 465.5zM650.4 492.9 649.6 492.9 650.4 493.7zM673.3 515.8 673.3 516.5 672.5 515.8zM704 516.5 704 515.8 703.9 515.8 703.9 516.4zM696.1 559 696.1 556.7 695.8 556.7 695.8 558.6zM730.4 542.9 730.4 542.1 730.3 542.1 730.3 542.8zM727.7 570.2 726.9 570.2 727.7 571zM730.4 606.7 730.4 606 730.3 606 730.3 606.6zM727.7 634 726.9 634 727.7 634.8zM686 639 687.7 640.8 687.8 640.8 688.2 640.9 688.2 639zM701.3 660.4 700.6 660.4 701.3 661.2zM679.6 660.4 678.8 660.4 679.6 661.2zM673.3 654.1 673.3 654.9 672.5 654.1zM565.8 653.7 570.9 658.8 571.2 658.9 572.4 659.2 572.4 653.7zM653.1 684 653.1 683.3 653 683.3 653 683.9zM650.4 711.3 649.6 711.3 650.4 712.1zM608.7 716.3 610.4 718.1 610.5 718.1 610.9 718.2 610.9 716.3zM624 737.7 623.3 737.7 624 738.5zM602.3 737.7 601.5 737.7 602.3 738.5zM596 731.4 596 732.2 595.2 731.4zM544.8 716.3 546.6 718.1 546.7 718.1 547.1 718.2 547.1 716.3zM560.2 737.7 559.4 737.7 560.2 738.5zM538.4 737.7 537.7 737.7 538.4 738.5zM532.1 731.4 532.1 732.2 531.4 731.4zM528.6 697.9 528.6 700.1 526.4 697.9zM512.1 711.3 511.3 711.3 512.1 712.1zM505.8 705 505.8 705.8 505 705zM505.8 683.3 505.8 684 505 683.3zM518.3 599.6 518.3 606.2 511.7 599.6zM467.5 639 469.3 640.8 469.4 640.8 469.8 640.9 469.8 639zM482.9 660.4 482.1 660.4 482.9 661.2zM461.1 660.4 460.4 660.4 461.1 661.2zM454.8 654.1 454.8 654.9 454.1 654.1zM451.3 620.6 451.3 622.8 449.1 620.6zM434.8 634 434 634 434.8 634.8zM428.5 627.7 428.5 628.5 427.7 627.7zM428.5 606 428.5 606.7 427.7 606zM451.3 556.7 451.3 559 449.1 556.7zM434.8 570.2 434 570.2 434.8 571zM428.5 563.9 428.5 564.7 427.7 563.9zM428.5 542.1 428.5 542.9 427.7 542.1zM454.8 515.8 454.8 516.5 454.1 515.8zM485.6 516.5 485.6 515.8 485.5 515.8 485.5 516.4 484.9 515.8 484.8 515.8z"/><path fill="#3eae7f" stroke="#3eae7f" stroke-width="0.5" d="M526.4 479.4 526.4 477.2 524.5 477.2 524.6 477.6 524.6 477.7zM511.3 492.1 510.5 492.1 511.3 492.9zM505 485.8 505 486.6 504.2 485.8zM505 464.1 505 464.8 504.2 464.1zM531.4 437.7 531.4 438.5 530.6 437.7zM558.7 435 559.4 435.8 559.4 435.7 558.8 435.1 559.4 435.1 559.4 435zM606.4 469.3 606.8 469.6 608.7 469.6 608.7 469.3zM595.2 437.7 595.2 438.5 594.4 437.7zM622.5 435 623.3 435.8 623.2 435.7 622.6 435.1 623.3 435.1 623.3 435zM648.9 461.4 649.6 462.1 649 461.5 649.6 461.5 649.6 461.4zM649.6 492.1 648.9 492.1 649.6 492.9zM683.7 546.6 684.1 546.9 686 546.9 686 546.6zM672.5 515 672.5 515.8 671.7 515zM699.8 512.3 699.9 512.4 700.6 512.4 700.6 512.3zM726.2 538.7 726.3 538.8 726.9 538.8 726.9 538.7zM726.9 569.4 726.2 569.4 726.9 570.2zM726.2 602.5 726.3 602.6 726.9 602.6 726.9 602.5zM726.9 633.3 726.2 633.3 726.9 634zM686 636.8 683.7 636.8 686 639zM700.6 659.6 699.8 659.6 700.6 660.4zM678.8 659.6 678 659.6 678.8 660.4zM672.5 653.3 672.5 654.1 671.7 653.3zM565.8 647.1 559.2 647.1 565.8 653.7zM648.9 679.8 649 679.9 649.6 679.9 649.6 679.8zM649.6 710.6 648.9 710.6 649.6 711.3zM608.7 714.1 606.4 714.1 608.7 716.3zM623.3 736.9 622.5 736.9 623.3 737.7zM601.5 736.9 600.7 736.9 601.5 737.7zM595.2 730.6 595.2 731.4 594.4 730.6zM544.8 714.1 542.6 714.1 544.8 716.3zM559.4 736.9 558.7 736.9 559.4 737.7zM537.7 736.9 536.9 736.9 537.7 737.7zM531.4 730.6 531.4 731.4 530.6 730.6zM526.4 697.9 526.4 695.6 524.5 695.6 524.6 696 524.6 696.1zM511.3 710.6 510.5 710.6 511.3 711.3zM505 704.3 505 705 504.2 704.3zM505 682.5 505 683.3 504.2 682.5zM511.7 599.6 511.7 593 506.2 593 506.5 594.2 506.6 594.5zM467.5 636.8 465.3 636.8 467.5 639zM482.1 659.6 481.4 659.6 482.1 660.4zM460.4 659.6 459.6 659.6 460.4 660.4zM454.1 653.3 454.1 654.1 453.3 653.3zM449.1 620.6 449.1 618.3 447.2 618.3 447.3 618.7 447.3 618.8zM434 633.3 433.2 633.3 434 634zM427.7 627 427.7 627.7 426.9 627zM427.7 605.2 427.7 606 426.9 605.2zM449.1 556.7 449.1 554.5 447.2 554.5 447.3 554.9 447.3 555zM434 569.4 433.2 569.4 434 570.2zM427.7 563.1 427.7 563.9 426.9 563.1zM427.7 541.4 427.7 542.1 426.9 541.4zM454.1 515 454.1 515.8 453.3 515zM481.4 512.3 482.1 513.1 482.1 513 481.5 512.4 482.1 512.4 482.1 512.3z"/><path fill="#116443" stroke="#116443" stroke-width="0.5" d="M546 481.7 546.3 481.3 546.3 479.4 546 479.4zM517.4 485.1 518.4 486.1 516.5 486.1zM514.4 492.9 515.2 492.9 514.4 493.7zM511.7 465.6 511.8 465.5 511.8 464.8 511.7 464.8zM538.1 439.2 538.2 439.1 538.2 438.5 538.1 438.5zM555.6 448.8 554.7 447.9 554.5 448 555.3 448.8zM568.8 438.5 568.8 439.2 569.6 438.5zM597.4 509.8 594.7 507.1 592 509.8 592.4 509.4 594.3 507.6 596.5 509.8zM601.9 439.2 602 439.1 602 438.5 601.9 438.5zM619.4 448.8 618.5 447.9 618.4 448 619.1 448.8zM632.7 438.5 632.7 439.2 633.4 438.5zM636.2 479.4 636.2 481.7 638.4 479.4zM659 464.8 659 465.6 659.8 464.8zM648.3 486.1 649.7 486.1 649.8 486 650 485.9 649.2 485.1zM659 486.6 659 487.4 659.8 486.6zM652.7 492.9 653.5 492.9 652.7 493.7zM646.5 599.6 646.5 606.2 653.1 599.6zM679.2 516.5 679.3 516.4 679.3 515.8 679.2 515.8zM696.8 526.1 695.8 525.2 695.7 525.3 696.4 526.1zM710 515.8 710 516.5 710.7 515.8zM713.5 556.7 713.5 559 715.7 556.7zM736.3 542.1 736.3 542.9 737.1 542.1zM725.6 563.4 727 563.4 727.1 563.3 727.3 563.2 726.5 562.4zM736.3 563.9 736.3 564.7 737.1 563.9zM730 570.2 730.8 570.2 730 571zM682 619.1 686.3 619.1 686.4 619 687 618.6 684.8 616.3zM713.5 620.6 713.5 622.8 715.7 620.6zM736.3 606 736.3 606.7 737.1 606zM725.6 627.2 727 627.2 727.1 627.2 727.3 627.1 726.5 626.3zM736.3 627.7 736.3 628.5 737.1 627.7zM730 634 730.8 634 730 634.8zM697.3 639 695 639 695 640.9 695.4 640.8 695.5 640.8zM699.2 653.6 700.7 653.6 700.7 653.5 700.7 653.6 700.7 653.5 700.9 653.4 700.2 652.7zM710 654.1 710 654.9 710.7 654.1zM703.7 660.4 704.4 660.4 703.7 661.2zM684.9 652.7 685.9 653.6 684 653.6zM681.9 660.4 682.7 660.4 681.9 661.2zM599 653.7 592.4 653.7 592.4 659.2 593.6 658.9 593.9 658.8zM604.7 696.4 609 696.4 609.1 696.3 609.7 695.9 607.5 693.6zM636.2 697.9 636.2 700.1 638.4 697.9zM659 683.3 659 684 659.8 683.3zM648.3 704.5 649.7 704.5 649.8 704.5 650 704.4 649.2 703.6zM659 705 659 705.8 659.8 705zM652.7 711.3 653.5 711.3 652.7 712.1zM620 716.3 617.7 716.3 617.7 718.2 618.1 718.1 618.2 718.1zM621.9 730.9 623.4 730.9 623.6 730.7 622.9 730zM632.7 731.4 632.7 732.2 633.4 731.4zM626.4 737.7 627.1 737.7 626.4 738.5zM607.6 730 608.6 730.9 606.7 730.9zM604.6 737.7 605.4 737.7 604.6 738.5zM562.8 693.6 565.5 696.4 560.1 696.4zM556.1 716.3 553.9 716.3 553.9 718.2 554.3 718.1 554.4 718.1zM558.1 730.9 559.5 730.9 559.6 730.9 559.8 730.7 559 730zM568.8 731.4 568.8 732.2 569.6 731.4zM562.5 737.7 563.3 737.7 562.5 738.5zM543.8 730 544.7 730.9 542.9 730.9zM540.8 737.7 541.5 737.7 540.8 738.5zM517.4 703.6 518.4 704.5 516.5 704.5zM514.4 711.3 515.2 711.3 514.4 712.1zM511.7 684 511.8 683.9 511.8 683.3 511.7 683.3zM485.5 616.3 488.2 619.1 482.8 619.1zM478.8 639 476.6 639 476.6 640.9 477 640.8 477.1 640.8zM480.8 653.6 482.2 653.6 482.3 653.5 482.3 653.6 482.3 653.5 482.5 653.4 482.7 653.6 481.7 652.7zM491.5 654.1 491.5 654.9 492.3 654.1zM485.2 660.4 486 660.4 485.2 661.2zM466.5 652.7 467.4 653.6 465.6 653.6zM463.5 660.4 464.2 660.4 463.5 661.2zM440.1 626.3 441.1 627.2 439.2 627.2zM437.1 634 437.9 634 437.1 634.8zM434.4 606.7 435.2 606 435.1 606 434.5 606.6 434.5 606 434.4 606zM468.7 559 470.9 556.7 470.8 556.9 469 558.6 469 556.7 468.7 556.7zM440.1 562.4 441.1 563.4 439.2 563.4zM437.1 570.2 437.9 570.2 437.1 571zM434.4 542.9 435.2 542.1 435.1 542.2 434.5 542.8 434.5 542.1 434.4 542.1zM460.8 516.5 461.5 515.8 460.9 516.4 460.9 515.8 460.8 515.8zM478.3 526.1 477.4 525.2 477.2 525.3 478 526.1zM491.5 515.8 491.5 516.5 492.3 515.8z"/><path fill="#1c7651" stroke="#1c7651" stroke-width="0.5" d="M525.5 478.9 525.5 478.6 524.7 477.8 524.6 478zM561.8 440.7 562.8 441.7 562.8 439.8zM615.7 486.1 618.5 488.8 618.5 483.4zM625.7 440.7 626.6 441.7 626.6 439.8zM652.1 467.1 653 468 653 466.2zM653 481.4 652.1 482.3 653 483.3 652.8 483.1 652.9 482.9 653 482.8zM693 563.4 695.8 566.1 695.8 560.7zM703 518 703.9 519 703.9 517.1zM729.4 544.4 730.3 545.3 730.3 543.5zM730.3 558.7 729.4 559.6 730.1 560.4 730.3 560.2 730.3 560.1zM695.8 605.3 693 608.1 695.3 610.3 695.7 609.7 695.8 609.6zM729.4 608.2 730.3 609.2 730.3 607.3zM730.3 622.5 729.4 623.5 730.1 624.2 730.3 624zM703.9 648.9 703 649.8 703.8 650.6 703.9 650.4 703.9 650.3zM618.5 682.6 615.7 685.4 618.5 688.1 618 687.6 618.4 687 618.5 686.9zM652.1 685.5 653 686.5 653 684.6zM653 699.8 652.1 700.8 652.8 701.5 652.9 701.3 653 701.3zM626.6 726.2 625.7 727.1 626.5 727.9 626.6 727.7 626.6 727.6zM562.8 726.2 561.8 727.1 562.6 727.9 562.7 727.7 562.8 727.6zM525.5 697.4 525.5 697 524.7 696.3 524.6 696.4zM509.2 598 509.2 597.1 507 594.9 508.8 593 509.2 592.6 506.5 595.3zM485.5 648.9 484.5 649.8 485.5 650.8 485.3 650.6 485.4 650.4 485.5 650.3zM448.2 620 448.2 619.7 447.4 619 447.3 619.1zM448.2 556.2 448.2 555.9 447.4 555.1 447.3 555.3zM484.5 518 485.5 519 485.5 517.1z"/><path fill="#1c7752" stroke="#1c7752" stroke-width="0.5" d="M515.2 492.1 515.9 492.1 515.2 492.9zM515.9 461.4 515.2 461.4 515.2 461.5 515.8 461.5 515.2 462.1zM558.4 469.3 556.1 469.3 556.1 469.6 558 469.6zM542.3 435 541.5 435 541.5 435.1 542.2 435.1 541.6 435.7 541.5 435.8zM569.6 437.7 569.6 438.5 570.4 437.7zM606.1 435 605.4 435 605.4 435.1 606 435.1 605.4 435.7 605.4 435.8zM633.4 437.7 633.4 438.5 634.2 437.7zM638.4 479.4 640.2 477.7 640.2 477.6 640.3 477.2 638.4 477.2zM659.8 464.1 659.8 464.8 660.6 464.1zM659.8 485.8 659.8 486.6 660.6 485.8zM653.5 492.1 654.3 492.1 653.5 492.9zM653.1 599.6 658.2 594.5 658.3 594.2 658.6 593 653.1 593zM683.4 512.3 682.7 512.3 682.7 512.4 683.3 512.4zM710.7 515 710.7 515.8 711.5 515zM715.7 556.7 717.5 555 717.5 554.9 717.6 554.5 715.7 554.5zM737.1 541.4 737.1 542.1 737.9 541.4zM737.1 563.1 737.1 563.9 737.9 563.1zM730.8 569.4 731.6 569.4 730.8 570.2zM715.7 620.6 717.5 618.8 717.5 618.7 717.6 618.3 715.7 618.3zM737.1 605.2 737.1 606 737.9 605.2zM737.1 627 737.1 627.7 737.9 627zM730.8 633.3 731.6 633.3 730.8 634zM697.3 636.8 699.5 636.8 697.3 639zM710.7 653.3 710.7 654.1 711.5 653.3zM704.4 659.6 705.2 659.6 704.4 660.4zM682.7 659.6 683.4 659.6 682.7 660.4zM599 647.1 605.6 647.1 599 653.7zM638.4 697.9 640.2 696.1 640.2 696 640.3 695.6 638.4 695.6zM659.8 682.5 659.8 683.3 660.6 682.5zM659.8 704.3 659.8 705 660.6 704.3zM653.5 710.6 654.3 710.6 653.5 711.3zM620 714.1 622.2 714.1 620 716.3zM633.4 730.6 633.4 731.4 634.2 730.6zM627.1 736.9 627.9 736.9 627.1 737.7zM605.4 736.9 606.1 736.9 605.4 737.7zM556.1 714.1 558.4 714.1 556.1 716.3zM569.6 730.6 569.6 731.4 570.4 730.6zM563.3 736.9 564.1 736.9 563.3 737.7zM541.5 736.9 542.3 736.9 541.5 737.7zM515.2 710.6 515.9 710.6 515.2 711.3zM515.9 679.8 515.2 679.8 515.2 679.9 515.8 679.9zM478.8 636.8 481.1 636.8 478.8 639zM492.3 653.3 492.3 654.1 493.1 653.3zM486 659.6 486.8 659.6 486 660.4zM464.2 659.6 465 659.6 464.2 660.4zM437.9 633.3 438.6 633.3 437.9 634zM438.6 602.5 437.9 602.5 437.9 602.6 438.5 602.6zM437.9 569.4 438.6 569.4 437.9 570.2zM438.6 538.7 437.9 538.7 437.9 538.8 438.5 538.8zM481.1 546.6 478.8 546.6 478.8 546.9 480.7 546.9zM465 512.3 464.2 512.3 464.2 512.4 464.9 512.4 464.3 513 464.2 513.1zM492.3 515 492.3 515.8 493.1 515z"/><path fill="#3aa87a" stroke="#3aa87a" stroke-width="0.5" d="M525.5 468.6 524.6 469.6 524.7 469.7 525.5 469zM562.8 439.8 562.8 438.4 562.7 438.3 562.8 438.3 562.7 438.3 562.6 438.1 562.8 437.9 561.8 438.9zM618.5 483.4 618.5 479.1 618.4 479 618.5 479.1 618.4 479 618 478.4 615.7 480.6zM626.6 439.8 626.6 438.4 626.6 438.3 626.5 438.1 626.6 437.9 625.7 438.9zM653 466.2 653 464.7 652.9 464.7 653 464.7 652.9 464.7 652.8 464.5 652.1 465.2zM652.1 480.5 653 479.5 653 481.4zM695.8 560.7 695.8 556.4 695.7 556.3 695.3 555.7 693 557.9zM703.9 517.1 703.9 515.7 703.9 515.6 703.8 515.4 703 516.2zM730.3 543.5 730.3 542 730.1 541.8 729.4 542.5zM729.4 557.8 730.3 556.8 730.3 558.7zM693 602.6 695.8 599.9 695.8 605.3zM730.3 607.3 730.3 605.9 730.3 605.8 730.1 605.6 729.4 606.4zM729.4 621.6 730.3 620.7 730.3 622.5zM703 648 703.9 647 703.9 648.9zM615.7 679.9 618.5 677.2 618.5 682.6zM653 684.6 653 683.2 652.9 683.1 652.8 682.9 652.1 683.7zM652.1 698.9 653 698 653 699.8zM625.7 725.3 626.6 724.3 626.6 726.2zM561.8 725.3 562.8 724.3 562.8 726.2zM525.5 687.1 524.6 688 524.7 688.2 525.5 687.4zM484.5 648 485.5 647 485.5 648.9zM448.2 609.8 447.3 610.7 447.4 610.9 448.2 610.1zM509.2 568 506.5 570.7 509.2 573.4 508.8 573 507 571.1 509.2 568.9zM448.2 546 447.3 546.9 447.4 547 448.2 546.3zM485.5 517.1 485.5 515.7 485.4 515.6 485.5 515.6 485.4 515.6 485.3 515.4 485.5 515.2 484.5 516.2z"/><path fill="none" stroke="#0f3a25" stroke-width="0.9" stroke-linecap="round" d="M572.4 518.9L592.4 518.9M592.4 518.9L592.4 569.8M592.4 569.8L572.4 569.8M572.4 569.8L572.4 518.9M559.2 518.9L572.4 518.9M592.4 518.9L605.6 518.9M570.4 569.8L572.4 569.8M592.4 569.8L594.4 569.8M572.4 507.3L572.4 518.9M592.4 507.3L592.4 518.9M572.4 571.8L572.4 569.8M592.4 571.8L592.4 569.8M559.2 518.9L559.2 559.8M605.6 518.9L605.6 559.8M578.5 505.7L586.3 505.7M559.2 518.9L569.8 508.3M595 508.3L605.6 518.9M551.8 483.4L560.1 475.1M560.1 475.1L581.1 496.1M581.1 496.1L572.8 504.4M572.8 504.4L551.8 483.4M546.3 488.8L551.8 483.4M560.1 475.1L565.5 469.6M567.4 509.8L572.8 504.4M581.1 496.1L581.9 495.3M546.9 478.5L551.8 483.4M555.2 470.2L560.1 475.1M574.5 506.1L572.8 504.4M581.9 497L581.1 496.1M546.3 488.8L567.4 509.8M565.5 469.6L582.3 486.4M548.9 475.3L552 472.2M546.3 488.8L546.3 479.9M556.6 469.6L565.5 469.6M567.4 509.8L568.2 509.8M528.6 477.2L528.6 470.4M528.6 470.4L546 470.4M546 470.4L546 477.2M546 477.2L528.6 477.2M528.6 481.7L528.6 477.2M528.6 470.4L528.6 465.9M546 481.7L546 477.2M546 470.4L546 470M524.9 477.2L528.6 477.2M524.9 470.4L528.6 470.4M547.2 477.2L546 477.2M546.4 470.4L546 470.4M528.6 481.7L546 481.7M528.6 465.9L542.3 465.9M524.1 475.2L524.1 472.4M528.6 481.7L525 478.1M525 469.5L528.6 465.9M546 481.7L546.3 481.4M516.5 484.2L513.7 481.4M513.7 481.4L520.8 474.2M520.8 474.2L523.7 477M523.7 477L516.5 484.2M518.4 486.1L516.5 484.2M513.7 481.4L511.8 479.5M525.5 478.9L523.7 477M520.8 474.2L520.5 473.9M514.9 485.8L516.5 484.2M512.1 482.9L513.7 481.4M524.3 476.4L523.7 477M521.2 473.9L520.8 474.2M518.4 486.1L525.5 478.9M511.8 479.5L517.6 473.8M514 485.4L512.4 483.9M518.4 486.1L515 486.1M511.8 482.8L511.8 479.5M514.4 492.1L512.1 492.1M512.1 492.1L512.1 486.2M512.1 486.2L514.4 486.2M514.4 486.2L514.4 492.1M515.9 492.1L514.4 492.1M512.1 492.1L510.5 492.1M515.9 486.2L514.4 486.2M514.4 493.7L514.4 492.1M512.1 493.7L512.1 492.1M514.4 485.7L514.4 486.2M515.9 492.1L515.9 486.2M510.5 492.1L510.5 487.5M514.4 493.7L512.1 493.7M515.9 492.1L514.4 493.7M512.1 493.7L510.5 492.1M505.8 485.8L505.8 483.5M505.8 483.5L511.7 483.5M511.7 483.5L511.7 485.8M511.7 485.8L505.8 485.8M505.8 487.4L505.8 485.8M505.8 483.5L505.8 482M511.7 483.5L511.7 482M504.2 485.8L505.8 485.8M504.2 483.5L505.8 483.5M512.2 483.5L511.7 483.5M505.8 487.4L510.4 487.4M505.8 482L511.7 482M504.2 485.8L504.2 483.5M505.8 487.4L504.2 485.8M504.2 483.5L505.8 482M513.7 466.2L516.5 463.3M516.5 463.3L523.7 470.5M523.7 470.5L520.8 473.3M520.8 473.3L513.7 466.2M511.8 468L513.7 466.2M516.5 463.3L518.4 461.5M520.5 473.6L520.8 473.3M523.7 470.5L525.5 468.6M512.1 464.6L513.7 466.2M514.9 461.8L516.5 463.3M521.2 473.6L520.8 473.3M524.3 471.1L523.7 470.5M511.8 468L517.6 473.8M518.4 461.5L525.5 468.6M512.4 463.7L514 462.1M511.8 468L511.8 464.7M515 461.5L518.4 461.5M505.8 464.1L505.8 461.7M505.8 461.7L511.7 461.7M511.7 461.7L511.7 464.1M511.7 464.1L505.8 464.1M505.8 465.6L505.8 464.1M505.8 461.7L505.8 460.2M511.7 465.6L511.7 464.1M504.2 464.1L505.8 464.1M504.2 461.7L505.8 461.7M512.2 464.1L511.7 464.1M505.8 465.6L511.7 465.6M505.8 460.2L510.4 460.2M504.2 464.1L504.2 461.7M505.8 465.6L504.2 464.1M504.2 461.7L505.8 460.2M512.1 455.4L514.4 455.4M514.4 455.4L514.4 461.4M514.4 461.4L512.1 461.4M512.1 461.4L512.1 455.4M510.5 455.4L512.1 455.4M514.4 455.4L515.9 455.4M514.4 461.4L515.9 461.4M512.1 453.9L512.1 455.4M514.4 453.9L514.4 455.4M514.4 461.9L514.4 461.4M510.5 455.4L510.5 460.1M515.9 455.4L515.9 461.4M512.1 453.9L514.4 453.9M510.5 455.4L512.1 453.9M514.4 453.9L515.9 455.4M547.1 451.9L553.9 451.9M553.9 451.9L553.9 469.3M553.9 469.3L547.1 469.3M547.1 469.3L547.1 451.9M542.6 451.9L547.1 451.9M553.9 451.9L558.4 451.9M546.7 469.3L547.1 469.3M553.9 469.3L558.4 469.3M547.1 448.2L547.1 451.9M553.9 448.2L553.9 451.9M547.1 469.7L547.1 469.3M553.9 470.5L553.9 469.3M542.6 451.9L542.6 465.6M558.4 451.9L558.4 469.3M549.1 447.4L551.9 447.4M542.6 451.9L546.2 448.3M554.8 448.3L558.4 451.9M558.1 469.6L558.4 469.3M540 439.8L542.9 437M542.9 437L550 444.1M550 444.1L547.2 447M547.2 447L540 439.8M538.2 441.7L540 439.8M542.9 437L544.7 435.1M545.4 448.8L547.2 447M550 444.1L550.3 443.8M538.5 438.2L540 439.8M541.3 435.4L542.9 437M547.8 447.6L547.2 447M550.3 444.5L550 444.1M538.2 441.7L545.4 448.8M544.7 435.1L550.5 440.9M538.8 437.3L540.4 435.7M538.2 441.7L538.2 438.3M541.4 435.1L544.7 435.1M532.1 437.7L532.1 435.4M532.1 435.4L538.1 435.4M538.1 435.4L538.1 437.7M538.1 437.7L532.1 437.7M532.1 439.2L532.1 437.7M532.1 435.4L532.1 433.8M538.1 439.2L538.1 437.7M530.6 437.7L532.1 437.7M530.6 435.4L532.1 435.4M538.6 437.7L538.1 437.7M532.1 439.2L538.1 439.2M532.1 433.8L536.8 433.8M530.6 437.7L530.6 435.4M532.1 439.2L530.6 437.7M530.6 435.4L532.1 433.8M538.4 429.1L540.8 429.1M540.8 429.1L540.8 435M540.8 435L538.4 435M538.4 435L538.4 429.1M536.9 429.1L538.4 429.1M540.8 429.1L542.3 429.1M540.8 435L542.3 435M538.4 427.5L538.4 429.1M540.8 427.5L540.8 429.1M540.8 435.5L540.8 435M536.9 429.1L536.9 433.7M542.3 429.1L542.3 435M538.4 427.5L540.8 427.5M536.9 429.1L538.4 427.5M540.8 427.5L542.3 429.1M558.1 437L560.9 439.8M560.9 439.8L553.7 447M553.7 447L550.9 444.1M550.9 444.1L558.1 437M556.2 435.1L558.1 437M560.9 439.8L562.8 441.7M550.6 443.8L550.9 444.1M553.7 447L555.6 448.8M559.6 435.4L558.1 437M562.5 438.2L560.9 439.8M550.6 444.5L550.9 444.1M553.1 447.6L553.7 447M556.2 435.1L550.5 440.9M562.8 441.7L555.6 448.8M560.6 435.7L562.1 437.3M556.2 435.1L559.5 435.1M562.8 438.3L562.8 441.7M560.2 429.1L562.5 429.1M562.5 429.1L562.5 435M562.5 435L560.2 435M560.2 435L560.2 429.1M558.7 429.1L560.2 429.1M562.5 429.1L564.1 429.1M558.7 435L560.2 435M560.2 427.5L560.2 429.1M562.5 427.5L562.5 429.1M560.2 435.5L560.2 435M558.7 429.1L558.7 435M564.1 429.1L564.1 433.7M560.2 427.5L562.5 427.5M558.7 429.1L560.2 427.5M562.5 427.5L564.1 429.1M568.8 435.4L568.8 437.7M568.8 437.7L562.9 437.7M562.9 437.7L562.9 435.4M562.9 435.4L568.8 435.4M568.8 433.8L568.8 435.4M568.8 437.7L568.8 439.2M562.9 437.7L562.9 439.2M570.4 435.4L568.8 435.4M570.4 437.7L568.8 437.7M562.4 437.7L562.9 437.7M568.8 433.8L564.2 433.8M568.8 439.2L562.9 439.2M570.4 435.4L570.4 437.7M568.8 433.8L570.4 435.4M570.4 437.7L568.8 439.2M604.7 475.1L613 483.4M613 483.4L592 504.4M592 504.4L583.7 496.1M583.7 496.1L604.7 475.1M599.3 469.6L604.7 475.1M613 483.4L618.5 488.8M582.9 495.3L583.7 496.1M592 504.4L597.4 509.8M609.6 470.2L604.7 475.1M617.9 478.5L613 483.4M582.9 497L583.7 496.1M590.3 506.1L592 504.4M599.3 469.6L582.5 486.4M618.5 488.8L597.4 509.8M612.8 472.2L615.9 475.3M599.3 469.6L608.2 469.6M618.5 479.9L618.5 488.8M596.6 509.8L597.4 509.8M610.9 451.9L617.7 451.9M617.7 451.9L617.7 469.3M617.7 469.3L610.9 469.3M610.9 469.3L610.9 451.9M606.4 451.9L610.9 451.9M617.7 451.9L622.2 451.9M606.4 469.3L610.9 469.3M617.7 469.3L618.1 469.3M610.9 448.2L610.9 451.9M617.7 448.2L617.7 451.9M610.9 470.5L610.9 469.3M617.7 469.7L617.7 469.3M606.4 451.9L606.4 469.3M622.2 451.9L622.2 465.6M612.9 447.4L615.7 447.4M606.4 451.9L610 448.3M618.6 448.3L622.2 451.9M606.4 469.3L606.7 469.6M603.9 439.8L606.7 437M606.7 437L613.9 444.1M613.9 444.1L611.1 447M611.1 447L603.9 439.8M602 441.7L603.9 439.8M606.7 437L608.6 435.1M609.2 448.8L611.1 447M613.9 444.1L614.2 443.8M602.3 438.2L603.9 439.8M605.2 435.4L606.7 437M611.7 447.6L611.1 447M614.2 444.5L613.9 444.1M602 441.7L609.2 448.8M608.6 435.1L614.3 440.9M602.7 437.3L604.2 435.7M602 441.7L602 438.3M605.3 435.1L608.6 435.1M596 437.7L596 435.4M596 435.4L601.9 435.4M601.9 435.4L601.9 437.7M601.9 437.7L596 437.7M596 439.2L596 437.7M596 435.4L596 433.8M601.9 439.2L601.9 437.7M594.4 437.7L596 437.7M594.4 435.4L596 435.4M602.4 437.7L601.9 437.7M596 439.2L601.9 439.2M596 433.8L600.6 433.8M594.4 437.7L594.4 435.4M596 439.2L594.4 437.7M594.4 435.4L596 433.8M602.3 429.1L604.6 429.1M604.6 429.1L604.6 435M604.6 435L602.3 435M602.3 435L602.3 429.1M600.7 429.1L602.3 429.1M604.6 429.1L606.1 429.1M604.6 435L606.1 435M602.3 427.5L602.3 429.1M604.6 427.5L604.6 429.1M604.6 435.5L604.6 435M600.7 429.1L600.7 433.7M606.1 429.1L606.1 435M602.3 427.5L604.6 427.5M600.7 429.1L602.3 427.5M604.6 427.5L606.1 429.1M621.9 437L624.8 439.8M624.8 439.8L617.6 447M617.6 447L614.8 444.1M614.8 444.1L621.9 437M620.1 435.1L621.9 437M624.8 439.8L626.6 441.7M614.5 443.8L614.8 444.1M617.6 447L619.4 448.8M623.5 435.4L621.9 437M626.3 438.2L624.8 439.8M614.5 444.5L614.8 444.1M617 447.6L617.6 447M620.1 435.1L614.3 440.9M626.6 441.7L619.4 448.8M624.4 435.7L626 437.3M620.1 435.1L623.4 435.1M626.6 438.3L626.6 441.7M624 429.1L626.4 429.1M626.4 429.1L626.4 435M626.4 435L624 435M624 435L624 429.1M622.5 429.1L624 429.1M626.4 429.1L627.9 429.1M622.5 435L624 435M624 427.5L624 429.1M626.4 427.5L626.4 429.1M624 435.5L624 435M622.5 429.1L622.5 435M627.9 429.1L627.9 433.7M624 427.5L626.4 427.5M622.5 429.1L624 427.5M626.4 427.5L627.9 429.1M632.7 435.4L632.7 437.7M632.7 437.7L626.7 437.7M626.7 437.7L626.7 435.4M626.7 435.4L632.7 435.4M632.7 433.8L632.7 435.4M632.7 437.7L632.7 439.2M626.7 437.7L626.7 439.2M634.2 435.4L632.7 435.4M634.2 437.7L632.7 437.7M626.2 437.7L626.7 437.7M632.7 433.8L628 433.8M632.7 439.2L626.7 439.2M634.2 435.4L634.2 437.7M632.7 433.8L634.2 435.4M634.2 437.7L632.7 439.2M636.2 470.4L636.2 477.2M636.2 477.2L618.8 477.2M618.8 477.2L618.8 470.4M618.8 470.4L636.2 470.4M636.2 465.9L636.2 470.4M636.2 477.2L636.2 481.7M618.8 470L618.8 470.4M618.8 477.2L618.8 481.7M639.9 470.4L636.2 470.4M639.9 477.2L636.2 477.2M618.4 470.4L618.8 470.4M617.6 477.2L618.8 477.2M636.2 465.9L622.5 465.9M636.2 481.7L618.8 481.7M640.7 472.4L640.7 475.2M636.2 465.9L639.8 469.5M639.8 478.1L636.2 481.7M618.5 481.4L618.8 481.7M648.3 463.3L651.1 466.2M651.1 466.2L644 473.3M644 473.3L641.1 470.5M641.1 470.5L648.3 463.3M646.4 461.5L648.3 463.3M651.1 466.2L653 468M639.3 468.6L641.1 470.5M644 473.3L644.3 473.6M649.9 461.8L648.3 463.3M652.7 464.6L651.1 466.2M640.5 471.1L641.1 470.5M643.6 473.6L644 473.3M646.4 461.5L639.3 468.6M653 468L647.2 473.8M650.8 462.1L652.4 463.7M646.4 461.5L649.8 461.5M653 464.7L653 468M650.4 455.4L652.7 455.4M652.7 455.4L652.7 461.4M652.7 461.4L650.4 461.4M650.4 461.4L650.4 455.4M648.9 455.4L650.4 455.4M652.7 455.4L654.3 455.4M648.9 461.4L650.4 461.4M650.4 453.9L650.4 455.4M652.7 453.9L652.7 455.4M650.4 461.9L650.4 461.4M648.9 455.4L648.9 461.4M654.3 455.4L654.3 460.1M650.4 453.9L652.7 453.9M648.9 455.4L650.4 453.9M652.7 453.9L654.3 455.4M659 461.7L659 464.1M659 464.1L653.1 464.1M653.1 464.1L653.1 461.7M653.1 461.7L659 461.7M659 460.2L659 461.7M659 464.1L659 465.6M653.1 464.1L653.1 465.6M660.6 461.7L659 461.7M660.6 464.1L659 464.1M652.6 464.1L653.1 464.1M659 460.2L654.4 460.2M659 465.6L653.1 465.6M660.6 461.7L660.6 464.1M659 460.2L660.6 461.7M660.6 464.1L659 465.6M651.1 481.4L648.3 484.2M648.3 484.2L641.1 477M641.1 477L644 474.2M644 474.2L651.1 481.4M653 479.5L651.1 481.4M648.3 484.2L646.4 486.1M644.3 473.9L644 474.2M641.1 477L639.3 478.9M652.7 482.9L651.1 481.4M649.9 485.8L648.3 484.2M643.6 473.9L644 474.2M640.5 476.4L641.1 477M653 479.5L647.2 473.8M646.4 486.1L639.3 478.9M652.4 483.9L650.8 485.4M653 479.5L653 482.8M649.8 486.1L646.4 486.1M659 483.5L659 485.8M659 485.8L653.1 485.8M653.1 485.8L653.1 483.5M653.1 483.5L659 483.5M659 482L659 483.5M659 485.8L659 487.4M653.1 482L653.1 483.5M660.6 483.5L659 483.5M660.6 485.8L659 485.8M652.6 483.5L653.1 483.5M659 482L653.1 482M659 487.4L654.4 487.4M660.6 483.5L660.6 485.8M659 482L660.6 483.5M660.6 485.8L659 487.4M652.7 492.1L650.4 492.1M650.4 492.1L650.4 486.2M650.4 486.2L652.7 486.2M652.7 486.2L652.7 492.1M654.3 492.1L652.7 492.1M650.4 492.1L648.9 492.1M650.4 486.2L648.9 486.2M652.7 493.7L652.7 492.1M650.4 493.7L650.4 492.1M650.4 485.7L650.4 486.2M654.3 492.1L654.3 487.5M648.9 492.1L648.9 486.2M652.7 493.7L650.4 493.7M654.3 492.1L652.7 493.7M650.4 493.7L648.9 492.1M646.5 573L646.5 593M646.5 593L595.6 593M595.6 593L595.6 573M595.6 573L646.5 573M646.5 559.8L646.5 573M646.5 593L646.5 606.2M595.6 571L595.6 573M595.6 593L595.6 595M658.1 573L646.5 573M658.1 593L646.5 593M593.6 573L595.6 573M593.6 593L595.6 593M646.5 559.8L605.6 559.8M646.5 606.2L605.6 606.2M659.7 579.1L659.7 586.9M646.5 559.8L657.1 570.4M657.1 595.6L646.5 606.2M682 552.4L690.3 560.7M690.3 560.7L669.3 581.7M669.3 581.7L661 573.4M661 573.4L682 552.4M676.6 546.9L682 552.4M690.3 560.7L695.8 566.1M655.6 568L661 573.4M669.3 581.7L670.1 582.5M686.9 547.5L682 552.4M695.2 555.8L690.3 560.7M659.3 575.1L661 573.4M668.4 582.5L669.3 581.7M676.6 546.9L655.6 568M695.8 566.1L679 582.9M690.1 549.5L693.2 552.6M676.6 546.9L685.5 546.9M695.8 557.2L695.8 566.1M655.6 568L655.6 568.8M688.2 529.2L695 529.2M695 529.2L695 546.6M695 546.6L688.2 546.6M688.2 546.6L688.2 529.2M683.7 529.2L688.2 529.2M695 529.2L699.5 529.2M683.7 546.6L688.2 546.6M695 546.6L695.4 546.6M688.2 525.5L688.2 529.2M695 525.5L695 529.2M688.2 547.8L688.2 546.6M695 547L695 546.6M683.7 529.2L683.7 546.6M699.5 529.2L699.5 542.9M690.2 524.7L693 524.7M683.7 529.2L687.3 525.6M695.9 525.6L699.5 529.2M683.7 546.6L684 546.9M681.2 517.1L684 514.3M684 514.3L691.2 521.4M691.2 521.4L688.4 524.3M688.4 524.3L681.2 517.1M679.3 519L681.2 517.1M684 514.3L685.9 512.4M686.5 526.1L688.4 524.3M691.2 521.4L691.5 521.1M679.6 515.5L681.2 517.1M682.5 512.7L684 514.3M689 524.9L688.4 524.3M691.5 521.8L691.2 521.4M679.3 519L686.5 526.1M685.9 512.4L691.6 518.2M680 514.6L681.5 513M679.3 519L679.3 515.6M682.6 512.4L685.9 512.4M673.3 515L673.3 512.7M673.3 512.7L679.2 512.7M679.2 512.7L679.2 515M679.2 515L673.3 515M673.3 516.5L673.3 515M673.3 512.7L673.3 511.1M679.2 516.5L679.2 515M671.7 515L673.3 515M671.7 512.7L673.3 512.7M679.7 515L679.2 515M673.3 516.5L679.2 516.5M673.3 511.1L677.9 511.1M671.7 515L671.7 512.7M673.3 516.5L671.7 515M671.7 512.7L673.3 511.1M679.6 506.4L681.9 506.4M681.9 506.4L681.9 512.3M681.9 512.3L679.6 512.3M679.6 512.3L679.6 506.4M678 506.4L679.6 506.4M681.9 506.4L683.4 506.4M681.9 512.3L683.4 512.3M679.6 504.8L679.6 506.4M681.9 504.8L681.9 506.4M681.9 512.8L681.9 512.3M678 506.4L678 511M683.4 506.4L683.4 512.3M679.6 504.8L681.9 504.8M678 506.4L679.6 504.8M681.9 504.8L683.4 506.4M699.2 514.3L702.1 517.1M702.1 517.1L694.9 524.3M694.9 524.3L692.1 521.4M692.1 521.4L699.2 514.3M697.4 512.4L699.2 514.3M702.1 517.1L703.9 519M691.8 521.1L692.1 521.4M694.9 524.3L696.8 526.1M700.8 512.7L699.2 514.3M703.6 515.5L702.1 517.1M691.8 521.8L692.1 521.4M694.3 524.9L694.9 524.3M697.4 512.4L691.6 518.2M703.9 519L696.8 526.1M701.7 513L703.3 514.6M697.4 512.4L700.7 512.4M703.9 515.6L703.9 519M701.3 506.4L703.7 506.4M703.7 506.4L703.7 512.3M703.7 512.3L701.3 512.3M701.3 512.3L701.3 506.4M699.8 506.4L701.3 506.4M703.7 506.4L705.2 506.4M699.8 512.3L701.3 512.3M701.3 504.8L701.3 506.4M703.7 504.8L703.7 506.4M701.3 512.8L701.3 512.3M699.8 506.4L699.8 512.3M705.2 506.4L705.2 511M701.3 504.8L703.7 504.8M699.8 506.4L701.3 504.8M703.7 504.8L705.2 506.4M710 512.7L710 515M710 515L704 515M704 515L704 512.7M704 512.7L710 512.7M710 511.1L710 512.7M710 515L710 516.5M704 515L704 516.5M711.5 512.7L710 512.7M711.5 515L710 515M703.5 515L704 515M710 511.1L705.3 511.1M710 516.5L704 516.5M711.5 512.7L711.5 515M710 511.1L711.5 512.7M711.5 515L710 516.5M713.5 547.7L713.5 554.5M713.5 554.5L696.1 554.5M696.1 554.5L696.1 547.7M696.1 547.7L713.5 547.7M713.5 543.2L713.5 547.7M713.5 554.5L713.5 559M696.1 547.3L696.1 547.7M696.1 554.5L696.1 559M717.2 547.7L713.5 547.7M717.2 554.5L713.5 554.5M695.7 547.7L696.1 547.7M694.9 554.5L696.1 554.5M713.5 543.2L699.8 543.2M713.5 559L696.1 559M718 549.7L718 552.5M713.5 543.2L717.1 546.8M717.1 555.4L713.5 559M695.8 558.7L696.1 559M725.6 540.6L728.4 543.5M728.4 543.5L721.3 550.6M721.3 550.6L718.4 547.8M718.4 547.8L725.6 540.6M723.7 538.8L725.6 540.6M728.4 543.5L730.3 545.3M716.6 546L718.4 547.8M721.3 550.6L721.6 550.9M727.2 539.1L725.6 540.6M730 541.9L728.4 543.5M717.8 548.4L718.4 547.8M720.9 550.9L721.3 550.6M723.7 538.8L716.6 546M730.3 545.3L724.5 551.1M728.1 539.4L729.7 541M723.7 538.8L727.1 538.8M730.3 542L730.3 545.3M727.7 532.7L730 532.7M730 532.7L730 538.7M730 538.7L727.7 538.7M727.7 538.7L727.7 532.7M726.2 532.7L727.7 532.7M730 532.7L731.6 532.7M726.2 538.7L727.7 538.7M727.7 531.2L727.7 532.7M730 531.2L730 532.7M727.7 539.2L727.7 538.7M726.2 532.7L726.2 538.7M731.6 532.7L731.6 537.4M727.7 531.2L730 531.2M726.2 532.7L727.7 531.2M730 531.2L731.6 532.7M736.3 539L736.3 541.4M736.3 541.4L730.4 541.4M730.4 541.4L730.4 539M730.4 539L736.3 539M736.3 537.5L736.3 539M736.3 541.4L736.3 542.9M730.4 541.4L730.4 542.9M737.9 539L736.3 539M737.9 541.4L736.3 541.4M729.9 541.4L730.4 541.4M736.3 537.5L731.7 537.5M736.3 542.9L730.4 542.9M737.9 539L737.9 541.4M736.3 537.5L737.9 539M737.9 541.4L736.3 542.9M728.4 558.7L725.6 561.5M725.6 561.5L718.4 554.3M718.4 554.3L721.3 551.5M721.3 551.5L728.4 558.7M730.3 556.8L728.4 558.7M725.6 561.5L723.7 563.4M721.6 551.2L721.3 551.5M718.4 554.3L716.6 556.2M730 560.2L728.4 558.7M727.2 563.1L725.6 561.5M720.9 551.2L721.3 551.5M717.8 553.7L718.4 554.3M730.3 556.8L724.5 551.1M723.7 563.4L716.6 556.2M729.7 561.2L728.1 562.7M730.3 556.8L730.3 560.1M727.1 563.4L723.7 563.4M736.3 560.8L736.3 563.1M736.3 563.1L730.4 563.1M730.4 563.1L730.4 560.8M730.4 560.8L736.3 560.8M736.3 559.3L736.3 560.8M736.3 563.1L736.3 564.7M730.4 559.3L730.4 560.8M737.9 560.8L736.3 560.8M737.9 563.1L736.3 563.1M729.9 560.8L730.4 560.8M736.3 559.3L730.4 559.3M736.3 564.7L731.7 564.7M737.9 560.8L737.9 563.1M736.3 559.3L737.9 560.8M737.9 563.1L736.3 564.7M730 569.4L727.7 569.4M727.7 569.4L727.7 563.5M727.7 563.5L730 563.5M730 563.5L730 569.4M731.6 569.4L730 569.4M727.7 569.4L726.2 569.4M727.7 563.5L726.2 563.5M730 571L730 569.4M727.7 571L727.7 569.4M727.7 563L727.7 563.5M731.6 569.4L731.6 564.8M726.2 569.4L726.2 563.5M730 571L727.7 571M731.6 569.4L730 571M727.7 571L726.2 569.4M690.3 605.3L682 613.6M682 613.6L661 592.6M661 592.6L669.3 584.3M669.3 584.3L690.3 605.3M695.8 599.9L690.3 605.3M682 613.6L676.6 619.1M670.1 583.5L669.3 584.3M661 592.6L655.6 598M695.2 610.2L690.3 605.3M686.9 618.5L682 613.6M668.4 583.5L669.3 584.3M659.3 590.9L661 592.6M695.8 599.9L679 583.1M676.6 619.1L655.6 598M693.2 613.4L690.1 616.5M695.8 599.9L695.8 608.8M685.5 619.1L676.6 619.1M655.6 597.2L655.6 598M713.5 611.5L713.5 618.3M713.5 618.3L696.1 618.3M696.1 618.3L696.1 611.5M696.1 611.5L713.5 611.5M713.5 607L713.5 611.5M713.5 618.3L713.5 622.8M696.1 607L696.1 611.5M696.1 618.3L696.1 618.7M717.2 611.5L713.5 611.5M717.2 618.3L713.5 618.3M694.9 611.5L696.1 611.5M695.7 618.3L696.1 618.3M713.5 607L696.1 607M713.5 622.8L699.8 622.8M718 613.5L718 616.3M713.5 607L717.1 610.6M717.1 619.2L713.5 622.8M696.1 607L695.8 607.3M725.6 604.5L728.4 607.3M728.4 607.3L721.3 614.5M721.3 614.5L718.4 611.7M718.4 611.7L725.6 604.5M723.7 602.6L725.6 604.5M728.4 607.3L730.3 609.2M716.6 609.8L718.4 611.7M721.3 614.5L721.6 614.8M727.2 602.9L725.6 604.5M730 605.8L728.4 607.3M717.8 612.3L718.4 611.7M720.9 614.8L721.3 614.5M723.7 602.6L716.6 609.8M730.3 609.2L724.5 614.9M728.1 603.3L729.7 604.8M723.7 602.6L727.1 602.6M730.3 605.9L730.3 609.2M727.7 596.6L730 596.6M730 596.6L730 602.5M730 602.5L727.7 602.5M727.7 602.5L727.7 596.6M726.2 596.6L727.7 596.6M730 596.6L731.6 596.6M726.2 602.5L727.7 602.5M727.7 595L727.7 596.6M730 595L730 596.6M727.7 603L727.7 602.5M726.2 596.6L726.2 602.5M731.6 596.6L731.6 601.2M727.7 595L730 595M726.2 596.6L727.7 595M730 595L731.6 596.6M736.3 602.9L736.3 605.2M736.3 605.2L730.4 605.2M730.4 605.2L730.4 602.9M730.4 602.9L736.3 602.9M736.3 601.3L736.3 602.9M736.3 605.2L736.3 606.7M730.4 605.2L730.4 606.7M737.9 602.9L736.3 602.9M737.9 605.2L736.3 605.2M729.9 605.2L730.4 605.2M736.3 601.3L731.7 601.3M736.3 606.7L730.4 606.7M737.9 602.9L737.9 605.2M736.3 601.3L737.9 602.9M737.9 605.2L736.3 606.7M728.4 622.5L725.6 625.4M725.6 625.4L718.4 618.2M718.4 618.2L721.3 615.4M721.3 615.4L728.4 622.5M730.3 620.7L728.4 622.5M725.6 625.4L723.7 627.2M721.6 615.1L721.3 615.4M718.4 618.2L716.6 620M730 624.1L728.4 622.5M727.2 626.9L725.6 625.4M720.9 615.1L721.3 615.4M717.8 617.6L718.4 618.2M730.3 620.7L724.5 614.9M723.7 627.2L716.6 620M729.7 625L728.1 626.6M730.3 620.7L730.3 624M727.1 627.2L723.7 627.2M736.3 624.6L736.3 627M736.3 627L730.4 627M730.4 627L730.4 624.6M730.4 624.6L736.3 624.6M736.3 623.1L736.3 624.6M736.3 627L736.3 628.5M730.4 623.1L730.4 624.6M737.9 624.6L736.3 624.6M737.9 627L736.3 627M729.9 624.6L730.4 624.6M736.3 623.1L730.4 623.1M736.3 628.5L731.7 628.5M737.9 624.6L737.9 627M736.3 623.1L737.9 624.6M737.9 627L736.3 628.5M730 633.3L727.7 633.3M727.7 633.3L727.7 627.3M727.7 627.3L730 627.3M730 627.3L730 633.3M731.6 633.3L730 633.3M727.7 633.3L726.2 633.3M727.7 627.3L726.2 627.3M730 634.8L730 633.3M727.7 634.8L727.7 633.3M727.7 626.8L727.7 627.3M731.6 633.3L731.6 628.6M726.2 633.3L726.2 627.3M730 634.8L727.7 634.8M731.6 633.3L730 634.8M727.7 634.8L726.2 633.3M695 636.8L688.2 636.8M688.2 636.8L688.2 619.4M688.2 619.4L695 619.4M695 619.4L695 636.8M699.5 636.8L695 636.8M688.2 636.8L683.7 636.8M695.4 619.4L695 619.4M688.2 619.4L683.7 619.4M695 640.5L695 636.8M688.2 640.5L688.2 636.8M695 619L695 619.4M688.2 618.2L688.2 619.4M699.5 636.8L699.5 623.1M683.7 636.8L683.7 619.4M693 641.3L690.2 641.3M699.5 636.8L695.9 640.4M687.3 640.4L683.7 636.8M684 619.1L683.7 619.4M702.1 648.9L699.2 651.7M699.2 651.7L692.1 644.6M692.1 644.6L694.9 641.7M694.9 641.7L702.1 648.9M703.9 647L702.1 648.9M699.2 651.7L697.4 653.6M696.8 639.9L694.9 641.7M692.1 644.6L691.8 644.9M703.6 650.5L702.1 648.9M700.8 653.3L699.2 651.7M694.3 641.1L694.9 641.7M691.8 644.2L692.1 644.6M703.9 647L696.8 639.9M697.4 653.6L691.6 647.8M703.3 651.4L701.7 653M703.9 647L703.9 650.4M700.7 653.6L697.4 653.6M710 651L710 653.3M710 653.3L704 653.3M704 653.3L704 651M704 651L710 651M710 649.5L710 651M710 653.3L710 654.9M704 649.5L704 651M711.5 651L710 651M711.5 653.3L710 653.3M703.5 651L704 651M710 649.5L704 649.5M710 654.9L705.3 654.9M711.5 651L711.5 653.3M710 649.5L711.5 651M711.5 653.3L710 654.9M703.7 659.6L701.3 659.6M701.3 659.6L701.3 653.7M701.3 653.7L703.7 653.7M703.7 653.7L703.7 659.6M705.2 659.6L703.7 659.6M701.3 659.6L699.8 659.6M701.3 653.7L699.8 653.7M703.7 661.2L703.7 659.6M701.3 661.2L701.3 659.6M701.3 653.2L701.3 653.7M705.2 659.6L705.2 655M699.8 659.6L699.8 653.7M703.7 661.2L701.3 661.2M705.2 659.6L703.7 661.2M701.3 661.2L699.8 659.6M684 651.7L681.2 648.9M681.2 648.9L688.4 641.7M688.4 641.7L691.2 644.6M691.2 644.6L684 651.7M685.9 653.6L684 651.7M681.2 648.9L679.3 647M691.5 644.9L691.2 644.6M688.4 641.7L686.5 639.9M682.5 653.3L684 651.7M679.6 650.5L681.2 648.9M691.5 644.2L691.2 644.6M689 641.1L688.4 641.7M685.9 653.6L691.6 647.8M679.3 647L686.5 639.9M681.5 653L680 651.4M685.9 653.6L682.6 653.6M679.3 650.4L679.3 647M681.9 659.6L679.6 659.6M679.6 659.6L679.6 653.7M679.6 653.7L681.9 653.7M681.9 653.7L681.9 659.6M683.4 659.6L681.9 659.6M679.6 659.6L678 659.6M683.4 653.7L681.9 653.7M681.9 661.2L681.9 659.6M679.6 661.2L679.6 659.6M681.9 653.2L681.9 653.7M683.4 659.6L683.4 653.7M678 659.6L678 655M681.9 661.2L679.6 661.2M683.4 659.6L681.9 661.2M679.6 661.2L678 659.6M673.3 653.3L673.3 651M673.3 651L679.2 651M679.2 651L679.2 653.3M679.2 653.3L673.3 653.3M673.3 654.9L673.3 653.3M673.3 651L673.3 649.5M679.2 651L679.2 649.5M671.7 653.3L673.3 653.3M671.7 651L673.3 651M679.7 651L679.2 651M673.3 654.9L677.9 654.9M673.3 649.5L679.2 649.5M671.7 653.3L671.7 651M673.3 654.9L671.7 653.3M671.7 651L673.3 649.5M592.4 647.1L572.4 647.1M572.4 647.1L572.4 596.2M572.4 596.2L592.4 596.2M592.4 596.2L592.4 647.1M605.6 647.1L592.4 647.1M572.4 647.1L559.2 647.1M594.4 596.2L592.4 596.2M572.4 596.2L570.4 596.2M592.4 658.7L592.4 647.1M572.4 658.7L572.4 647.1M592.4 594.2L592.4 596.2M572.4 594.2L572.4 596.2M605.6 647.1L605.6 606.2M559.2 647.1L559.2 606.2M586.3 660.3L578.5 660.3M605.6 647.1L595 657.7M569.8 657.7L559.2 647.1M613 682.6L604.7 690.9M604.7 690.9L583.7 669.9M583.7 669.9L592 661.6M592 661.6L613 682.6M618.5 677.2L613 682.6M604.7 690.9L599.3 696.4M597.4 656.2L592 661.6M583.7 669.9L582.9 670.7M617.9 687.5L613 682.6M609.6 695.8L604.7 690.9M590.3 659.9L592 661.6M582.9 669L583.7 669.9M618.5 677.2L597.4 656.2M599.3 696.4L582.5 679.6M615.9 690.7L612.8 693.8M618.5 677.2L618.5 686.1M608.2 696.4L599.3 696.4M597.4 656.2L596.6 656.2M636.2 688.8L636.2 695.6M636.2 695.6L618.8 695.6M618.8 695.6L618.8 688.8M618.8 688.8L636.2 688.8M636.2 684.3L636.2 688.8M636.2 695.6L636.2 700.1M618.8 684.3L618.8 688.8M618.8 695.6L618.8 696M639.9 688.8L636.2 688.8M639.9 695.6L636.2 695.6M617.6 688.8L618.8 688.8M618.4 695.6L618.8 695.6M636.2 684.3L618.8 684.3M636.2 700.1L622.5 700.1M640.7 690.8L640.7 693.6M636.2 684.3L639.8 687.9M639.8 696.5L636.2 700.1M618.8 684.3L618.5 684.6M648.3 681.8L651.1 684.6M651.1 684.6L644 691.8M644 691.8L641.1 689M641.1 689L648.3 681.8M646.4 679.9L648.3 681.8M651.1 684.6L653 686.5M639.3 687.1L641.1 689M644 691.8L644.3 692.1M649.9 680.2L648.3 681.8M652.7 683.1L651.1 684.6M640.5 689.6L641.1 689M643.6 692.1L644 691.8M646.4 679.9L639.3 687.1M653 686.5L647.2 692.2M650.8 680.6L652.4 682.1M646.4 679.9L649.8 679.9M653 683.2L653 686.5M650.4 673.9L652.7 673.9M652.7 673.9L652.7 679.8M652.7 679.8L650.4 679.8M650.4 679.8L650.4 673.9M648.9 673.9L650.4 673.9M652.7 673.9L654.3 673.9M648.9 679.8L650.4 679.8M650.4 672.3L650.4 673.9M652.7 672.3L652.7 673.9M650.4 680.3L650.4 679.8M648.9 673.9L648.9 679.8M654.3 673.9L654.3 678.5M650.4 672.3L652.7 672.3M648.9 673.9L650.4 672.3M652.7 672.3L654.3 673.9M659 680.2L659 682.5M659 682.5L653.1 682.5M653.1 682.5L653.1 680.2M653.1 680.2L659 680.2M659 678.6L659 680.2M659 682.5L659 684M653.1 682.5L653.1 684M660.6 680.2L659 680.2M660.6 682.5L659 682.5M652.6 682.5L653.1 682.5M659 678.6L654.4 678.6M659 684L653.1 684M660.6 680.2L660.6 682.5M659 678.6L660.6 680.2M660.6 682.5L659 684M651.1 699.8L648.3 702.7M648.3 702.7L641.1 695.5M641.1 695.5L644 692.7M644 692.7L651.1 699.8M653 698L651.1 699.8M648.3 702.7L646.4 704.5M644.3 692.4L644 692.7M641.1 695.5L639.3 697.4M652.7 701.4L651.1 699.8M649.9 704.2L648.3 702.7M643.6 692.4L644 692.7M640.5 694.9L641.1 695.5M653 698L647.2 692.2M646.4 704.5L639.3 697.4M652.4 702.3L650.8 703.9M653 698L653 701.3M649.8 704.5L646.4 704.5M659 701.9L659 704.3M659 704.3L653.1 704.3M653.1 704.3L653.1 701.9M653.1 701.9L659 701.9M659 700.4L659 701.9M659 704.3L659 705.8M653.1 700.4L653.1 701.9M660.6 701.9L659 701.9M660.6 704.3L659 704.3M652.6 701.9L653.1 701.9M659 700.4L653.1 700.4M659 705.8L654.4 705.8M660.6 701.9L660.6 704.3M659 700.4L660.6 701.9M660.6 704.3L659 705.8M652.7 710.6L650.4 710.6M650.4 710.6L650.4 704.6M650.4 704.6L652.7 704.6M652.7 704.6L652.7 710.6M654.3 710.6L652.7 710.6M650.4 710.6L648.9 710.6M650.4 704.6L648.9 704.6M652.7 712.1L652.7 710.6M650.4 712.1L650.4 710.6M650.4 704.1L650.4 704.6M654.3 710.6L654.3 705.9M648.9 710.6L648.9 704.6M652.7 712.1L650.4 712.1M654.3 710.6L652.7 712.1M650.4 712.1L648.9 710.6M617.7 714.1L610.9 714.1M610.9 714.1L610.9 696.7M610.9 696.7L617.7 696.7M617.7 696.7L617.7 714.1M622.2 714.1L617.7 714.1M610.9 714.1L606.4 714.1M618.1 696.7L617.7 696.7M610.9 696.7L606.4 696.7M617.7 717.8L617.7 714.1M610.9 717.8L610.9 714.1M617.7 696.3L617.7 696.7M610.9 695.5L610.9 696.7M622.2 714.1L622.2 700.4M606.4 714.1L606.4 696.7M615.7 718.6L612.9 718.6M622.2 714.1L618.6 717.7M610 717.7L606.4 714.1M606.7 696.4L606.4 696.7M624.8 726.2L621.9 729M621.9 729L614.8 721.9M614.8 721.9L617.6 719M617.6 719L624.8 726.2M626.6 724.3L624.8 726.2M621.9 729L620.1 730.9M619.4 717.2L617.6 719M614.8 721.9L614.5 722.2M626.3 727.8L624.8 726.2M623.5 730.6L621.9 729M617 718.4L617.6 719M614.5 721.5L614.8 721.9M626.6 724.3L619.4 717.2M620.1 730.9L614.3 725.1M626 728.7L624.4 730.3M626.6 724.3L626.6 727.7M623.4 730.9L620.1 730.9M632.7 728.3L632.7 730.6M632.7 730.6L626.7 730.6M626.7 730.6L626.7 728.3M626.7 728.3L632.7 728.3M632.7 726.8L632.7 728.3M632.7 730.6L632.7 732.2M626.7 726.8L626.7 728.3M634.2 728.3L632.7 728.3M634.2 730.6L632.7 730.6M626.2 728.3L626.7 728.3M632.7 726.8L626.7 726.8M632.7 732.2L628 732.2M634.2 728.3L634.2 730.6M632.7 726.8L634.2 728.3M634.2 730.6L632.7 732.2M626.4 736.9L624 736.9M624 736.9L624 731M624 731L626.4 731M626.4 731L626.4 736.9M627.9 736.9L626.4 736.9M624 736.9L622.5 736.9M624 731L622.5 731M626.4 738.5L626.4 736.9M624 738.5L624 736.9M624 730.5L624 731M627.9 736.9L627.9 732.3M622.5 736.9L622.5 731M626.4 738.5L624 738.5M627.9 736.9L626.4 738.5M624 738.5L622.5 736.9M606.7 729L603.9 726.2M603.9 726.2L611.1 719M611.1 719L613.9 721.9M613.9 721.9L606.7 729M608.6 730.9L606.7 729M603.9 726.2L602 724.3M614.2 722.2L613.9 721.9M611.1 719L609.2 717.2M605.2 730.6L606.7 729M602.3 727.8L603.9 726.2M614.2 721.5L613.9 721.9M611.7 718.4L611.1 719M608.6 730.9L614.3 725.1M602 724.3L609.2 717.2M604.2 730.3L602.7 728.7M608.6 730.9L605.3 730.9M602 727.7L602 724.3M604.6 736.9L602.3 736.9M602.3 736.9L602.3 731M602.3 731L604.6 731M604.6 731L604.6 736.9M606.1 736.9L604.6 736.9M602.3 736.9L600.7 736.9M606.1 731L604.6 731M604.6 738.5L604.6 736.9M602.3 738.5L602.3 736.9M604.6 730.5L604.6 731M606.1 736.9L606.1 731M600.7 736.9L600.7 732.3M604.6 738.5L602.3 738.5M606.1 736.9L604.6 738.5M602.3 738.5L600.7 736.9M596 730.6L596 728.3M596 728.3L601.9 728.3M601.9 728.3L601.9 730.6M601.9 730.6L596 730.6M596 732.2L596 730.6M596 728.3L596 726.8M601.9 728.3L601.9 726.8M594.4 730.6L596 730.6M594.4 728.3L596 728.3M602.4 728.3L601.9 728.3M596 732.2L600.6 732.2M596 726.8L601.9 726.8M594.4 730.6L594.4 728.3M596 732.2L594.4 730.6M594.4 728.3L596 726.8M560.1 690.9L551.8 682.6M551.8 682.6L572.8 661.6M572.8 661.6L581.1 669.9M581.1 669.9L560.1 690.9M565.5 696.4L560.1 690.9M551.8 682.6L546.3 677.2M581.9 670.7L581.1 669.9M572.8 661.6L567.4 656.2M555.2 695.8L560.1 690.9M546.9 687.5L551.8 682.6M581.9 669L581.1 669.9M574.5 659.9L572.8 661.6M565.5 696.4L582.3 679.6M546.3 677.2L567.4 656.2M552 693.8L548.9 690.7M565.5 696.4L556.6 696.4M546.3 686.1L546.3 677.2M568.2 656.2L567.4 656.2M553.9 714.1L547.1 714.1M547.1 714.1L547.1 696.7M547.1 696.7L553.9 696.7M553.9 696.7L553.9 714.1M558.4 714.1L553.9 714.1M547.1 714.1L542.6 714.1M558.4 696.7L553.9 696.7M547.1 696.7L546.7 696.7M553.9 717.8L553.9 714.1M547.1 717.8L547.1 714.1M553.9 695.5L553.9 696.7M547.1 696.3L547.1 696.7M558.4 714.1L558.4 696.7M542.6 714.1L542.6 700.4M551.9 718.6L549.1 718.6M558.4 714.1L554.8 717.7M546.2 717.7L542.6 714.1M558.4 696.7L558.1 696.4M560.9 726.2L558.1 729M558.1 729L550.9 721.9M550.9 721.9L553.7 719M553.7 719L560.9 726.2M562.8 724.3L560.9 726.2M558.1 729L556.2 730.9M555.6 717.2L553.7 719M550.9 721.9L550.6 722.2M562.5 727.8L560.9 726.2M559.6 730.6L558.1 729M553.1 718.4L553.7 719M550.6 721.5L550.9 721.9M562.8 724.3L555.6 717.2M556.2 730.9L550.5 725.1M562.1 728.7L560.6 730.3M562.8 724.3L562.8 727.7M559.5 730.9L556.2 730.9M568.8 728.3L568.8 730.6M568.8 730.6L562.9 730.6M562.9 730.6L562.9 728.3M562.9 728.3L568.8 728.3M568.8 726.8L568.8 728.3M568.8 730.6L568.8 732.2M562.9 726.8L562.9 728.3M570.4 728.3L568.8 728.3M570.4 730.6L568.8 730.6M562.4 728.3L562.9 728.3M568.8 726.8L562.9 726.8M568.8 732.2L564.2 732.2M570.4 728.3L570.4 730.6M568.8 726.8L570.4 728.3M570.4 730.6L568.8 732.2M562.5 736.9L560.2 736.9M560.2 736.9L560.2 731M560.2 731L562.5 731M562.5 731L562.5 736.9M564.1 736.9L562.5 736.9M560.2 736.9L558.7 736.9M560.2 731L558.7 731M562.5 738.5L562.5 736.9M560.2 738.5L560.2 736.9M560.2 730.5L560.2 731M564.1 736.9L564.1 732.3M558.7 736.9L558.7 731M562.5 738.5L560.2 738.5M564.1 736.9L562.5 738.5M560.2 738.5L558.7 736.9M542.9 729L540 726.2M540 726.2L547.2 719M547.2 719L550 721.9M550 721.9L542.9 729M544.7 730.9L542.9 729M540 726.2L538.2 724.3M550.3 722.2L550 721.9M547.2 719L545.4 717.2M541.3 730.6L542.9 729M538.5 727.8L540 726.2M550.3 721.5L550 721.9M547.8 718.4L547.2 719M544.7 730.9L550.5 725.1M538.2 724.3L545.4 717.2M540.4 730.3L538.8 728.7M544.7 730.9L541.4 730.9M538.2 727.7L538.2 724.3M540.8 736.9L538.4 736.9M538.4 736.9L538.4 731M538.4 731L540.8 731M540.8 731L540.8 736.9M542.3 736.9L540.8 736.9M538.4 736.9L536.9 736.9M542.3 731L540.8 731M540.8 738.5L540.8 736.9M538.4 738.5L538.4 736.9M540.8 730.5L540.8 731M542.3 736.9L542.3 731M536.9 736.9L536.9 732.3M540.8 738.5L538.4 738.5M542.3 736.9L540.8 738.5M538.4 738.5L536.9 736.9M532.1 730.6L532.1 728.3M532.1 728.3L538.1 728.3M538.1 728.3L538.1 730.6M538.1 730.6L532.1 730.6M532.1 732.2L532.1 730.6M532.1 728.3L532.1 726.8M538.1 728.3L538.1 726.8M530.6 730.6L532.1 730.6M530.6 728.3L532.1 728.3M538.6 728.3L538.1 728.3M532.1 732.2L536.8 732.2M532.1 726.8L538.1 726.8M530.6 730.6L530.6 728.3M532.1 732.2L530.6 730.6M530.6 728.3L532.1 726.8M528.6 695.6L528.6 688.8M528.6 688.8L546 688.8M546 688.8L546 695.6M546 695.6L528.6 695.6M528.6 700.1L528.6 695.6M528.6 688.8L528.6 684.3M546 696L546 695.6M546 688.8L546 684.3M524.9 695.6L528.6 695.6M524.9 688.8L528.6 688.8M546.4 695.6L546 695.6M547.2 688.8L546 688.8M528.6 700.1L542.3 700.1M528.6 684.3L546 684.3M524.1 693.6L524.1 690.8M528.6 700.1L525 696.5M525 687.9L528.6 684.3M546.3 684.6L546 684.3M516.5 702.7L513.7 699.8M513.7 699.8L520.8 692.7M520.8 692.7L523.7 695.5M523.7 695.5L516.5 702.7M518.4 704.5L516.5 702.7M513.7 699.8L511.8 698M525.5 697.4L523.7 695.5M520.8 692.7L520.5 692.4M514.9 704.2L516.5 702.7M512.1 701.4L513.7 699.8M524.3 694.9L523.7 695.5M521.2 692.4L520.8 692.7M518.4 704.5L525.5 697.4M511.8 698L517.6 692.2M514 703.9L512.4 702.3M518.4 704.5L515 704.5M511.8 701.3L511.8 698M514.4 710.6L512.1 710.6M512.1 710.6L512.1 704.6M512.1 704.6L514.4 704.6M514.4 704.6L514.4 710.6M515.9 710.6L514.4 710.6M512.1 710.6L510.5 710.6M515.9 704.6L514.4 704.6M514.4 712.1L514.4 710.6M512.1 712.1L512.1 710.6M514.4 704.1L514.4 704.6M515.9 710.6L515.9 704.6M510.5 710.6L510.5 705.9M514.4 712.1L512.1 712.1M515.9 710.6L514.4 712.1M512.1 712.1L510.5 710.6M505.8 704.3L505.8 701.9M505.8 701.9L511.7 701.9M511.7 701.9L511.7 704.3M511.7 704.3L505.8 704.3M505.8 705.8L505.8 704.3M505.8 701.9L505.8 700.4M511.7 701.9L511.7 700.4M504.2 704.3L505.8 704.3M504.2 701.9L505.8 701.9M512.2 701.9L511.7 701.9M505.8 705.8L510.4 705.8M505.8 700.4L511.7 700.4M504.2 704.3L504.2 701.9M505.8 705.8L504.2 704.3M504.2 701.9L505.8 700.4M513.7 684.6L516.5 681.8M516.5 681.8L523.7 689M523.7 689L520.8 691.8M520.8 691.8L513.7 684.6M511.8 686.5L513.7 684.6M516.5 681.8L518.4 679.9M520.5 692.1L520.8 691.8M523.7 689L525.5 687.1M512.1 683.1L513.7 684.6M514.9 680.2L516.5 681.8M521.2 692.1L520.8 691.8M524.3 689.6L523.7 689M511.8 686.5L517.6 692.2M518.4 679.9L525.5 687.1M512.4 682.1L514 680.6M511.8 686.5L511.8 683.2M515 679.9L518.4 679.9M505.8 682.5L505.8 680.2M505.8 680.2L511.7 680.2M511.7 680.2L511.7 682.5M511.7 682.5L505.8 682.5M505.8 684L505.8 682.5M505.8 680.2L505.8 678.6M511.7 684L511.7 682.5M504.2 682.5L505.8 682.5M504.2 680.2L505.8 680.2M512.2 682.5L511.7 682.5M505.8 684L511.7 684M505.8 678.6L510.4 678.6M504.2 682.5L504.2 680.2M505.8 684L504.2 682.5M504.2 680.2L505.8 678.6M512.1 673.9L514.4 673.9M514.4 673.9L514.4 679.8M514.4 679.8L512.1 679.8M512.1 679.8L512.1 673.9M510.5 673.9L512.1 673.9M514.4 673.9L515.9 673.9M514.4 679.8L515.9 679.8M512.1 672.3L512.1 673.9M514.4 672.3L514.4 673.9M514.4 680.3L514.4 679.8M510.5 673.9L510.5 678.5M515.9 673.9L515.9 679.8M512.1 672.3L514.4 672.3M510.5 673.9L512.1 672.3M514.4 672.3L515.9 673.9M518.3 593L518.3 573M518.3 573L569.2 573M569.2 573L569.2 593M569.2 593L518.3 593M518.3 606.2L518.3 593M518.3 573L518.3 559.8M569.2 595L569.2 593M569.2 573L569.2 571M506.7 593L518.3 593M506.7 573L518.3 573M571.2 593L569.2 593M571.2 573L569.2 573M518.3 606.2L559.2 606.2M518.3 559.8L559.2 559.8M505.1 586.9L505.1 579.1M518.3 606.2L507.7 595.6M507.7 570.4L518.3 559.8M482.8 613.6L474.5 605.3M474.5 605.3L495.5 584.3M495.5 584.3L503.8 592.6M503.8 592.6L482.8 613.6M488.2 619.1L482.8 613.6M474.5 605.3L469 599.9M509.2 598L503.8 592.6M495.5 584.3L494.7 583.5M477.9 618.5L482.8 613.6M469.6 610.2L474.5 605.3M505.5 590.9L503.8 592.6M496.4 583.5L495.5 584.3M488.2 619.1L509.2 598M469 599.9L485.8 583.1M474.7 616.5L471.6 613.4M488.2 619.1L479.3 619.1M469 608.8L469 599.9M509.2 598L509.2 597.2M476.6 636.8L469.8 636.8M469.8 636.8L469.8 619.4M469.8 619.4L476.6 619.4M476.6 619.4L476.6 636.8M481.1 636.8L476.6 636.8M469.8 636.8L465.3 636.8M481.1 619.4L476.6 619.4M469.8 619.4L469.4 619.4M476.6 640.5L476.6 636.8M469.8 640.5L469.8 636.8M476.6 618.2L476.6 619.4M469.8 619L469.8 619.4M481.1 636.8L481.1 619.4M465.3 636.8L465.3 623.1M474.6 641.3L471.8 641.3M481.1 636.8L477.5 640.4M468.9 640.4L465.3 636.8M481.1 619.4L480.8 619.1M483.6 648.9L480.8 651.7M480.8 651.7L473.6 644.6M473.6 644.6L476.4 641.7M476.4 641.7L483.6 648.9M485.5 647L483.6 648.9M480.8 651.7L478.9 653.6M478.3 639.9L476.4 641.7M473.6 644.6L473.3 644.9M485.2 650.5L483.6 648.9M482.3 653.3L480.8 651.7M475.8 641.1L476.4 641.7M473.3 644.2L473.6 644.6M485.5 647L478.3 639.9M478.9 653.6L473.2 647.8M484.8 651.4L483.3 653M485.5 647L485.5 650.4M482.2 653.6L478.9 653.6M491.5 651L491.5 653.3M491.5 653.3L485.6 653.3M485.6 653.3L485.6 651M485.6 651L491.5 651M491.5 649.5L491.5 651M491.5 653.3L491.5 654.9M485.6 649.5L485.6 651M493.1 651L491.5 651M493.1 653.3L491.5 653.3M485.1 651L485.6 651M491.5 649.5L485.6 649.5M491.5 654.9L486.9 654.9M493.1 651L493.1 653.3M491.5 649.5L493.1 651M493.1 653.3L491.5 654.9M485.2 659.6L482.9 659.6M482.9 659.6L482.9 653.7M482.9 653.7L485.2 653.7M485.2 653.7L485.2 659.6M486.8 659.6L485.2 659.6M482.9 659.6L481.4 659.6M482.9 653.7L481.4 653.7M485.2 661.2L485.2 659.6M482.9 661.2L482.9 659.6M482.9 653.2L482.9 653.7M486.8 659.6L486.8 655M481.4 659.6L481.4 653.7M485.2 661.2L482.9 661.2M486.8 659.6L485.2 661.2M482.9 661.2L481.4 659.6M465.6 651.7L462.7 648.9M462.7 648.9L469.9 641.7M469.9 641.7L472.7 644.6M472.7 644.6L465.6 651.7M467.4 653.6L465.6 651.7M462.7 648.9L460.9 647M473 644.9L472.7 644.6M469.9 641.7L468 639.9M464 653.3L465.6 651.7M461.2 650.5L462.7 648.9M473 644.2L472.7 644.6M470.5 641.1L469.9 641.7M467.4 653.6L473.2 647.8M460.9 647L468 639.9M463.1 653L461.5 651.4M467.4 653.6L464.1 653.6M460.9 650.4L460.9 647M463.5 659.6L461.1 659.6M461.1 659.6L461.1 653.7M461.1 653.7L463.5 653.7M463.5 653.7L463.5 659.6M465 659.6L463.5 659.6M461.1 659.6L459.6 659.6M465 653.7L463.5 653.7M463.5 661.2L463.5 659.6M461.1 661.2L461.1 659.6M463.5 653.2L463.5 653.7M465 659.6L465 653.7M459.6 659.6L459.6 655M463.5 661.2L461.1 661.2M465 659.6L463.5 661.2M461.1 661.2L459.6 659.6M454.8 653.3L454.8 651M454.8 651L460.8 651M460.8 651L460.8 653.3M460.8 653.3L454.8 653.3M454.8 654.9L454.8 653.3M454.8 651L454.8 649.5M460.8 651L460.8 649.5M453.3 653.3L454.8 653.3M453.3 651L454.8 651M461.3 651L460.8 651M454.8 654.9L459.5 654.9M454.8 649.5L460.8 649.5M453.3 653.3L453.3 651M454.8 654.9L453.3 653.3M453.3 651L454.8 649.5M451.3 618.3L451.3 611.5M451.3 611.5L468.7 611.5M468.7 611.5L468.7 618.3M468.7 618.3L451.3 618.3M451.3 622.8L451.3 618.3M451.3 611.5L451.3 607M468.7 618.7L468.7 618.3M468.7 611.5L468.7 607M447.6 618.3L451.3 618.3M447.6 611.5L451.3 611.5M469.1 618.3L468.7 618.3M469.9 611.5L468.7 611.5M451.3 622.8L465 622.8M451.3 607L468.7 607M446.8 616.3L446.8 613.5M451.3 622.8L447.7 619.2M447.7 610.6L451.3 607M469 607.3L468.7 607M439.2 625.4L436.4 622.5M436.4 622.5L443.5 615.4M443.5 615.4L446.4 618.2M446.4 618.2L439.2 625.4M441.1 627.2L439.2 625.4M436.4 622.5L434.5 620.7M448.2 620L446.4 618.2M443.5 615.4L443.2 615.1M437.6 626.9L439.2 625.4M434.8 624.1L436.4 622.5M447 617.6L446.4 618.2M443.9 615.1L443.5 615.4M441.1 627.2L448.2 620M434.5 620.7L440.3 614.9M436.7 626.6L435.1 625M441.1 627.2L437.7 627.2M434.5 624L434.5 620.7M437.1 633.3L434.8 633.3M434.8 633.3L434.8 627.3M434.8 627.3L437.1 627.3M437.1 627.3L437.1 633.3M438.6 633.3L437.1 633.3M434.8 633.3L433.2 633.3M438.6 627.3L437.1 627.3M437.1 634.8L437.1 633.3M434.8 634.8L434.8 633.3M437.1 626.8L437.1 627.3M438.6 633.3L438.6 627.3M433.2 633.3L433.2 628.6M437.1 634.8L434.8 634.8M438.6 633.3L437.1 634.8M434.8 634.8L433.2 633.3M428.5 627L428.5 624.6M428.5 624.6L434.4 624.6M434.4 624.6L434.4 627M434.4 627L428.5 627M428.5 628.5L428.5 627M428.5 624.6L428.5 623.1M434.4 624.6L434.4 623.1M426.9 627L428.5 627M426.9 624.6L428.5 624.6M434.9 624.6L434.4 624.6M428.5 628.5L433.1 628.5M428.5 623.1L434.4 623.1M426.9 627L426.9 624.6M428.5 628.5L426.9 627M426.9 624.6L428.5 623.1M436.4 607.3L439.2 604.5M439.2 604.5L446.4 611.7M446.4 611.7L443.5 614.5M443.5 614.5L436.4 607.3M434.5 609.2L436.4 607.3M439.2 604.5L441.1 602.6M443.2 614.8L443.5 614.5M446.4 611.7L448.2 609.8M434.8 605.8L436.4 607.3M437.6 602.9L439.2 604.5M443.9 614.8L443.5 614.5M447 612.3L446.4 611.7M434.5 609.2L440.3 614.9M441.1 602.6L448.2 609.8M435.1 604.8L436.7 603.3M434.5 609.2L434.5 605.9M437.7 602.6L441.1 602.6M428.5 605.2L428.5 602.9M428.5 602.9L434.4 602.9M434.4 602.9L434.4 605.2M434.4 605.2L428.5 605.2M428.5 606.7L428.5 605.2M428.5 602.9L428.5 601.3M434.4 606.7L434.4 605.2M426.9 605.2L428.5 605.2M426.9 602.9L428.5 602.9M434.9 605.2L434.4 605.2M428.5 606.7L434.4 606.7M428.5 601.3L433.1 601.3M426.9 605.2L426.9 602.9M428.5 606.7L426.9 605.2M426.9 602.9L428.5 601.3M434.8 596.6L437.1 596.6M437.1 596.6L437.1 602.5M437.1 602.5L434.8 602.5M434.8 602.5L434.8 596.6M433.2 596.6L434.8 596.6M437.1 596.6L438.6 596.6M437.1 602.5L438.6 602.5M434.8 595L434.8 596.6M437.1 595L437.1 596.6M437.1 603L437.1 602.5M433.2 596.6L433.2 601.2M438.6 596.6L438.6 602.5M434.8 595L437.1 595M433.2 596.6L434.8 595M437.1 595L438.6 596.6M474.5 560.7L482.8 552.4M482.8 552.4L503.8 573.4M503.8 573.4L495.5 581.7M495.5 581.7L474.5 560.7M469 566.1L474.5 560.7M482.8 552.4L488.2 546.9M494.7 582.5L495.5 581.7M503.8 573.4L509.2 568M469.6 555.8L474.5 560.7M477.9 547.5L482.8 552.4M496.4 582.5L495.5 581.7M505.5 575.1L503.8 573.4M469 566.1L485.8 582.9M488.2 546.9L509.2 568M471.6 552.6L474.7 549.5M469 566.1L469 557.2M479.3 546.9L488.2 546.9M509.2 568.8L509.2 568M451.3 554.5L451.3 547.7M451.3 547.7L468.7 547.7M468.7 547.7L468.7 554.5M468.7 554.5L451.3 554.5M451.3 559L451.3 554.5M451.3 547.7L451.3 543.2M468.7 559L468.7 554.5M468.7 547.7L468.7 547.3M447.6 554.5L451.3 554.5M447.6 547.7L451.3 547.7M469.9 554.5L468.7 554.5M469.1 547.7L468.7 547.7M451.3 559L468.7 559M451.3 543.2L465 543.2M446.8 552.5L446.8 549.7M451.3 559L447.7 555.4M447.7 546.8L451.3 543.2M468.7 559L469 558.7M439.2 561.5L436.4 558.7M436.4 558.7L443.5 551.5M443.5 551.5L446.4 554.3M446.4 554.3L439.2 561.5M441.1 563.4L439.2 561.5M436.4 558.7L434.5 556.8M448.2 556.2L446.4 554.3M443.5 551.5L443.2 551.2M437.6 563.1L439.2 561.5M434.8 560.2L436.4 558.7M447 553.7L446.4 554.3M443.9 551.2L443.5 551.5M441.1 563.4L448.2 556.2M434.5 556.8L440.3 551.1M436.7 562.7L435.1 561.2M441.1 563.4L437.7 563.4M434.5 560.1L434.5 556.8M437.1 569.4L434.8 569.4M434.8 569.4L434.8 563.5M434.8 563.5L437.1 563.5M437.1 563.5L437.1 569.4M438.6 569.4L437.1 569.4M434.8 569.4L433.2 569.4M438.6 563.5L437.1 563.5M437.1 571L437.1 569.4M434.8 571L434.8 569.4M437.1 563L437.1 563.5M438.6 569.4L438.6 563.5M433.2 569.4L433.2 564.8M437.1 571L434.8 571M438.6 569.4L437.1 571M434.8 571L433.2 569.4M428.5 563.1L428.5 560.8M428.5 560.8L434.4 560.8M434.4 560.8L434.4 563.1M434.4 563.1L428.5 563.1M428.5 564.7L428.5 563.1M428.5 560.8L428.5 559.3M434.4 560.8L434.4 559.3M426.9 563.1L428.5 563.1M426.9 560.8L428.5 560.8M434.9 560.8L434.4 560.8M428.5 564.7L433.1 564.7M428.5 559.3L434.4 559.3M426.9 563.1L426.9 560.8M428.5 564.7L426.9 563.1M426.9 560.8L428.5 559.3M436.4 543.5L439.2 540.6M439.2 540.6L446.4 547.8M446.4 547.8L443.5 550.6M443.5 550.6L436.4 543.5M434.5 545.3L436.4 543.5M439.2 540.6L441.1 538.8M443.2 550.9L443.5 550.6M446.4 547.8L448.2 546M434.8 541.9L436.4 543.5M437.6 539.1L439.2 540.6M443.9 550.9L443.5 550.6M447 548.4L446.4 547.8M434.5 545.3L440.3 551.1M441.1 538.8L448.2 546M435.1 541L436.7 539.4M434.5 545.3L434.5 542M437.7 538.8L441.1 538.8M428.5 541.4L428.5 539M428.5 539L434.4 539M434.4 539L434.4 541.4M434.4 541.4L428.5 541.4M428.5 542.9L428.5 541.4M428.5 539L428.5 537.5M434.4 542.9L434.4 541.4M426.9 541.4L428.5 541.4M426.9 539L428.5 539M434.9 541.4L434.4 541.4M428.5 542.9L434.4 542.9M428.5 537.5L433.1 537.5M426.9 541.4L426.9 539M428.5 542.9L426.9 541.4M426.9 539L428.5 537.5M434.8 532.7L437.1 532.7M437.1 532.7L437.1 538.7M437.1 538.7L434.8 538.7M434.8 538.7L434.8 532.7M433.2 532.7L434.8 532.7M437.1 532.7L438.6 532.7M437.1 538.7L438.6 538.7M434.8 531.2L434.8 532.7M437.1 531.2L437.1 532.7M437.1 539.2L437.1 538.7M433.2 532.7L433.2 537.4M438.6 532.7L438.6 538.7M434.8 531.2L437.1 531.2M433.2 532.7L434.8 531.2M437.1 531.2L438.6 532.7M469.8 529.2L476.6 529.2M476.6 529.2L476.6 546.6M476.6 546.6L469.8 546.6M469.8 546.6L469.8 529.2M465.3 529.2L469.8 529.2M476.6 529.2L481.1 529.2M469.4 546.6L469.8 546.6M476.6 546.6L481.1 546.6M469.8 525.5L469.8 529.2M476.6 525.5L476.6 529.2M469.8 547L469.8 546.6M476.6 547.8L476.6 546.6M465.3 529.2L465.3 542.9M481.1 529.2L481.1 546.6M471.8 524.7L474.6 524.7M465.3 529.2L468.9 525.6M477.5 525.6L481.1 529.2M480.8 546.9L481.1 546.6M462.7 517.1L465.6 514.3M465.6 514.3L472.7 521.4M472.7 521.4L469.9 524.3M469.9 524.3L462.7 517.1M460.9 519L462.7 517.1M465.6 514.3L467.4 512.4M468 526.1L469.9 524.3M472.7 521.4L473 521.1M461.2 515.5L462.7 517.1M464 512.7L465.6 514.3M470.5 524.9L469.9 524.3M473 521.8L472.7 521.4M460.9 519L468 526.1M467.4 512.4L473.2 518.2M461.5 514.6L463.1 513M460.9 519L460.9 515.6M464.1 512.4L467.4 512.4M454.8 515L454.8 512.7M454.8 512.7L460.8 512.7M460.8 512.7L460.8 515M460.8 515L454.8 515M454.8 516.5L454.8 515M454.8 512.7L454.8 511.1M460.8 516.5L460.8 515M453.3 515L454.8 515M453.3 512.7L454.8 512.7M461.3 515L460.8 515M454.8 516.5L460.8 516.5M454.8 511.1L459.5 511.1M453.3 515L453.3 512.7M454.8 516.5L453.3 515M453.3 512.7L454.8 511.1M461.1 506.4L463.5 506.4M463.5 506.4L463.5 512.3M463.5 512.3L461.1 512.3M461.1 512.3L461.1 506.4M459.6 506.4L461.1 506.4M463.5 506.4L465 506.4M463.5 512.3L465 512.3M461.1 504.8L461.1 506.4M463.5 504.8L463.5 506.4M463.5 512.8L463.5 512.3M459.6 506.4L459.6 511M465 506.4L465 512.3M461.1 504.8L463.5 504.8M459.6 506.4L461.1 504.8M463.5 504.8L465 506.4M480.8 514.3L483.6 517.1M483.6 517.1L476.4 524.3M476.4 524.3L473.6 521.4M473.6 521.4L480.8 514.3M478.9 512.4L480.8 514.3M483.6 517.1L485.5 519M473.3 521.1L473.6 521.4M476.4 524.3L478.3 526.1M482.3 512.7L480.8 514.3M485.2 515.5L483.6 517.1M473.3 521.8L473.6 521.4M475.8 524.9L476.4 524.3M478.9 512.4L473.2 518.2M485.5 519L478.3 526.1M483.3 513L484.8 514.6M478.9 512.4L482.2 512.4M485.5 515.6L485.5 519M482.9 506.4L485.2 506.4M485.2 506.4L485.2 512.3M485.2 512.3L482.9 512.3M482.9 512.3L482.9 506.4M481.4 506.4L482.9 506.4M485.2 506.4L486.8 506.4M481.4 512.3L482.9 512.3M482.9 504.8L482.9 506.4M485.2 504.8L485.2 506.4M482.9 512.8L482.9 512.3M481.4 506.4L481.4 512.3M486.8 506.4L486.8 511M482.9 504.8L485.2 504.8M481.4 506.4L482.9 504.8M485.2 504.8L486.8 506.4M491.5 512.7L491.5 515M491.5 515L485.6 515M485.6 515L485.6 512.7M485.6 512.7L491.5 512.7M491.5 511.1L491.5 512.7M491.5 515L491.5 516.5M485.6 515L485.6 516.5M493.1 512.7L491.5 512.7M493.1 515L491.5 515M485.1 515L485.6 515M491.5 511.1L486.9 511.1M491.5 516.5L485.6 516.5M493.1 512.7L493.1 515M491.5 511.1L493.1 512.7M493.1 515L491.5 516.5"/><use href="#bg135" transform="translate(514.3 494.8) scale(1.58)" stroke-width="0.571"/><use href="#bg225" transform="translate(512.1 494.8) scale(1.58)" stroke-width="0.571"/><use href="#bg225" transform="translate(503.1 485.8) scale(1.58)" stroke-width="0.571"/><use href="#bg315" transform="translate(503.1 483.5) scale(1.58)" stroke-width="0.571"/><use href="#bg225" transform="translate(503.1 464) scale(1.58)" stroke-width="0.571"/><use href="#bg315" transform="translate(503.1 461.8) scale(1.58)" stroke-width="0.571"/><use href="#bg315" transform="translate(512.1 452.8) scale(1.58)" stroke-width="0.571"/><use href="#bg45" transform="translate(514.3 452.8) scale(1.58)" stroke-width="0.571"/><use href="#bg225" transform="translate(529.5 437.6) scale(1.58)" stroke-width="0.571"/><use href="#bg315" transform="translate(529.5 435.4) scale(1.58)" stroke-width="0.571"/><use href="#bg315" transform="translate(538.5 426.4) scale(1.58)" stroke-width="0.571"/><use href="#bg45" transform="translate(540.7 426.4) scale(1.58)" stroke-width="0.571"/><use href="#bg315" transform="translate(560.3 426.4) scale(1.58)" stroke-width="0.571"/><use href="#bg45" transform="translate(562.5 426.4) scale(1.58)" stroke-width="0.571"/><use href="#bg45" transform="translate(571.5 435.4) scale(1.58)" stroke-width="0.571"/><use href="#bg135" transform="translate(571.5 437.6) scale(1.58)" stroke-width="0.571"/><use href="#bg225" transform="translate(593.3 437.6) scale(1.58)" stroke-width="0.571"/><use href="#bg315" transform="translate(593.3 435.4) scale(1.58)" stroke-width="0.571"/><use href="#bg315" transform="translate(602.3 426.4) scale(1.58)" stroke-width="0.571"/><use href="#bg45" transform="translate(604.5 426.4) scale(1.58)" stroke-width="0.571"/><use href="#bg315" transform="translate(624.1 426.4) scale(1.58)" stroke-width="0.571"/><use href="#bg45" transform="translate(626.3 426.4) scale(1.58)" stroke-width="0.571"/><use href="#bg45" transform="translate(635.3 435.4) scale(1.58)" stroke-width="0.571"/><use href="#bg135" transform="translate(635.3 437.6) scale(1.58)" stroke-width="0.571"/><use href="#bg315" transform="translate(650.5 452.8) scale(1.58)" stroke-width="0.571"/><use href="#bg45" transform="translate(652.7 452.8) scale(1.58)" stroke-width="0.571"/><use href="#bg45" transform="translate(661.7 461.8) scale(1.58)" stroke-width="0.571"/><use href="#bg135" transform="translate(661.7 464) scale(1.58)" stroke-width="0.571"/><use href="#bg45" transform="translate(661.7 483.5) scale(1.58)" stroke-width="0.571"/><use href="#bg135" transform="translate(661.7 485.8) scale(1.58)" stroke-width="0.571"/><use href="#bg135" transform="translate(652.7 494.8) scale(1.58)" stroke-width="0.571"/><use href="#bg225" transform="translate(650.5 494.8) scale(1.58)" stroke-width="0.571"/><use href="#bg225" transform="translate(670.6 514.9) scale(1.58)" stroke-width="0.571"/><use href="#bg315" transform="translate(670.6 512.7) scale(1.58)" stroke-width="0.571"/><use href="#bg315" transform="translate(679.6 503.7) scale(1.58)" stroke-width="0.571"/><use href="#bg45" transform="translate(681.9 503.7) scale(1.58)" stroke-width="0.571"/><use href="#bg315" transform="translate(701.4 503.7) scale(1.58)" stroke-width="0.571"/><use href="#bg45" transform="translate(703.6 503.7) scale(1.58)" stroke-width="0.571"/><use href="#bg45" transform="translate(712.6 512.7) scale(1.58)" stroke-width="0.571"/><use href="#bg135" transform="translate(712.6 514.9) scale(1.58)" stroke-width="0.571"/><use href="#bg315" transform="translate(727.8 530.1) scale(1.58)" stroke-width="0.571"/><use href="#bg45" transform="translate(730 530.1) scale(1.58)" stroke-width="0.571"/><use href="#bg45" transform="translate(739 539.1) scale(1.58)" stroke-width="0.571"/><use href="#bg135" transform="translate(739 541.3) scale(1.58)" stroke-width="0.571"/><use href="#bg45" transform="translate(739 560.9) scale(1.58)" stroke-width="0.571"/><use href="#bg135" transform="translate(739 563.1) scale(1.58)" stroke-width="0.571"/><use href="#bg135" transform="translate(730 572.1) scale(1.58)" stroke-width="0.571"/><use href="#bg225" transform="translate(727.8 572.1) scale(1.58)" stroke-width="0.571"/><use href="#bg315" transform="translate(727.8 593.9) scale(1.58)" stroke-width="0.571"/><use href="#bg45" transform="translate(730 593.9) scale(1.58)" stroke-width="0.571"/><use href="#bg45" transform="translate(739 602.9) scale(1.58)" stroke-width="0.571"/><use href="#bg135" transform="translate(739 605.1) scale(1.58)" stroke-width="0.571"/><use href="#bg45" transform="translate(739 624.7) scale(1.58)" stroke-width="0.571"/><use href="#bg135" transform="translate(739 626.9) scale(1.58)" stroke-width="0.571"/><use href="#bg135" transform="translate(730 635.9) scale(1.58)" stroke-width="0.571"/><use href="#bg225" transform="translate(727.8 635.9) scale(1.58)" stroke-width="0.571"/><use href="#bg45" transform="translate(712.6 651.1) scale(1.58)" stroke-width="0.571"/><use href="#bg135" transform="translate(712.6 653.3) scale(1.58)" stroke-width="0.571"/><use href="#bg135" transform="translate(703.6 662.3) scale(1.58)" stroke-width="0.571"/><use href="#bg225" transform="translate(701.4 662.3) scale(1.58)" stroke-width="0.571"/><use href="#bg135" transform="translate(681.9 662.3) scale(1.58)" stroke-width="0.571"/><use href="#bg225" transform="translate(679.6 662.3) scale(1.58)" stroke-width="0.571"/><use href="#bg225" transform="translate(670.6 653.3) scale(1.58)" stroke-width="0.571"/><use href="#bg315" transform="translate(670.6 651.1) scale(1.58)" stroke-width="0.571"/><use href="#bg315" transform="translate(650.5 671.2) scale(1.58)" stroke-width="0.571"/><use href="#bg45" transform="translate(652.7 671.2) scale(1.58)" stroke-width="0.571"/><use href="#bg45" transform="translate(661.7 680.2) scale(1.58)" stroke-width="0.571"/><use href="#bg135" transform="translate(661.7 682.5) scale(1.58)" stroke-width="0.571"/><use href="#bg45" transform="translate(661.7 702) scale(1.58)" stroke-width="0.571"/><use href="#bg135" transform="translate(661.7 704.2) scale(1.58)" stroke-width="0.571"/><use href="#bg135" transform="translate(652.7 713.2) scale(1.58)" stroke-width="0.571"/><use href="#bg225" transform="translate(650.5 713.2) scale(1.58)" stroke-width="0.571"/><use href="#bg45" transform="translate(635.3 728.4) scale(1.58)" stroke-width="0.571"/><use href="#bg135" transform="translate(635.3 730.6) scale(1.58)" stroke-width="0.571"/><use href="#bg135" transform="translate(626.3 739.6) scale(1.58)" stroke-width="0.571"/><use href="#bg225" transform="translate(624.1 739.6) scale(1.58)" stroke-width="0.571"/><use href="#bg135" transform="translate(604.5 739.6) scale(1.58)" stroke-width="0.571"/><use href="#bg225" transform="translate(602.3 739.6) scale(1.58)" stroke-width="0.571"/><use href="#bg225" transform="translate(593.3 730.6) scale(1.58)" stroke-width="0.571"/><use href="#bg315" transform="translate(593.3 728.4) scale(1.58)" stroke-width="0.571"/><use href="#bg45" transform="translate(571.5 728.4) scale(1.58)" stroke-width="0.571"/><use href="#bg135" transform="translate(571.5 730.6) scale(1.58)" stroke-width="0.571"/><use href="#bg135" transform="translate(562.5 739.6) scale(1.58)" stroke-width="0.571"/><use href="#bg225" transform="translate(560.3 739.6) scale(1.58)" stroke-width="0.571"/><use href="#bg135" transform="translate(540.7 739.6) scale(1.58)" stroke-width="0.571"/><use href="#bg225" transform="translate(538.5 739.6) scale(1.58)" stroke-width="0.571"/><use href="#bg225" transform="translate(529.5 730.6) scale(1.58)" stroke-width="0.571"/><use href="#bg315" transform="translate(529.5 728.4) scale(1.58)" stroke-width="0.571"/><use href="#bg135" transform="translate(514.3 713.2) scale(1.58)" stroke-width="0.571"/><use href="#bg225" transform="translate(512.1 713.2) scale(1.58)" stroke-width="0.571"/><use href="#bg225" transform="translate(503.1 704.2) scale(1.58)" stroke-width="0.571"/><use href="#bg315" transform="translate(503.1 702) scale(1.58)" stroke-width="0.571"/><use href="#bg225" transform="translate(503.1 682.5) scale(1.58)" stroke-width="0.571"/><use href="#bg315" transform="translate(503.1 680.2) scale(1.58)" stroke-width="0.571"/><use href="#bg315" transform="translate(512.1 671.2) scale(1.58)" stroke-width="0.571"/><use href="#bg45" transform="translate(514.3 671.2) scale(1.58)" stroke-width="0.571"/><use href="#bg45" transform="translate(494.2 651.1) scale(1.58)" stroke-width="0.571"/><use href="#bg135" transform="translate(494.2 653.3) scale(1.58)" stroke-width="0.571"/><use href="#bg135" transform="translate(485.2 662.3) scale(1.58)" stroke-width="0.571"/><use href="#bg225" transform="translate(482.9 662.3) scale(1.58)" stroke-width="0.571"/><use href="#bg135" transform="translate(463.4 662.3) scale(1.58)" stroke-width="0.571"/><use href="#bg225" transform="translate(461.2 662.3) scale(1.58)" stroke-width="0.571"/><use href="#bg225" transform="translate(452.2 653.3) scale(1.58)" stroke-width="0.571"/><use href="#bg315" transform="translate(452.2 651.1) scale(1.58)" stroke-width="0.571"/><use href="#bg135" transform="translate(437 635.9) scale(1.58)" stroke-width="0.571"/><use href="#bg225" transform="translate(434.8 635.9) scale(1.58)" stroke-width="0.571"/><use href="#bg225" transform="translate(425.8 626.9) scale(1.58)" stroke-width="0.571"/><use href="#bg315" transform="translate(425.8 624.7) scale(1.58)" stroke-width="0.571"/><use href="#bg225" transform="translate(425.8 605.1) scale(1.58)" stroke-width="0.571"/><use href="#bg315" transform="translate(425.8 602.9) scale(1.58)" stroke-width="0.571"/><use href="#bg315" transform="translate(434.8 593.9) scale(1.58)" stroke-width="0.571"/><use href="#bg45" transform="translate(437 593.9) scale(1.58)" stroke-width="0.571"/><use href="#bg135" transform="translate(437 572.1) scale(1.58)" stroke-width="0.571"/><use href="#bg225" transform="translate(434.8 572.1) scale(1.58)" stroke-width="0.571"/><use href="#bg225" transform="translate(425.8 563.1) scale(1.58)" stroke-width="0.571"/><use href="#bg315" transform="translate(425.8 560.9) scale(1.58)" stroke-width="0.571"/><use href="#bg225" transform="translate(425.8 541.3) scale(1.58)" stroke-width="0.571"/><use href="#bg315" transform="translate(425.8 539.1) scale(1.58)" stroke-width="0.571"/><use href="#bg315" transform="translate(434.8 530.1) scale(1.58)" stroke-width="0.571"/><use href="#bg45" transform="translate(437 530.1) scale(1.58)" stroke-width="0.571"/><use href="#bg225" transform="translate(452.2 514.9) scale(1.58)" stroke-width="0.571"/><use href="#bg315" transform="translate(452.2 512.7) scale(1.58)" stroke-width="0.571"/><use href="#bg315" transform="translate(461.2 503.7) scale(1.58)" stroke-width="0.571"/><use href="#bg45" transform="translate(463.4 503.7) scale(1.58)" stroke-width="0.571"/><use href="#bg315" transform="translate(482.9 503.7) scale(1.58)" stroke-width="0.571"/><use href="#bg45" transform="translate(485.2 503.7) scale(1.58)" stroke-width="0.571"/><use href="#bg45" transform="translate(494.2 512.7) scale(1.58)" stroke-width="0.571"/><use href="#bg135" transform="translate(494.2 514.9) scale(1.58)" stroke-width="0.571"/></svg></div><div class="r" style="left:872.0px;top:0.0px;width:1.0px;height:776.0px;background:#474747;"></div><div class="r" style="left:873.0px;top:0.0px;width:1.0px;height:776.0px;background:#1b1b1b;"></div><div class="r" style="left:874.0px;top:0.0px;width:587.0px;height:776.0px;background:#2a2a2a;"></div><div class="r" style="left:1459.0px;top:0.0px;width:1.0px;height:776.0px;background:#222222;"></div><div class="r" style="left:1460.0px;top:0.0px;width:1.0px;height:776.0px;background:#3a3a3a;"></div><div class="r" style="left:874.0px;top:92.0px;width:585.0px;height:2.0px;background:#1e1e1e;"></div><div class="r" style="left:874.0px;top:121.5px;width:585.0px;height:1.5px;background:#1e1e1e;"></div><svg class="r" style="left:879px;top:102.5px;" width="14" height="11" viewBox="0 0 14 11"><path d="M0 1H14M0 5.5H14M0 10H14" stroke="#9c9c9c" stroke-width="1.8"/></svg><span class="t" style="left:902.7px;top:101.8px;font-size:13.5px;color:#c4c4c4;font-weight:400;">File</span><span class="t" style="left:937.6px;top:101.8px;font-size:13.5px;color:#c4c4c4;font-weight:400;">Edit</span><span class="t" style="left:975.5px;top:101.8px;font-size:13.5px;color:#c4c4c4;font-weight:400;">View</span><span class="t" style="left:1019.1px;top:101.8px;font-size:13.5px;color:#c4c4c4;font-weight:400;">Object</span><span class="t" style="left:1074.5px;top:101.8px;font-size:13.5px;color:#c4c4c4;font-weight:400;">Tags</span><span class="t" style="left:1116.6px;top:101.8px;font-size:13.5px;color:#c4c4c4;font-weight:400;">Bookmarks</span><svg class="r" style="left:1380px;top:99px;" width="20" height="18" viewBox="0 0 20 18"><circle cx="8.4" cy="7.5" r="4.6" fill="none" stroke="#9a9a9a" stroke-width="1.6"/><path d="M11.8 11L16.6 15.6" stroke="#9a9a9a" stroke-width="1.8"/></svg><svg class="r" style="left:1402px;top:99px;" width="18" height="18" viewBox="0 0 18 18"><path d="M3 15.5V7.2L8 2.6L13 7.2V15.5Z" fill="none" stroke="#9a9a9a" stroke-width="1.5"/><rect x="6.6" y="11.2" width="2.8" height="4.3" fill="#9a9a9a"/></svg><svg class="r" style="left:1422px;top:99px;" width="18" height="18" viewBox="0 0 18 18"><path d="M1 5.2H15M3 9.2H13M6 12.9H10" stroke="#9a9a9a" stroke-width="1.7"/></svg><svg class="r" style="left:1441px;top:99px;" width="18" height="18" viewBox="0 0 18 18"><path d="M7.5 2.7H2.7V15.5H15.5V10.5" fill="none" stroke="#9a9a9a" stroke-width="1.5"/><path d="M8.5 9.7L15 3.2M10.5 2.7H15.5V7.7" fill="none" stroke="#9a9a9a" stroke-width="1.5"/></svg><div class="r" style="left:874.0px;top:123.0px;width:583.0px;height:21.5px;background:#252525;border-radius:0 6px 6px 0"></div><div class="r" style="left:874.0px;top:165.5px;width:583.0px;height:21.0px;background:#252525;border-radius:0 6px 6px 0"></div><div class="r" style="left:1194.0px;top:144.0px;width:1.0px;height:108.0px;background:#202020;"></div><svg class="r" style="left:876px;top:128px;" width="12" height="12" viewBox="0 0 12 12"><rect x="1.5" y="2.5" width="8" height="8" fill="none" stroke="#8a8a8a" stroke-width="1"/><path d="M3.5 6.5H7.5M5.5 4.5V8.5" stroke="#8a8a8a" stroke-width="1"/><path d="M5.5 0V2.5" stroke="#555" stroke-width="1"/></svg><svg class="r" style="left:890.2px;top:127.2px;" width="14.6" height="14.6" viewBox="0 0 14.6 14.6"><rect x="0.5" y="0.5" width="13.6" height="13.6" rx="1.2" fill="#44eaa6" stroke="#0d3b24" stroke-width="1"/><path d="M7.373 1.46L13.14 11.972H1.46Z" fill="#ffffff" stroke="#0d3b24" stroke-width="0.8"/><path d="M4.8180000000000005 7.3H9.928L7.373 11.096Z" fill="#ffffff" stroke="#111" stroke-width="1.095" stroke-linejoin="round"/></svg><span class="t" style="left:908.8px;top:127.8px;font-size:13.0px;color:#c8c8c8;font-weight:400;">mtFractal_Tree</span><svg class="r" style="left:890px;top:143px;" width="20" height="36" viewBox="0 0 20 36"><path d="M3.5 1V33.5M3.5 12.5H12M3.5 33.5H12" stroke="#6a6a6a" stroke-width="1" stroke-dasharray="1 1.5"/></svg><svg class="r" style="left:902px;top:148px;" width="16" height="16" viewBox="0 0 16 16"><ellipse cx="7.5" cy="7" rx="6.4" ry="6.2" fill="#8fd3f5"/><path d="M1.2 7.5Q7.5 11.5 13.8 7.5" fill="none" stroke="#2a2a2a" stroke-width="1.3"/></svg><span class="t" style="left:920.6px;top:148.9px;font-size:13.2px;color:#c8c8c8;font-weight:400;">Sphere</span><svg class="r" style="left:902px;top:169px;" width="16" height="16" viewBox="0 0 16 16"><path d="M7.5 1L13.6 4.2V10.8L7.5 14L1.4 10.8V4.2Z" fill="#8fd3f5"/><path d="M1.4 4.2L7.5 7.4L13.6 4.2M7.5 7.4V14" fill="none" stroke="#2a2a2a" stroke-width="1.1"/></svg><span class="t" style="left:920.6px;top:169.9px;font-size:13.2px;color:#c8c8c8;font-weight:400;">Cube</span><svg class="r" style="left:1150px;top:127px;" width="44" height="14" viewBox="0 0 44 14"><rect x="1.3" y="1" width="10" height="10" rx="2" fill="#545454"/><path d="M3.6 8.6L8.8 3.4" stroke="#2e2e2e" stroke-width="1.6"/><circle cx="20" cy="2.3" r="2.7" fill="#5a5a5a"/><circle cx="20" cy="11.4" r="2.7" fill="#5a5a5a"/><path d="M27.5 6.3L31 9.8L38.5 2.4" fill="none" stroke="#4fd27c" stroke-width="1.9"/></svg><svg class="r" style="left:1150px;top:148px;" width="44" height="14" viewBox="0 0 44 14"><rect x="1.3" y="1" width="10" height="10" rx="2" fill="#545454"/><path d="M3.6 8.6L8.8 3.4" stroke="#2e2e2e" stroke-width="1.6"/><circle cx="20" cy="2.3" r="2.7" fill="#5a5a5a"/><circle cx="20" cy="11.4" r="2.7" fill="#5a5a5a"/><path d="M27.5 6.3L31 9.8L38.5 2.4" fill="none" stroke="#4fd27c" stroke-width="1.9"/></svg><svg class="r" style="left:1197px;top:147px;" width="16" height="14" viewBox="0 0 16 14"><path d="M2.5 13V2.3H14" fill="none" stroke="#6464d0" stroke-width="1.6"/><path d="M4.8 4.5H11.2Q11 10 4.8 10.5Z" fill="#c8c8c8"/></svg><svg class="r" style="left:1150px;top:169px;" width="44" height="14" viewBox="0 0 44 14"><rect x="1.3" y="1" width="10" height="10" rx="2" fill="#545454"/><path d="M3.6 8.6L8.8 3.4" stroke="#2e2e2e" stroke-width="1.6"/><circle cx="20" cy="2.3" r="2.7" fill="#5a5a5a"/><circle cx="20" cy="11.4" r="2.7" fill="#5a5a5a"/><path d="M27.5 6.3L31 9.8L38.5 2.4" fill="none" stroke="#4fd27c" stroke-width="1.9"/></svg><svg class="r" style="left:1197px;top:168px;" width="16" height="14" viewBox="0 0 16 14"><path d="M2.5 13V2.3H14" fill="none" stroke="#6464d0" stroke-width="1.6"/><path d="M4.8 4.5H11.2Q11 10 4.8 10.5Z" fill="#c8c8c8"/></svg><div class="r" style="left:874.0px;top:252.0px;width:585.0px;height:18.0px;background:#1f1f1f;"></div><svg class="r" style="left:877px;top:256px;" width="10" height="10" viewBox="0 0 10 10"><path d="M1.5 1.8L8 8.2M8 1.8L1.5 8.2" stroke="#b0b0b0" stroke-width="1.5"/></svg><span class="t" style="left:897.2px;top:257.3px;font-size:14.3px;color:#e4e4e4;font-weight:400;">Attributes</span><svg class="r" style="left:880px;top:284.5px;" width="14" height="11" viewBox="0 0 14 11"><path d="M0 1H14M0 5.5H14M0 10H14" stroke="#9c9c9c" stroke-width="1.8"/></svg><span class="t" style="left:903.7px;top:283.3px;font-size:13.6px;color:#c4c4c4;font-weight:400;">Mode</span><span class="t" style="left:954.7px;top:283.3px;font-size:13.6px;color:#c4c4c4;font-weight:400;">Edit</span><span class="t" style="left:992.4px;top:283.3px;font-size:13.6px;color:#c4c4c4;font-weight:400;">User Data</span><div class="r" style="left:874.0px;top:303.5px;width:585.0px;height:1.0px;background:#232323;"></div><svg class="r" style="left:1300px;top:282px;" width="18" height="16" viewBox="0 0 18 16"><path d="M15.5 8H3M8.2 2.8L3 8L8.2 13.2" fill="none" stroke="#9a9a9a" stroke-width="1.6"/></svg><svg class="r" style="left:1320px;top:282px;" width="18" height="16" viewBox="0 0 18 16"><path d="M2.5 8H15M9.8 2.8L15 8L9.8 13.2" fill="none" stroke="#5c5c5c" stroke-width="1.6"/></svg><svg class="r" style="left:1341px;top:282px;" width="16" height="16" viewBox="0 0 16 16"><path d="M8 15.5V3M2.8 8.2L8 3L13.2 8.2" fill="none" stroke="#9a9a9a" stroke-width="1.6"/></svg><svg class="r" style="left:1361px;top:282px;" width="18" height="16" viewBox="0 0 18 16"><circle cx="6.3" cy="6.6" r="4.1" fill="none" stroke="#9a9a9a" stroke-width="1.5"/><path d="M9.3 9.8L14 14.4" stroke="#9a9a9a" stroke-width="1.7"/></svg><svg class="r" style="left:1381px;top:282px;" width="16" height="16" viewBox="0 0 16 16"><path d="M0.8 4.3H14.8M2.8 8.2H12.8M5.6 11.9H10" stroke="#9a9a9a" stroke-width="1.6"/></svg><svg class="r" style="left:1402px;top:282px;" width="15" height="16" viewBox="0 0 15 16"><path d="M3.9 8V5.5A3.6 3.6 0 0 1 11.1 5.5V8" fill="none" stroke="#f4f4f4" stroke-width="1.8"/><rect x="1.5" y="7.6" width="12" height="7.3" rx="1" fill="#f4f4f4"/></svg><svg class="r" style="left:1420px;top:282px;" width="18" height="17" viewBox="0 0 18 17"><circle cx="8.9" cy="8" r="7.2" fill="none" stroke="#9a9a9a" stroke-width="1.4"/><circle cx="8.9" cy="8" r="2.8" fill="none" stroke="#9a9a9a" stroke-width="1.4"/></svg><svg class="r" style="left:1441px;top:282px;" width="17" height="17" viewBox="0 0 17 17"><path d="M6.6 2H1.8V14.8H14.8V10" fill="none" stroke="#9a9a9a" stroke-width="1.5"/><path d="M7.6 9L14.2 2.4M9.8 2H14.8V7" fill="none" stroke="#9a9a9a" stroke-width="1.5"/></svg><svg class="r" style="left:881.9px;top:310.2px;" width="18.5" height="18.5" viewBox="0 0 18.5 18.5"><rect x="0.5" y="0.5" width="17.5" height="17.5" rx="1.2" fill="#44eaa6" stroke="#0d3b24" stroke-width="1"/><path d="M9.3425 1.85L16.650000000000002 15.17H1.85Z" fill="#ffffff" stroke="#0d3b24" stroke-width="0.8"/><path d="M6.105 9.25H12.58L9.3425 14.06Z" fill="#ffffff" stroke="#111" stroke-width="1.3875" stroke-linejoin="round"/></svg><span class="t" style="left:905.5px;top:313.7px;font-size:13.65px;color:#c8c8c8;font-weight:400;">mtFractal Object [mtFractal_Dragon_Mesh]</span><div class="r" style="left:1335.6px;top:309.0px;width:116.4px;height:23.0px;background:#3b3b3b;border-radius:6px"></div><div class="r" style="left:1432.3px;top:309.0px;width:1.0px;height:23.0px;background:#2c2c2c;"></div><svg class="r" style="left:1436px;top:316px;" width="12" height="7" viewBox="0 0 12 7"><path d="M2.5 1.6H9.6L6.05 5.4Z" fill="#d0d0d0"/></svg><span class="t" style="left:1341.9px;top:313.8px;font-size:13.5px;color:#d4d4d4;font-weight:400;">Custom</span><div class="r" style="left:882.0px;top:336.0px;width:57.0px;height:26.0px;background:#393939;border-radius:5px"></div><span class="t" style="left:894.8px;top:343.4px;font-size:12.5px;color:#c4c4c4;font-weight:400;">Basic</span><div class="r" style="left:943.4px;top:336.0px;width:99.6px;height:26.0px;background:#393939;border-radius:5px"></div><span class="t" style="left:955.0px;top:343.2px;font-size:13.8px;color:#c4c4c4;font-weight:400;">Coordinates</span><div class="r" style="left:1048.3px;top:336.0px;width:66.3px;height:26.0px;background:#57589f;border-radius:5px"></div><span class="t" style="left:1060.4px;top:343.2px;font-size:14.0px;color:#f4f4f4;font-weight:400;">Object</span><div class="r" style="left:1119.5px;top:336.0px;width:90.5px;height:26.0px;background:#393939;border-radius:5px"></div><span class="t" style="left:1130.6px;top:343.3px;font-size:13.4px;color:#c4c4c4;font-weight:400;">X-Particles</span><div class="r" style="left:1214.6px;top:336.0px;width:70.4px;height:26.0px;background:#393939;border-radius:5px"></div><span class="t" style="left:1226.1px;top:343.2px;font-size:13.75px;color:#c4c4c4;font-weight:400;">Display</span><span class="t" style="left:881.4px;top:372.6px;font-size:14.8px;color:#f2f2f2;font-weight:400;">Object Properties</span><svg class="r" style="left:883px;top:401.4px;" width="12" height="12" viewBox="0 0 12 12"><path d="M5.5 1.3L9.9 5.7L5.5 10.1L1.1 5.7Z" fill="none" stroke="#b8b8b8" stroke-width="1.3"/></svg><span class="t" style="left:903.8px;top:400.3px;font-size:13.5px;color:#bababa;font-weight:400;">Core Shape</span><div class="r" style="left:996.0px;top:395.4px;width:454.5px;height:23.6px;background:#3c3c3c;border-radius:5px"></div><svg class="r" style="left:1436px;top:405.4px;" width="12" height="7" viewBox="0 0 12 7"><path d="M2 1.2H9L5.5 4.9Z" fill="#d0d0d0"/></svg><svg class="r" style="left:883px;top:426.0px;" width="12" height="12" viewBox="0 0 12 12"><path d="M5.5 1.3L9.9 5.7L5.5 10.1L1.1 5.7Z" fill="none" stroke="#b8b8b8" stroke-width="1.3"/></svg><span class="t" style="left:903.8px;top:424.9px;font-size:13.5px;color:#bababa;font-weight:400;">Clone Type</span><div class="r" style="left:996.0px;top:420.7px;width:454.5px;height:23.4px;background:#3c3c3c;border-radius:5px"></div><svg class="r" style="left:1436px;top:430.6px;" width="12" height="7" viewBox="0 0 12 7"><path d="M2 1.2H9L5.5 4.9Z" fill="#d0d0d0"/></svg><svg class="r" style="left:883px;top:451.7px;" width="12" height="12" viewBox="0 0 12 12"><path d="M5.5 1.3L9.9 5.7L5.5 10.1L1.1 5.7Z" fill="none" stroke="#b8b8b8" stroke-width="1.3"/></svg><span class="t" style="left:903.8px;top:450.6px;font-size:13.5px;color:#eba052;font-weight:400;">Center</span><div class="r" style="left:996.0px;top:445.9px;width:454.5px;height:23.5px;background:#3c3c3c;border-radius:5px"></div><svg class="r" style="left:1436px;top:455.8px;" width="12" height="7" viewBox="0 0 12 7"><path d="M2 1.2H9L5.5 4.9Z" fill="#d0d0d0"/></svg><svg class="r" style="left:883px;top:483.7px;" width="12" height="12" viewBox="0 0 12 12"><path d="M5.5 1.3L9.9 5.7L5.5 10.1L1.1 5.7Z" fill="none" stroke="#b8b8b8" stroke-width="1.3"/></svg><span class="t" style="left:903.8px;top:482.6px;font-size:13.5px;color:#bababa;font-weight:400;">Bounds Type</span><div class="r" style="left:996.0px;top:478.4px;width:454.5px;height:22.6px;background:#3c3c3c;border-radius:5px"></div><svg class="r" style="left:1436px;top:487.9px;" width="12" height="7" viewBox="0 0 12 7"><path d="M2 1.2H9L5.5 4.9Z" fill="#d0d0d0"/></svg><svg class="r" style="left:1000px;top:396px;" width="26" height="22" viewBox="0 0 26 22"><g fill="none" stroke="#e6e6e6" stroke-linecap="round" stroke-linejoin="round"><path d="M12.9 18.3V11.4" stroke-width="2"/><path d="M12.9 11.4L9.4 9.2H5.2M12.9 11.4L16.4 9.2H20.6M9.4 9.2V6.2M16.4 9.2V6.2" stroke-width="1.5"/><path d="M7.6 4.4L9.4 6.2L10.9 4.4M15 4.4L16.4 6.2L18.2 4.4M4.6 7.6L5.2 9.2L6.2 11.2M21.2 7.6L20.6 9.2L19.6 11.2" stroke-width="1.5"/></g></svg><span class="t" style="left:1027.0px;top:401.0px;font-size:13.5px;color:#cfcfcf;font-weight:400;">Tree</span><svg class="r" style="left:1004px;top:424px;" width="17" height="16" viewBox="0 0 17 16"><path d="M8.5 1.5L16 14.5H1Z" fill="#f0f0f0"/><path d="M8.5 14.2L5.3 8.4H11.7Z" fill="#3c3c3c"/><path d="M8.5 12.6L6.9 9.6H10.1Z" fill="#f0f0f0"/></svg><span class="t" style="left:1027.0px;top:425.7px;font-size:13.5px;color:#cfcfcf;font-weight:400;">Single Mesh</span><span class="t" style="left:1002.7px;top:451.0px;font-size:13.5px;color:#cfcfcf;font-weight:400;">Mesh</span><span class="t" style="left:1002.7px;top:483.4px;font-size:14.2px;color:#cfcfcf;font-weight:400;">Automatic</span><div class="r" style="left:874.0px;top:471.5px;width:585.0px;height:1.5px;background:#232323;"></div><svg class="r" style="left:883px;top:510.0px;" width="12" height="12" viewBox="0 0 12 12"><path d="M5.5 1.3L9.9 5.7L5.5 10.1L1.1 5.7Z" fill="none" stroke="#4c4c4c" stroke-width="1.3"/></svg><span class="t" style="left:903.8px;top:508.9px;font-size:13.25px;color:#6c6c6c;font-weight:400;">Bounds Size</span><div class="r" style="left:997.0px;top:503.0px;width:86.0px;height:23.5px;background:#272727;border-radius:5px"></div><span class="t" style="left:1028.2px;top:509.3px;font-size:12.9px;color:#8a8a8a;font-weight:400;">100</span><div class="r" style="left:1087.0px;top:513.3px;width:72.0px;height:2.4px;background:#2c2c55;border-radius:1px"></div><div class="r" style="left:874.0px;top:530.5px;width:578.0px;height:1.0px;background:#313131;"></div><svg class="r" style="left:883px;top:542.8px;" width="12" height="12" viewBox="0 0 12 12"><path d="M5.5 1.3L9.9 5.7L5.5 10.1L1.1 5.7Z" fill="none" stroke="#b8b8b8" stroke-width="1.3"/></svg><span class="t" style="left:904.0px;top:541.1px;font-size:13.6px;color:#bababa;font-weight:400;">Mesh Offset Y</span><svg class="r" style="left:996px;top:542px;" width="13" height="13" viewBox="0 0 13 13"><rect x="0" y="0" width="12.2" height="12.2" rx="2" fill="#5a5ab0"/><path d="M2.8 6.2L5.1 8.5L9.6 3.8" fill="none" stroke="#ffffff" stroke-width="1.8"/></svg><div class="r" style="left:874.0px;top:562.5px;width:585.0px;height:1.0px;background:#222222;"></div><svg class="r" style="left:889px;top:572px;" width="10" height="11" viewBox="0 0 10 11"><path d="M2.8 1.8L6.6 5.5L2.8 9.2" fill="none" stroke="#b8b8b8" stroke-width="1.3"/></svg><span class="t" style="left:903.2px;top:572.6px;font-size:12.1px;color:#c8c8c8;font-weight:700;">TREE OPTIONS</span><div class="r" style="left:874.0px;top:592.8px;width:585.0px;height:1.0px;background:#313131;"></div><svg class="r" style="left:879px;top:594px;" width="70" height="36" viewBox="0 0 70 36"><g fill="none" stroke="#e4e4e4"><circle cx="17.7" cy="18" r="13.1" stroke-width="1.5"/><circle cx="51.5" cy="18" r="13.1" stroke-width="1.5"/><path d="M12 10.3H22.4Q24.8 10.3 24.8 14.2Q24.8 18.2 22.4 18.2H13.9V20.8" stroke-width="2.3"/><path d="M43.3 17.6A8.2 8.2 0 1 1 51.2 25.9" stroke-width="1.5"/></g><rect x="12.7" y="24" width="3.2" height="2.9" fill="#e4e4e4"/><path d="M47.6 26.1L52.3 23.2V28.8Z" fill="#e4e4e4"/></svg></body></html>
